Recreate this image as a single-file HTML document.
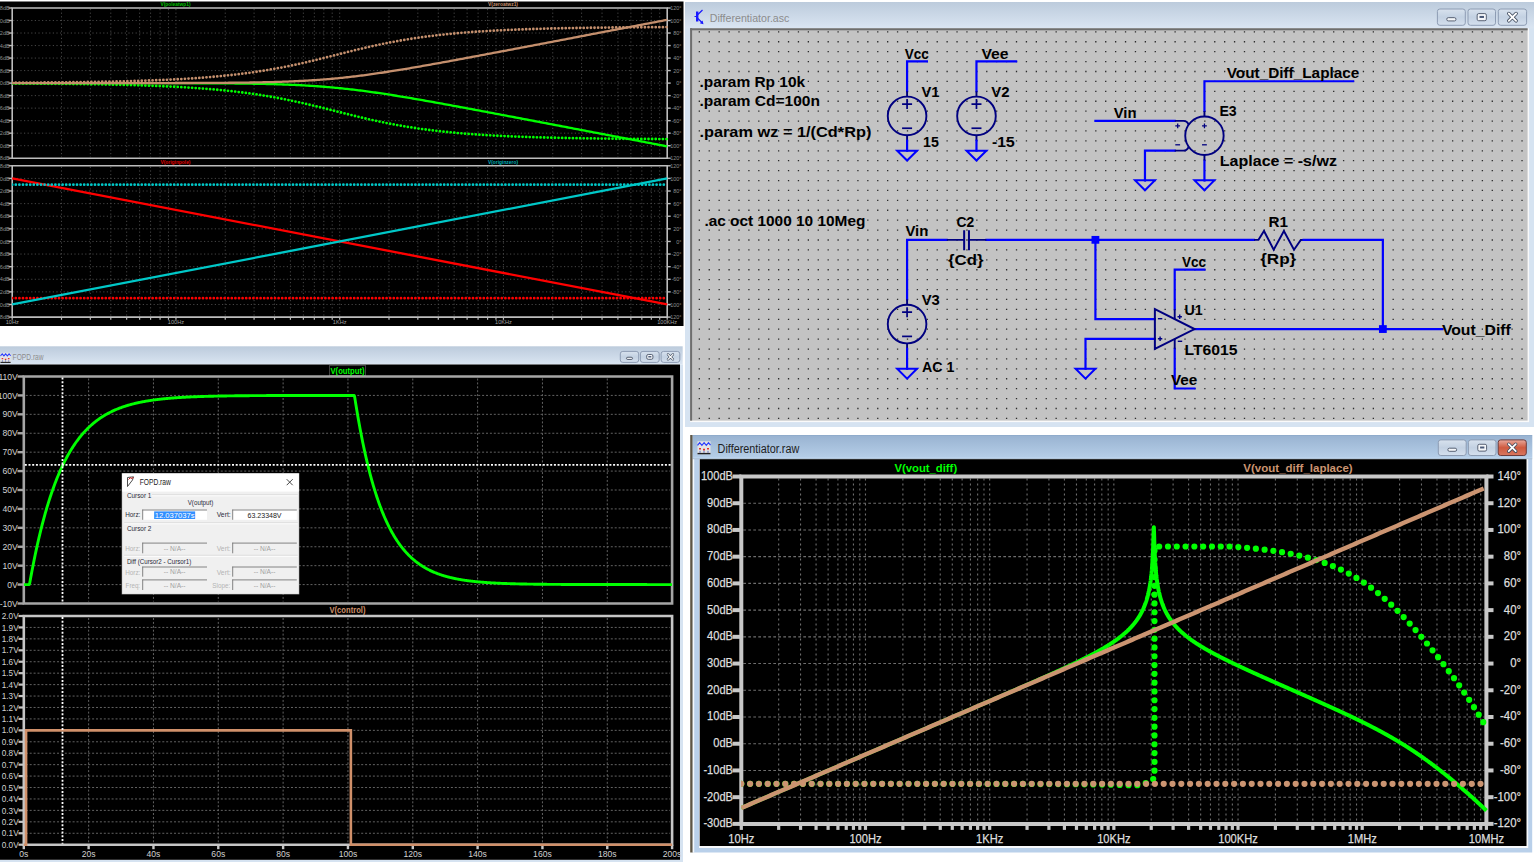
<!DOCTYPE html>
<html><head><meta charset="utf-8"><title>LTspice</title>
<style>html,body{margin:0;padding:0;background:#fff;overflow:hidden;width:1536px;height:864px}svg{display:block;font-family:"Liberation Sans",sans-serif}</style>
</head><body>
<svg width="1536" height="864" viewBox="0 0 1536 864" font-family="'Liberation Sans', sans-serif"><defs>
<linearGradient id="tb" x1="0" y1="0" x2="0" y2="1"><stop offset="0" stop-color="#bccbdc"/><stop offset="1" stop-color="#dae5f2"/></linearGradient>
<linearGradient id="tba" x1="0" y1="0" x2="0" y2="1"><stop offset="0" stop-color="#8aa7c8"/><stop offset="0.06" stop-color="#9ab4d2"/><stop offset="0.9" stop-color="#b4cde7"/><stop offset="0.94" stop-color="#bcd5ef"/><stop offset="1" stop-color="#a8b8c8"/></linearGradient>
<linearGradient id="btn" x1="0" y1="0" x2="0" y2="1"><stop offset="0" stop-color="#d8e2ee"/><stop offset="0.5" stop-color="#c3d1e2"/><stop offset="1" stop-color="#d5e0ee"/></linearGradient>
<linearGradient id="btnr" x1="0" y1="0" x2="0" y2="1"><stop offset="0" stop-color="#e9a99c"/><stop offset="0.5" stop-color="#cf5a3f"/><stop offset="1" stop-color="#d87760"/></linearGradient>
<clipPath id="cTL1"><rect x="12" y="7" width="656" height="152"/></clipPath>
<clipPath id="cTL2"><rect x="12" y="165" width="656" height="153"/></clipPath>
<clipPath id="cBR"><rect x="741" y="474" width="747" height="352"/></clipPath>
<pattern id="dots" x="698.93" y="31.69" width="9.912" height="9.912" patternUnits="userSpaceOnUse"><rect x="-0.9" y="-0.9" width="1.8" height="1.8" fill="#2b2b2b"/></pattern>
</defs>
<rect x="0" y="0" width="1536" height="864" fill="#ffffff"/>
<rect x="0" y="1.5" width="683.5" height="324.5" fill="#000000"/>
<line x1="13.2" y1="20.52" x2="666.2" y2="20.52" stroke="#4e4e4e" stroke-width="0.9" stroke-dasharray="1.2 2.4"/>
<line x1="13.2" y1="33.03" x2="666.2" y2="33.03" stroke="#4e4e4e" stroke-width="0.9" stroke-dasharray="1.2 2.4"/>
<line x1="13.2" y1="45.55" x2="666.2" y2="45.55" stroke="#4e4e4e" stroke-width="0.9" stroke-dasharray="1.2 2.4"/>
<line x1="13.2" y1="58.07" x2="666.2" y2="58.07" stroke="#4e4e4e" stroke-width="0.9" stroke-dasharray="1.2 2.4"/>
<line x1="13.2" y1="70.58" x2="666.2" y2="70.58" stroke="#4e4e4e" stroke-width="0.9" stroke-dasharray="1.2 2.4"/>
<line x1="13.2" y1="83.1" x2="666.2" y2="83.1" stroke="#4e4e4e" stroke-width="0.9" stroke-dasharray="1.2 2.4"/>
<line x1="13.2" y1="95.62" x2="666.2" y2="95.62" stroke="#4e4e4e" stroke-width="0.9" stroke-dasharray="1.2 2.4"/>
<line x1="13.2" y1="108.13" x2="666.2" y2="108.13" stroke="#4e4e4e" stroke-width="0.9" stroke-dasharray="1.2 2.4"/>
<line x1="13.2" y1="120.65" x2="666.2" y2="120.65" stroke="#4e4e4e" stroke-width="0.9" stroke-dasharray="1.2 2.4"/>
<line x1="13.2" y1="133.17" x2="666.2" y2="133.17" stroke="#4e4e4e" stroke-width="0.9" stroke-dasharray="1.2 2.4"/>
<line x1="13.2" y1="145.68" x2="666.2" y2="145.68" stroke="#4e4e4e" stroke-width="0.9" stroke-dasharray="1.2 2.4"/>
<line x1="61.49" y1="9" x2="61.49" y2="157.2" stroke="#4e4e4e" stroke-width="0.9" stroke-dasharray="1.2 2.4"/>
<line x1="90.33" y1="9" x2="90.33" y2="157.2" stroke="#4e4e4e" stroke-width="0.9" stroke-dasharray="1.2 2.4"/>
<line x1="110.79" y1="9" x2="110.79" y2="157.2" stroke="#4e4e4e" stroke-width="0.9" stroke-dasharray="1.2 2.4"/>
<line x1="126.66" y1="9" x2="126.66" y2="157.2" stroke="#4e4e4e" stroke-width="0.9" stroke-dasharray="1.2 2.4"/>
<line x1="139.62" y1="9" x2="139.62" y2="157.2" stroke="#4e4e4e" stroke-width="0.9" stroke-dasharray="1.2 2.4"/>
<line x1="150.58" y1="9" x2="150.58" y2="157.2" stroke="#4e4e4e" stroke-width="0.9" stroke-dasharray="1.2 2.4"/>
<line x1="160.08" y1="9" x2="160.08" y2="157.2" stroke="#4e4e4e" stroke-width="0.9" stroke-dasharray="1.2 2.4"/>
<line x1="168.46" y1="9" x2="168.46" y2="157.2" stroke="#4e4e4e" stroke-width="0.9" stroke-dasharray="1.2 2.4"/>
<line x1="175.95" y1="9" x2="175.95" y2="157.2" stroke="#4e4e4e" stroke-width="0.9" stroke-dasharray="1.2 2.4"/>
<line x1="225.24" y1="9" x2="225.24" y2="157.2" stroke="#4e4e4e" stroke-width="0.9" stroke-dasharray="1.2 2.4"/>
<line x1="254.08" y1="9" x2="254.08" y2="157.2" stroke="#4e4e4e" stroke-width="0.9" stroke-dasharray="1.2 2.4"/>
<line x1="274.54" y1="9" x2="274.54" y2="157.2" stroke="#4e4e4e" stroke-width="0.9" stroke-dasharray="1.2 2.4"/>
<line x1="290.41" y1="9" x2="290.41" y2="157.2" stroke="#4e4e4e" stroke-width="0.9" stroke-dasharray="1.2 2.4"/>
<line x1="303.37" y1="9" x2="303.37" y2="157.2" stroke="#4e4e4e" stroke-width="0.9" stroke-dasharray="1.2 2.4"/>
<line x1="314.33" y1="9" x2="314.33" y2="157.2" stroke="#4e4e4e" stroke-width="0.9" stroke-dasharray="1.2 2.4"/>
<line x1="323.83" y1="9" x2="323.83" y2="157.2" stroke="#4e4e4e" stroke-width="0.9" stroke-dasharray="1.2 2.4"/>
<line x1="332.21" y1="9" x2="332.21" y2="157.2" stroke="#4e4e4e" stroke-width="0.9" stroke-dasharray="1.2 2.4"/>
<line x1="339.7" y1="9" x2="339.7" y2="157.2" stroke="#4e4e4e" stroke-width="0.9" stroke-dasharray="1.2 2.4"/>
<line x1="388.99" y1="9" x2="388.99" y2="157.2" stroke="#4e4e4e" stroke-width="0.9" stroke-dasharray="1.2 2.4"/>
<line x1="417.83" y1="9" x2="417.83" y2="157.2" stroke="#4e4e4e" stroke-width="0.9" stroke-dasharray="1.2 2.4"/>
<line x1="438.29" y1="9" x2="438.29" y2="157.2" stroke="#4e4e4e" stroke-width="0.9" stroke-dasharray="1.2 2.4"/>
<line x1="454.16" y1="9" x2="454.16" y2="157.2" stroke="#4e4e4e" stroke-width="0.9" stroke-dasharray="1.2 2.4"/>
<line x1="467.12" y1="9" x2="467.12" y2="157.2" stroke="#4e4e4e" stroke-width="0.9" stroke-dasharray="1.2 2.4"/>
<line x1="478.08" y1="9" x2="478.08" y2="157.2" stroke="#4e4e4e" stroke-width="0.9" stroke-dasharray="1.2 2.4"/>
<line x1="487.58" y1="9" x2="487.58" y2="157.2" stroke="#4e4e4e" stroke-width="0.9" stroke-dasharray="1.2 2.4"/>
<line x1="495.96" y1="9" x2="495.96" y2="157.2" stroke="#4e4e4e" stroke-width="0.9" stroke-dasharray="1.2 2.4"/>
<line x1="503.45" y1="9" x2="503.45" y2="157.2" stroke="#4e4e4e" stroke-width="0.9" stroke-dasharray="1.2 2.4"/>
<line x1="552.74" y1="9" x2="552.74" y2="157.2" stroke="#4e4e4e" stroke-width="0.9" stroke-dasharray="1.2 2.4"/>
<line x1="581.58" y1="9" x2="581.58" y2="157.2" stroke="#4e4e4e" stroke-width="0.9" stroke-dasharray="1.2 2.4"/>
<line x1="602.04" y1="9" x2="602.04" y2="157.2" stroke="#4e4e4e" stroke-width="0.9" stroke-dasharray="1.2 2.4"/>
<line x1="617.91" y1="9" x2="617.91" y2="157.2" stroke="#4e4e4e" stroke-width="0.9" stroke-dasharray="1.2 2.4"/>
<line x1="630.87" y1="9" x2="630.87" y2="157.2" stroke="#4e4e4e" stroke-width="0.9" stroke-dasharray="1.2 2.4"/>
<line x1="641.83" y1="9" x2="641.83" y2="157.2" stroke="#4e4e4e" stroke-width="0.9" stroke-dasharray="1.2 2.4"/>
<line x1="651.33" y1="9" x2="651.33" y2="157.2" stroke="#4e4e4e" stroke-width="0.9" stroke-dasharray="1.2 2.4"/>
<line x1="659.71" y1="9" x2="659.71" y2="157.2" stroke="#4e4e4e" stroke-width="0.9" stroke-dasharray="1.2 2.4"/>
<path d="M12.2,8 H667.2 V158.2 H12.2 Z" fill="none" stroke="#bdbdbd" stroke-width="1.6"/>
<line x1="8.5" y1="8" x2="12.2" y2="8" stroke="#bdbdbd" stroke-width="1.4"/>
<line x1="667.2" y1="8" x2="670.7" y2="8" stroke="#bdbdbd" stroke-width="1.4"/>
<line x1="8.5" y1="20.52" x2="12.2" y2="20.52" stroke="#bdbdbd" stroke-width="1.4"/>
<line x1="667.2" y1="20.52" x2="670.7" y2="20.52" stroke="#bdbdbd" stroke-width="1.4"/>
<line x1="8.5" y1="33.03" x2="12.2" y2="33.03" stroke="#bdbdbd" stroke-width="1.4"/>
<line x1="667.2" y1="33.03" x2="670.7" y2="33.03" stroke="#bdbdbd" stroke-width="1.4"/>
<line x1="8.5" y1="45.55" x2="12.2" y2="45.55" stroke="#bdbdbd" stroke-width="1.4"/>
<line x1="667.2" y1="45.55" x2="670.7" y2="45.55" stroke="#bdbdbd" stroke-width="1.4"/>
<line x1="8.5" y1="58.07" x2="12.2" y2="58.07" stroke="#bdbdbd" stroke-width="1.4"/>
<line x1="667.2" y1="58.07" x2="670.7" y2="58.07" stroke="#bdbdbd" stroke-width="1.4"/>
<line x1="8.5" y1="70.58" x2="12.2" y2="70.58" stroke="#bdbdbd" stroke-width="1.4"/>
<line x1="667.2" y1="70.58" x2="670.7" y2="70.58" stroke="#bdbdbd" stroke-width="1.4"/>
<line x1="8.5" y1="83.1" x2="12.2" y2="83.1" stroke="#bdbdbd" stroke-width="1.4"/>
<line x1="667.2" y1="83.1" x2="670.7" y2="83.1" stroke="#bdbdbd" stroke-width="1.4"/>
<line x1="8.5" y1="95.62" x2="12.2" y2="95.62" stroke="#bdbdbd" stroke-width="1.4"/>
<line x1="667.2" y1="95.62" x2="670.7" y2="95.62" stroke="#bdbdbd" stroke-width="1.4"/>
<line x1="8.5" y1="108.13" x2="12.2" y2="108.13" stroke="#bdbdbd" stroke-width="1.4"/>
<line x1="667.2" y1="108.13" x2="670.7" y2="108.13" stroke="#bdbdbd" stroke-width="1.4"/>
<line x1="8.5" y1="120.65" x2="12.2" y2="120.65" stroke="#bdbdbd" stroke-width="1.4"/>
<line x1="667.2" y1="120.65" x2="670.7" y2="120.65" stroke="#bdbdbd" stroke-width="1.4"/>
<line x1="8.5" y1="133.17" x2="12.2" y2="133.17" stroke="#bdbdbd" stroke-width="1.4"/>
<line x1="667.2" y1="133.17" x2="670.7" y2="133.17" stroke="#bdbdbd" stroke-width="1.4"/>
<line x1="8.5" y1="145.68" x2="12.2" y2="145.68" stroke="#bdbdbd" stroke-width="1.4"/>
<line x1="667.2" y1="145.68" x2="670.7" y2="145.68" stroke="#bdbdbd" stroke-width="1.4"/>
<line x1="8.5" y1="158.2" x2="12.2" y2="158.2" stroke="#bdbdbd" stroke-width="1.4"/>
<line x1="667.2" y1="158.2" x2="670.7" y2="158.2" stroke="#bdbdbd" stroke-width="1.4"/>
<line x1="13.2" y1="178.41" x2="666.2" y2="178.41" stroke="#4e4e4e" stroke-width="0.9" stroke-dasharray="1.2 2.4"/>
<line x1="13.2" y1="191.02" x2="666.2" y2="191.02" stroke="#4e4e4e" stroke-width="0.9" stroke-dasharray="1.2 2.4"/>
<line x1="13.2" y1="203.62" x2="666.2" y2="203.62" stroke="#4e4e4e" stroke-width="0.9" stroke-dasharray="1.2 2.4"/>
<line x1="13.2" y1="216.23" x2="666.2" y2="216.23" stroke="#4e4e4e" stroke-width="0.9" stroke-dasharray="1.2 2.4"/>
<line x1="13.2" y1="228.84" x2="666.2" y2="228.84" stroke="#4e4e4e" stroke-width="0.9" stroke-dasharray="1.2 2.4"/>
<line x1="13.2" y1="241.45" x2="666.2" y2="241.45" stroke="#4e4e4e" stroke-width="0.9" stroke-dasharray="1.2 2.4"/>
<line x1="13.2" y1="254.06" x2="666.2" y2="254.06" stroke="#4e4e4e" stroke-width="0.9" stroke-dasharray="1.2 2.4"/>
<line x1="13.2" y1="266.67" x2="666.2" y2="266.67" stroke="#4e4e4e" stroke-width="0.9" stroke-dasharray="1.2 2.4"/>
<line x1="13.2" y1="279.28" x2="666.2" y2="279.28" stroke="#4e4e4e" stroke-width="0.9" stroke-dasharray="1.2 2.4"/>
<line x1="13.2" y1="291.88" x2="666.2" y2="291.88" stroke="#4e4e4e" stroke-width="0.9" stroke-dasharray="1.2 2.4"/>
<line x1="13.2" y1="304.49" x2="666.2" y2="304.49" stroke="#4e4e4e" stroke-width="0.9" stroke-dasharray="1.2 2.4"/>
<line x1="61.49" y1="166.8" x2="61.49" y2="316.1" stroke="#4e4e4e" stroke-width="0.9" stroke-dasharray="1.2 2.4"/>
<line x1="90.33" y1="166.8" x2="90.33" y2="316.1" stroke="#4e4e4e" stroke-width="0.9" stroke-dasharray="1.2 2.4"/>
<line x1="110.79" y1="166.8" x2="110.79" y2="316.1" stroke="#4e4e4e" stroke-width="0.9" stroke-dasharray="1.2 2.4"/>
<line x1="126.66" y1="166.8" x2="126.66" y2="316.1" stroke="#4e4e4e" stroke-width="0.9" stroke-dasharray="1.2 2.4"/>
<line x1="139.62" y1="166.8" x2="139.62" y2="316.1" stroke="#4e4e4e" stroke-width="0.9" stroke-dasharray="1.2 2.4"/>
<line x1="150.58" y1="166.8" x2="150.58" y2="316.1" stroke="#4e4e4e" stroke-width="0.9" stroke-dasharray="1.2 2.4"/>
<line x1="160.08" y1="166.8" x2="160.08" y2="316.1" stroke="#4e4e4e" stroke-width="0.9" stroke-dasharray="1.2 2.4"/>
<line x1="168.46" y1="166.8" x2="168.46" y2="316.1" stroke="#4e4e4e" stroke-width="0.9" stroke-dasharray="1.2 2.4"/>
<line x1="175.95" y1="166.8" x2="175.95" y2="316.1" stroke="#4e4e4e" stroke-width="0.9" stroke-dasharray="1.2 2.4"/>
<line x1="225.24" y1="166.8" x2="225.24" y2="316.1" stroke="#4e4e4e" stroke-width="0.9" stroke-dasharray="1.2 2.4"/>
<line x1="254.08" y1="166.8" x2="254.08" y2="316.1" stroke="#4e4e4e" stroke-width="0.9" stroke-dasharray="1.2 2.4"/>
<line x1="274.54" y1="166.8" x2="274.54" y2="316.1" stroke="#4e4e4e" stroke-width="0.9" stroke-dasharray="1.2 2.4"/>
<line x1="290.41" y1="166.8" x2="290.41" y2="316.1" stroke="#4e4e4e" stroke-width="0.9" stroke-dasharray="1.2 2.4"/>
<line x1="303.37" y1="166.8" x2="303.37" y2="316.1" stroke="#4e4e4e" stroke-width="0.9" stroke-dasharray="1.2 2.4"/>
<line x1="314.33" y1="166.8" x2="314.33" y2="316.1" stroke="#4e4e4e" stroke-width="0.9" stroke-dasharray="1.2 2.4"/>
<line x1="323.83" y1="166.8" x2="323.83" y2="316.1" stroke="#4e4e4e" stroke-width="0.9" stroke-dasharray="1.2 2.4"/>
<line x1="332.21" y1="166.8" x2="332.21" y2="316.1" stroke="#4e4e4e" stroke-width="0.9" stroke-dasharray="1.2 2.4"/>
<line x1="339.7" y1="166.8" x2="339.7" y2="316.1" stroke="#4e4e4e" stroke-width="0.9" stroke-dasharray="1.2 2.4"/>
<line x1="388.99" y1="166.8" x2="388.99" y2="316.1" stroke="#4e4e4e" stroke-width="0.9" stroke-dasharray="1.2 2.4"/>
<line x1="417.83" y1="166.8" x2="417.83" y2="316.1" stroke="#4e4e4e" stroke-width="0.9" stroke-dasharray="1.2 2.4"/>
<line x1="438.29" y1="166.8" x2="438.29" y2="316.1" stroke="#4e4e4e" stroke-width="0.9" stroke-dasharray="1.2 2.4"/>
<line x1="454.16" y1="166.8" x2="454.16" y2="316.1" stroke="#4e4e4e" stroke-width="0.9" stroke-dasharray="1.2 2.4"/>
<line x1="467.12" y1="166.8" x2="467.12" y2="316.1" stroke="#4e4e4e" stroke-width="0.9" stroke-dasharray="1.2 2.4"/>
<line x1="478.08" y1="166.8" x2="478.08" y2="316.1" stroke="#4e4e4e" stroke-width="0.9" stroke-dasharray="1.2 2.4"/>
<line x1="487.58" y1="166.8" x2="487.58" y2="316.1" stroke="#4e4e4e" stroke-width="0.9" stroke-dasharray="1.2 2.4"/>
<line x1="495.96" y1="166.8" x2="495.96" y2="316.1" stroke="#4e4e4e" stroke-width="0.9" stroke-dasharray="1.2 2.4"/>
<line x1="503.45" y1="166.8" x2="503.45" y2="316.1" stroke="#4e4e4e" stroke-width="0.9" stroke-dasharray="1.2 2.4"/>
<line x1="552.74" y1="166.8" x2="552.74" y2="316.1" stroke="#4e4e4e" stroke-width="0.9" stroke-dasharray="1.2 2.4"/>
<line x1="581.58" y1="166.8" x2="581.58" y2="316.1" stroke="#4e4e4e" stroke-width="0.9" stroke-dasharray="1.2 2.4"/>
<line x1="602.04" y1="166.8" x2="602.04" y2="316.1" stroke="#4e4e4e" stroke-width="0.9" stroke-dasharray="1.2 2.4"/>
<line x1="617.91" y1="166.8" x2="617.91" y2="316.1" stroke="#4e4e4e" stroke-width="0.9" stroke-dasharray="1.2 2.4"/>
<line x1="630.87" y1="166.8" x2="630.87" y2="316.1" stroke="#4e4e4e" stroke-width="0.9" stroke-dasharray="1.2 2.4"/>
<line x1="641.83" y1="166.8" x2="641.83" y2="316.1" stroke="#4e4e4e" stroke-width="0.9" stroke-dasharray="1.2 2.4"/>
<line x1="651.33" y1="166.8" x2="651.33" y2="316.1" stroke="#4e4e4e" stroke-width="0.9" stroke-dasharray="1.2 2.4"/>
<line x1="659.71" y1="166.8" x2="659.71" y2="316.1" stroke="#4e4e4e" stroke-width="0.9" stroke-dasharray="1.2 2.4"/>
<path d="M12.2,165.8 H667.2 V317.1 H12.2 Z" fill="none" stroke="#bdbdbd" stroke-width="1.6"/>
<line x1="8.5" y1="165.8" x2="12.2" y2="165.8" stroke="#bdbdbd" stroke-width="1.4"/>
<line x1="667.2" y1="165.8" x2="670.7" y2="165.8" stroke="#bdbdbd" stroke-width="1.4"/>
<line x1="8.5" y1="178.41" x2="12.2" y2="178.41" stroke="#bdbdbd" stroke-width="1.4"/>
<line x1="667.2" y1="178.41" x2="670.7" y2="178.41" stroke="#bdbdbd" stroke-width="1.4"/>
<line x1="8.5" y1="191.02" x2="12.2" y2="191.02" stroke="#bdbdbd" stroke-width="1.4"/>
<line x1="667.2" y1="191.02" x2="670.7" y2="191.02" stroke="#bdbdbd" stroke-width="1.4"/>
<line x1="8.5" y1="203.62" x2="12.2" y2="203.62" stroke="#bdbdbd" stroke-width="1.4"/>
<line x1="667.2" y1="203.62" x2="670.7" y2="203.62" stroke="#bdbdbd" stroke-width="1.4"/>
<line x1="8.5" y1="216.23" x2="12.2" y2="216.23" stroke="#bdbdbd" stroke-width="1.4"/>
<line x1="667.2" y1="216.23" x2="670.7" y2="216.23" stroke="#bdbdbd" stroke-width="1.4"/>
<line x1="8.5" y1="228.84" x2="12.2" y2="228.84" stroke="#bdbdbd" stroke-width="1.4"/>
<line x1="667.2" y1="228.84" x2="670.7" y2="228.84" stroke="#bdbdbd" stroke-width="1.4"/>
<line x1="8.5" y1="241.45" x2="12.2" y2="241.45" stroke="#bdbdbd" stroke-width="1.4"/>
<line x1="667.2" y1="241.45" x2="670.7" y2="241.45" stroke="#bdbdbd" stroke-width="1.4"/>
<line x1="8.5" y1="254.06" x2="12.2" y2="254.06" stroke="#bdbdbd" stroke-width="1.4"/>
<line x1="667.2" y1="254.06" x2="670.7" y2="254.06" stroke="#bdbdbd" stroke-width="1.4"/>
<line x1="8.5" y1="266.67" x2="12.2" y2="266.67" stroke="#bdbdbd" stroke-width="1.4"/>
<line x1="667.2" y1="266.67" x2="670.7" y2="266.67" stroke="#bdbdbd" stroke-width="1.4"/>
<line x1="8.5" y1="279.28" x2="12.2" y2="279.28" stroke="#bdbdbd" stroke-width="1.4"/>
<line x1="667.2" y1="279.28" x2="670.7" y2="279.28" stroke="#bdbdbd" stroke-width="1.4"/>
<line x1="8.5" y1="291.88" x2="12.2" y2="291.88" stroke="#bdbdbd" stroke-width="1.4"/>
<line x1="667.2" y1="291.88" x2="670.7" y2="291.88" stroke="#bdbdbd" stroke-width="1.4"/>
<line x1="8.5" y1="304.49" x2="12.2" y2="304.49" stroke="#bdbdbd" stroke-width="1.4"/>
<line x1="667.2" y1="304.49" x2="670.7" y2="304.49" stroke="#bdbdbd" stroke-width="1.4"/>
<line x1="8.5" y1="317.1" x2="12.2" y2="317.1" stroke="#bdbdbd" stroke-width="1.4"/>
<line x1="667.2" y1="317.1" x2="670.7" y2="317.1" stroke="#bdbdbd" stroke-width="1.4"/>
<line x1="12.2" y1="317.1" x2="12.2" y2="319.8" stroke="#bdbdbd" stroke-width="1.2"/>
<line x1="61.49" y1="317.1" x2="61.49" y2="319.8" stroke="#bdbdbd" stroke-width="1.2"/>
<line x1="90.33" y1="317.1" x2="90.33" y2="319.8" stroke="#bdbdbd" stroke-width="1.2"/>
<line x1="110.79" y1="317.1" x2="110.79" y2="319.8" stroke="#bdbdbd" stroke-width="1.2"/>
<line x1="126.66" y1="317.1" x2="126.66" y2="319.8" stroke="#bdbdbd" stroke-width="1.2"/>
<line x1="139.62" y1="317.1" x2="139.62" y2="319.8" stroke="#bdbdbd" stroke-width="1.2"/>
<line x1="150.58" y1="317.1" x2="150.58" y2="319.8" stroke="#bdbdbd" stroke-width="1.2"/>
<line x1="160.08" y1="317.1" x2="160.08" y2="319.8" stroke="#bdbdbd" stroke-width="1.2"/>
<line x1="168.46" y1="317.1" x2="168.46" y2="319.8" stroke="#bdbdbd" stroke-width="1.2"/>
<line x1="175.95" y1="317.1" x2="175.95" y2="319.8" stroke="#bdbdbd" stroke-width="1.2"/>
<line x1="225.24" y1="317.1" x2="225.24" y2="319.8" stroke="#bdbdbd" stroke-width="1.2"/>
<line x1="254.08" y1="317.1" x2="254.08" y2="319.8" stroke="#bdbdbd" stroke-width="1.2"/>
<line x1="274.54" y1="317.1" x2="274.54" y2="319.8" stroke="#bdbdbd" stroke-width="1.2"/>
<line x1="290.41" y1="317.1" x2="290.41" y2="319.8" stroke="#bdbdbd" stroke-width="1.2"/>
<line x1="303.37" y1="317.1" x2="303.37" y2="319.8" stroke="#bdbdbd" stroke-width="1.2"/>
<line x1="314.33" y1="317.1" x2="314.33" y2="319.8" stroke="#bdbdbd" stroke-width="1.2"/>
<line x1="323.83" y1="317.1" x2="323.83" y2="319.8" stroke="#bdbdbd" stroke-width="1.2"/>
<line x1="332.21" y1="317.1" x2="332.21" y2="319.8" stroke="#bdbdbd" stroke-width="1.2"/>
<line x1="339.7" y1="317.1" x2="339.7" y2="319.8" stroke="#bdbdbd" stroke-width="1.2"/>
<line x1="388.99" y1="317.1" x2="388.99" y2="319.8" stroke="#bdbdbd" stroke-width="1.2"/>
<line x1="417.83" y1="317.1" x2="417.83" y2="319.8" stroke="#bdbdbd" stroke-width="1.2"/>
<line x1="438.29" y1="317.1" x2="438.29" y2="319.8" stroke="#bdbdbd" stroke-width="1.2"/>
<line x1="454.16" y1="317.1" x2="454.16" y2="319.8" stroke="#bdbdbd" stroke-width="1.2"/>
<line x1="467.12" y1="317.1" x2="467.12" y2="319.8" stroke="#bdbdbd" stroke-width="1.2"/>
<line x1="478.08" y1="317.1" x2="478.08" y2="319.8" stroke="#bdbdbd" stroke-width="1.2"/>
<line x1="487.58" y1="317.1" x2="487.58" y2="319.8" stroke="#bdbdbd" stroke-width="1.2"/>
<line x1="495.96" y1="317.1" x2="495.96" y2="319.8" stroke="#bdbdbd" stroke-width="1.2"/>
<line x1="503.45" y1="317.1" x2="503.45" y2="319.8" stroke="#bdbdbd" stroke-width="1.2"/>
<line x1="552.74" y1="317.1" x2="552.74" y2="319.8" stroke="#bdbdbd" stroke-width="1.2"/>
<line x1="581.58" y1="317.1" x2="581.58" y2="319.8" stroke="#bdbdbd" stroke-width="1.2"/>
<line x1="602.04" y1="317.1" x2="602.04" y2="319.8" stroke="#bdbdbd" stroke-width="1.2"/>
<line x1="617.91" y1="317.1" x2="617.91" y2="319.8" stroke="#bdbdbd" stroke-width="1.2"/>
<line x1="630.87" y1="317.1" x2="630.87" y2="319.8" stroke="#bdbdbd" stroke-width="1.2"/>
<line x1="641.83" y1="317.1" x2="641.83" y2="319.8" stroke="#bdbdbd" stroke-width="1.2"/>
<line x1="651.33" y1="317.1" x2="651.33" y2="319.8" stroke="#bdbdbd" stroke-width="1.2"/>
<line x1="659.71" y1="317.1" x2="659.71" y2="319.8" stroke="#bdbdbd" stroke-width="1.2"/>
<line x1="667.2" y1="317.1" x2="667.2" y2="319.8" stroke="#bdbdbd" stroke-width="1.2"/>
<text x="9.8" y="10.1" font-size="5.6" fill="#8e8e8e" text-anchor="end">48dB</text>
<text x="681.5" y="10.1" font-size="5.4" fill="#8e8e8e" text-anchor="end">120°</text>
<text x="9.8" y="22.62" font-size="5.6" fill="#8e8e8e" text-anchor="end">40dB</text>
<text x="681.5" y="22.62" font-size="5.4" fill="#8e8e8e" text-anchor="end">100°</text>
<text x="9.8" y="35.13" font-size="5.6" fill="#8e8e8e" text-anchor="end">32dB</text>
<text x="681.5" y="35.13" font-size="5.4" fill="#8e8e8e" text-anchor="end">80°</text>
<text x="9.8" y="47.65" font-size="5.6" fill="#8e8e8e" text-anchor="end">24dB</text>
<text x="681.5" y="47.65" font-size="5.4" fill="#8e8e8e" text-anchor="end">60°</text>
<text x="9.8" y="60.17" font-size="5.6" fill="#8e8e8e" text-anchor="end">16dB</text>
<text x="681.5" y="60.17" font-size="5.4" fill="#8e8e8e" text-anchor="end">40°</text>
<text x="9.8" y="72.68" font-size="5.6" fill="#8e8e8e" text-anchor="end">8dB</text>
<text x="681.5" y="72.68" font-size="5.4" fill="#8e8e8e" text-anchor="end">20°</text>
<text x="9.8" y="85.2" font-size="5.6" fill="#8e8e8e" text-anchor="end">0dB</text>
<text x="681.5" y="85.2" font-size="5.4" fill="#8e8e8e" text-anchor="end">0°</text>
<text x="9.8" y="97.72" font-size="5.6" fill="#8e8e8e" text-anchor="end">-8dB</text>
<text x="681.5" y="97.72" font-size="5.4" fill="#8e8e8e" text-anchor="end">-20°</text>
<text x="9.8" y="110.23" font-size="5.6" fill="#8e8e8e" text-anchor="end">-16dB</text>
<text x="681.5" y="110.23" font-size="5.4" fill="#8e8e8e" text-anchor="end">-40°</text>
<text x="9.8" y="122.75" font-size="5.6" fill="#8e8e8e" text-anchor="end">-24dB</text>
<text x="681.5" y="122.75" font-size="5.4" fill="#8e8e8e" text-anchor="end">-60°</text>
<text x="9.8" y="135.27" font-size="5.6" fill="#8e8e8e" text-anchor="end">-32dB</text>
<text x="681.5" y="135.27" font-size="5.4" fill="#8e8e8e" text-anchor="end">-80°</text>
<text x="9.8" y="147.78" font-size="5.6" fill="#8e8e8e" text-anchor="end">-40dB</text>
<text x="681.5" y="147.78" font-size="5.4" fill="#8e8e8e" text-anchor="end">-100°</text>
<text x="9.8" y="160.3" font-size="5.6" fill="#8e8e8e" text-anchor="end">-48dB</text>
<text x="681.5" y="160.3" font-size="5.4" fill="#8e8e8e" text-anchor="end">-120°</text>
<text x="9.8" y="167.9" font-size="5.6" fill="#8e8e8e" text-anchor="end">48dB</text>
<text x="681.5" y="167.9" font-size="5.4" fill="#8e8e8e" text-anchor="end">120°</text>
<text x="9.8" y="180.51" font-size="5.6" fill="#8e8e8e" text-anchor="end">40dB</text>
<text x="681.5" y="180.51" font-size="5.4" fill="#8e8e8e" text-anchor="end">100°</text>
<text x="9.8" y="193.12" font-size="5.6" fill="#8e8e8e" text-anchor="end">32dB</text>
<text x="681.5" y="193.12" font-size="5.4" fill="#8e8e8e" text-anchor="end">80°</text>
<text x="9.8" y="205.72" font-size="5.6" fill="#8e8e8e" text-anchor="end">24dB</text>
<text x="681.5" y="205.72" font-size="5.4" fill="#8e8e8e" text-anchor="end">60°</text>
<text x="9.8" y="218.33" font-size="5.6" fill="#8e8e8e" text-anchor="end">16dB</text>
<text x="681.5" y="218.33" font-size="5.4" fill="#8e8e8e" text-anchor="end">40°</text>
<text x="9.8" y="230.94" font-size="5.6" fill="#8e8e8e" text-anchor="end">8dB</text>
<text x="681.5" y="230.94" font-size="5.4" fill="#8e8e8e" text-anchor="end">20°</text>
<text x="9.8" y="243.55" font-size="5.6" fill="#8e8e8e" text-anchor="end">0dB</text>
<text x="681.5" y="243.55" font-size="5.4" fill="#8e8e8e" text-anchor="end">0°</text>
<text x="9.8" y="256.16" font-size="5.6" fill="#8e8e8e" text-anchor="end">-8dB</text>
<text x="681.5" y="256.16" font-size="5.4" fill="#8e8e8e" text-anchor="end">-20°</text>
<text x="9.8" y="268.77" font-size="5.6" fill="#8e8e8e" text-anchor="end">-16dB</text>
<text x="681.5" y="268.77" font-size="5.4" fill="#8e8e8e" text-anchor="end">-40°</text>
<text x="9.8" y="281.38" font-size="5.6" fill="#8e8e8e" text-anchor="end">-24dB</text>
<text x="681.5" y="281.38" font-size="5.4" fill="#8e8e8e" text-anchor="end">-60°</text>
<text x="9.8" y="293.98" font-size="5.6" fill="#8e8e8e" text-anchor="end">-32dB</text>
<text x="681.5" y="293.98" font-size="5.4" fill="#8e8e8e" text-anchor="end">-80°</text>
<text x="9.8" y="306.59" font-size="5.6" fill="#8e8e8e" text-anchor="end">-40dB</text>
<text x="681.5" y="306.59" font-size="5.4" fill="#8e8e8e" text-anchor="end">-100°</text>
<text x="9.8" y="319.2" font-size="5.6" fill="#8e8e8e" text-anchor="end">-48dB</text>
<text x="681.5" y="319.2" font-size="5.4" fill="#8e8e8e" text-anchor="end">-120°</text>
<text x="12.2" y="324" font-size="5.6" fill="#a0a0a0" text-anchor="middle">10Hz</text>
<text x="175.95" y="324" font-size="5.6" fill="#a0a0a0" text-anchor="middle">100Hz</text>
<text x="339.7" y="324" font-size="5.6" fill="#a0a0a0" text-anchor="middle">1KHz</text>
<text x="503.45" y="324" font-size="5.6" fill="#a0a0a0" text-anchor="middle">10KHz</text>
<text x="667.2" y="324" font-size="5.6" fill="#a0a0a0" text-anchor="middle">100KHz</text>
<text x="175.5" y="6.2" font-size="5.8" fill="#00c000" text-anchor="middle" font-weight="bold" textLength="30" lengthAdjust="spacingAndGlyphs">V(poleatwp1)</text>
<text x="503" y="6.2" font-size="5.8" fill="#c89270" text-anchor="middle" font-weight="bold" textLength="30" lengthAdjust="spacingAndGlyphs">V(zeroatwz1)</text>
<text x="175.5" y="164.2" font-size="5.8" fill="#e00000" text-anchor="middle" font-weight="bold" textLength="30" lengthAdjust="spacingAndGlyphs">V(originpole)</text>
<text x="503" y="164.2" font-size="5.8" fill="#00b0b8" text-anchor="middle" font-weight="bold" textLength="30" lengthAdjust="spacingAndGlyphs">V(originzero)</text>
<g clip-path="url(#cTL1)">
<path d="M12.2,83.1 13.84,83.1 15.48,83.1 17.12,83.1 18.77,83.1 20.41,83.1 22.05,83.1 23.69,83.1 25.33,83.1 26.97,83.1 28.62,83.1 30.26,83.1 31.9,83.1 33.54,83.1 35.18,83.1 36.82,83.1 38.47,83.1 40.11,83.1 41.75,83.1 43.39,83.1 45.03,83.1 46.67,83.1 48.32,83.1 49.96,83.1 51.6,83.1 53.24,83.1 54.88,83.1 56.52,83.1 58.16,83.1 59.81,83.1 61.45,83.1 63.09,83.1 64.73,83.1 66.37,83.1 68.01,83.1 69.66,83.1 71.3,83.1 72.94,83.1 74.58,83.1 76.22,83.1 77.86,83.1 79.51,83.1 81.15,83.11 82.79,83.11 84.43,83.11 86.07,83.11 87.71,83.11 89.36,83.11 91,83.11 92.64,83.11 94.28,83.11 95.92,83.11 97.56,83.11 99.21,83.11 100.85,83.11 102.49,83.11 104.13,83.11 105.77,83.11 107.41,83.11 109.05,83.11 110.7,83.11 112.34,83.11 113.98,83.11 115.62,83.11 117.26,83.11 118.9,83.12 120.55,83.12 122.19,83.12 123.83,83.12 125.47,83.12 127.11,83.12 128.75,83.12 130.4,83.12 132.04,83.12 133.68,83.12 135.32,83.12 136.96,83.13 138.6,83.13 140.25,83.13 141.89,83.13 143.53,83.13 145.17,83.13 146.81,83.13 148.45,83.13 150.09,83.14 151.74,83.14 153.38,83.14 155.02,83.14 156.66,83.14 158.3,83.15 159.94,83.15 161.59,83.15 163.23,83.15 164.87,83.15 166.51,83.16 168.15,83.16 169.79,83.16 171.44,83.17 173.08,83.17 174.72,83.17 176.36,83.18 178,83.18 179.64,83.18 181.29,83.19 182.93,83.19 184.57,83.2 186.21,83.2 187.85,83.2 189.49,83.21 191.13,83.21 192.78,83.22 194.42,83.23 196.06,83.23 197.7,83.24 199.34,83.24 200.98,83.25 202.63,83.26 204.27,83.26 205.91,83.27 207.55,83.28 209.19,83.29 210.83,83.3 212.48,83.31 214.12,83.32 215.76,83.33 217.4,83.34 219.04,83.35 220.68,83.36 222.33,83.37 223.97,83.38 225.61,83.4 227.25,83.41 228.89,83.43 230.53,83.44 232.17,83.46 233.82,83.47 235.46,83.49 237.1,83.51 238.74,83.53 240.38,83.55 242.02,83.57 243.67,83.59 245.31,83.61 246.95,83.63 248.59,83.66 250.23,83.68 251.87,83.71 253.52,83.74 255.16,83.76 256.8,83.79 258.44,83.83 260.08,83.86 261.72,83.89 263.37,83.93 265.01,83.96 266.65,84 268.29,84.04 269.93,84.08 271.57,84.13 273.22,84.17 274.86,84.22 276.5,84.27 278.14,84.32 279.78,84.37 281.42,84.42 283.06,84.48 284.71,84.54 286.35,84.6 287.99,84.66 289.63,84.73 291.27,84.8 292.91,84.87 294.56,84.94 296.2,85.02 297.84,85.1 299.48,85.18 301.12,85.26 302.76,85.35 304.41,85.44 306.05,85.53 307.69,85.63 309.33,85.73 310.97,85.83 312.61,85.93 314.26,86.04 315.9,86.15 317.54,86.27 319.18,86.39 320.82,86.51 322.46,86.63 324.1,86.76 325.75,86.9 327.39,87.03 329.03,87.17 330.67,87.32 332.31,87.46 333.95,87.61 335.6,87.77 337.24,87.92 338.88,88.09 340.52,88.25 342.16,88.42 343.8,88.59 345.45,88.77 347.09,88.95 348.73,89.13 350.37,89.31 352.01,89.5 353.65,89.7 355.3,89.89 356.94,90.09 358.58,90.3 360.22,90.5 361.86,90.71 363.5,90.93 365.14,91.14 366.79,91.36 368.43,91.58 370.07,91.81 371.71,92.04 373.35,92.27 374.99,92.5 376.64,92.74 378.28,92.98 379.92,93.22 381.56,93.46 383.2,93.71 384.84,93.96 386.49,94.21 388.13,94.46 389.77,94.72 391.41,94.98 393.05,95.24 394.69,95.5 396.34,95.76 397.98,96.03 399.62,96.3 401.26,96.57 402.9,96.84 404.54,97.11 406.18,97.39 407.83,97.66 409.47,97.94 411.11,98.22 412.75,98.5 414.39,98.78 416.03,99.07 417.68,99.35 419.32,99.64 420.96,99.92 422.6,100.21 424.24,100.5 425.88,100.79 427.53,101.08 429.17,101.37 430.81,101.66 432.45,101.96 434.09,102.25 435.73,102.55 437.38,102.84 439.02,103.14 440.66,103.44 442.3,103.74 443.94,104.04 445.58,104.34 447.23,104.64 448.87,104.94 450.51,105.24 452.15,105.54 453.79,105.84 455.43,106.15 457.07,106.45 458.72,106.75 460.36,107.06 462,107.36 463.64,107.67 465.28,107.97 466.92,108.28 468.57,108.58 470.21,108.89 471.85,109.2 473.49,109.5 475.13,109.81 476.77,110.12 478.42,110.43 480.06,110.74 481.7,111.04 483.34,111.35 484.98,111.66 486.62,111.97 488.27,112.28 489.91,112.59 491.55,112.9 493.19,113.21 494.83,113.52 496.47,113.83 498.11,114.14 499.76,114.45 501.4,114.76 503.04,115.07 504.68,115.38 506.32,115.69 507.96,116.01 509.61,116.32 511.25,116.63 512.89,116.94 514.53,117.25 516.17,117.56 517.81,117.87 519.46,118.19 521.1,118.5 522.74,118.81 524.38,119.12 526.02,119.43 527.66,119.75 529.31,120.06 530.95,120.37 532.59,120.68 534.23,121 535.87,121.31 537.51,121.62 539.15,121.93 540.8,122.25 542.44,122.56 544.08,122.87 545.72,123.19 547.36,123.5 549,123.81 550.65,124.12 552.29,124.44 553.93,124.75 555.57,125.06 557.21,125.38 558.85,125.69 560.5,126 562.14,126.32 563.78,126.63 565.42,126.94 567.06,127.25 568.7,127.57 570.35,127.88 571.99,128.19 573.63,128.51 575.27,128.82 576.91,129.13 578.55,129.45 580.19,129.76 581.84,130.07 583.48,130.39 585.12,130.7 586.76,131.01 588.4,131.33 590.04,131.64 591.69,131.96 593.33,132.27 594.97,132.58 596.61,132.9 598.25,133.21 599.89,133.52 601.54,133.84 603.18,134.15 604.82,134.46 606.46,134.78 608.1,135.09 609.74,135.4 611.39,135.72 613.03,136.03 614.67,136.34 616.31,136.66 617.95,136.97 619.59,137.29 621.24,137.6 622.88,137.91 624.52,138.23 626.16,138.54 627.8,138.85 629.44,139.17 631.08,139.48 632.73,139.79 634.37,140.11 636.01,140.42 637.65,140.74 639.29,141.05 640.93,141.36 642.58,141.68 644.22,141.99 645.86,142.3 647.5,142.62 649.14,142.93 650.78,143.24 652.43,143.56 654.07,143.87 655.71,144.19 657.35,144.5 658.99,144.81 660.63,145.13 662.28,145.44 663.92,145.75 665.56,146.07 667.2,146.38" fill="none" stroke="#00ff00" stroke-width="2.3" stroke-linejoin="round"/>
<path d="M12.2,83.48 13.84,83.49 15.48,83.5 17.12,83.5 18.77,83.51 20.41,83.52 22.05,83.53 23.69,83.54 25.33,83.55 26.97,83.56 28.62,83.58 30.26,83.59 31.9,83.6 33.54,83.61 35.18,83.62 36.82,83.63 38.47,83.65 40.11,83.66 41.75,83.67 43.39,83.69 45.03,83.7 46.67,83.71 48.32,83.73 49.96,83.74 51.6,83.76 53.24,83.77 54.88,83.79 56.52,83.8 58.16,83.82 59.81,83.84 61.45,83.85 63.09,83.87 64.73,83.89 66.37,83.91 68.01,83.93 69.66,83.95 71.3,83.97 72.94,83.99 74.58,84.01 76.22,84.03 77.86,84.05 79.51,84.07 81.15,84.09 82.79,84.12 84.43,84.14 86.07,84.17 87.71,84.19 89.36,84.22 91,84.24 92.64,84.27 94.28,84.3 95.92,84.32 97.56,84.35 99.21,84.38 100.85,84.41 102.49,84.44 104.13,84.47 105.77,84.51 107.41,84.54 109.05,84.57 110.7,84.61 112.34,84.64 113.98,84.68 115.62,84.71 117.26,84.75 118.9,84.79 120.55,84.83 122.19,84.87 123.83,84.91 125.47,84.95 127.11,85 128.75,85.04 130.4,85.09 132.04,85.13 133.68,85.18 135.32,85.23 136.96,85.28 138.6,85.33 140.25,85.38 141.89,85.43 143.53,85.49 145.17,85.54 146.81,85.6 148.45,85.66 150.09,85.72 151.74,85.78 153.38,85.84 155.02,85.91 156.66,85.97 158.3,86.04 159.94,86.11 161.59,86.18 163.23,86.25 164.87,86.32 166.51,86.4 168.15,86.47 169.79,86.55 171.44,86.63 173.08,86.71 174.72,86.8 176.36,86.88 178,86.97 179.64,87.06 181.29,87.15 182.93,87.24 184.57,87.34 186.21,87.44 187.85,87.54 189.49,87.64 191.13,87.75 192.78,87.85 194.42,87.96 196.06,88.08 197.7,88.19 199.34,88.31 200.98,88.43 202.63,88.55 204.27,88.68 205.91,88.8 207.55,88.93 209.19,89.07 210.83,89.2 212.48,89.34 214.12,89.49 215.76,89.63 217.4,89.78 219.04,89.93 220.68,90.09 222.33,90.25 223.97,90.41 225.61,90.58 227.25,90.75 228.89,90.92 230.53,91.1 232.17,91.28 233.82,91.46 235.46,91.65 237.1,91.84 238.74,92.04 240.38,92.24 242.02,92.44 243.67,92.65 245.31,92.86 246.95,93.08 248.59,93.3 250.23,93.52 251.87,93.75 253.52,93.99 255.16,94.23 256.8,94.47 258.44,94.72 260.08,94.97 261.72,95.22 263.37,95.49 265.01,95.75 266.65,96.02 268.29,96.3 269.93,96.58 271.57,96.86 273.22,97.15 274.86,97.45 276.5,97.75 278.14,98.05 279.78,98.36 281.42,98.67 283.06,98.99 284.71,99.31 286.35,99.64 287.99,99.97 289.63,100.31 291.27,100.65 292.91,101 294.56,101.35 296.2,101.7 297.84,102.06 299.48,102.42 301.12,102.79 302.76,103.16 304.41,103.54 306.05,103.91 307.69,104.29 309.33,104.68 310.97,105.07 312.61,105.46 314.26,105.85 315.9,106.25 317.54,106.65 319.18,107.05 320.82,107.45 322.46,107.86 324.1,108.26 325.75,108.67 327.39,109.08 329.03,109.49 330.67,109.91 332.31,110.32 333.95,110.73 335.6,111.15 337.24,111.56 338.88,111.98 340.52,112.39 342.16,112.8 343.8,113.21 345.45,113.62 347.09,114.03 348.73,114.44 350.37,114.85 352.01,115.25 353.65,115.66 355.3,116.06 356.94,116.45 358.58,116.85 360.22,117.24 361.86,117.63 363.5,118.02 365.14,118.4 366.79,118.78 368.43,119.16 370.07,119.53 371.71,119.9 373.35,120.26 374.99,120.62 376.64,120.98 378.28,121.33 379.92,121.68 381.56,122.02 383.2,122.36 384.84,122.7 386.49,123.03 388.13,123.35 389.77,123.67 391.41,123.99 393.05,124.3 394.69,124.61 396.34,124.91 397.98,125.21 399.62,125.5 401.26,125.79 402.9,126.07 404.54,126.35 406.18,126.62 407.83,126.89 409.47,127.16 411.11,127.42 412.75,127.67 414.39,127.92 416.03,128.17 417.68,128.41 419.32,128.64 420.96,128.87 422.6,129.1 424.24,129.33 425.88,129.54 427.53,129.76 429.17,129.97 430.81,130.18 432.45,130.38 434.09,130.58 435.73,130.77 437.38,130.96 439.02,131.15 440.66,131.33 442.3,131.51 443.94,131.68 445.58,131.85 447.23,132.02 448.87,132.19 450.51,132.35 452.15,132.5 453.79,132.66 455.43,132.81 457.07,132.96 458.72,133.1 460.36,133.24 462,133.38 463.64,133.52 465.28,133.65 466.92,133.78 468.57,133.91 470.21,134.03 471.85,134.15 473.49,134.27 475.13,134.39 476.77,134.5 478.42,134.61 480.06,134.72 481.7,134.83 483.34,134.93 484.98,135.03 486.62,135.13 488.27,135.23 489.91,135.32 491.55,135.41 493.19,135.51 494.83,135.59 496.47,135.68 498.11,135.77 499.76,135.85 501.4,135.93 503.04,136.01 504.68,136.09 506.32,136.16 507.96,136.24 509.61,136.31 511.25,136.38 512.89,136.45 514.53,136.52 516.17,136.58 517.81,136.65 519.46,136.71 521.1,136.77 522.74,136.83 524.38,136.89 526.02,136.95 527.66,137.01 529.31,137.06 530.95,137.11 532.59,137.17 534.23,137.22 535.87,137.27 537.51,137.32 539.15,137.37 540.8,137.41 542.44,137.46 544.08,137.5 545.72,137.55 547.36,137.59 549,137.63 550.65,137.67 552.29,137.71 553.93,137.75 555.57,137.79 557.21,137.83 558.85,137.86 560.5,137.9 562.14,137.93 563.78,137.97 565.42,138 567.06,138.03 568.7,138.06 570.35,138.1 571.99,138.13 573.63,138.16 575.27,138.18 576.91,138.21 578.55,138.24 580.19,138.27 581.84,138.29 583.48,138.32 585.12,138.34 586.76,138.37 588.4,138.39 590.04,138.42 591.69,138.44 593.33,138.46 594.97,138.48 596.61,138.51 598.25,138.53 599.89,138.55 601.54,138.57 603.18,138.59 604.82,138.61 606.46,138.62 608.1,138.64 609.74,138.66 611.39,138.68 613.03,138.7 614.67,138.71 616.31,138.73 617.95,138.74 619.59,138.76 621.24,138.77 622.88,138.79 624.52,138.8 626.16,138.82 627.8,138.83 629.44,138.85 631.08,138.86 632.73,138.87 634.37,138.88 636.01,138.9 637.65,138.91 639.29,138.92 640.93,138.93 642.58,138.94 644.22,138.95 645.86,138.97 647.5,138.98 649.14,138.99 650.78,139 652.43,139.01 654.07,139.02 655.71,139.02 657.35,139.03 658.99,139.04 660.63,139.05 662.28,139.06 663.92,139.07 665.56,139.08 667.2,139.08" fill="none" stroke="#00ff00" stroke-width="2.8" stroke-dasharray="0 3.6" stroke-linecap="round"/>
<path d="M12.2,83.1 13.84,83.1 15.48,83.1 17.12,83.1 18.77,83.1 20.41,83.1 22.05,83.1 23.69,83.1 25.33,83.1 26.97,83.1 28.62,83.1 30.26,83.1 31.9,83.1 33.54,83.1 35.18,83.1 36.82,83.1 38.47,83.1 40.11,83.1 41.75,83.1 43.39,83.1 45.03,83.1 46.67,83.1 48.32,83.1 49.96,83.1 51.6,83.1 53.24,83.1 54.88,83.1 56.52,83.1 58.16,83.1 59.81,83.1 61.45,83.1 63.09,83.1 64.73,83.1 66.37,83.1 68.01,83.1 69.66,83.1 71.3,83.1 72.94,83.1 74.58,83.1 76.22,83.1 77.86,83.1 79.51,83.1 81.15,83.09 82.79,83.09 84.43,83.09 86.07,83.09 87.71,83.09 89.36,83.09 91,83.09 92.64,83.09 94.28,83.09 95.92,83.09 97.56,83.09 99.21,83.09 100.85,83.09 102.49,83.09 104.13,83.09 105.77,83.09 107.41,83.09 109.05,83.09 110.7,83.09 112.34,83.09 113.98,83.09 115.62,83.09 117.26,83.09 118.9,83.08 120.55,83.08 122.19,83.08 123.83,83.08 125.47,83.08 127.11,83.08 128.75,83.08 130.4,83.08 132.04,83.08 133.68,83.08 135.32,83.08 136.96,83.07 138.6,83.07 140.25,83.07 141.89,83.07 143.53,83.07 145.17,83.07 146.81,83.07 148.45,83.07 150.09,83.06 151.74,83.06 153.38,83.06 155.02,83.06 156.66,83.06 158.3,83.05 159.94,83.05 161.59,83.05 163.23,83.05 164.87,83.05 166.51,83.04 168.15,83.04 169.79,83.04 171.44,83.03 173.08,83.03 174.72,83.03 176.36,83.02 178,83.02 179.64,83.02 181.29,83.01 182.93,83.01 184.57,83 186.21,83 187.85,83 189.49,82.99 191.13,82.99 192.78,82.98 194.42,82.97 196.06,82.97 197.7,82.96 199.34,82.96 200.98,82.95 202.63,82.94 204.27,82.94 205.91,82.93 207.55,82.92 209.19,82.91 210.83,82.9 212.48,82.89 214.12,82.88 215.76,82.87 217.4,82.86 219.04,82.85 220.68,82.84 222.33,82.83 223.97,82.82 225.61,82.8 227.25,82.79 228.89,82.77 230.53,82.76 232.17,82.74 233.82,82.73 235.46,82.71 237.1,82.69 238.74,82.67 240.38,82.65 242.02,82.63 243.67,82.61 245.31,82.59 246.95,82.57 248.59,82.54 250.23,82.52 251.87,82.49 253.52,82.46 255.16,82.44 256.8,82.41 258.44,82.37 260.08,82.34 261.72,82.31 263.37,82.27 265.01,82.24 266.65,82.2 268.29,82.16 269.93,82.12 271.57,82.07 273.22,82.03 274.86,81.98 276.5,81.93 278.14,81.88 279.78,81.83 281.42,81.78 283.06,81.72 284.71,81.66 286.35,81.6 287.99,81.54 289.63,81.47 291.27,81.4 292.91,81.33 294.56,81.26 296.2,81.18 297.84,81.1 299.48,81.02 301.12,80.94 302.76,80.85 304.41,80.76 306.05,80.67 307.69,80.57 309.33,80.47 310.97,80.37 312.61,80.27 314.26,80.16 315.9,80.05 317.54,79.93 319.18,79.81 320.82,79.69 322.46,79.57 324.1,79.44 325.75,79.3 327.39,79.17 329.03,79.03 330.67,78.88 332.31,78.74 333.95,78.59 335.6,78.43 337.24,78.28 338.88,78.11 340.52,77.95 342.16,77.78 343.8,77.61 345.45,77.43 347.09,77.25 348.73,77.07 350.37,76.89 352.01,76.7 353.65,76.5 355.3,76.31 356.94,76.11 358.58,75.9 360.22,75.7 361.86,75.49 363.5,75.27 365.14,75.06 366.79,74.84 368.43,74.62 370.07,74.39 371.71,74.16 373.35,73.93 374.99,73.7 376.64,73.46 378.28,73.22 379.92,72.98 381.56,72.74 383.2,72.49 384.84,72.24 386.49,71.99 388.13,71.74 389.77,71.48 391.41,71.22 393.05,70.96 394.69,70.7 396.34,70.44 397.98,70.17 399.62,69.9 401.26,69.63 402.9,69.36 404.54,69.09 406.18,68.81 407.83,68.54 409.47,68.26 411.11,67.98 412.75,67.7 414.39,67.42 416.03,67.13 417.68,66.85 419.32,66.56 420.96,66.28 422.6,65.99 424.24,65.7 425.88,65.41 427.53,65.12 429.17,64.83 430.81,64.54 432.45,64.24 434.09,63.95 435.73,63.65 437.38,63.36 439.02,63.06 440.66,62.76 442.3,62.46 443.94,62.16 445.58,61.86 447.23,61.56 448.87,61.26 450.51,60.96 452.15,60.66 453.79,60.36 455.43,60.05 457.07,59.75 458.72,59.45 460.36,59.14 462,58.84 463.64,58.53 465.28,58.23 466.92,57.92 468.57,57.62 470.21,57.31 471.85,57 473.49,56.7 475.13,56.39 476.77,56.08 478.42,55.77 480.06,55.46 481.7,55.16 483.34,54.85 484.98,54.54 486.62,54.23 488.27,53.92 489.91,53.61 491.55,53.3 493.19,52.99 494.83,52.68 496.47,52.37 498.11,52.06 499.76,51.75 501.4,51.44 503.04,51.13 504.68,50.82 506.32,50.51 507.96,50.19 509.61,49.88 511.25,49.57 512.89,49.26 514.53,48.95 516.17,48.64 517.81,48.33 519.46,48.01 521.1,47.7 522.74,47.39 524.38,47.08 526.02,46.77 527.66,46.45 529.31,46.14 530.95,45.83 532.59,45.52 534.23,45.2 535.87,44.89 537.51,44.58 539.15,44.27 540.8,43.95 542.44,43.64 544.08,43.33 545.72,43.01 547.36,42.7 549,42.39 550.65,42.08 552.29,41.76 553.93,41.45 555.57,41.14 557.21,40.82 558.85,40.51 560.5,40.2 562.14,39.88 563.78,39.57 565.42,39.26 567.06,38.95 568.7,38.63 570.35,38.32 571.99,38.01 573.63,37.69 575.27,37.38 576.91,37.07 578.55,36.75 580.19,36.44 581.84,36.13 583.48,35.81 585.12,35.5 586.76,35.19 588.4,34.87 590.04,34.56 591.69,34.24 593.33,33.93 594.97,33.62 596.61,33.3 598.25,32.99 599.89,32.68 601.54,32.36 603.18,32.05 604.82,31.74 606.46,31.42 608.1,31.11 609.74,30.8 611.39,30.48 613.03,30.17 614.67,29.86 616.31,29.54 617.95,29.23 619.59,28.91 621.24,28.6 622.88,28.29 624.52,27.97 626.16,27.66 627.8,27.35 629.44,27.03 631.08,26.72 632.73,26.41 634.37,26.09 636.01,25.78 637.65,25.46 639.29,25.15 640.93,24.84 642.58,24.52 644.22,24.21 645.86,23.9 647.5,23.58 649.14,23.27 650.78,22.96 652.43,22.64 654.07,22.33 655.71,22.01 657.35,21.7 658.99,21.39 660.63,21.07 662.28,20.76 663.92,20.45 665.56,20.13 667.2,19.82" fill="none" stroke="#c48f6d" stroke-width="2.3" stroke-linejoin="round"/>
<path d="M12.2,82.72 13.84,82.71 15.48,82.7 17.12,82.7 18.77,82.69 20.41,82.68 22.05,82.67 23.69,82.66 25.33,82.65 26.97,82.64 28.62,82.62 30.26,82.61 31.9,82.6 33.54,82.59 35.18,82.58 36.82,82.57 38.47,82.55 40.11,82.54 41.75,82.53 43.39,82.51 45.03,82.5 46.67,82.49 48.32,82.47 49.96,82.46 51.6,82.44 53.24,82.43 54.88,82.41 56.52,82.4 58.16,82.38 59.81,82.36 61.45,82.35 63.09,82.33 64.73,82.31 66.37,82.29 68.01,82.27 69.66,82.25 71.3,82.23 72.94,82.21 74.58,82.19 76.22,82.17 77.86,82.15 79.51,82.13 81.15,82.11 82.79,82.08 84.43,82.06 86.07,82.03 87.71,82.01 89.36,81.98 91,81.96 92.64,81.93 94.28,81.9 95.92,81.88 97.56,81.85 99.21,81.82 100.85,81.79 102.49,81.76 104.13,81.73 105.77,81.69 107.41,81.66 109.05,81.63 110.7,81.59 112.34,81.56 113.98,81.52 115.62,81.49 117.26,81.45 118.9,81.41 120.55,81.37 122.19,81.33 123.83,81.29 125.47,81.25 127.11,81.2 128.75,81.16 130.4,81.11 132.04,81.07 133.68,81.02 135.32,80.97 136.96,80.92 138.6,80.87 140.25,80.82 141.89,80.77 143.53,80.71 145.17,80.66 146.81,80.6 148.45,80.54 150.09,80.48 151.74,80.42 153.38,80.36 155.02,80.29 156.66,80.23 158.3,80.16 159.94,80.09 161.59,80.02 163.23,79.95 164.87,79.88 166.51,79.8 168.15,79.73 169.79,79.65 171.44,79.57 173.08,79.49 174.72,79.4 176.36,79.32 178,79.23 179.64,79.14 181.29,79.05 182.93,78.96 184.57,78.86 186.21,78.76 187.85,78.66 189.49,78.56 191.13,78.45 192.78,78.35 194.42,78.24 196.06,78.12 197.7,78.01 199.34,77.89 200.98,77.77 202.63,77.65 204.27,77.52 205.91,77.4 207.55,77.27 209.19,77.13 210.83,77 212.48,76.86 214.12,76.71 215.76,76.57 217.4,76.42 219.04,76.27 220.68,76.11 222.33,75.95 223.97,75.79 225.61,75.62 227.25,75.45 228.89,75.28 230.53,75.1 232.17,74.92 233.82,74.74 235.46,74.55 237.1,74.36 238.74,74.16 240.38,73.96 242.02,73.76 243.67,73.55 245.31,73.34 246.95,73.12 248.59,72.9 250.23,72.68 251.87,72.45 253.52,72.21 255.16,71.97 256.8,71.73 258.44,71.48 260.08,71.23 261.72,70.98 263.37,70.71 265.01,70.45 266.65,70.18 268.29,69.9 269.93,69.62 271.57,69.34 273.22,69.05 274.86,68.75 276.5,68.45 278.14,68.15 279.78,67.84 281.42,67.53 283.06,67.21 284.71,66.89 286.35,66.56 287.99,66.23 289.63,65.89 291.27,65.55 292.91,65.2 294.56,64.85 296.2,64.5 297.84,64.14 299.48,63.78 301.12,63.41 302.76,63.04 304.41,62.66 306.05,62.29 307.69,61.91 309.33,61.52 310.97,61.13 312.61,60.74 314.26,60.35 315.9,59.95 317.54,59.55 319.18,59.15 320.82,58.75 322.46,58.34 324.1,57.94 325.75,57.53 327.39,57.12 329.03,56.71 330.67,56.29 332.31,55.88 333.95,55.47 335.6,55.05 337.24,54.64 338.88,54.22 340.52,53.81 342.16,53.4 343.8,52.99 345.45,52.58 347.09,52.17 348.73,51.76 350.37,51.35 352.01,50.95 353.65,50.54 355.3,50.14 356.94,49.75 358.58,49.35 360.22,48.96 361.86,48.57 363.5,48.18 365.14,47.8 366.79,47.42 368.43,47.04 370.07,46.67 371.71,46.3 373.35,45.94 374.99,45.58 376.64,45.22 378.28,44.87 379.92,44.52 381.56,44.18 383.2,43.84 384.84,43.5 386.49,43.17 388.13,42.85 389.77,42.53 391.41,42.21 393.05,41.9 394.69,41.59 396.34,41.29 397.98,40.99 399.62,40.7 401.26,40.41 402.9,40.13 404.54,39.85 406.18,39.58 407.83,39.31 409.47,39.04 411.11,38.78 412.75,38.53 414.39,38.28 416.03,38.03 417.68,37.79 419.32,37.56 420.96,37.33 422.6,37.1 424.24,36.87 425.88,36.66 427.53,36.44 429.17,36.23 430.81,36.02 432.45,35.82 434.09,35.62 435.73,35.43 437.38,35.24 439.02,35.05 440.66,34.87 442.3,34.69 443.94,34.52 445.58,34.35 447.23,34.18 448.87,34.01 450.51,33.85 452.15,33.7 453.79,33.54 455.43,33.39 457.07,33.24 458.72,33.1 460.36,32.96 462,32.82 463.64,32.68 465.28,32.55 466.92,32.42 468.57,32.29 470.21,32.17 471.85,32.05 473.49,31.93 475.13,31.81 476.77,31.7 478.42,31.59 480.06,31.48 481.7,31.37 483.34,31.27 484.98,31.17 486.62,31.07 488.27,30.97 489.91,30.88 491.55,30.79 493.19,30.69 494.83,30.61 496.47,30.52 498.11,30.43 499.76,30.35 501.4,30.27 503.04,30.19 504.68,30.11 506.32,30.04 507.96,29.96 509.61,29.89 511.25,29.82 512.89,29.75 514.53,29.68 516.17,29.62 517.81,29.55 519.46,29.49 521.1,29.43 522.74,29.37 524.38,29.31 526.02,29.25 527.66,29.19 529.31,29.14 530.95,29.09 532.59,29.03 534.23,28.98 535.87,28.93 537.51,28.88 539.15,28.83 540.8,28.79 542.44,28.74 544.08,28.7 545.72,28.65 547.36,28.61 549,28.57 550.65,28.53 552.29,28.49 553.93,28.45 555.57,28.41 557.21,28.37 558.85,28.34 560.5,28.3 562.14,28.27 563.78,28.23 565.42,28.2 567.06,28.17 568.7,28.14 570.35,28.1 571.99,28.07 573.63,28.04 575.27,28.02 576.91,27.99 578.55,27.96 580.19,27.93 581.84,27.91 583.48,27.88 585.12,27.86 586.76,27.83 588.4,27.81 590.04,27.78 591.69,27.76 593.33,27.74 594.97,27.72 596.61,27.69 598.25,27.67 599.89,27.65 601.54,27.63 603.18,27.61 604.82,27.59 606.46,27.58 608.1,27.56 609.74,27.54 611.39,27.52 613.03,27.5 614.67,27.49 616.31,27.47 617.95,27.46 619.59,27.44 621.24,27.43 622.88,27.41 624.52,27.4 626.16,27.38 627.8,27.37 629.44,27.35 631.08,27.34 632.73,27.33 634.37,27.32 636.01,27.3 637.65,27.29 639.29,27.28 640.93,27.27 642.58,27.26 644.22,27.25 645.86,27.23 647.5,27.22 649.14,27.21 650.78,27.2 652.43,27.19 654.07,27.18 655.71,27.18 657.35,27.17 658.99,27.16 660.63,27.15 662.28,27.14 663.92,27.13 665.56,27.12 667.2,27.12" fill="none" stroke="#c48f6d" stroke-width="2.8" stroke-dasharray="0 3.6" stroke-linecap="round"/>
</g>
<g clip-path="url(#cTL2)">
<path d="M12.2,178.41 667.2,304.49" fill="none" stroke="#ff0000" stroke-width="2.3"/>
<path d="M12.2,298.19 667.2,298.19" fill="none" stroke="#ff0000" stroke-width="2.8" stroke-dasharray="0 3.6" stroke-linecap="round"/>
<path d="M12.2,304.49 667.2,178.41" fill="none" stroke="#00c8c8" stroke-width="2.3"/>
<path d="M12.2,184.71 667.2,184.71" fill="none" stroke="#00c8c8" stroke-width="2.8" stroke-dasharray="0 3.6" stroke-linecap="round"/>
</g>
<rect x="0" y="346.3" width="682.7" height="18.2" fill="url(#tb)"/>
<rect x="680" y="364.5" width="3" height="497.5" fill="#d6e3f1"/>
<rect x="0" y="859.8" width="683" height="2.2" fill="#d6e3f1"/>
<rect x="0" y="364.5" width="680" height="495.3" fill="#000000"/>
<g transform="translate(0.5,352.8) scale(0.78)">
<rect x="0" y="0" width="13" height="13" fill="#e4e4e4"/>
<path d="M0,4 l2.2,-2.6 l2.2,2.6 l2.2,-2.6 l2.2,2.6 l2.2,-2.6 l2,2.4" fill="none" stroke="#2a3cff" stroke-width="1.3"/>
<path d="M1.5,7.5 h2 M5.5,8.3 h2 M9.5,7.5 h2" stroke="#e03030" stroke-width="1.6"/>
<path d="M2.5,9.5 v2 M6.5,9.5 v2 M10.5,9.5 v2" stroke="#5060c0" stroke-width="0.9"/>
<rect x="0" y="11.6" width="13" height="1.4" fill="#202020"/>
</g>
<text x="12.6" y="360" font-size="8.6" fill="#8d8d8d" textLength="31" lengthAdjust="spacingAndGlyphs">FOPD.raw</text>
<rect x="620.3" y="351.4" width="18.4" height="11" rx="2.5" fill="url(#btn)" stroke="#8d9cb3" stroke-width="1"/>
<rect x="626.41" y="357.24" width="6.19" height="2.2" rx="1.5" fill="#f4f6f9" stroke="#4a5466" stroke-width="0.9"/>
<rect x="640.4" y="351.4" width="18.8" height="11" rx="2.5" fill="url(#btn)" stroke="#8d9cb3" stroke-width="1"/>
<rect x="646.71" y="354.49" width="6.19" height="4.81" rx="1.5" fill="#f4f6f9" stroke="#4a5466" stroke-width="0.9"/>
<rect x="648.29" y="356.07" width="3.03" height="1.38" fill="#4a5a78"/>
<rect x="661.1" y="351.4" width="18.7" height="11" rx="2.5" fill="url(#btn)" stroke="#8d9cb3" stroke-width="1"/>
<path d="M667.98,354.42 L672.93,359.38 M667.98,359.38 L672.93,354.42" stroke="#3f4a5c" stroke-width="2.34" stroke-linecap="round"/>
<path d="M667.98,354.42 L672.93,359.38 M667.98,359.38 L672.93,354.42" stroke="#ffffff" stroke-width="1.24" stroke-linecap="round"/>
<line x1="25.8" y1="395.42" x2="670.1" y2="395.42" stroke="#626262" stroke-width="1" stroke-dasharray="2 1.9"/>
<line x1="25.8" y1="414.33" x2="670.1" y2="414.33" stroke="#626262" stroke-width="1" stroke-dasharray="2 1.9"/>
<line x1="25.8" y1="433.25" x2="670.1" y2="433.25" stroke="#626262" stroke-width="1" stroke-dasharray="2 1.9"/>
<line x1="25.8" y1="452.17" x2="670.1" y2="452.17" stroke="#626262" stroke-width="1" stroke-dasharray="2 1.9"/>
<line x1="25.8" y1="471.08" x2="670.1" y2="471.08" stroke="#626262" stroke-width="1" stroke-dasharray="2 1.9"/>
<line x1="25.8" y1="490" x2="670.1" y2="490" stroke="#626262" stroke-width="1" stroke-dasharray="2 1.9"/>
<line x1="25.8" y1="508.92" x2="670.1" y2="508.92" stroke="#626262" stroke-width="1" stroke-dasharray="2 1.9"/>
<line x1="25.8" y1="527.83" x2="670.1" y2="527.83" stroke="#626262" stroke-width="1" stroke-dasharray="2 1.9"/>
<line x1="25.8" y1="546.75" x2="670.1" y2="546.75" stroke="#626262" stroke-width="1" stroke-dasharray="2 1.9"/>
<line x1="25.8" y1="565.67" x2="670.1" y2="565.67" stroke="#626262" stroke-width="1" stroke-dasharray="2 1.9"/>
<line x1="25.8" y1="584.58" x2="670.1" y2="584.58" stroke="#626262" stroke-width="1" stroke-dasharray="2 1.9"/>
<line x1="88.63" y1="378.5" x2="88.63" y2="601.5" stroke="#626262" stroke-width="1" stroke-dasharray="2 1.9"/>
<line x1="153.46" y1="378.5" x2="153.46" y2="601.5" stroke="#626262" stroke-width="1" stroke-dasharray="2 1.9"/>
<line x1="218.29" y1="378.5" x2="218.29" y2="601.5" stroke="#626262" stroke-width="1" stroke-dasharray="2 1.9"/>
<line x1="283.12" y1="378.5" x2="283.12" y2="601.5" stroke="#626262" stroke-width="1" stroke-dasharray="2 1.9"/>
<line x1="347.95" y1="378.5" x2="347.95" y2="601.5" stroke="#626262" stroke-width="1" stroke-dasharray="2 1.9"/>
<line x1="412.78" y1="378.5" x2="412.78" y2="601.5" stroke="#626262" stroke-width="1" stroke-dasharray="2 1.9"/>
<line x1="477.61" y1="378.5" x2="477.61" y2="601.5" stroke="#626262" stroke-width="1" stroke-dasharray="2 1.9"/>
<line x1="542.44" y1="378.5" x2="542.44" y2="601.5" stroke="#626262" stroke-width="1" stroke-dasharray="2 1.9"/>
<line x1="607.27" y1="378.5" x2="607.27" y2="601.5" stroke="#626262" stroke-width="1" stroke-dasharray="2 1.9"/>
<path d="M23.8,376.5 H672.1 V603.5 H23.8 Z" fill="none" stroke="#a6a6a6" stroke-width="2.6"/>
<line x1="17.5" y1="376.5" x2="23.8" y2="376.5" stroke="#a6a6a6" stroke-width="2.4"/>
<text x="17.8" y="379.6" font-size="8.6" fill="#d2d2d2" text-anchor="end">110V</text>
<line x1="17.5" y1="395.42" x2="23.8" y2="395.42" stroke="#a6a6a6" stroke-width="2.4"/>
<text x="17.8" y="398.52" font-size="8.6" fill="#d2d2d2" text-anchor="end">100V</text>
<line x1="17.5" y1="414.33" x2="23.8" y2="414.33" stroke="#a6a6a6" stroke-width="2.4"/>
<text x="17.8" y="417.43" font-size="8.6" fill="#d2d2d2" text-anchor="end">90V</text>
<line x1="17.5" y1="433.25" x2="23.8" y2="433.25" stroke="#a6a6a6" stroke-width="2.4"/>
<text x="17.8" y="436.35" font-size="8.6" fill="#d2d2d2" text-anchor="end">80V</text>
<line x1="17.5" y1="452.17" x2="23.8" y2="452.17" stroke="#a6a6a6" stroke-width="2.4"/>
<text x="17.8" y="455.27" font-size="8.6" fill="#d2d2d2" text-anchor="end">70V</text>
<line x1="17.5" y1="471.08" x2="23.8" y2="471.08" stroke="#a6a6a6" stroke-width="2.4"/>
<text x="17.8" y="474.18" font-size="8.6" fill="#d2d2d2" text-anchor="end">60V</text>
<line x1="17.5" y1="490" x2="23.8" y2="490" stroke="#a6a6a6" stroke-width="2.4"/>
<text x="17.8" y="493.1" font-size="8.6" fill="#d2d2d2" text-anchor="end">50V</text>
<line x1="17.5" y1="508.92" x2="23.8" y2="508.92" stroke="#a6a6a6" stroke-width="2.4"/>
<text x="17.8" y="512.02" font-size="8.6" fill="#d2d2d2" text-anchor="end">40V</text>
<line x1="17.5" y1="527.83" x2="23.8" y2="527.83" stroke="#a6a6a6" stroke-width="2.4"/>
<text x="17.8" y="530.93" font-size="8.6" fill="#d2d2d2" text-anchor="end">30V</text>
<line x1="17.5" y1="546.75" x2="23.8" y2="546.75" stroke="#a6a6a6" stroke-width="2.4"/>
<text x="17.8" y="549.85" font-size="8.6" fill="#d2d2d2" text-anchor="end">20V</text>
<line x1="17.5" y1="565.67" x2="23.8" y2="565.67" stroke="#a6a6a6" stroke-width="2.4"/>
<text x="17.8" y="568.77" font-size="8.6" fill="#d2d2d2" text-anchor="end">10V</text>
<line x1="17.5" y1="584.58" x2="23.8" y2="584.58" stroke="#a6a6a6" stroke-width="2.4"/>
<text x="17.8" y="587.68" font-size="8.6" fill="#d2d2d2" text-anchor="end">0V</text>
<line x1="17.5" y1="603.5" x2="23.8" y2="603.5" stroke="#a6a6a6" stroke-width="2.4"/>
<text x="17.8" y="606.6" font-size="8.6" fill="#d2d2d2" text-anchor="end">-10V</text>
<line x1="25.8" y1="627.43" x2="670.1" y2="627.43" stroke="#626262" stroke-width="1" stroke-dasharray="2 1.9"/>
<line x1="25.8" y1="638.87" x2="670.1" y2="638.87" stroke="#626262" stroke-width="1" stroke-dasharray="2 1.9"/>
<line x1="25.8" y1="650.31" x2="670.1" y2="650.31" stroke="#626262" stroke-width="1" stroke-dasharray="2 1.9"/>
<line x1="25.8" y1="661.74" x2="670.1" y2="661.74" stroke="#626262" stroke-width="1" stroke-dasharray="2 1.9"/>
<line x1="25.8" y1="673.17" x2="670.1" y2="673.17" stroke="#626262" stroke-width="1" stroke-dasharray="2 1.9"/>
<line x1="25.8" y1="684.61" x2="670.1" y2="684.61" stroke="#626262" stroke-width="1" stroke-dasharray="2 1.9"/>
<line x1="25.8" y1="696.05" x2="670.1" y2="696.05" stroke="#626262" stroke-width="1" stroke-dasharray="2 1.9"/>
<line x1="25.8" y1="707.48" x2="670.1" y2="707.48" stroke="#626262" stroke-width="1" stroke-dasharray="2 1.9"/>
<line x1="25.8" y1="718.91" x2="670.1" y2="718.91" stroke="#626262" stroke-width="1" stroke-dasharray="2 1.9"/>
<line x1="25.8" y1="730.35" x2="670.1" y2="730.35" stroke="#626262" stroke-width="1" stroke-dasharray="2 1.9"/>
<line x1="25.8" y1="741.79" x2="670.1" y2="741.79" stroke="#626262" stroke-width="1" stroke-dasharray="2 1.9"/>
<line x1="25.8" y1="753.22" x2="670.1" y2="753.22" stroke="#626262" stroke-width="1" stroke-dasharray="2 1.9"/>
<line x1="25.8" y1="764.65" x2="670.1" y2="764.65" stroke="#626262" stroke-width="1" stroke-dasharray="2 1.9"/>
<line x1="25.8" y1="776.09" x2="670.1" y2="776.09" stroke="#626262" stroke-width="1" stroke-dasharray="2 1.9"/>
<line x1="25.8" y1="787.53" x2="670.1" y2="787.53" stroke="#626262" stroke-width="1" stroke-dasharray="2 1.9"/>
<line x1="25.8" y1="798.96" x2="670.1" y2="798.96" stroke="#626262" stroke-width="1" stroke-dasharray="2 1.9"/>
<line x1="25.8" y1="810.39" x2="670.1" y2="810.39" stroke="#626262" stroke-width="1" stroke-dasharray="2 1.9"/>
<line x1="25.8" y1="821.83" x2="670.1" y2="821.83" stroke="#626262" stroke-width="1" stroke-dasharray="2 1.9"/>
<line x1="25.8" y1="833.27" x2="670.1" y2="833.27" stroke="#626262" stroke-width="1" stroke-dasharray="2 1.9"/>
<line x1="88.63" y1="618" x2="88.63" y2="842.7" stroke="#626262" stroke-width="1" stroke-dasharray="2 1.9"/>
<line x1="153.46" y1="618" x2="153.46" y2="842.7" stroke="#626262" stroke-width="1" stroke-dasharray="2 1.9"/>
<line x1="218.29" y1="618" x2="218.29" y2="842.7" stroke="#626262" stroke-width="1" stroke-dasharray="2 1.9"/>
<line x1="283.12" y1="618" x2="283.12" y2="842.7" stroke="#626262" stroke-width="1" stroke-dasharray="2 1.9"/>
<line x1="347.95" y1="618" x2="347.95" y2="842.7" stroke="#626262" stroke-width="1" stroke-dasharray="2 1.9"/>
<line x1="412.78" y1="618" x2="412.78" y2="842.7" stroke="#626262" stroke-width="1" stroke-dasharray="2 1.9"/>
<line x1="477.61" y1="618" x2="477.61" y2="842.7" stroke="#626262" stroke-width="1" stroke-dasharray="2 1.9"/>
<line x1="542.44" y1="618" x2="542.44" y2="842.7" stroke="#626262" stroke-width="1" stroke-dasharray="2 1.9"/>
<line x1="607.27" y1="618" x2="607.27" y2="842.7" stroke="#626262" stroke-width="1" stroke-dasharray="2 1.9"/>
<path d="M23.8,616 H672.1 V844.7 H23.8 Z" fill="none" stroke="#c6c6c6" stroke-width="2.6"/>
<line x1="18.5" y1="616" x2="23.8" y2="616" stroke="#c6c6c6" stroke-width="2.2"/>
<text x="18.6" y="619.1" font-size="8.2" fill="#d2d2d2" text-anchor="end">2.0V</text>
<line x1="18.5" y1="627.43" x2="23.8" y2="627.43" stroke="#c6c6c6" stroke-width="2.2"/>
<text x="18.6" y="630.53" font-size="8.2" fill="#d2d2d2" text-anchor="end">1.9V</text>
<line x1="18.5" y1="638.87" x2="23.8" y2="638.87" stroke="#c6c6c6" stroke-width="2.2"/>
<text x="18.6" y="641.97" font-size="8.2" fill="#d2d2d2" text-anchor="end">1.8V</text>
<line x1="18.5" y1="650.31" x2="23.8" y2="650.31" stroke="#c6c6c6" stroke-width="2.2"/>
<text x="18.6" y="653.41" font-size="8.2" fill="#d2d2d2" text-anchor="end">1.7V</text>
<line x1="18.5" y1="661.74" x2="23.8" y2="661.74" stroke="#c6c6c6" stroke-width="2.2"/>
<text x="18.6" y="664.84" font-size="8.2" fill="#d2d2d2" text-anchor="end">1.6V</text>
<line x1="18.5" y1="673.17" x2="23.8" y2="673.17" stroke="#c6c6c6" stroke-width="2.2"/>
<text x="18.6" y="676.27" font-size="8.2" fill="#d2d2d2" text-anchor="end">1.5V</text>
<line x1="18.5" y1="684.61" x2="23.8" y2="684.61" stroke="#c6c6c6" stroke-width="2.2"/>
<text x="18.6" y="687.71" font-size="8.2" fill="#d2d2d2" text-anchor="end">1.4V</text>
<line x1="18.5" y1="696.05" x2="23.8" y2="696.05" stroke="#c6c6c6" stroke-width="2.2"/>
<text x="18.6" y="699.15" font-size="8.2" fill="#d2d2d2" text-anchor="end">1.3V</text>
<line x1="18.5" y1="707.48" x2="23.8" y2="707.48" stroke="#c6c6c6" stroke-width="2.2"/>
<text x="18.6" y="710.58" font-size="8.2" fill="#d2d2d2" text-anchor="end">1.2V</text>
<line x1="18.5" y1="718.91" x2="23.8" y2="718.91" stroke="#c6c6c6" stroke-width="2.2"/>
<text x="18.6" y="722.01" font-size="8.2" fill="#d2d2d2" text-anchor="end">1.1V</text>
<line x1="18.5" y1="730.35" x2="23.8" y2="730.35" stroke="#c6c6c6" stroke-width="2.2"/>
<text x="18.6" y="733.45" font-size="8.2" fill="#d2d2d2" text-anchor="end">1.0V</text>
<line x1="18.5" y1="741.79" x2="23.8" y2="741.79" stroke="#c6c6c6" stroke-width="2.2"/>
<text x="18.6" y="744.89" font-size="8.2" fill="#d2d2d2" text-anchor="end">0.9V</text>
<line x1="18.5" y1="753.22" x2="23.8" y2="753.22" stroke="#c6c6c6" stroke-width="2.2"/>
<text x="18.6" y="756.32" font-size="8.2" fill="#d2d2d2" text-anchor="end">0.8V</text>
<line x1="18.5" y1="764.65" x2="23.8" y2="764.65" stroke="#c6c6c6" stroke-width="2.2"/>
<text x="18.6" y="767.75" font-size="8.2" fill="#d2d2d2" text-anchor="end">0.7V</text>
<line x1="18.5" y1="776.09" x2="23.8" y2="776.09" stroke="#c6c6c6" stroke-width="2.2"/>
<text x="18.6" y="779.19" font-size="8.2" fill="#d2d2d2" text-anchor="end">0.6V</text>
<line x1="18.5" y1="787.53" x2="23.8" y2="787.53" stroke="#c6c6c6" stroke-width="2.2"/>
<text x="18.6" y="790.63" font-size="8.2" fill="#d2d2d2" text-anchor="end">0.5V</text>
<line x1="18.5" y1="798.96" x2="23.8" y2="798.96" stroke="#c6c6c6" stroke-width="2.2"/>
<text x="18.6" y="802.06" font-size="8.2" fill="#d2d2d2" text-anchor="end">0.4V</text>
<line x1="18.5" y1="810.39" x2="23.8" y2="810.39" stroke="#c6c6c6" stroke-width="2.2"/>
<text x="18.6" y="813.5" font-size="8.2" fill="#d2d2d2" text-anchor="end">0.3V</text>
<line x1="18.5" y1="821.83" x2="23.8" y2="821.83" stroke="#c6c6c6" stroke-width="2.2"/>
<text x="18.6" y="824.93" font-size="8.2" fill="#d2d2d2" text-anchor="end">0.2V</text>
<line x1="18.5" y1="833.27" x2="23.8" y2="833.27" stroke="#c6c6c6" stroke-width="2.2"/>
<text x="18.6" y="836.37" font-size="8.2" fill="#d2d2d2" text-anchor="end">0.1V</text>
<line x1="18.5" y1="844.7" x2="23.8" y2="844.7" stroke="#c6c6c6" stroke-width="2.2"/>
<text x="18.6" y="847.8" font-size="8.2" fill="#d2d2d2" text-anchor="end">0.0V</text>
<line x1="23.8" y1="844.7" x2="23.8" y2="849.2" stroke="#c6c6c6" stroke-width="2.4"/>
<text x="23.8" y="856.8" font-size="8.6" fill="#d2d2d2" text-anchor="middle">0s</text>
<line x1="88.63" y1="844.7" x2="88.63" y2="849.2" stroke="#c6c6c6" stroke-width="2.4"/>
<text x="88.63" y="856.8" font-size="8.6" fill="#d2d2d2" text-anchor="middle">20s</text>
<line x1="153.46" y1="844.7" x2="153.46" y2="849.2" stroke="#c6c6c6" stroke-width="2.4"/>
<text x="153.46" y="856.8" font-size="8.6" fill="#d2d2d2" text-anchor="middle">40s</text>
<line x1="218.29" y1="844.7" x2="218.29" y2="849.2" stroke="#c6c6c6" stroke-width="2.4"/>
<text x="218.29" y="856.8" font-size="8.6" fill="#d2d2d2" text-anchor="middle">60s</text>
<line x1="283.12" y1="844.7" x2="283.12" y2="849.2" stroke="#c6c6c6" stroke-width="2.4"/>
<text x="283.12" y="856.8" font-size="8.6" fill="#d2d2d2" text-anchor="middle">80s</text>
<line x1="347.95" y1="844.7" x2="347.95" y2="849.2" stroke="#c6c6c6" stroke-width="2.4"/>
<text x="347.95" y="856.8" font-size="8.6" fill="#d2d2d2" text-anchor="middle">100s</text>
<line x1="412.78" y1="844.7" x2="412.78" y2="849.2" stroke="#c6c6c6" stroke-width="2.4"/>
<text x="412.78" y="856.8" font-size="8.6" fill="#d2d2d2" text-anchor="middle">120s</text>
<line x1="477.61" y1="844.7" x2="477.61" y2="849.2" stroke="#c6c6c6" stroke-width="2.4"/>
<text x="477.61" y="856.8" font-size="8.6" fill="#d2d2d2" text-anchor="middle">140s</text>
<line x1="542.44" y1="844.7" x2="542.44" y2="849.2" stroke="#c6c6c6" stroke-width="2.4"/>
<text x="542.44" y="856.8" font-size="8.6" fill="#d2d2d2" text-anchor="middle">160s</text>
<line x1="607.27" y1="844.7" x2="607.27" y2="849.2" stroke="#c6c6c6" stroke-width="2.4"/>
<text x="607.27" y="856.8" font-size="8.6" fill="#d2d2d2" text-anchor="middle">180s</text>
<line x1="672.1" y1="844.7" x2="672.1" y2="849.2" stroke="#c6c6c6" stroke-width="2.4"/>
<text x="672.1" y="856.8" font-size="8.6" fill="#d2d2d2" text-anchor="middle">200s</text>
<text x="347.5" y="373.6" font-size="9" fill="#00ff00" text-anchor="middle" font-weight="bold" textLength="34" lengthAdjust="spacingAndGlyphs">V(output)</text>
<rect x="329.5" y="365.5" width="36" height="10" fill="none" stroke="#bbbbbb" stroke-width="0.7" stroke-dasharray="1 1"/>
<text x="347.5" y="612.6" font-size="9" fill="#d0906a" text-anchor="middle" font-weight="bold" textLength="36" lengthAdjust="spacingAndGlyphs">V(control)</text>
<clipPath id="cF1"><rect x="23.8" y="376.5" width="648.3" height="227"/></clipPath>
<path d="M23.8,584.58 24.34,584.58 24.88,584.58 25.42,584.58 25.96,584.58 26.5,584.58 27.04,584.58 27.58,584.58 28.13,584.58 28.67,584.58 29.21,584.58 29.75,583.03 30.29,580.02 30.83,577.05 31.37,574.13 31.91,571.26 32.45,568.44 32.99,565.66 33.53,562.92 34.07,560.23 34.61,557.59 35.15,554.98 35.7,552.42 36.24,549.89 36.78,547.41 37.32,544.97 37.86,542.57 38.4,540.21 38.94,537.88 39.48,535.59 40.02,533.34 40.56,531.12 41.1,528.94 41.64,526.8 42.18,524.69 42.72,522.61 43.27,520.57 43.81,518.56 44.35,516.58 44.89,514.63 45.43,512.72 45.97,510.83 46.51,508.98 47.05,507.15 47.59,505.36 48.13,503.59 48.67,501.86 49.21,500.15 49.75,498.46 50.29,496.81 50.84,495.18 51.38,493.58 51.92,492 52.46,490.45 53,488.92 53.54,487.42 54.08,485.94 54.62,484.49 55.16,483.06 55.7,481.65 56.24,480.26 56.78,478.9 57.32,477.56 57.86,476.24 58.4,474.94 58.95,473.66 59.49,472.41 60.03,471.17 60.57,469.95 61.11,468.76 61.65,467.58 62.19,466.42 62.73,465.28 63.27,464.16 63.81,463.05 64.35,461.96 64.89,460.9 65.43,459.84 65.97,458.81 66.52,457.79 67.06,456.79 67.6,455.8 68.14,454.83 68.68,453.88 69.22,452.94 69.76,452.02 70.3,451.11 70.84,450.21 71.38,449.33 71.92,448.46 72.46,447.61 73,446.77 73.54,445.95 74.09,445.14 74.63,444.34 75.17,443.55 75.71,442.78 76.25,442.02 76.79,441.27 77.33,440.53 77.87,439.81 78.41,439.1 78.95,438.39 79.49,437.7 80.03,437.02 80.57,436.36 81.11,435.7 81.65,435.05 82.2,434.41 82.74,433.79 83.28,433.17 83.82,432.56 84.36,431.97 84.9,431.38 85.44,430.8 85.98,430.23 86.52,429.68 87.06,429.13 87.6,428.58 88.14,428.05 88.68,427.53 89.22,427.01 89.77,426.5 90.31,426 90.85,425.51 91.39,425.03 91.93,424.55 92.47,424.09 93.01,423.62 93.55,423.17 94.09,422.73 94.63,422.29 95.17,421.86 95.71,421.43 96.25,421.01 96.79,420.6 97.34,420.2 97.88,419.8 98.42,419.41 98.96,419.02 99.5,418.64 100.04,418.27 100.58,417.9 101.12,417.54 101.66,417.19 102.2,416.84 102.74,416.49 103.28,416.15 103.82,415.82 104.36,415.49 104.91,415.17 105.45,414.85 105.99,414.54 106.53,414.23 107.07,413.93 107.61,413.63 108.15,413.34 108.69,413.05 109.23,412.77 109.77,412.49 110.31,412.22 110.85,411.95 111.39,411.68 111.93,411.42 112.47,411.16 113.02,410.91 113.56,410.66 114.1,410.42 114.64,410.18 115.18,409.94 115.72,409.7 116.26,409.48 116.8,409.25 117.34,409.03 117.88,408.81 118.42,408.59 118.96,408.38 119.5,408.17 120.04,407.97 120.59,407.77 121.13,407.57 121.67,407.37 122.21,407.18 122.75,406.99 123.29,406.81 123.83,406.62 124.37,406.44 124.91,406.27 125.45,406.09 125.99,405.92 126.53,405.75 127.07,405.59 127.61,405.42 128.16,405.26 128.7,405.1 129.24,404.95 129.78,404.79 130.32,404.64 130.86,404.5 131.4,404.35 131.94,404.21 132.48,404.07 133.02,403.93 133.56,403.79 134.1,403.66 134.64,403.52 135.18,403.39 135.73,403.26 136.27,403.14 136.81,403.01 137.35,402.89 137.89,402.77 138.43,402.65 138.97,402.54 139.51,402.42 140.05,402.31 140.59,402.2 141.13,402.09 141.67,401.98 142.21,401.88 142.75,401.77 143.29,401.67 143.84,401.57 144.38,401.47 144.92,401.38 145.46,401.28 146,401.19 146.54,401.09 147.08,401 147.62,400.91 148.16,400.82 148.7,400.74 149.24,400.65 149.78,400.57 150.32,400.48 150.86,400.4 151.41,400.32 151.95,400.24 152.49,400.17 153.03,400.09 153.57,400.02 154.11,399.94 154.65,399.87 155.19,399.8 155.73,399.73 156.27,399.66 156.81,399.59 157.35,399.52 157.89,399.46 158.43,399.39 158.98,399.33 159.52,399.27 160.06,399.2 160.6,399.14 161.14,399.08 161.68,399.02 162.22,398.97 162.76,398.91 163.3,398.85 163.84,398.8 164.38,398.74 164.92,398.69 165.46,398.64 166,398.59 166.54,398.53 167.09,398.48 167.63,398.44 168.17,398.39 168.71,398.34 169.25,398.29 169.79,398.25 170.33,398.2 170.87,398.16 171.41,398.11 171.95,398.07 172.49,398.03 173.03,397.98 173.57,397.94 174.11,397.9 174.66,397.86 175.2,397.82 175.74,397.78 176.28,397.75 176.82,397.71 177.36,397.67 177.9,397.64 178.44,397.6 178.98,397.56 179.52,397.53 180.06,397.5 180.6,397.46 181.14,397.43 181.68,397.4 182.23,397.37 182.77,397.33 183.31,397.3 183.85,397.27 184.39,397.24 184.93,397.21 185.47,397.19 186.01,397.16 186.55,397.13 187.09,397.1 187.63,397.07 188.17,397.05 188.71,397.02 189.25,397 189.8,396.97 190.34,396.95 190.88,396.92 191.42,396.9 191.96,396.87 192.5,396.85 193.04,396.83 193.58,396.8 194.12,396.78 194.66,396.76 195.2,396.74 195.74,396.72 196.28,396.7 196.82,396.68 197.36,396.66 197.91,396.64 198.45,396.62 198.99,396.6 199.53,396.58 200.07,396.56 200.61,396.54 201.15,396.52 201.69,396.5 202.23,396.49 202.77,396.47 203.31,396.45 203.85,396.44 204.39,396.42 204.93,396.4 205.48,396.39 206.02,396.37 206.56,396.36 207.1,396.34 207.64,396.33 208.18,396.31 208.72,396.3 209.26,396.28 209.8,396.27 210.34,396.26 210.88,396.24 211.42,396.23 211.96,396.22 212.5,396.2 213.05,396.19 213.59,396.18 214.13,396.17 214.67,396.15 215.21,396.14 215.75,396.13 216.29,396.12 216.83,396.11 217.37,396.1 217.91,396.09 218.45,396.08 218.99,396.06 219.53,396.05 220.07,396.04 220.62,396.03 221.16,396.02 221.7,396.01 222.24,396 222.78,396 223.32,395.99 223.86,395.98 224.4,395.97 224.94,395.96 225.48,395.95 226.02,395.94 226.56,395.93 227.1,395.92 227.64,395.92 228.18,395.91 228.73,395.9 229.27,395.89 229.81,395.89 230.35,395.88 230.89,395.87 231.43,395.86 231.97,395.86 232.51,395.85 233.05,395.84 233.59,395.84 234.13,395.83 234.67,395.82 235.21,395.82 235.75,395.81 236.3,395.8 236.84,395.8 237.38,395.79 237.92,395.78 238.46,395.78 239,395.77 239.54,395.77 240.08,395.76 240.62,395.76 241.16,395.75 241.7,395.74 242.24,395.74 242.78,395.73 243.32,395.73 243.87,395.72 244.41,395.72 244.95,395.71 245.49,395.71 246.03,395.71 246.57,395.7 247.11,395.7 247.65,395.69 248.19,395.69 248.73,395.68 249.27,395.68 249.81,395.67 250.35,395.67 250.89,395.67 251.43,395.66 251.98,395.66 252.52,395.65 253.06,395.65 253.6,395.65 254.14,395.64 254.68,395.64 255.22,395.64 255.76,395.63 256.3,395.63 256.84,395.63 257.38,395.62 257.92,395.62 258.46,395.62 259,395.61 259.55,395.61 260.09,395.61 260.63,395.6 261.17,395.6 261.71,395.6 262.25,395.59 262.79,395.59 263.33,395.59 263.87,395.59 264.41,395.58 264.95,395.58 265.49,395.58 266.03,395.58 266.57,395.57 267.12,395.57 267.66,395.57 268.2,395.57 268.74,395.56 269.28,395.56 269.82,395.56 270.36,395.56 270.9,395.55 271.44,395.55 271.98,395.55 272.52,395.55 273.06,395.54 273.6,395.54 274.14,395.54 274.69,395.54 275.23,395.54 275.77,395.54 276.31,395.53 276.85,395.53 277.39,395.53 277.93,395.53 278.47,395.53 279.01,395.52 279.55,395.52 280.09,395.52 280.63,395.52 281.17,395.52 281.71,395.52 282.25,395.51 282.8,395.51 283.34,395.51 283.88,395.51 284.42,395.51 284.96,395.51 285.5,395.51 286.04,395.5 286.58,395.5 287.12,395.5 287.66,395.5 288.2,395.5 288.74,395.5 289.28,395.5 289.82,395.49 290.37,395.49 290.91,395.49 291.45,395.49 291.99,395.49 292.53,395.49 293.07,395.49 293.61,395.49 294.15,395.48 294.69,395.48 295.23,395.48 295.77,395.48 296.31,395.48 296.85,395.48 297.39,395.48 297.94,395.48 298.48,395.48 299.02,395.48 299.56,395.47 300.1,395.47 300.64,395.47 301.18,395.47 301.72,395.47 302.26,395.47 302.8,395.47 303.34,395.47 303.88,395.47 304.42,395.47 304.96,395.47 305.51,395.47 306.05,395.46 306.59,395.46 307.13,395.46 307.67,395.46 308.21,395.46 308.75,395.46 309.29,395.46 309.83,395.46 310.37,395.46 310.91,395.46 311.45,395.46 311.99,395.46 312.53,395.46 313.07,395.46 313.62,395.45 314.16,395.45 314.7,395.45 315.24,395.45 315.78,395.45 316.32,395.45 316.86,395.45 317.4,395.45 317.94,395.45 318.48,395.45 319.02,395.45 319.56,395.45 320.1,395.45 320.64,395.45 321.19,395.45 321.73,395.45 322.27,395.45 322.81,395.45 323.35,395.45 323.89,395.44 324.43,395.44 324.97,395.44 325.51,395.44 326.05,395.44 326.59,395.44 327.13,395.44 327.67,395.44 328.21,395.44 328.76,395.44 329.3,395.44 329.84,395.44 330.38,395.44 330.92,395.44 331.46,395.44 332,395.44 332.54,395.44 333.08,395.44 333.62,395.44 334.16,395.44 334.7,395.44 335.24,395.44 335.78,395.44 336.32,395.44 336.87,395.44 337.41,395.44 337.95,395.44 338.49,395.43 339.03,395.43 339.57,395.43 340.11,395.43 340.65,395.43 341.19,395.43 341.73,395.43 342.27,395.43 342.81,395.43 343.35,395.43 343.89,395.43 344.44,395.43 344.98,395.43 345.52,395.43 346.06,395.43 346.6,395.43 347.14,395.43 347.68,395.43 348.22,395.43 348.76,395.43 349.3,395.43 349.84,395.43 350.38,395.43 350.92,395.43 351.46,395.43 352.01,395.43 352.55,395.43 353.09,395.43 353.63,395.43 354.17,395.43 354.71,397.21 355.25,400.65 355.79,404.03 356.33,407.34 356.87,410.6 357.41,413.79 357.95,416.93 358.49,420.01 359.03,423.03 359.58,426 360.12,428.91 360.66,431.77 361.2,434.57 361.74,437.33 362.28,440.03 362.82,442.69 363.36,445.29 363.9,447.85 364.44,450.36 364.98,452.82 365.52,455.24 366.06,457.62 366.6,459.95 367.14,462.24 367.69,464.49 368.23,466.69 368.77,468.86 369.31,470.98 369.85,473.07 370.39,475.12 370.93,477.13 371.47,479.1 372.01,481.04 372.55,482.94 373.09,484.8 373.63,486.64 374.17,488.43 374.71,490.2 375.26,491.93 375.8,493.63 376.34,495.31 376.88,496.94 377.42,498.55 377.96,500.13 378.5,501.68 379.04,503.21 379.58,504.7 380.12,506.17 380.66,507.61 381.2,509.02 381.74,510.41 382.28,511.77 382.83,513.11 383.37,514.42 383.91,515.71 384.45,516.97 384.99,518.22 385.53,519.43 386.07,520.63 386.61,521.8 387.15,522.96 387.69,524.09 388.23,525.2 388.77,526.29 389.31,527.36 389.85,528.41 390.39,529.44 390.94,530.46 391.48,531.45 392.02,532.43 392.56,533.38 393.1,534.32 393.64,535.25 394.18,536.15 394.72,537.04 395.26,537.91 395.8,538.77 396.34,539.61 396.88,540.44 397.42,541.25 397.96,542.05 398.51,542.83 399.05,543.59 399.59,544.35 400.13,545.08 400.67,545.81 401.21,546.52 401.75,547.22 402.29,547.91 402.83,548.58 403.37,549.24 403.91,549.89 404.45,550.53 404.99,551.15 405.53,551.77 406.08,552.37 406.62,552.96 407.16,553.54 407.7,554.11 408.24,554.67 408.78,555.22 409.32,555.76 409.86,556.29 410.4,556.81 410.94,557.32 411.48,557.82 412.02,558.31 412.56,558.79 413.1,559.27 413.65,559.73 414.19,560.19 414.73,560.64 415.27,561.08 415.81,561.51 416.35,561.93 416.89,562.35 417.43,562.76 417.97,563.16 418.51,563.55 419.05,563.94 419.59,564.32 420.13,564.69 420.67,565.05 421.21,565.41 421.76,565.76 422.3,566.11 422.84,566.45 423.38,566.78 423.92,567.11 424.46,567.43 425,567.74 425.54,568.05 426.08,568.36 426.62,568.65 427.16,568.95 427.7,569.23 428.24,569.52 428.78,569.79 429.33,570.06 429.87,570.33 430.41,570.59 430.95,570.85 431.49,571.1 432.03,571.35 432.57,571.59 433.11,571.83 433.65,572.07 434.19,572.3 434.73,572.52 435.27,572.74 435.81,572.96 436.35,573.17 436.9,573.38 437.44,573.59 437.98,573.79 438.52,573.99 439.06,574.18 439.6,574.37 440.14,574.56 440.68,574.75 441.22,574.93 441.76,575.1 442.3,575.28 442.84,575.45 443.38,575.62 443.92,575.78 444.47,575.94 445.01,576.1 445.55,576.26 446.09,576.41 446.63,576.56 447.17,576.71 447.71,576.85 448.25,576.99 448.79,577.13 449.33,577.27 449.87,577.4 450.41,577.54 450.95,577.67 451.49,577.79 452.03,577.92 452.58,578.04 453.12,578.16 453.66,578.28 454.2,578.39 454.74,578.51 455.28,578.62 455.82,578.73 456.36,578.84 456.9,578.94 457.44,579.05 457.98,579.15 458.52,579.25 459.06,579.34 459.6,579.44 460.15,579.54 460.69,579.63 461.23,579.72 461.77,579.81 462.31,579.9 462.85,579.98 463.39,580.07 463.93,580.15 464.47,580.23 465.01,580.31 465.55,580.39 466.09,580.47 466.63,580.54 467.17,580.62 467.72,580.69 468.26,580.76 468.8,580.83 469.34,580.9 469.88,580.97 470.42,581.03 470.96,581.1 471.5,581.16 472.04,581.23 472.58,581.29 473.12,581.35 473.66,581.41 474.2,581.47 474.74,581.52 475.28,581.58 475.83,581.63 476.37,581.69 476.91,581.74 477.45,581.79 477.99,581.84 478.53,581.9 479.07,581.94 479.61,581.99 480.15,582.04 480.69,582.09 481.23,582.13 481.77,582.18 482.31,582.22 482.85,582.27 483.4,582.31 483.94,582.35 484.48,582.39 485.02,582.43 485.56,582.47 486.1,582.51 486.64,582.55 487.18,582.59 487.72,582.62 488.26,582.66 488.8,582.69 489.34,582.73 489.88,582.76 490.42,582.8 490.97,582.83 491.51,582.86 492.05,582.89 492.59,582.92 493.13,582.95 493.67,582.98 494.21,583.01 494.75,583.04 495.29,583.07 495.83,583.1 496.37,583.13 496.91,583.15 497.45,583.18 497.99,583.2 498.54,583.23 499.08,583.25 499.62,583.28 500.16,583.3 500.7,583.33 501.24,583.35 501.78,583.37 502.32,583.39 502.86,583.42 503.4,583.44 503.94,583.46 504.48,583.48 505.02,583.5 505.56,583.52 506.1,583.54 506.65,583.56 507.19,583.58 507.73,583.6 508.27,583.61 508.81,583.63 509.35,583.65 509.89,583.67 510.43,583.68 510.97,583.7 511.51,583.72 512.05,583.73 512.59,583.75 513.13,583.76 513.67,583.78 514.22,583.79 514.76,583.81 515.3,583.82 515.84,583.84 516.38,583.85 516.92,583.86 517.46,583.88 518,583.89 518.54,583.9 519.08,583.91 519.62,583.93 520.16,583.94 520.7,583.95 521.24,583.96 521.79,583.97 522.33,583.98 522.87,584 523.41,584.01 523.95,584.02 524.49,584.03 525.03,584.04 525.57,584.05 526.11,584.06 526.65,584.07 527.19,584.08 527.73,584.09 528.27,584.09 528.81,584.1 529.36,584.11 529.9,584.12 530.44,584.13 530.98,584.14 531.52,584.15 532.06,584.15 532.6,584.16 533.14,584.17 533.68,584.18 534.22,584.18 534.76,584.19 535.3,584.2 535.84,584.21 536.38,584.21 536.92,584.22 537.47,584.23 538.01,584.23 538.55,584.24 539.09,584.25 539.63,584.25 540.17,584.26 540.71,584.26 541.25,584.27 541.79,584.28 542.33,584.28 542.87,584.29 543.41,584.29 543.95,584.3 544.49,584.3 545.04,584.31 545.58,584.31 546.12,584.32 546.66,584.32 547.2,584.33 547.74,584.33 548.28,584.34 548.82,584.34 549.36,584.35 549.9,584.35 550.44,584.35 550.98,584.36 551.52,584.36 552.06,584.37 552.61,584.37 553.15,584.38 553.69,584.38 554.23,584.38 554.77,584.39 555.31,584.39 555.85,584.39 556.39,584.4 556.93,584.4 557.47,584.4 558.01,584.41 558.55,584.41 559.09,584.41 559.63,584.42 560.17,584.42 560.72,584.42 561.26,584.43 561.8,584.43 562.34,584.43 562.88,584.43 563.42,584.44 563.96,584.44 564.5,584.44 565.04,584.44 565.58,584.45 566.12,584.45 566.66,584.45 567.2,584.45 567.74,584.46 568.29,584.46 568.83,584.46 569.37,584.46 569.91,584.47 570.45,584.47 570.99,584.47 571.53,584.47 572.07,584.47 572.61,584.48 573.15,584.48 573.69,584.48 574.23,584.48 574.77,584.48 575.31,584.49 575.86,584.49 576.4,584.49 576.94,584.49 577.48,584.49 578.02,584.49 578.56,584.5 579.1,584.5 579.64,584.5 580.18,584.5 580.72,584.5 581.26,584.5 581.8,584.51 582.34,584.51 582.88,584.51 583.43,584.51 583.97,584.51 584.51,584.51 585.05,584.51 585.59,584.51 586.13,584.52 586.67,584.52 587.21,584.52 587.75,584.52 588.29,584.52 588.83,584.52 589.37,584.52 589.91,584.52 590.45,584.53 590.99,584.53 591.54,584.53 592.08,584.53 592.62,584.53 593.16,584.53 593.7,584.53 594.24,584.53 594.78,584.53 595.32,584.53 595.86,584.54 596.4,584.54 596.94,584.54 597.48,584.54 598.02,584.54 598.56,584.54 599.11,584.54 599.65,584.54 600.19,584.54 600.73,584.54 601.27,584.54 601.81,584.54 602.35,584.54 602.89,584.55 603.43,584.55 603.97,584.55 604.51,584.55 605.05,584.55 605.59,584.55 606.13,584.55 606.68,584.55 607.22,584.55 607.76,584.55 608.3,584.55 608.84,584.55 609.38,584.55 609.92,584.55 610.46,584.55 611,584.55 611.54,584.56 612.08,584.56 612.62,584.56 613.16,584.56 613.7,584.56 614.25,584.56 614.79,584.56 615.33,584.56 615.87,584.56 616.41,584.56 616.95,584.56 617.49,584.56 618.03,584.56 618.57,584.56 619.11,584.56 619.65,584.56 620.19,584.56 620.73,584.56 621.27,584.56 621.81,584.56 622.36,584.56 622.9,584.56 623.44,584.56 623.98,584.56 624.52,584.57 625.06,584.57 625.6,584.57 626.14,584.57 626.68,584.57 627.22,584.57 627.76,584.57 628.3,584.57 628.84,584.57 629.38,584.57 629.93,584.57 630.47,584.57 631.01,584.57 631.55,584.57 632.09,584.57 632.63,584.57 633.17,584.57 633.71,584.57 634.25,584.57 634.79,584.57 635.33,584.57 635.87,584.57 636.41,584.57 636.95,584.57 637.5,584.57 638.04,584.57 638.58,584.57 639.12,584.57 639.66,584.57 640.2,584.57 640.74,584.57 641.28,584.57 641.82,584.57 642.36,584.57 642.9,584.57 643.44,584.57 643.98,584.57 644.52,584.57 645.06,584.57 645.61,584.57 646.15,584.57 646.69,584.57 647.23,584.58 647.77,584.58 648.31,584.58 648.85,584.58 649.39,584.58 649.93,584.58 650.47,584.58 651.01,584.58 651.55,584.58 652.09,584.58 652.63,584.58 653.18,584.58 653.72,584.58 654.26,584.58 654.8,584.58 655.34,584.58 655.88,584.58 656.42,584.58 656.96,584.58 657.5,584.58 658.04,584.58 658.58,584.58 659.12,584.58 659.66,584.58 660.2,584.58 660.75,584.58 661.29,584.58 661.83,584.58 662.37,584.58 662.91,584.58 663.45,584.58 663.99,584.58 664.53,584.58 665.07,584.58 665.61,584.58 666.15,584.58 666.69,584.58 667.23,584.58 667.77,584.58 668.32,584.58 668.86,584.58 669.4,584.58 669.94,584.58 670.48,584.58 671.02,584.58 671.56,584.58 672.1,584.58" fill="none" stroke="#00ff00" stroke-width="2.9" stroke-linejoin="round" clip-path="url(#cF1)"/>
<path d="M23.8,844.7 26.07,844.7 26.07,730.35 350.87,730.35 350.87,844.7 672.1,844.7" fill="none" stroke="#d0906a" stroke-width="2.6"/>
<line x1="62.5" y1="377.5" x2="62.5" y2="603.5" stroke="#ffffff" stroke-width="1.8" stroke-dasharray="2 1.7"/>
<line x1="62.5" y1="617" x2="62.5" y2="843.7" stroke="#ffffff" stroke-width="1.8" stroke-dasharray="2 1.7"/>
<line x1="24.8" y1="464.9" x2="672.1" y2="464.9" stroke="#ffffff" stroke-width="1.8" stroke-dasharray="2 1.7"/>
<rect x="121.7" y="473.1" width="177.6" height="121.3" fill="#9a9a9a"/>
<rect x="122.2" y="473.6" width="176.6" height="120.3" fill="#f0f0f0"/>
<rect x="122.2" y="473.6" width="176.6" height="18" fill="#ffffff"/>
<path d="M127.5,486.5 L127.5,477.5 L133.5,476.8 L132.5,480 Z" fill="#ffffff" stroke="#222" stroke-width="0.8"/>
<path d="M128.5,479.5 l2,-2 l1,1.5 l2,-2" fill="none" stroke="#cc2020" stroke-width="1"/>
<text x="139.7" y="485.2" font-size="8.6" fill="#1a1a1a" textLength="31.2" lengthAdjust="spacingAndGlyphs">FOPD.raw</text>
<path d="M286.7,479.2 L292.7,485.2 M292.7,479.2 L286.7,485.2" stroke="#333" stroke-width="0.9"/>
<line x1="152" y1="494.8" x2="297.8" y2="494.8" stroke="#d8d8d8" stroke-width="0.9"/>
<line x1="152" y1="495.8" x2="297.8" y2="495.8" stroke="#ffffff" stroke-width="0.9"/>
<text x="126.9" y="498.2" font-size="6.3" fill="#2a2a3a" textLength="24.5" lengthAdjust="spacingAndGlyphs">Cursor 1</text>
<text x="187.7" y="504.9" font-size="6.3" fill="#2a2a3a" textLength="25.7" lengthAdjust="spacingAndGlyphs">V(output)</text>
<text x="125.2" y="517.4" font-size="6.3" fill="#2a2a3a" textLength="15.2" lengthAdjust="spacingAndGlyphs">Horz:</text>
<rect x="142.3" y="509.6" width="64.7" height="10.2" fill="#ffffff"/>
<line x1="142.3" y1="510" x2="207" y2="510" stroke="#767676" stroke-width="0.9"/>
<line x1="142.7" y1="509.6" x2="142.7" y2="519.8" stroke="#767676" stroke-width="0.9"/>
<rect x="154.15" y="511.4" width="41" height="7.6" fill="#3390ff"/>
<text x="174.65" y="517.5" font-size="6.6" fill="#ffffff" text-anchor="middle" textLength="40" lengthAdjust="spacingAndGlyphs">12.037037s</text>
<text x="216.7" y="517.4" font-size="6.3" fill="#2a2a3a" textLength="14" lengthAdjust="spacingAndGlyphs">Vert:</text>
<rect x="232.3" y="509.6" width="64.5" height="10.2" fill="#ffffff"/>
<line x1="232.3" y1="510" x2="296.8" y2="510" stroke="#767676" stroke-width="0.9"/>
<line x1="232.7" y1="509.6" x2="232.7" y2="519.8" stroke="#767676" stroke-width="0.9"/>
<text x="264.55" y="517.5" font-size="7" fill="#1a1a1a" text-anchor="middle" textLength="34" lengthAdjust="spacingAndGlyphs">63.23348V</text>
<line x1="124.2" y1="522.8" x2="297.8" y2="522.8" stroke="#d8d8d8" stroke-width="0.9"/>
<line x1="124.2" y1="523.8" x2="297.8" y2="523.8" stroke="#ffffff" stroke-width="0.9"/>
<text x="126.9" y="530.7" font-size="6.3" fill="#2a2a3a" textLength="24.5" lengthAdjust="spacingAndGlyphs">Cursor 2</text>
<text x="125.2" y="551" font-size="6.3" fill="#b4b4b4" textLength="15.2" lengthAdjust="spacingAndGlyphs">Horz:</text>
<rect x="142.3" y="542.7" width="64.7" height="10.6" fill="#f0f0f0"/>
<line x1="142.3" y1="543.1" x2="207" y2="543.1" stroke="#767676" stroke-width="0.9"/>
<line x1="142.7" y1="542.7" x2="142.7" y2="553.3" stroke="#767676" stroke-width="0.9"/>
<text x="174.65" y="551" font-size="6.6" fill="#a0a0a0" text-anchor="middle">-- N/A--</text>
<text x="216.7" y="551" font-size="6.3" fill="#b4b4b4" textLength="14" lengthAdjust="spacingAndGlyphs">Vert:</text>
<rect x="232.3" y="542.7" width="64.5" height="10.6" fill="#f0f0f0"/>
<line x1="232.3" y1="543.1" x2="296.8" y2="543.1" stroke="#767676" stroke-width="0.9"/>
<line x1="232.7" y1="542.7" x2="232.7" y2="553.3" stroke="#767676" stroke-width="0.9"/>
<text x="264.55" y="551" font-size="6.6" fill="#a0a0a0" text-anchor="middle">-- N/A--</text>
<line x1="124.2" y1="555.3" x2="297.8" y2="555.3" stroke="#d8d8d8" stroke-width="0.9"/>
<line x1="124.2" y1="556.3" x2="297.8" y2="556.3" stroke="#ffffff" stroke-width="0.9"/>
<text x="126.9" y="563.5" font-size="6.3" fill="#2a2a3a" textLength="64.4" lengthAdjust="spacingAndGlyphs">Diff (Cursor2 - Cursor1)</text>
<text x="125.2" y="574.5" font-size="6.3" fill="#b4b4b4" textLength="15.2" lengthAdjust="spacingAndGlyphs">Horz:</text>
<rect x="142.3" y="566.6" width="64.7" height="10.1" fill="#f0f0f0"/>
<line x1="142.3" y1="567" x2="207" y2="567" stroke="#767676" stroke-width="0.9"/>
<line x1="142.7" y1="566.6" x2="142.7" y2="576.7" stroke="#767676" stroke-width="0.9"/>
<text x="174.65" y="574.4" font-size="6.6" fill="#a0a0a0" text-anchor="middle">-- N/A--</text>
<text x="216.7" y="574.5" font-size="6.3" fill="#b4b4b4" textLength="14" lengthAdjust="spacingAndGlyphs">Vert:</text>
<rect x="232.3" y="566.6" width="64.5" height="10.1" fill="#f0f0f0"/>
<line x1="232.3" y1="567" x2="296.8" y2="567" stroke="#767676" stroke-width="0.9"/>
<line x1="232.7" y1="566.6" x2="232.7" y2="576.7" stroke="#767676" stroke-width="0.9"/>
<text x="264.55" y="574.4" font-size="6.6" fill="#a0a0a0" text-anchor="middle">-- N/A--</text>
<text x="125.6" y="587.8" font-size="6.3" fill="#b4b4b4" textLength="14.5" lengthAdjust="spacingAndGlyphs">Freq:</text>
<rect x="142.3" y="579.5" width="64.7" height="10.5" fill="#f0f0f0"/>
<line x1="142.3" y1="579.9" x2="207" y2="579.9" stroke="#767676" stroke-width="0.9"/>
<line x1="142.7" y1="579.5" x2="142.7" y2="590" stroke="#767676" stroke-width="0.9"/>
<text x="174.65" y="587.7" font-size="6.6" fill="#a0a0a0" text-anchor="middle">-- N/A--</text>
<text x="212.3" y="587.8" font-size="6.3" fill="#b4b4b4" textLength="18" lengthAdjust="spacingAndGlyphs">Slope:</text>
<rect x="232.3" y="579.5" width="64.5" height="10.5" fill="#f0f0f0"/>
<line x1="232.3" y1="579.9" x2="296.8" y2="579.9" stroke="#767676" stroke-width="0.9"/>
<line x1="232.7" y1="579.5" x2="232.7" y2="590" stroke="#767676" stroke-width="0.9"/>
<text x="264.55" y="587.7" font-size="6.6" fill="#a0a0a0" text-anchor="middle">-- N/A--</text>
<rect x="685" y="2" width="849" height="425" fill="#d6e3f1"/>
<rect x="685" y="2" width="849" height="26.3" fill="url(#tb)"/>
<path d="M697.2,11.5 V21.5" stroke="#1a1aff" stroke-width="2.4"/>
<path d="M694.5,16.5 H697.2 M697.6,14.8 L702.5,10 M697.6,18.2 L702.5,23" stroke="#1a1aff" stroke-width="1.2"/>
<path d="M703.5,24.2 L699.8,23.2 L702.6,20.5 Z" fill="#1a1aff"/>
<text x="709.8" y="22.2" font-size="11.2" fill="#8c8c8c" textLength="79.6" lengthAdjust="spacingAndGlyphs">Differentiator.asc</text>
<rect x="1437.4" y="9" width="27.9" height="16.3" rx="2.5" fill="url(#btn)" stroke="#8d9cb3" stroke-width="1"/>
<rect x="1446.77" y="17.66" width="9.17" height="3.26" rx="1.5" fill="#f4f6f9" stroke="#4a5466" stroke-width="0.9"/>
<rect x="1468" y="9" width="27.5" height="16.3" rx="2.5" fill="url(#btn)" stroke="#8d9cb3" stroke-width="1"/>
<rect x="1477.17" y="13.58" width="9.17" height="7.13" rx="1.5" fill="#f4f6f9" stroke="#4a5466" stroke-width="0.9"/>
<rect x="1479.51" y="15.93" width="4.48" height="2.04" fill="#4a5a78"/>
<rect x="1498.3" y="9" width="28.3" height="16.3" rx="2.5" fill="url(#btn)" stroke="#8d9cb3" stroke-width="1"/>
<path d="M1508.78,13.48 L1516.12,20.82 M1508.78,20.82 L1516.12,13.48" stroke="#3f4a5c" stroke-width="3.46" stroke-linecap="round"/>
<path d="M1508.78,13.48 L1516.12,20.82 M1508.78,20.82 L1516.12,13.48" stroke="#ffffff" stroke-width="1.83" stroke-linecap="round"/>
<rect x="690.1" y="28.3" width="839" height="393.8" fill="#fafafa"/>
<rect x="690.1" y="28.3" width="837.5" height="392.3" fill="#c3c3c3"/>
<rect x="690.1" y="28.3" width="837.5" height="2" fill="#6e6e6e"/>
<rect x="690.1" y="28.3" width="2" height="392.3" fill="#6e6e6e"/>
<path d="M698.68 31.2h1.3v1.3h-1.3zM698.68 41.11h1.3v1.3h-1.3zM698.68 51.02h1.3v1.3h-1.3zM698.68 60.94h1.3v1.3h-1.3zM698.68 70.85h1.3v1.3h-1.3zM698.68 80.76h1.3v1.3h-1.3zM698.68 90.67h1.3v1.3h-1.3zM698.68 100.58h1.3v1.3h-1.3zM698.68 110.5h1.3v1.3h-1.3zM698.68 120.41h1.3v1.3h-1.3zM698.68 130.32h1.3v1.3h-1.3zM698.68 140.23h1.3v1.3h-1.3zM698.68 150.14h1.3v1.3h-1.3zM698.68 160.06h1.3v1.3h-1.3zM698.68 169.97h1.3v1.3h-1.3zM698.68 179.88h1.3v1.3h-1.3zM698.68 189.79h1.3v1.3h-1.3zM698.68 199.7h1.3v1.3h-1.3zM698.68 209.62h1.3v1.3h-1.3zM698.68 219.53h1.3v1.3h-1.3zM698.68 229.44h1.3v1.3h-1.3zM698.68 239.35h1.3v1.3h-1.3zM698.68 249.26h1.3v1.3h-1.3zM698.68 259.18h1.3v1.3h-1.3zM698.68 269.09h1.3v1.3h-1.3zM698.68 279h1.3v1.3h-1.3zM698.68 288.91h1.3v1.3h-1.3zM698.68 298.82h1.3v1.3h-1.3zM698.68 308.74h1.3v1.3h-1.3zM698.68 318.65h1.3v1.3h-1.3zM698.68 328.56h1.3v1.3h-1.3zM698.68 338.47h1.3v1.3h-1.3zM698.68 348.38h1.3v1.3h-1.3zM698.68 358.3h1.3v1.3h-1.3zM698.68 368.21h1.3v1.3h-1.3zM698.68 378.12h1.3v1.3h-1.3zM698.68 388.03h1.3v1.3h-1.3zM698.68 397.94h1.3v1.3h-1.3zM698.68 407.86h1.3v1.3h-1.3zM698.68 417.77h1.3v1.3h-1.3zM708.59 31.2h1.3v1.3h-1.3zM708.59 41.11h1.3v1.3h-1.3zM708.59 51.02h1.3v1.3h-1.3zM708.59 60.94h1.3v1.3h-1.3zM708.59 70.85h1.3v1.3h-1.3zM708.59 80.76h1.3v1.3h-1.3zM708.59 90.67h1.3v1.3h-1.3zM708.59 100.58h1.3v1.3h-1.3zM708.59 110.5h1.3v1.3h-1.3zM708.59 120.41h1.3v1.3h-1.3zM708.59 130.32h1.3v1.3h-1.3zM708.59 140.23h1.3v1.3h-1.3zM708.59 150.14h1.3v1.3h-1.3zM708.59 160.06h1.3v1.3h-1.3zM708.59 169.97h1.3v1.3h-1.3zM708.59 179.88h1.3v1.3h-1.3zM708.59 189.79h1.3v1.3h-1.3zM708.59 199.7h1.3v1.3h-1.3zM708.59 209.62h1.3v1.3h-1.3zM708.59 219.53h1.3v1.3h-1.3zM708.59 229.44h1.3v1.3h-1.3zM708.59 239.35h1.3v1.3h-1.3zM708.59 249.26h1.3v1.3h-1.3zM708.59 259.18h1.3v1.3h-1.3zM708.59 269.09h1.3v1.3h-1.3zM708.59 279h1.3v1.3h-1.3zM708.59 288.91h1.3v1.3h-1.3zM708.59 298.82h1.3v1.3h-1.3zM708.59 308.74h1.3v1.3h-1.3zM708.59 318.65h1.3v1.3h-1.3zM708.59 328.56h1.3v1.3h-1.3zM708.59 338.47h1.3v1.3h-1.3zM708.59 348.38h1.3v1.3h-1.3zM708.59 358.3h1.3v1.3h-1.3zM708.59 368.21h1.3v1.3h-1.3zM708.59 378.12h1.3v1.3h-1.3zM708.59 388.03h1.3v1.3h-1.3zM708.59 397.94h1.3v1.3h-1.3zM708.59 407.86h1.3v1.3h-1.3zM708.59 417.77h1.3v1.3h-1.3zM718.5 31.2h1.3v1.3h-1.3zM718.5 41.11h1.3v1.3h-1.3zM718.5 51.02h1.3v1.3h-1.3zM718.5 60.94h1.3v1.3h-1.3zM718.5 70.85h1.3v1.3h-1.3zM718.5 80.76h1.3v1.3h-1.3zM718.5 90.67h1.3v1.3h-1.3zM718.5 100.58h1.3v1.3h-1.3zM718.5 110.5h1.3v1.3h-1.3zM718.5 120.41h1.3v1.3h-1.3zM718.5 130.32h1.3v1.3h-1.3zM718.5 140.23h1.3v1.3h-1.3zM718.5 150.14h1.3v1.3h-1.3zM718.5 160.06h1.3v1.3h-1.3zM718.5 169.97h1.3v1.3h-1.3zM718.5 179.88h1.3v1.3h-1.3zM718.5 189.79h1.3v1.3h-1.3zM718.5 199.7h1.3v1.3h-1.3zM718.5 209.62h1.3v1.3h-1.3zM718.5 219.53h1.3v1.3h-1.3zM718.5 229.44h1.3v1.3h-1.3zM718.5 239.35h1.3v1.3h-1.3zM718.5 249.26h1.3v1.3h-1.3zM718.5 259.18h1.3v1.3h-1.3zM718.5 269.09h1.3v1.3h-1.3zM718.5 279h1.3v1.3h-1.3zM718.5 288.91h1.3v1.3h-1.3zM718.5 298.82h1.3v1.3h-1.3zM718.5 308.74h1.3v1.3h-1.3zM718.5 318.65h1.3v1.3h-1.3zM718.5 328.56h1.3v1.3h-1.3zM718.5 338.47h1.3v1.3h-1.3zM718.5 348.38h1.3v1.3h-1.3zM718.5 358.3h1.3v1.3h-1.3zM718.5 368.21h1.3v1.3h-1.3zM718.5 378.12h1.3v1.3h-1.3zM718.5 388.03h1.3v1.3h-1.3zM718.5 397.94h1.3v1.3h-1.3zM718.5 407.86h1.3v1.3h-1.3zM718.5 417.77h1.3v1.3h-1.3zM728.42 31.2h1.3v1.3h-1.3zM728.42 41.11h1.3v1.3h-1.3zM728.42 51.02h1.3v1.3h-1.3zM728.42 60.94h1.3v1.3h-1.3zM728.42 70.85h1.3v1.3h-1.3zM728.42 80.76h1.3v1.3h-1.3zM728.42 90.67h1.3v1.3h-1.3zM728.42 100.58h1.3v1.3h-1.3zM728.42 110.5h1.3v1.3h-1.3zM728.42 120.41h1.3v1.3h-1.3zM728.42 130.32h1.3v1.3h-1.3zM728.42 140.23h1.3v1.3h-1.3zM728.42 150.14h1.3v1.3h-1.3zM728.42 160.06h1.3v1.3h-1.3zM728.42 169.97h1.3v1.3h-1.3zM728.42 179.88h1.3v1.3h-1.3zM728.42 189.79h1.3v1.3h-1.3zM728.42 199.7h1.3v1.3h-1.3zM728.42 209.62h1.3v1.3h-1.3zM728.42 219.53h1.3v1.3h-1.3zM728.42 229.44h1.3v1.3h-1.3zM728.42 239.35h1.3v1.3h-1.3zM728.42 249.26h1.3v1.3h-1.3zM728.42 259.18h1.3v1.3h-1.3zM728.42 269.09h1.3v1.3h-1.3zM728.42 279h1.3v1.3h-1.3zM728.42 288.91h1.3v1.3h-1.3zM728.42 298.82h1.3v1.3h-1.3zM728.42 308.74h1.3v1.3h-1.3zM728.42 318.65h1.3v1.3h-1.3zM728.42 328.56h1.3v1.3h-1.3zM728.42 338.47h1.3v1.3h-1.3zM728.42 348.38h1.3v1.3h-1.3zM728.42 358.3h1.3v1.3h-1.3zM728.42 368.21h1.3v1.3h-1.3zM728.42 378.12h1.3v1.3h-1.3zM728.42 388.03h1.3v1.3h-1.3zM728.42 397.94h1.3v1.3h-1.3zM728.42 407.86h1.3v1.3h-1.3zM728.42 417.77h1.3v1.3h-1.3zM738.33 31.2h1.3v1.3h-1.3zM738.33 41.11h1.3v1.3h-1.3zM738.33 51.02h1.3v1.3h-1.3zM738.33 60.94h1.3v1.3h-1.3zM738.33 70.85h1.3v1.3h-1.3zM738.33 80.76h1.3v1.3h-1.3zM738.33 90.67h1.3v1.3h-1.3zM738.33 100.58h1.3v1.3h-1.3zM738.33 110.5h1.3v1.3h-1.3zM738.33 120.41h1.3v1.3h-1.3zM738.33 130.32h1.3v1.3h-1.3zM738.33 140.23h1.3v1.3h-1.3zM738.33 150.14h1.3v1.3h-1.3zM738.33 160.06h1.3v1.3h-1.3zM738.33 169.97h1.3v1.3h-1.3zM738.33 179.88h1.3v1.3h-1.3zM738.33 189.79h1.3v1.3h-1.3zM738.33 199.7h1.3v1.3h-1.3zM738.33 209.62h1.3v1.3h-1.3zM738.33 219.53h1.3v1.3h-1.3zM738.33 229.44h1.3v1.3h-1.3zM738.33 239.35h1.3v1.3h-1.3zM738.33 249.26h1.3v1.3h-1.3zM738.33 259.18h1.3v1.3h-1.3zM738.33 269.09h1.3v1.3h-1.3zM738.33 279h1.3v1.3h-1.3zM738.33 288.91h1.3v1.3h-1.3zM738.33 298.82h1.3v1.3h-1.3zM738.33 308.74h1.3v1.3h-1.3zM738.33 318.65h1.3v1.3h-1.3zM738.33 328.56h1.3v1.3h-1.3zM738.33 338.47h1.3v1.3h-1.3zM738.33 348.38h1.3v1.3h-1.3zM738.33 358.3h1.3v1.3h-1.3zM738.33 368.21h1.3v1.3h-1.3zM738.33 378.12h1.3v1.3h-1.3zM738.33 388.03h1.3v1.3h-1.3zM738.33 397.94h1.3v1.3h-1.3zM738.33 407.86h1.3v1.3h-1.3zM738.33 417.77h1.3v1.3h-1.3zM748.24 31.2h1.3v1.3h-1.3zM748.24 41.11h1.3v1.3h-1.3zM748.24 51.02h1.3v1.3h-1.3zM748.24 60.94h1.3v1.3h-1.3zM748.24 70.85h1.3v1.3h-1.3zM748.24 80.76h1.3v1.3h-1.3zM748.24 90.67h1.3v1.3h-1.3zM748.24 100.58h1.3v1.3h-1.3zM748.24 110.5h1.3v1.3h-1.3zM748.24 120.41h1.3v1.3h-1.3zM748.24 130.32h1.3v1.3h-1.3zM748.24 140.23h1.3v1.3h-1.3zM748.24 150.14h1.3v1.3h-1.3zM748.24 160.06h1.3v1.3h-1.3zM748.24 169.97h1.3v1.3h-1.3zM748.24 179.88h1.3v1.3h-1.3zM748.24 189.79h1.3v1.3h-1.3zM748.24 199.7h1.3v1.3h-1.3zM748.24 209.62h1.3v1.3h-1.3zM748.24 219.53h1.3v1.3h-1.3zM748.24 229.44h1.3v1.3h-1.3zM748.24 239.35h1.3v1.3h-1.3zM748.24 249.26h1.3v1.3h-1.3zM748.24 259.18h1.3v1.3h-1.3zM748.24 269.09h1.3v1.3h-1.3zM748.24 279h1.3v1.3h-1.3zM748.24 288.91h1.3v1.3h-1.3zM748.24 298.82h1.3v1.3h-1.3zM748.24 308.74h1.3v1.3h-1.3zM748.24 318.65h1.3v1.3h-1.3zM748.24 328.56h1.3v1.3h-1.3zM748.24 338.47h1.3v1.3h-1.3zM748.24 348.38h1.3v1.3h-1.3zM748.24 358.3h1.3v1.3h-1.3zM748.24 368.21h1.3v1.3h-1.3zM748.24 378.12h1.3v1.3h-1.3zM748.24 388.03h1.3v1.3h-1.3zM748.24 397.94h1.3v1.3h-1.3zM748.24 407.86h1.3v1.3h-1.3zM748.24 417.77h1.3v1.3h-1.3zM758.15 31.2h1.3v1.3h-1.3zM758.15 41.11h1.3v1.3h-1.3zM758.15 51.02h1.3v1.3h-1.3zM758.15 60.94h1.3v1.3h-1.3zM758.15 70.85h1.3v1.3h-1.3zM758.15 80.76h1.3v1.3h-1.3zM758.15 90.67h1.3v1.3h-1.3zM758.15 100.58h1.3v1.3h-1.3zM758.15 110.5h1.3v1.3h-1.3zM758.15 120.41h1.3v1.3h-1.3zM758.15 130.32h1.3v1.3h-1.3zM758.15 140.23h1.3v1.3h-1.3zM758.15 150.14h1.3v1.3h-1.3zM758.15 160.06h1.3v1.3h-1.3zM758.15 169.97h1.3v1.3h-1.3zM758.15 179.88h1.3v1.3h-1.3zM758.15 189.79h1.3v1.3h-1.3zM758.15 199.7h1.3v1.3h-1.3zM758.15 209.62h1.3v1.3h-1.3zM758.15 219.53h1.3v1.3h-1.3zM758.15 229.44h1.3v1.3h-1.3zM758.15 239.35h1.3v1.3h-1.3zM758.15 249.26h1.3v1.3h-1.3zM758.15 259.18h1.3v1.3h-1.3zM758.15 269.09h1.3v1.3h-1.3zM758.15 279h1.3v1.3h-1.3zM758.15 288.91h1.3v1.3h-1.3zM758.15 298.82h1.3v1.3h-1.3zM758.15 308.74h1.3v1.3h-1.3zM758.15 318.65h1.3v1.3h-1.3zM758.15 328.56h1.3v1.3h-1.3zM758.15 338.47h1.3v1.3h-1.3zM758.15 348.38h1.3v1.3h-1.3zM758.15 358.3h1.3v1.3h-1.3zM758.15 368.21h1.3v1.3h-1.3zM758.15 378.12h1.3v1.3h-1.3zM758.15 388.03h1.3v1.3h-1.3zM758.15 397.94h1.3v1.3h-1.3zM758.15 407.86h1.3v1.3h-1.3zM758.15 417.77h1.3v1.3h-1.3zM768.06 31.2h1.3v1.3h-1.3zM768.06 41.11h1.3v1.3h-1.3zM768.06 51.02h1.3v1.3h-1.3zM768.06 60.94h1.3v1.3h-1.3zM768.06 70.85h1.3v1.3h-1.3zM768.06 80.76h1.3v1.3h-1.3zM768.06 90.67h1.3v1.3h-1.3zM768.06 100.58h1.3v1.3h-1.3zM768.06 110.5h1.3v1.3h-1.3zM768.06 120.41h1.3v1.3h-1.3zM768.06 130.32h1.3v1.3h-1.3zM768.06 140.23h1.3v1.3h-1.3zM768.06 150.14h1.3v1.3h-1.3zM768.06 160.06h1.3v1.3h-1.3zM768.06 169.97h1.3v1.3h-1.3zM768.06 179.88h1.3v1.3h-1.3zM768.06 189.79h1.3v1.3h-1.3zM768.06 199.7h1.3v1.3h-1.3zM768.06 209.62h1.3v1.3h-1.3zM768.06 219.53h1.3v1.3h-1.3zM768.06 229.44h1.3v1.3h-1.3zM768.06 239.35h1.3v1.3h-1.3zM768.06 249.26h1.3v1.3h-1.3zM768.06 259.18h1.3v1.3h-1.3zM768.06 269.09h1.3v1.3h-1.3zM768.06 279h1.3v1.3h-1.3zM768.06 288.91h1.3v1.3h-1.3zM768.06 298.82h1.3v1.3h-1.3zM768.06 308.74h1.3v1.3h-1.3zM768.06 318.65h1.3v1.3h-1.3zM768.06 328.56h1.3v1.3h-1.3zM768.06 338.47h1.3v1.3h-1.3zM768.06 348.38h1.3v1.3h-1.3zM768.06 358.3h1.3v1.3h-1.3zM768.06 368.21h1.3v1.3h-1.3zM768.06 378.12h1.3v1.3h-1.3zM768.06 388.03h1.3v1.3h-1.3zM768.06 397.94h1.3v1.3h-1.3zM768.06 407.86h1.3v1.3h-1.3zM768.06 417.77h1.3v1.3h-1.3zM777.98 31.2h1.3v1.3h-1.3zM777.98 41.11h1.3v1.3h-1.3zM777.98 51.02h1.3v1.3h-1.3zM777.98 60.94h1.3v1.3h-1.3zM777.98 70.85h1.3v1.3h-1.3zM777.98 80.76h1.3v1.3h-1.3zM777.98 90.67h1.3v1.3h-1.3zM777.98 100.58h1.3v1.3h-1.3zM777.98 110.5h1.3v1.3h-1.3zM777.98 120.41h1.3v1.3h-1.3zM777.98 130.32h1.3v1.3h-1.3zM777.98 140.23h1.3v1.3h-1.3zM777.98 150.14h1.3v1.3h-1.3zM777.98 160.06h1.3v1.3h-1.3zM777.98 169.97h1.3v1.3h-1.3zM777.98 179.88h1.3v1.3h-1.3zM777.98 189.79h1.3v1.3h-1.3zM777.98 199.7h1.3v1.3h-1.3zM777.98 209.62h1.3v1.3h-1.3zM777.98 219.53h1.3v1.3h-1.3zM777.98 229.44h1.3v1.3h-1.3zM777.98 239.35h1.3v1.3h-1.3zM777.98 249.26h1.3v1.3h-1.3zM777.98 259.18h1.3v1.3h-1.3zM777.98 269.09h1.3v1.3h-1.3zM777.98 279h1.3v1.3h-1.3zM777.98 288.91h1.3v1.3h-1.3zM777.98 298.82h1.3v1.3h-1.3zM777.98 308.74h1.3v1.3h-1.3zM777.98 318.65h1.3v1.3h-1.3zM777.98 328.56h1.3v1.3h-1.3zM777.98 338.47h1.3v1.3h-1.3zM777.98 348.38h1.3v1.3h-1.3zM777.98 358.3h1.3v1.3h-1.3zM777.98 368.21h1.3v1.3h-1.3zM777.98 378.12h1.3v1.3h-1.3zM777.98 388.03h1.3v1.3h-1.3zM777.98 397.94h1.3v1.3h-1.3zM777.98 407.86h1.3v1.3h-1.3zM777.98 417.77h1.3v1.3h-1.3zM787.89 31.2h1.3v1.3h-1.3zM787.89 41.11h1.3v1.3h-1.3zM787.89 51.02h1.3v1.3h-1.3zM787.89 60.94h1.3v1.3h-1.3zM787.89 70.85h1.3v1.3h-1.3zM787.89 80.76h1.3v1.3h-1.3zM787.89 90.67h1.3v1.3h-1.3zM787.89 100.58h1.3v1.3h-1.3zM787.89 110.5h1.3v1.3h-1.3zM787.89 120.41h1.3v1.3h-1.3zM787.89 130.32h1.3v1.3h-1.3zM787.89 140.23h1.3v1.3h-1.3zM787.89 150.14h1.3v1.3h-1.3zM787.89 160.06h1.3v1.3h-1.3zM787.89 169.97h1.3v1.3h-1.3zM787.89 179.88h1.3v1.3h-1.3zM787.89 189.79h1.3v1.3h-1.3zM787.89 199.7h1.3v1.3h-1.3zM787.89 209.62h1.3v1.3h-1.3zM787.89 219.53h1.3v1.3h-1.3zM787.89 229.44h1.3v1.3h-1.3zM787.89 239.35h1.3v1.3h-1.3zM787.89 249.26h1.3v1.3h-1.3zM787.89 259.18h1.3v1.3h-1.3zM787.89 269.09h1.3v1.3h-1.3zM787.89 279h1.3v1.3h-1.3zM787.89 288.91h1.3v1.3h-1.3zM787.89 298.82h1.3v1.3h-1.3zM787.89 308.74h1.3v1.3h-1.3zM787.89 318.65h1.3v1.3h-1.3zM787.89 328.56h1.3v1.3h-1.3zM787.89 338.47h1.3v1.3h-1.3zM787.89 348.38h1.3v1.3h-1.3zM787.89 358.3h1.3v1.3h-1.3zM787.89 368.21h1.3v1.3h-1.3zM787.89 378.12h1.3v1.3h-1.3zM787.89 388.03h1.3v1.3h-1.3zM787.89 397.94h1.3v1.3h-1.3zM787.89 407.86h1.3v1.3h-1.3zM787.89 417.77h1.3v1.3h-1.3zM797.8 31.2h1.3v1.3h-1.3zM797.8 41.11h1.3v1.3h-1.3zM797.8 51.02h1.3v1.3h-1.3zM797.8 60.94h1.3v1.3h-1.3zM797.8 70.85h1.3v1.3h-1.3zM797.8 80.76h1.3v1.3h-1.3zM797.8 90.67h1.3v1.3h-1.3zM797.8 100.58h1.3v1.3h-1.3zM797.8 110.5h1.3v1.3h-1.3zM797.8 120.41h1.3v1.3h-1.3zM797.8 130.32h1.3v1.3h-1.3zM797.8 140.23h1.3v1.3h-1.3zM797.8 150.14h1.3v1.3h-1.3zM797.8 160.06h1.3v1.3h-1.3zM797.8 169.97h1.3v1.3h-1.3zM797.8 179.88h1.3v1.3h-1.3zM797.8 189.79h1.3v1.3h-1.3zM797.8 199.7h1.3v1.3h-1.3zM797.8 209.62h1.3v1.3h-1.3zM797.8 219.53h1.3v1.3h-1.3zM797.8 229.44h1.3v1.3h-1.3zM797.8 239.35h1.3v1.3h-1.3zM797.8 249.26h1.3v1.3h-1.3zM797.8 259.18h1.3v1.3h-1.3zM797.8 269.09h1.3v1.3h-1.3zM797.8 279h1.3v1.3h-1.3zM797.8 288.91h1.3v1.3h-1.3zM797.8 298.82h1.3v1.3h-1.3zM797.8 308.74h1.3v1.3h-1.3zM797.8 318.65h1.3v1.3h-1.3zM797.8 328.56h1.3v1.3h-1.3zM797.8 338.47h1.3v1.3h-1.3zM797.8 348.38h1.3v1.3h-1.3zM797.8 358.3h1.3v1.3h-1.3zM797.8 368.21h1.3v1.3h-1.3zM797.8 378.12h1.3v1.3h-1.3zM797.8 388.03h1.3v1.3h-1.3zM797.8 397.94h1.3v1.3h-1.3zM797.8 407.86h1.3v1.3h-1.3zM797.8 417.77h1.3v1.3h-1.3zM807.71 31.2h1.3v1.3h-1.3zM807.71 41.11h1.3v1.3h-1.3zM807.71 51.02h1.3v1.3h-1.3zM807.71 60.94h1.3v1.3h-1.3zM807.71 70.85h1.3v1.3h-1.3zM807.71 80.76h1.3v1.3h-1.3zM807.71 90.67h1.3v1.3h-1.3zM807.71 100.58h1.3v1.3h-1.3zM807.71 110.5h1.3v1.3h-1.3zM807.71 120.41h1.3v1.3h-1.3zM807.71 130.32h1.3v1.3h-1.3zM807.71 140.23h1.3v1.3h-1.3zM807.71 150.14h1.3v1.3h-1.3zM807.71 160.06h1.3v1.3h-1.3zM807.71 169.97h1.3v1.3h-1.3zM807.71 179.88h1.3v1.3h-1.3zM807.71 189.79h1.3v1.3h-1.3zM807.71 199.7h1.3v1.3h-1.3zM807.71 209.62h1.3v1.3h-1.3zM807.71 219.53h1.3v1.3h-1.3zM807.71 229.44h1.3v1.3h-1.3zM807.71 239.35h1.3v1.3h-1.3zM807.71 249.26h1.3v1.3h-1.3zM807.71 259.18h1.3v1.3h-1.3zM807.71 269.09h1.3v1.3h-1.3zM807.71 279h1.3v1.3h-1.3zM807.71 288.91h1.3v1.3h-1.3zM807.71 298.82h1.3v1.3h-1.3zM807.71 308.74h1.3v1.3h-1.3zM807.71 318.65h1.3v1.3h-1.3zM807.71 328.56h1.3v1.3h-1.3zM807.71 338.47h1.3v1.3h-1.3zM807.71 348.38h1.3v1.3h-1.3zM807.71 358.3h1.3v1.3h-1.3zM807.71 368.21h1.3v1.3h-1.3zM807.71 378.12h1.3v1.3h-1.3zM807.71 388.03h1.3v1.3h-1.3zM807.71 397.94h1.3v1.3h-1.3zM807.71 407.86h1.3v1.3h-1.3zM807.71 417.77h1.3v1.3h-1.3zM817.62 31.2h1.3v1.3h-1.3zM817.62 41.11h1.3v1.3h-1.3zM817.62 51.02h1.3v1.3h-1.3zM817.62 60.94h1.3v1.3h-1.3zM817.62 70.85h1.3v1.3h-1.3zM817.62 80.76h1.3v1.3h-1.3zM817.62 90.67h1.3v1.3h-1.3zM817.62 100.58h1.3v1.3h-1.3zM817.62 110.5h1.3v1.3h-1.3zM817.62 120.41h1.3v1.3h-1.3zM817.62 130.32h1.3v1.3h-1.3zM817.62 140.23h1.3v1.3h-1.3zM817.62 150.14h1.3v1.3h-1.3zM817.62 160.06h1.3v1.3h-1.3zM817.62 169.97h1.3v1.3h-1.3zM817.62 179.88h1.3v1.3h-1.3zM817.62 189.79h1.3v1.3h-1.3zM817.62 199.7h1.3v1.3h-1.3zM817.62 209.62h1.3v1.3h-1.3zM817.62 219.53h1.3v1.3h-1.3zM817.62 229.44h1.3v1.3h-1.3zM817.62 239.35h1.3v1.3h-1.3zM817.62 249.26h1.3v1.3h-1.3zM817.62 259.18h1.3v1.3h-1.3zM817.62 269.09h1.3v1.3h-1.3zM817.62 279h1.3v1.3h-1.3zM817.62 288.91h1.3v1.3h-1.3zM817.62 298.82h1.3v1.3h-1.3zM817.62 308.74h1.3v1.3h-1.3zM817.62 318.65h1.3v1.3h-1.3zM817.62 328.56h1.3v1.3h-1.3zM817.62 338.47h1.3v1.3h-1.3zM817.62 348.38h1.3v1.3h-1.3zM817.62 358.3h1.3v1.3h-1.3zM817.62 368.21h1.3v1.3h-1.3zM817.62 378.12h1.3v1.3h-1.3zM817.62 388.03h1.3v1.3h-1.3zM817.62 397.94h1.3v1.3h-1.3zM817.62 407.86h1.3v1.3h-1.3zM817.62 417.77h1.3v1.3h-1.3zM827.54 31.2h1.3v1.3h-1.3zM827.54 41.11h1.3v1.3h-1.3zM827.54 51.02h1.3v1.3h-1.3zM827.54 60.94h1.3v1.3h-1.3zM827.54 70.85h1.3v1.3h-1.3zM827.54 80.76h1.3v1.3h-1.3zM827.54 90.67h1.3v1.3h-1.3zM827.54 100.58h1.3v1.3h-1.3zM827.54 110.5h1.3v1.3h-1.3zM827.54 120.41h1.3v1.3h-1.3zM827.54 130.32h1.3v1.3h-1.3zM827.54 140.23h1.3v1.3h-1.3zM827.54 150.14h1.3v1.3h-1.3zM827.54 160.06h1.3v1.3h-1.3zM827.54 169.97h1.3v1.3h-1.3zM827.54 179.88h1.3v1.3h-1.3zM827.54 189.79h1.3v1.3h-1.3zM827.54 199.7h1.3v1.3h-1.3zM827.54 209.62h1.3v1.3h-1.3zM827.54 219.53h1.3v1.3h-1.3zM827.54 229.44h1.3v1.3h-1.3zM827.54 239.35h1.3v1.3h-1.3zM827.54 249.26h1.3v1.3h-1.3zM827.54 259.18h1.3v1.3h-1.3zM827.54 269.09h1.3v1.3h-1.3zM827.54 279h1.3v1.3h-1.3zM827.54 288.91h1.3v1.3h-1.3zM827.54 298.82h1.3v1.3h-1.3zM827.54 308.74h1.3v1.3h-1.3zM827.54 318.65h1.3v1.3h-1.3zM827.54 328.56h1.3v1.3h-1.3zM827.54 338.47h1.3v1.3h-1.3zM827.54 348.38h1.3v1.3h-1.3zM827.54 358.3h1.3v1.3h-1.3zM827.54 368.21h1.3v1.3h-1.3zM827.54 378.12h1.3v1.3h-1.3zM827.54 388.03h1.3v1.3h-1.3zM827.54 397.94h1.3v1.3h-1.3zM827.54 407.86h1.3v1.3h-1.3zM827.54 417.77h1.3v1.3h-1.3zM837.45 31.2h1.3v1.3h-1.3zM837.45 41.11h1.3v1.3h-1.3zM837.45 51.02h1.3v1.3h-1.3zM837.45 60.94h1.3v1.3h-1.3zM837.45 70.85h1.3v1.3h-1.3zM837.45 80.76h1.3v1.3h-1.3zM837.45 90.67h1.3v1.3h-1.3zM837.45 100.58h1.3v1.3h-1.3zM837.45 110.5h1.3v1.3h-1.3zM837.45 120.41h1.3v1.3h-1.3zM837.45 130.32h1.3v1.3h-1.3zM837.45 140.23h1.3v1.3h-1.3zM837.45 150.14h1.3v1.3h-1.3zM837.45 160.06h1.3v1.3h-1.3zM837.45 169.97h1.3v1.3h-1.3zM837.45 179.88h1.3v1.3h-1.3zM837.45 189.79h1.3v1.3h-1.3zM837.45 199.7h1.3v1.3h-1.3zM837.45 209.62h1.3v1.3h-1.3zM837.45 219.53h1.3v1.3h-1.3zM837.45 229.44h1.3v1.3h-1.3zM837.45 239.35h1.3v1.3h-1.3zM837.45 249.26h1.3v1.3h-1.3zM837.45 259.18h1.3v1.3h-1.3zM837.45 269.09h1.3v1.3h-1.3zM837.45 279h1.3v1.3h-1.3zM837.45 288.91h1.3v1.3h-1.3zM837.45 298.82h1.3v1.3h-1.3zM837.45 308.74h1.3v1.3h-1.3zM837.45 318.65h1.3v1.3h-1.3zM837.45 328.56h1.3v1.3h-1.3zM837.45 338.47h1.3v1.3h-1.3zM837.45 348.38h1.3v1.3h-1.3zM837.45 358.3h1.3v1.3h-1.3zM837.45 368.21h1.3v1.3h-1.3zM837.45 378.12h1.3v1.3h-1.3zM837.45 388.03h1.3v1.3h-1.3zM837.45 397.94h1.3v1.3h-1.3zM837.45 407.86h1.3v1.3h-1.3zM837.45 417.77h1.3v1.3h-1.3zM847.36 31.2h1.3v1.3h-1.3zM847.36 41.11h1.3v1.3h-1.3zM847.36 51.02h1.3v1.3h-1.3zM847.36 60.94h1.3v1.3h-1.3zM847.36 70.85h1.3v1.3h-1.3zM847.36 80.76h1.3v1.3h-1.3zM847.36 90.67h1.3v1.3h-1.3zM847.36 100.58h1.3v1.3h-1.3zM847.36 110.5h1.3v1.3h-1.3zM847.36 120.41h1.3v1.3h-1.3zM847.36 130.32h1.3v1.3h-1.3zM847.36 140.23h1.3v1.3h-1.3zM847.36 150.14h1.3v1.3h-1.3zM847.36 160.06h1.3v1.3h-1.3zM847.36 169.97h1.3v1.3h-1.3zM847.36 179.88h1.3v1.3h-1.3zM847.36 189.79h1.3v1.3h-1.3zM847.36 199.7h1.3v1.3h-1.3zM847.36 209.62h1.3v1.3h-1.3zM847.36 219.53h1.3v1.3h-1.3zM847.36 229.44h1.3v1.3h-1.3zM847.36 239.35h1.3v1.3h-1.3zM847.36 249.26h1.3v1.3h-1.3zM847.36 259.18h1.3v1.3h-1.3zM847.36 269.09h1.3v1.3h-1.3zM847.36 279h1.3v1.3h-1.3zM847.36 288.91h1.3v1.3h-1.3zM847.36 298.82h1.3v1.3h-1.3zM847.36 308.74h1.3v1.3h-1.3zM847.36 318.65h1.3v1.3h-1.3zM847.36 328.56h1.3v1.3h-1.3zM847.36 338.47h1.3v1.3h-1.3zM847.36 348.38h1.3v1.3h-1.3zM847.36 358.3h1.3v1.3h-1.3zM847.36 368.21h1.3v1.3h-1.3zM847.36 378.12h1.3v1.3h-1.3zM847.36 388.03h1.3v1.3h-1.3zM847.36 397.94h1.3v1.3h-1.3zM847.36 407.86h1.3v1.3h-1.3zM847.36 417.77h1.3v1.3h-1.3zM857.27 31.2h1.3v1.3h-1.3zM857.27 41.11h1.3v1.3h-1.3zM857.27 51.02h1.3v1.3h-1.3zM857.27 60.94h1.3v1.3h-1.3zM857.27 70.85h1.3v1.3h-1.3zM857.27 80.76h1.3v1.3h-1.3zM857.27 90.67h1.3v1.3h-1.3zM857.27 100.58h1.3v1.3h-1.3zM857.27 110.5h1.3v1.3h-1.3zM857.27 120.41h1.3v1.3h-1.3zM857.27 130.32h1.3v1.3h-1.3zM857.27 140.23h1.3v1.3h-1.3zM857.27 150.14h1.3v1.3h-1.3zM857.27 160.06h1.3v1.3h-1.3zM857.27 169.97h1.3v1.3h-1.3zM857.27 179.88h1.3v1.3h-1.3zM857.27 189.79h1.3v1.3h-1.3zM857.27 199.7h1.3v1.3h-1.3zM857.27 209.62h1.3v1.3h-1.3zM857.27 219.53h1.3v1.3h-1.3zM857.27 229.44h1.3v1.3h-1.3zM857.27 239.35h1.3v1.3h-1.3zM857.27 249.26h1.3v1.3h-1.3zM857.27 259.18h1.3v1.3h-1.3zM857.27 269.09h1.3v1.3h-1.3zM857.27 279h1.3v1.3h-1.3zM857.27 288.91h1.3v1.3h-1.3zM857.27 298.82h1.3v1.3h-1.3zM857.27 308.74h1.3v1.3h-1.3zM857.27 318.65h1.3v1.3h-1.3zM857.27 328.56h1.3v1.3h-1.3zM857.27 338.47h1.3v1.3h-1.3zM857.27 348.38h1.3v1.3h-1.3zM857.27 358.3h1.3v1.3h-1.3zM857.27 368.21h1.3v1.3h-1.3zM857.27 378.12h1.3v1.3h-1.3zM857.27 388.03h1.3v1.3h-1.3zM857.27 397.94h1.3v1.3h-1.3zM857.27 407.86h1.3v1.3h-1.3zM857.27 417.77h1.3v1.3h-1.3zM867.18 31.2h1.3v1.3h-1.3zM867.18 41.11h1.3v1.3h-1.3zM867.18 51.02h1.3v1.3h-1.3zM867.18 60.94h1.3v1.3h-1.3zM867.18 70.85h1.3v1.3h-1.3zM867.18 80.76h1.3v1.3h-1.3zM867.18 90.67h1.3v1.3h-1.3zM867.18 100.58h1.3v1.3h-1.3zM867.18 110.5h1.3v1.3h-1.3zM867.18 120.41h1.3v1.3h-1.3zM867.18 130.32h1.3v1.3h-1.3zM867.18 140.23h1.3v1.3h-1.3zM867.18 150.14h1.3v1.3h-1.3zM867.18 160.06h1.3v1.3h-1.3zM867.18 169.97h1.3v1.3h-1.3zM867.18 179.88h1.3v1.3h-1.3zM867.18 189.79h1.3v1.3h-1.3zM867.18 199.7h1.3v1.3h-1.3zM867.18 209.62h1.3v1.3h-1.3zM867.18 219.53h1.3v1.3h-1.3zM867.18 229.44h1.3v1.3h-1.3zM867.18 239.35h1.3v1.3h-1.3zM867.18 249.26h1.3v1.3h-1.3zM867.18 259.18h1.3v1.3h-1.3zM867.18 269.09h1.3v1.3h-1.3zM867.18 279h1.3v1.3h-1.3zM867.18 288.91h1.3v1.3h-1.3zM867.18 298.82h1.3v1.3h-1.3zM867.18 308.74h1.3v1.3h-1.3zM867.18 318.65h1.3v1.3h-1.3zM867.18 328.56h1.3v1.3h-1.3zM867.18 338.47h1.3v1.3h-1.3zM867.18 348.38h1.3v1.3h-1.3zM867.18 358.3h1.3v1.3h-1.3zM867.18 368.21h1.3v1.3h-1.3zM867.18 378.12h1.3v1.3h-1.3zM867.18 388.03h1.3v1.3h-1.3zM867.18 397.94h1.3v1.3h-1.3zM867.18 407.86h1.3v1.3h-1.3zM867.18 417.77h1.3v1.3h-1.3zM877.1 31.2h1.3v1.3h-1.3zM877.1 41.11h1.3v1.3h-1.3zM877.1 51.02h1.3v1.3h-1.3zM877.1 60.94h1.3v1.3h-1.3zM877.1 70.85h1.3v1.3h-1.3zM877.1 80.76h1.3v1.3h-1.3zM877.1 90.67h1.3v1.3h-1.3zM877.1 100.58h1.3v1.3h-1.3zM877.1 110.5h1.3v1.3h-1.3zM877.1 120.41h1.3v1.3h-1.3zM877.1 130.32h1.3v1.3h-1.3zM877.1 140.23h1.3v1.3h-1.3zM877.1 150.14h1.3v1.3h-1.3zM877.1 160.06h1.3v1.3h-1.3zM877.1 169.97h1.3v1.3h-1.3zM877.1 179.88h1.3v1.3h-1.3zM877.1 189.79h1.3v1.3h-1.3zM877.1 199.7h1.3v1.3h-1.3zM877.1 209.62h1.3v1.3h-1.3zM877.1 219.53h1.3v1.3h-1.3zM877.1 229.44h1.3v1.3h-1.3zM877.1 239.35h1.3v1.3h-1.3zM877.1 249.26h1.3v1.3h-1.3zM877.1 259.18h1.3v1.3h-1.3zM877.1 269.09h1.3v1.3h-1.3zM877.1 279h1.3v1.3h-1.3zM877.1 288.91h1.3v1.3h-1.3zM877.1 298.82h1.3v1.3h-1.3zM877.1 308.74h1.3v1.3h-1.3zM877.1 318.65h1.3v1.3h-1.3zM877.1 328.56h1.3v1.3h-1.3zM877.1 338.47h1.3v1.3h-1.3zM877.1 348.38h1.3v1.3h-1.3zM877.1 358.3h1.3v1.3h-1.3zM877.1 368.21h1.3v1.3h-1.3zM877.1 378.12h1.3v1.3h-1.3zM877.1 388.03h1.3v1.3h-1.3zM877.1 397.94h1.3v1.3h-1.3zM877.1 407.86h1.3v1.3h-1.3zM877.1 417.77h1.3v1.3h-1.3zM887.01 31.2h1.3v1.3h-1.3zM887.01 41.11h1.3v1.3h-1.3zM887.01 51.02h1.3v1.3h-1.3zM887.01 60.94h1.3v1.3h-1.3zM887.01 70.85h1.3v1.3h-1.3zM887.01 80.76h1.3v1.3h-1.3zM887.01 90.67h1.3v1.3h-1.3zM887.01 100.58h1.3v1.3h-1.3zM887.01 110.5h1.3v1.3h-1.3zM887.01 120.41h1.3v1.3h-1.3zM887.01 130.32h1.3v1.3h-1.3zM887.01 140.23h1.3v1.3h-1.3zM887.01 150.14h1.3v1.3h-1.3zM887.01 160.06h1.3v1.3h-1.3zM887.01 169.97h1.3v1.3h-1.3zM887.01 179.88h1.3v1.3h-1.3zM887.01 189.79h1.3v1.3h-1.3zM887.01 199.7h1.3v1.3h-1.3zM887.01 209.62h1.3v1.3h-1.3zM887.01 219.53h1.3v1.3h-1.3zM887.01 229.44h1.3v1.3h-1.3zM887.01 239.35h1.3v1.3h-1.3zM887.01 249.26h1.3v1.3h-1.3zM887.01 259.18h1.3v1.3h-1.3zM887.01 269.09h1.3v1.3h-1.3zM887.01 279h1.3v1.3h-1.3zM887.01 288.91h1.3v1.3h-1.3zM887.01 298.82h1.3v1.3h-1.3zM887.01 308.74h1.3v1.3h-1.3zM887.01 318.65h1.3v1.3h-1.3zM887.01 328.56h1.3v1.3h-1.3zM887.01 338.47h1.3v1.3h-1.3zM887.01 348.38h1.3v1.3h-1.3zM887.01 358.3h1.3v1.3h-1.3zM887.01 368.21h1.3v1.3h-1.3zM887.01 378.12h1.3v1.3h-1.3zM887.01 388.03h1.3v1.3h-1.3zM887.01 397.94h1.3v1.3h-1.3zM887.01 407.86h1.3v1.3h-1.3zM887.01 417.77h1.3v1.3h-1.3zM896.92 31.2h1.3v1.3h-1.3zM896.92 41.11h1.3v1.3h-1.3zM896.92 51.02h1.3v1.3h-1.3zM896.92 60.94h1.3v1.3h-1.3zM896.92 70.85h1.3v1.3h-1.3zM896.92 80.76h1.3v1.3h-1.3zM896.92 90.67h1.3v1.3h-1.3zM896.92 100.58h1.3v1.3h-1.3zM896.92 110.5h1.3v1.3h-1.3zM896.92 120.41h1.3v1.3h-1.3zM896.92 130.32h1.3v1.3h-1.3zM896.92 140.23h1.3v1.3h-1.3zM896.92 150.14h1.3v1.3h-1.3zM896.92 160.06h1.3v1.3h-1.3zM896.92 169.97h1.3v1.3h-1.3zM896.92 179.88h1.3v1.3h-1.3zM896.92 189.79h1.3v1.3h-1.3zM896.92 199.7h1.3v1.3h-1.3zM896.92 209.62h1.3v1.3h-1.3zM896.92 219.53h1.3v1.3h-1.3zM896.92 229.44h1.3v1.3h-1.3zM896.92 239.35h1.3v1.3h-1.3zM896.92 249.26h1.3v1.3h-1.3zM896.92 259.18h1.3v1.3h-1.3zM896.92 269.09h1.3v1.3h-1.3zM896.92 279h1.3v1.3h-1.3zM896.92 288.91h1.3v1.3h-1.3zM896.92 298.82h1.3v1.3h-1.3zM896.92 308.74h1.3v1.3h-1.3zM896.92 318.65h1.3v1.3h-1.3zM896.92 328.56h1.3v1.3h-1.3zM896.92 338.47h1.3v1.3h-1.3zM896.92 348.38h1.3v1.3h-1.3zM896.92 358.3h1.3v1.3h-1.3zM896.92 368.21h1.3v1.3h-1.3zM896.92 378.12h1.3v1.3h-1.3zM896.92 388.03h1.3v1.3h-1.3zM896.92 397.94h1.3v1.3h-1.3zM896.92 407.86h1.3v1.3h-1.3zM896.92 417.77h1.3v1.3h-1.3zM906.83 31.2h1.3v1.3h-1.3zM906.83 41.11h1.3v1.3h-1.3zM906.83 51.02h1.3v1.3h-1.3zM906.83 60.94h1.3v1.3h-1.3zM906.83 70.85h1.3v1.3h-1.3zM906.83 80.76h1.3v1.3h-1.3zM906.83 90.67h1.3v1.3h-1.3zM906.83 100.58h1.3v1.3h-1.3zM906.83 110.5h1.3v1.3h-1.3zM906.83 120.41h1.3v1.3h-1.3zM906.83 130.32h1.3v1.3h-1.3zM906.83 140.23h1.3v1.3h-1.3zM906.83 150.14h1.3v1.3h-1.3zM906.83 160.06h1.3v1.3h-1.3zM906.83 169.97h1.3v1.3h-1.3zM906.83 179.88h1.3v1.3h-1.3zM906.83 189.79h1.3v1.3h-1.3zM906.83 199.7h1.3v1.3h-1.3zM906.83 209.62h1.3v1.3h-1.3zM906.83 219.53h1.3v1.3h-1.3zM906.83 229.44h1.3v1.3h-1.3zM906.83 239.35h1.3v1.3h-1.3zM906.83 249.26h1.3v1.3h-1.3zM906.83 259.18h1.3v1.3h-1.3zM906.83 269.09h1.3v1.3h-1.3zM906.83 279h1.3v1.3h-1.3zM906.83 288.91h1.3v1.3h-1.3zM906.83 298.82h1.3v1.3h-1.3zM906.83 308.74h1.3v1.3h-1.3zM906.83 318.65h1.3v1.3h-1.3zM906.83 328.56h1.3v1.3h-1.3zM906.83 338.47h1.3v1.3h-1.3zM906.83 348.38h1.3v1.3h-1.3zM906.83 358.3h1.3v1.3h-1.3zM906.83 368.21h1.3v1.3h-1.3zM906.83 378.12h1.3v1.3h-1.3zM906.83 388.03h1.3v1.3h-1.3zM906.83 397.94h1.3v1.3h-1.3zM906.83 407.86h1.3v1.3h-1.3zM906.83 417.77h1.3v1.3h-1.3zM916.74 31.2h1.3v1.3h-1.3zM916.74 41.11h1.3v1.3h-1.3zM916.74 51.02h1.3v1.3h-1.3zM916.74 60.94h1.3v1.3h-1.3zM916.74 70.85h1.3v1.3h-1.3zM916.74 80.76h1.3v1.3h-1.3zM916.74 90.67h1.3v1.3h-1.3zM916.74 100.58h1.3v1.3h-1.3zM916.74 110.5h1.3v1.3h-1.3zM916.74 120.41h1.3v1.3h-1.3zM916.74 130.32h1.3v1.3h-1.3zM916.74 140.23h1.3v1.3h-1.3zM916.74 150.14h1.3v1.3h-1.3zM916.74 160.06h1.3v1.3h-1.3zM916.74 169.97h1.3v1.3h-1.3zM916.74 179.88h1.3v1.3h-1.3zM916.74 189.79h1.3v1.3h-1.3zM916.74 199.7h1.3v1.3h-1.3zM916.74 209.62h1.3v1.3h-1.3zM916.74 219.53h1.3v1.3h-1.3zM916.74 229.44h1.3v1.3h-1.3zM916.74 239.35h1.3v1.3h-1.3zM916.74 249.26h1.3v1.3h-1.3zM916.74 259.18h1.3v1.3h-1.3zM916.74 269.09h1.3v1.3h-1.3zM916.74 279h1.3v1.3h-1.3zM916.74 288.91h1.3v1.3h-1.3zM916.74 298.82h1.3v1.3h-1.3zM916.74 308.74h1.3v1.3h-1.3zM916.74 318.65h1.3v1.3h-1.3zM916.74 328.56h1.3v1.3h-1.3zM916.74 338.47h1.3v1.3h-1.3zM916.74 348.38h1.3v1.3h-1.3zM916.74 358.3h1.3v1.3h-1.3zM916.74 368.21h1.3v1.3h-1.3zM916.74 378.12h1.3v1.3h-1.3zM916.74 388.03h1.3v1.3h-1.3zM916.74 397.94h1.3v1.3h-1.3zM916.74 407.86h1.3v1.3h-1.3zM916.74 417.77h1.3v1.3h-1.3zM926.66 31.2h1.3v1.3h-1.3zM926.66 41.11h1.3v1.3h-1.3zM926.66 51.02h1.3v1.3h-1.3zM926.66 60.94h1.3v1.3h-1.3zM926.66 70.85h1.3v1.3h-1.3zM926.66 80.76h1.3v1.3h-1.3zM926.66 90.67h1.3v1.3h-1.3zM926.66 100.58h1.3v1.3h-1.3zM926.66 110.5h1.3v1.3h-1.3zM926.66 120.41h1.3v1.3h-1.3zM926.66 130.32h1.3v1.3h-1.3zM926.66 140.23h1.3v1.3h-1.3zM926.66 150.14h1.3v1.3h-1.3zM926.66 160.06h1.3v1.3h-1.3zM926.66 169.97h1.3v1.3h-1.3zM926.66 179.88h1.3v1.3h-1.3zM926.66 189.79h1.3v1.3h-1.3zM926.66 199.7h1.3v1.3h-1.3zM926.66 209.62h1.3v1.3h-1.3zM926.66 219.53h1.3v1.3h-1.3zM926.66 229.44h1.3v1.3h-1.3zM926.66 239.35h1.3v1.3h-1.3zM926.66 249.26h1.3v1.3h-1.3zM926.66 259.18h1.3v1.3h-1.3zM926.66 269.09h1.3v1.3h-1.3zM926.66 279h1.3v1.3h-1.3zM926.66 288.91h1.3v1.3h-1.3zM926.66 298.82h1.3v1.3h-1.3zM926.66 308.74h1.3v1.3h-1.3zM926.66 318.65h1.3v1.3h-1.3zM926.66 328.56h1.3v1.3h-1.3zM926.66 338.47h1.3v1.3h-1.3zM926.66 348.38h1.3v1.3h-1.3zM926.66 358.3h1.3v1.3h-1.3zM926.66 368.21h1.3v1.3h-1.3zM926.66 378.12h1.3v1.3h-1.3zM926.66 388.03h1.3v1.3h-1.3zM926.66 397.94h1.3v1.3h-1.3zM926.66 407.86h1.3v1.3h-1.3zM926.66 417.77h1.3v1.3h-1.3zM936.57 31.2h1.3v1.3h-1.3zM936.57 41.11h1.3v1.3h-1.3zM936.57 51.02h1.3v1.3h-1.3zM936.57 60.94h1.3v1.3h-1.3zM936.57 70.85h1.3v1.3h-1.3zM936.57 80.76h1.3v1.3h-1.3zM936.57 90.67h1.3v1.3h-1.3zM936.57 100.58h1.3v1.3h-1.3zM936.57 110.5h1.3v1.3h-1.3zM936.57 120.41h1.3v1.3h-1.3zM936.57 130.32h1.3v1.3h-1.3zM936.57 140.23h1.3v1.3h-1.3zM936.57 150.14h1.3v1.3h-1.3zM936.57 160.06h1.3v1.3h-1.3zM936.57 169.97h1.3v1.3h-1.3zM936.57 179.88h1.3v1.3h-1.3zM936.57 189.79h1.3v1.3h-1.3zM936.57 199.7h1.3v1.3h-1.3zM936.57 209.62h1.3v1.3h-1.3zM936.57 219.53h1.3v1.3h-1.3zM936.57 229.44h1.3v1.3h-1.3zM936.57 239.35h1.3v1.3h-1.3zM936.57 249.26h1.3v1.3h-1.3zM936.57 259.18h1.3v1.3h-1.3zM936.57 269.09h1.3v1.3h-1.3zM936.57 279h1.3v1.3h-1.3zM936.57 288.91h1.3v1.3h-1.3zM936.57 298.82h1.3v1.3h-1.3zM936.57 308.74h1.3v1.3h-1.3zM936.57 318.65h1.3v1.3h-1.3zM936.57 328.56h1.3v1.3h-1.3zM936.57 338.47h1.3v1.3h-1.3zM936.57 348.38h1.3v1.3h-1.3zM936.57 358.3h1.3v1.3h-1.3zM936.57 368.21h1.3v1.3h-1.3zM936.57 378.12h1.3v1.3h-1.3zM936.57 388.03h1.3v1.3h-1.3zM936.57 397.94h1.3v1.3h-1.3zM936.57 407.86h1.3v1.3h-1.3zM936.57 417.77h1.3v1.3h-1.3zM946.48 31.2h1.3v1.3h-1.3zM946.48 41.11h1.3v1.3h-1.3zM946.48 51.02h1.3v1.3h-1.3zM946.48 60.94h1.3v1.3h-1.3zM946.48 70.85h1.3v1.3h-1.3zM946.48 80.76h1.3v1.3h-1.3zM946.48 90.67h1.3v1.3h-1.3zM946.48 100.58h1.3v1.3h-1.3zM946.48 110.5h1.3v1.3h-1.3zM946.48 120.41h1.3v1.3h-1.3zM946.48 130.32h1.3v1.3h-1.3zM946.48 140.23h1.3v1.3h-1.3zM946.48 150.14h1.3v1.3h-1.3zM946.48 160.06h1.3v1.3h-1.3zM946.48 169.97h1.3v1.3h-1.3zM946.48 179.88h1.3v1.3h-1.3zM946.48 189.79h1.3v1.3h-1.3zM946.48 199.7h1.3v1.3h-1.3zM946.48 209.62h1.3v1.3h-1.3zM946.48 219.53h1.3v1.3h-1.3zM946.48 229.44h1.3v1.3h-1.3zM946.48 239.35h1.3v1.3h-1.3zM946.48 249.26h1.3v1.3h-1.3zM946.48 259.18h1.3v1.3h-1.3zM946.48 269.09h1.3v1.3h-1.3zM946.48 279h1.3v1.3h-1.3zM946.48 288.91h1.3v1.3h-1.3zM946.48 298.82h1.3v1.3h-1.3zM946.48 308.74h1.3v1.3h-1.3zM946.48 318.65h1.3v1.3h-1.3zM946.48 328.56h1.3v1.3h-1.3zM946.48 338.47h1.3v1.3h-1.3zM946.48 348.38h1.3v1.3h-1.3zM946.48 358.3h1.3v1.3h-1.3zM946.48 368.21h1.3v1.3h-1.3zM946.48 378.12h1.3v1.3h-1.3zM946.48 388.03h1.3v1.3h-1.3zM946.48 397.94h1.3v1.3h-1.3zM946.48 407.86h1.3v1.3h-1.3zM946.48 417.77h1.3v1.3h-1.3zM956.39 31.2h1.3v1.3h-1.3zM956.39 41.11h1.3v1.3h-1.3zM956.39 51.02h1.3v1.3h-1.3zM956.39 60.94h1.3v1.3h-1.3zM956.39 70.85h1.3v1.3h-1.3zM956.39 80.76h1.3v1.3h-1.3zM956.39 90.67h1.3v1.3h-1.3zM956.39 100.58h1.3v1.3h-1.3zM956.39 110.5h1.3v1.3h-1.3zM956.39 120.41h1.3v1.3h-1.3zM956.39 130.32h1.3v1.3h-1.3zM956.39 140.23h1.3v1.3h-1.3zM956.39 150.14h1.3v1.3h-1.3zM956.39 160.06h1.3v1.3h-1.3zM956.39 169.97h1.3v1.3h-1.3zM956.39 179.88h1.3v1.3h-1.3zM956.39 189.79h1.3v1.3h-1.3zM956.39 199.7h1.3v1.3h-1.3zM956.39 209.62h1.3v1.3h-1.3zM956.39 219.53h1.3v1.3h-1.3zM956.39 229.44h1.3v1.3h-1.3zM956.39 239.35h1.3v1.3h-1.3zM956.39 249.26h1.3v1.3h-1.3zM956.39 259.18h1.3v1.3h-1.3zM956.39 269.09h1.3v1.3h-1.3zM956.39 279h1.3v1.3h-1.3zM956.39 288.91h1.3v1.3h-1.3zM956.39 298.82h1.3v1.3h-1.3zM956.39 308.74h1.3v1.3h-1.3zM956.39 318.65h1.3v1.3h-1.3zM956.39 328.56h1.3v1.3h-1.3zM956.39 338.47h1.3v1.3h-1.3zM956.39 348.38h1.3v1.3h-1.3zM956.39 358.3h1.3v1.3h-1.3zM956.39 368.21h1.3v1.3h-1.3zM956.39 378.12h1.3v1.3h-1.3zM956.39 388.03h1.3v1.3h-1.3zM956.39 397.94h1.3v1.3h-1.3zM956.39 407.86h1.3v1.3h-1.3zM956.39 417.77h1.3v1.3h-1.3zM966.3 31.2h1.3v1.3h-1.3zM966.3 41.11h1.3v1.3h-1.3zM966.3 51.02h1.3v1.3h-1.3zM966.3 60.94h1.3v1.3h-1.3zM966.3 70.85h1.3v1.3h-1.3zM966.3 80.76h1.3v1.3h-1.3zM966.3 90.67h1.3v1.3h-1.3zM966.3 100.58h1.3v1.3h-1.3zM966.3 110.5h1.3v1.3h-1.3zM966.3 120.41h1.3v1.3h-1.3zM966.3 130.32h1.3v1.3h-1.3zM966.3 140.23h1.3v1.3h-1.3zM966.3 150.14h1.3v1.3h-1.3zM966.3 160.06h1.3v1.3h-1.3zM966.3 169.97h1.3v1.3h-1.3zM966.3 179.88h1.3v1.3h-1.3zM966.3 189.79h1.3v1.3h-1.3zM966.3 199.7h1.3v1.3h-1.3zM966.3 209.62h1.3v1.3h-1.3zM966.3 219.53h1.3v1.3h-1.3zM966.3 229.44h1.3v1.3h-1.3zM966.3 239.35h1.3v1.3h-1.3zM966.3 249.26h1.3v1.3h-1.3zM966.3 259.18h1.3v1.3h-1.3zM966.3 269.09h1.3v1.3h-1.3zM966.3 279h1.3v1.3h-1.3zM966.3 288.91h1.3v1.3h-1.3zM966.3 298.82h1.3v1.3h-1.3zM966.3 308.74h1.3v1.3h-1.3zM966.3 318.65h1.3v1.3h-1.3zM966.3 328.56h1.3v1.3h-1.3zM966.3 338.47h1.3v1.3h-1.3zM966.3 348.38h1.3v1.3h-1.3zM966.3 358.3h1.3v1.3h-1.3zM966.3 368.21h1.3v1.3h-1.3zM966.3 378.12h1.3v1.3h-1.3zM966.3 388.03h1.3v1.3h-1.3zM966.3 397.94h1.3v1.3h-1.3zM966.3 407.86h1.3v1.3h-1.3zM966.3 417.77h1.3v1.3h-1.3zM976.22 31.2h1.3v1.3h-1.3zM976.22 41.11h1.3v1.3h-1.3zM976.22 51.02h1.3v1.3h-1.3zM976.22 60.94h1.3v1.3h-1.3zM976.22 70.85h1.3v1.3h-1.3zM976.22 80.76h1.3v1.3h-1.3zM976.22 90.67h1.3v1.3h-1.3zM976.22 100.58h1.3v1.3h-1.3zM976.22 110.5h1.3v1.3h-1.3zM976.22 120.41h1.3v1.3h-1.3zM976.22 130.32h1.3v1.3h-1.3zM976.22 140.23h1.3v1.3h-1.3zM976.22 150.14h1.3v1.3h-1.3zM976.22 160.06h1.3v1.3h-1.3zM976.22 169.97h1.3v1.3h-1.3zM976.22 179.88h1.3v1.3h-1.3zM976.22 189.79h1.3v1.3h-1.3zM976.22 199.7h1.3v1.3h-1.3zM976.22 209.62h1.3v1.3h-1.3zM976.22 219.53h1.3v1.3h-1.3zM976.22 229.44h1.3v1.3h-1.3zM976.22 239.35h1.3v1.3h-1.3zM976.22 249.26h1.3v1.3h-1.3zM976.22 259.18h1.3v1.3h-1.3zM976.22 269.09h1.3v1.3h-1.3zM976.22 279h1.3v1.3h-1.3zM976.22 288.91h1.3v1.3h-1.3zM976.22 298.82h1.3v1.3h-1.3zM976.22 308.74h1.3v1.3h-1.3zM976.22 318.65h1.3v1.3h-1.3zM976.22 328.56h1.3v1.3h-1.3zM976.22 338.47h1.3v1.3h-1.3zM976.22 348.38h1.3v1.3h-1.3zM976.22 358.3h1.3v1.3h-1.3zM976.22 368.21h1.3v1.3h-1.3zM976.22 378.12h1.3v1.3h-1.3zM976.22 388.03h1.3v1.3h-1.3zM976.22 397.94h1.3v1.3h-1.3zM976.22 407.86h1.3v1.3h-1.3zM976.22 417.77h1.3v1.3h-1.3zM986.13 31.2h1.3v1.3h-1.3zM986.13 41.11h1.3v1.3h-1.3zM986.13 51.02h1.3v1.3h-1.3zM986.13 60.94h1.3v1.3h-1.3zM986.13 70.85h1.3v1.3h-1.3zM986.13 80.76h1.3v1.3h-1.3zM986.13 90.67h1.3v1.3h-1.3zM986.13 100.58h1.3v1.3h-1.3zM986.13 110.5h1.3v1.3h-1.3zM986.13 120.41h1.3v1.3h-1.3zM986.13 130.32h1.3v1.3h-1.3zM986.13 140.23h1.3v1.3h-1.3zM986.13 150.14h1.3v1.3h-1.3zM986.13 160.06h1.3v1.3h-1.3zM986.13 169.97h1.3v1.3h-1.3zM986.13 179.88h1.3v1.3h-1.3zM986.13 189.79h1.3v1.3h-1.3zM986.13 199.7h1.3v1.3h-1.3zM986.13 209.62h1.3v1.3h-1.3zM986.13 219.53h1.3v1.3h-1.3zM986.13 229.44h1.3v1.3h-1.3zM986.13 239.35h1.3v1.3h-1.3zM986.13 249.26h1.3v1.3h-1.3zM986.13 259.18h1.3v1.3h-1.3zM986.13 269.09h1.3v1.3h-1.3zM986.13 279h1.3v1.3h-1.3zM986.13 288.91h1.3v1.3h-1.3zM986.13 298.82h1.3v1.3h-1.3zM986.13 308.74h1.3v1.3h-1.3zM986.13 318.65h1.3v1.3h-1.3zM986.13 328.56h1.3v1.3h-1.3zM986.13 338.47h1.3v1.3h-1.3zM986.13 348.38h1.3v1.3h-1.3zM986.13 358.3h1.3v1.3h-1.3zM986.13 368.21h1.3v1.3h-1.3zM986.13 378.12h1.3v1.3h-1.3zM986.13 388.03h1.3v1.3h-1.3zM986.13 397.94h1.3v1.3h-1.3zM986.13 407.86h1.3v1.3h-1.3zM986.13 417.77h1.3v1.3h-1.3zM996.04 31.2h1.3v1.3h-1.3zM996.04 41.11h1.3v1.3h-1.3zM996.04 51.02h1.3v1.3h-1.3zM996.04 60.94h1.3v1.3h-1.3zM996.04 70.85h1.3v1.3h-1.3zM996.04 80.76h1.3v1.3h-1.3zM996.04 90.67h1.3v1.3h-1.3zM996.04 100.58h1.3v1.3h-1.3zM996.04 110.5h1.3v1.3h-1.3zM996.04 120.41h1.3v1.3h-1.3zM996.04 130.32h1.3v1.3h-1.3zM996.04 140.23h1.3v1.3h-1.3zM996.04 150.14h1.3v1.3h-1.3zM996.04 160.06h1.3v1.3h-1.3zM996.04 169.97h1.3v1.3h-1.3zM996.04 179.88h1.3v1.3h-1.3zM996.04 189.79h1.3v1.3h-1.3zM996.04 199.7h1.3v1.3h-1.3zM996.04 209.62h1.3v1.3h-1.3zM996.04 219.53h1.3v1.3h-1.3zM996.04 229.44h1.3v1.3h-1.3zM996.04 239.35h1.3v1.3h-1.3zM996.04 249.26h1.3v1.3h-1.3zM996.04 259.18h1.3v1.3h-1.3zM996.04 269.09h1.3v1.3h-1.3zM996.04 279h1.3v1.3h-1.3zM996.04 288.91h1.3v1.3h-1.3zM996.04 298.82h1.3v1.3h-1.3zM996.04 308.74h1.3v1.3h-1.3zM996.04 318.65h1.3v1.3h-1.3zM996.04 328.56h1.3v1.3h-1.3zM996.04 338.47h1.3v1.3h-1.3zM996.04 348.38h1.3v1.3h-1.3zM996.04 358.3h1.3v1.3h-1.3zM996.04 368.21h1.3v1.3h-1.3zM996.04 378.12h1.3v1.3h-1.3zM996.04 388.03h1.3v1.3h-1.3zM996.04 397.94h1.3v1.3h-1.3zM996.04 407.86h1.3v1.3h-1.3zM996.04 417.77h1.3v1.3h-1.3zM1005.95 31.2h1.3v1.3h-1.3zM1005.95 41.11h1.3v1.3h-1.3zM1005.95 51.02h1.3v1.3h-1.3zM1005.95 60.94h1.3v1.3h-1.3zM1005.95 70.85h1.3v1.3h-1.3zM1005.95 80.76h1.3v1.3h-1.3zM1005.95 90.67h1.3v1.3h-1.3zM1005.95 100.58h1.3v1.3h-1.3zM1005.95 110.5h1.3v1.3h-1.3zM1005.95 120.41h1.3v1.3h-1.3zM1005.95 130.32h1.3v1.3h-1.3zM1005.95 140.23h1.3v1.3h-1.3zM1005.95 150.14h1.3v1.3h-1.3zM1005.95 160.06h1.3v1.3h-1.3zM1005.95 169.97h1.3v1.3h-1.3zM1005.95 179.88h1.3v1.3h-1.3zM1005.95 189.79h1.3v1.3h-1.3zM1005.95 199.7h1.3v1.3h-1.3zM1005.95 209.62h1.3v1.3h-1.3zM1005.95 219.53h1.3v1.3h-1.3zM1005.95 229.44h1.3v1.3h-1.3zM1005.95 239.35h1.3v1.3h-1.3zM1005.95 249.26h1.3v1.3h-1.3zM1005.95 259.18h1.3v1.3h-1.3zM1005.95 269.09h1.3v1.3h-1.3zM1005.95 279h1.3v1.3h-1.3zM1005.95 288.91h1.3v1.3h-1.3zM1005.95 298.82h1.3v1.3h-1.3zM1005.95 308.74h1.3v1.3h-1.3zM1005.95 318.65h1.3v1.3h-1.3zM1005.95 328.56h1.3v1.3h-1.3zM1005.95 338.47h1.3v1.3h-1.3zM1005.95 348.38h1.3v1.3h-1.3zM1005.95 358.3h1.3v1.3h-1.3zM1005.95 368.21h1.3v1.3h-1.3zM1005.95 378.12h1.3v1.3h-1.3zM1005.95 388.03h1.3v1.3h-1.3zM1005.95 397.94h1.3v1.3h-1.3zM1005.95 407.86h1.3v1.3h-1.3zM1005.95 417.77h1.3v1.3h-1.3zM1015.86 31.2h1.3v1.3h-1.3zM1015.86 41.11h1.3v1.3h-1.3zM1015.86 51.02h1.3v1.3h-1.3zM1015.86 60.94h1.3v1.3h-1.3zM1015.86 70.85h1.3v1.3h-1.3zM1015.86 80.76h1.3v1.3h-1.3zM1015.86 90.67h1.3v1.3h-1.3zM1015.86 100.58h1.3v1.3h-1.3zM1015.86 110.5h1.3v1.3h-1.3zM1015.86 120.41h1.3v1.3h-1.3zM1015.86 130.32h1.3v1.3h-1.3zM1015.86 140.23h1.3v1.3h-1.3zM1015.86 150.14h1.3v1.3h-1.3zM1015.86 160.06h1.3v1.3h-1.3zM1015.86 169.97h1.3v1.3h-1.3zM1015.86 179.88h1.3v1.3h-1.3zM1015.86 189.79h1.3v1.3h-1.3zM1015.86 199.7h1.3v1.3h-1.3zM1015.86 209.62h1.3v1.3h-1.3zM1015.86 219.53h1.3v1.3h-1.3zM1015.86 229.44h1.3v1.3h-1.3zM1015.86 239.35h1.3v1.3h-1.3zM1015.86 249.26h1.3v1.3h-1.3zM1015.86 259.18h1.3v1.3h-1.3zM1015.86 269.09h1.3v1.3h-1.3zM1015.86 279h1.3v1.3h-1.3zM1015.86 288.91h1.3v1.3h-1.3zM1015.86 298.82h1.3v1.3h-1.3zM1015.86 308.74h1.3v1.3h-1.3zM1015.86 318.65h1.3v1.3h-1.3zM1015.86 328.56h1.3v1.3h-1.3zM1015.86 338.47h1.3v1.3h-1.3zM1015.86 348.38h1.3v1.3h-1.3zM1015.86 358.3h1.3v1.3h-1.3zM1015.86 368.21h1.3v1.3h-1.3zM1015.86 378.12h1.3v1.3h-1.3zM1015.86 388.03h1.3v1.3h-1.3zM1015.86 397.94h1.3v1.3h-1.3zM1015.86 407.86h1.3v1.3h-1.3zM1015.86 417.77h1.3v1.3h-1.3zM1025.78 31.2h1.3v1.3h-1.3zM1025.78 41.11h1.3v1.3h-1.3zM1025.78 51.02h1.3v1.3h-1.3zM1025.78 60.94h1.3v1.3h-1.3zM1025.78 70.85h1.3v1.3h-1.3zM1025.78 80.76h1.3v1.3h-1.3zM1025.78 90.67h1.3v1.3h-1.3zM1025.78 100.58h1.3v1.3h-1.3zM1025.78 110.5h1.3v1.3h-1.3zM1025.78 120.41h1.3v1.3h-1.3zM1025.78 130.32h1.3v1.3h-1.3zM1025.78 140.23h1.3v1.3h-1.3zM1025.78 150.14h1.3v1.3h-1.3zM1025.78 160.06h1.3v1.3h-1.3zM1025.78 169.97h1.3v1.3h-1.3zM1025.78 179.88h1.3v1.3h-1.3zM1025.78 189.79h1.3v1.3h-1.3zM1025.78 199.7h1.3v1.3h-1.3zM1025.78 209.62h1.3v1.3h-1.3zM1025.78 219.53h1.3v1.3h-1.3zM1025.78 229.44h1.3v1.3h-1.3zM1025.78 239.35h1.3v1.3h-1.3zM1025.78 249.26h1.3v1.3h-1.3zM1025.78 259.18h1.3v1.3h-1.3zM1025.78 269.09h1.3v1.3h-1.3zM1025.78 279h1.3v1.3h-1.3zM1025.78 288.91h1.3v1.3h-1.3zM1025.78 298.82h1.3v1.3h-1.3zM1025.78 308.74h1.3v1.3h-1.3zM1025.78 318.65h1.3v1.3h-1.3zM1025.78 328.56h1.3v1.3h-1.3zM1025.78 338.47h1.3v1.3h-1.3zM1025.78 348.38h1.3v1.3h-1.3zM1025.78 358.3h1.3v1.3h-1.3zM1025.78 368.21h1.3v1.3h-1.3zM1025.78 378.12h1.3v1.3h-1.3zM1025.78 388.03h1.3v1.3h-1.3zM1025.78 397.94h1.3v1.3h-1.3zM1025.78 407.86h1.3v1.3h-1.3zM1025.78 417.77h1.3v1.3h-1.3zM1035.69 31.2h1.3v1.3h-1.3zM1035.69 41.11h1.3v1.3h-1.3zM1035.69 51.02h1.3v1.3h-1.3zM1035.69 60.94h1.3v1.3h-1.3zM1035.69 70.85h1.3v1.3h-1.3zM1035.69 80.76h1.3v1.3h-1.3zM1035.69 90.67h1.3v1.3h-1.3zM1035.69 100.58h1.3v1.3h-1.3zM1035.69 110.5h1.3v1.3h-1.3zM1035.69 120.41h1.3v1.3h-1.3zM1035.69 130.32h1.3v1.3h-1.3zM1035.69 140.23h1.3v1.3h-1.3zM1035.69 150.14h1.3v1.3h-1.3zM1035.69 160.06h1.3v1.3h-1.3zM1035.69 169.97h1.3v1.3h-1.3zM1035.69 179.88h1.3v1.3h-1.3zM1035.69 189.79h1.3v1.3h-1.3zM1035.69 199.7h1.3v1.3h-1.3zM1035.69 209.62h1.3v1.3h-1.3zM1035.69 219.53h1.3v1.3h-1.3zM1035.69 229.44h1.3v1.3h-1.3zM1035.69 239.35h1.3v1.3h-1.3zM1035.69 249.26h1.3v1.3h-1.3zM1035.69 259.18h1.3v1.3h-1.3zM1035.69 269.09h1.3v1.3h-1.3zM1035.69 279h1.3v1.3h-1.3zM1035.69 288.91h1.3v1.3h-1.3zM1035.69 298.82h1.3v1.3h-1.3zM1035.69 308.74h1.3v1.3h-1.3zM1035.69 318.65h1.3v1.3h-1.3zM1035.69 328.56h1.3v1.3h-1.3zM1035.69 338.47h1.3v1.3h-1.3zM1035.69 348.38h1.3v1.3h-1.3zM1035.69 358.3h1.3v1.3h-1.3zM1035.69 368.21h1.3v1.3h-1.3zM1035.69 378.12h1.3v1.3h-1.3zM1035.69 388.03h1.3v1.3h-1.3zM1035.69 397.94h1.3v1.3h-1.3zM1035.69 407.86h1.3v1.3h-1.3zM1035.69 417.77h1.3v1.3h-1.3zM1045.6 31.2h1.3v1.3h-1.3zM1045.6 41.11h1.3v1.3h-1.3zM1045.6 51.02h1.3v1.3h-1.3zM1045.6 60.94h1.3v1.3h-1.3zM1045.6 70.85h1.3v1.3h-1.3zM1045.6 80.76h1.3v1.3h-1.3zM1045.6 90.67h1.3v1.3h-1.3zM1045.6 100.58h1.3v1.3h-1.3zM1045.6 110.5h1.3v1.3h-1.3zM1045.6 120.41h1.3v1.3h-1.3zM1045.6 130.32h1.3v1.3h-1.3zM1045.6 140.23h1.3v1.3h-1.3zM1045.6 150.14h1.3v1.3h-1.3zM1045.6 160.06h1.3v1.3h-1.3zM1045.6 169.97h1.3v1.3h-1.3zM1045.6 179.88h1.3v1.3h-1.3zM1045.6 189.79h1.3v1.3h-1.3zM1045.6 199.7h1.3v1.3h-1.3zM1045.6 209.62h1.3v1.3h-1.3zM1045.6 219.53h1.3v1.3h-1.3zM1045.6 229.44h1.3v1.3h-1.3zM1045.6 239.35h1.3v1.3h-1.3zM1045.6 249.26h1.3v1.3h-1.3zM1045.6 259.18h1.3v1.3h-1.3zM1045.6 269.09h1.3v1.3h-1.3zM1045.6 279h1.3v1.3h-1.3zM1045.6 288.91h1.3v1.3h-1.3zM1045.6 298.82h1.3v1.3h-1.3zM1045.6 308.74h1.3v1.3h-1.3zM1045.6 318.65h1.3v1.3h-1.3zM1045.6 328.56h1.3v1.3h-1.3zM1045.6 338.47h1.3v1.3h-1.3zM1045.6 348.38h1.3v1.3h-1.3zM1045.6 358.3h1.3v1.3h-1.3zM1045.6 368.21h1.3v1.3h-1.3zM1045.6 378.12h1.3v1.3h-1.3zM1045.6 388.03h1.3v1.3h-1.3zM1045.6 397.94h1.3v1.3h-1.3zM1045.6 407.86h1.3v1.3h-1.3zM1045.6 417.77h1.3v1.3h-1.3zM1055.51 31.2h1.3v1.3h-1.3zM1055.51 41.11h1.3v1.3h-1.3zM1055.51 51.02h1.3v1.3h-1.3zM1055.51 60.94h1.3v1.3h-1.3zM1055.51 70.85h1.3v1.3h-1.3zM1055.51 80.76h1.3v1.3h-1.3zM1055.51 90.67h1.3v1.3h-1.3zM1055.51 100.58h1.3v1.3h-1.3zM1055.51 110.5h1.3v1.3h-1.3zM1055.51 120.41h1.3v1.3h-1.3zM1055.51 130.32h1.3v1.3h-1.3zM1055.51 140.23h1.3v1.3h-1.3zM1055.51 150.14h1.3v1.3h-1.3zM1055.51 160.06h1.3v1.3h-1.3zM1055.51 169.97h1.3v1.3h-1.3zM1055.51 179.88h1.3v1.3h-1.3zM1055.51 189.79h1.3v1.3h-1.3zM1055.51 199.7h1.3v1.3h-1.3zM1055.51 209.62h1.3v1.3h-1.3zM1055.51 219.53h1.3v1.3h-1.3zM1055.51 229.44h1.3v1.3h-1.3zM1055.51 239.35h1.3v1.3h-1.3zM1055.51 249.26h1.3v1.3h-1.3zM1055.51 259.18h1.3v1.3h-1.3zM1055.51 269.09h1.3v1.3h-1.3zM1055.51 279h1.3v1.3h-1.3zM1055.51 288.91h1.3v1.3h-1.3zM1055.51 298.82h1.3v1.3h-1.3zM1055.51 308.74h1.3v1.3h-1.3zM1055.51 318.65h1.3v1.3h-1.3zM1055.51 328.56h1.3v1.3h-1.3zM1055.51 338.47h1.3v1.3h-1.3zM1055.51 348.38h1.3v1.3h-1.3zM1055.51 358.3h1.3v1.3h-1.3zM1055.51 368.21h1.3v1.3h-1.3zM1055.51 378.12h1.3v1.3h-1.3zM1055.51 388.03h1.3v1.3h-1.3zM1055.51 397.94h1.3v1.3h-1.3zM1055.51 407.86h1.3v1.3h-1.3zM1055.51 417.77h1.3v1.3h-1.3zM1065.42 31.2h1.3v1.3h-1.3zM1065.42 41.11h1.3v1.3h-1.3zM1065.42 51.02h1.3v1.3h-1.3zM1065.42 60.94h1.3v1.3h-1.3zM1065.42 70.85h1.3v1.3h-1.3zM1065.42 80.76h1.3v1.3h-1.3zM1065.42 90.67h1.3v1.3h-1.3zM1065.42 100.58h1.3v1.3h-1.3zM1065.42 110.5h1.3v1.3h-1.3zM1065.42 120.41h1.3v1.3h-1.3zM1065.42 130.32h1.3v1.3h-1.3zM1065.42 140.23h1.3v1.3h-1.3zM1065.42 150.14h1.3v1.3h-1.3zM1065.42 160.06h1.3v1.3h-1.3zM1065.42 169.97h1.3v1.3h-1.3zM1065.42 179.88h1.3v1.3h-1.3zM1065.42 189.79h1.3v1.3h-1.3zM1065.42 199.7h1.3v1.3h-1.3zM1065.42 209.62h1.3v1.3h-1.3zM1065.42 219.53h1.3v1.3h-1.3zM1065.42 229.44h1.3v1.3h-1.3zM1065.42 239.35h1.3v1.3h-1.3zM1065.42 249.26h1.3v1.3h-1.3zM1065.42 259.18h1.3v1.3h-1.3zM1065.42 269.09h1.3v1.3h-1.3zM1065.42 279h1.3v1.3h-1.3zM1065.42 288.91h1.3v1.3h-1.3zM1065.42 298.82h1.3v1.3h-1.3zM1065.42 308.74h1.3v1.3h-1.3zM1065.42 318.65h1.3v1.3h-1.3zM1065.42 328.56h1.3v1.3h-1.3zM1065.42 338.47h1.3v1.3h-1.3zM1065.42 348.38h1.3v1.3h-1.3zM1065.42 358.3h1.3v1.3h-1.3zM1065.42 368.21h1.3v1.3h-1.3zM1065.42 378.12h1.3v1.3h-1.3zM1065.42 388.03h1.3v1.3h-1.3zM1065.42 397.94h1.3v1.3h-1.3zM1065.42 407.86h1.3v1.3h-1.3zM1065.42 417.77h1.3v1.3h-1.3zM1075.34 31.2h1.3v1.3h-1.3zM1075.34 41.11h1.3v1.3h-1.3zM1075.34 51.02h1.3v1.3h-1.3zM1075.34 60.94h1.3v1.3h-1.3zM1075.34 70.85h1.3v1.3h-1.3zM1075.34 80.76h1.3v1.3h-1.3zM1075.34 90.67h1.3v1.3h-1.3zM1075.34 100.58h1.3v1.3h-1.3zM1075.34 110.5h1.3v1.3h-1.3zM1075.34 120.41h1.3v1.3h-1.3zM1075.34 130.32h1.3v1.3h-1.3zM1075.34 140.23h1.3v1.3h-1.3zM1075.34 150.14h1.3v1.3h-1.3zM1075.34 160.06h1.3v1.3h-1.3zM1075.34 169.97h1.3v1.3h-1.3zM1075.34 179.88h1.3v1.3h-1.3zM1075.34 189.79h1.3v1.3h-1.3zM1075.34 199.7h1.3v1.3h-1.3zM1075.34 209.62h1.3v1.3h-1.3zM1075.34 219.53h1.3v1.3h-1.3zM1075.34 229.44h1.3v1.3h-1.3zM1075.34 239.35h1.3v1.3h-1.3zM1075.34 249.26h1.3v1.3h-1.3zM1075.34 259.18h1.3v1.3h-1.3zM1075.34 269.09h1.3v1.3h-1.3zM1075.34 279h1.3v1.3h-1.3zM1075.34 288.91h1.3v1.3h-1.3zM1075.34 298.82h1.3v1.3h-1.3zM1075.34 308.74h1.3v1.3h-1.3zM1075.34 318.65h1.3v1.3h-1.3zM1075.34 328.56h1.3v1.3h-1.3zM1075.34 338.47h1.3v1.3h-1.3zM1075.34 348.38h1.3v1.3h-1.3zM1075.34 358.3h1.3v1.3h-1.3zM1075.34 368.21h1.3v1.3h-1.3zM1075.34 378.12h1.3v1.3h-1.3zM1075.34 388.03h1.3v1.3h-1.3zM1075.34 397.94h1.3v1.3h-1.3zM1075.34 407.86h1.3v1.3h-1.3zM1075.34 417.77h1.3v1.3h-1.3zM1085.25 31.2h1.3v1.3h-1.3zM1085.25 41.11h1.3v1.3h-1.3zM1085.25 51.02h1.3v1.3h-1.3zM1085.25 60.94h1.3v1.3h-1.3zM1085.25 70.85h1.3v1.3h-1.3zM1085.25 80.76h1.3v1.3h-1.3zM1085.25 90.67h1.3v1.3h-1.3zM1085.25 100.58h1.3v1.3h-1.3zM1085.25 110.5h1.3v1.3h-1.3zM1085.25 120.41h1.3v1.3h-1.3zM1085.25 130.32h1.3v1.3h-1.3zM1085.25 140.23h1.3v1.3h-1.3zM1085.25 150.14h1.3v1.3h-1.3zM1085.25 160.06h1.3v1.3h-1.3zM1085.25 169.97h1.3v1.3h-1.3zM1085.25 179.88h1.3v1.3h-1.3zM1085.25 189.79h1.3v1.3h-1.3zM1085.25 199.7h1.3v1.3h-1.3zM1085.25 209.62h1.3v1.3h-1.3zM1085.25 219.53h1.3v1.3h-1.3zM1085.25 229.44h1.3v1.3h-1.3zM1085.25 239.35h1.3v1.3h-1.3zM1085.25 249.26h1.3v1.3h-1.3zM1085.25 259.18h1.3v1.3h-1.3zM1085.25 269.09h1.3v1.3h-1.3zM1085.25 279h1.3v1.3h-1.3zM1085.25 288.91h1.3v1.3h-1.3zM1085.25 298.82h1.3v1.3h-1.3zM1085.25 308.74h1.3v1.3h-1.3zM1085.25 318.65h1.3v1.3h-1.3zM1085.25 328.56h1.3v1.3h-1.3zM1085.25 338.47h1.3v1.3h-1.3zM1085.25 348.38h1.3v1.3h-1.3zM1085.25 358.3h1.3v1.3h-1.3zM1085.25 368.21h1.3v1.3h-1.3zM1085.25 378.12h1.3v1.3h-1.3zM1085.25 388.03h1.3v1.3h-1.3zM1085.25 397.94h1.3v1.3h-1.3zM1085.25 407.86h1.3v1.3h-1.3zM1085.25 417.77h1.3v1.3h-1.3zM1095.16 31.2h1.3v1.3h-1.3zM1095.16 41.11h1.3v1.3h-1.3zM1095.16 51.02h1.3v1.3h-1.3zM1095.16 60.94h1.3v1.3h-1.3zM1095.16 70.85h1.3v1.3h-1.3zM1095.16 80.76h1.3v1.3h-1.3zM1095.16 90.67h1.3v1.3h-1.3zM1095.16 100.58h1.3v1.3h-1.3zM1095.16 110.5h1.3v1.3h-1.3zM1095.16 120.41h1.3v1.3h-1.3zM1095.16 130.32h1.3v1.3h-1.3zM1095.16 140.23h1.3v1.3h-1.3zM1095.16 150.14h1.3v1.3h-1.3zM1095.16 160.06h1.3v1.3h-1.3zM1095.16 169.97h1.3v1.3h-1.3zM1095.16 179.88h1.3v1.3h-1.3zM1095.16 189.79h1.3v1.3h-1.3zM1095.16 199.7h1.3v1.3h-1.3zM1095.16 209.62h1.3v1.3h-1.3zM1095.16 219.53h1.3v1.3h-1.3zM1095.16 229.44h1.3v1.3h-1.3zM1095.16 239.35h1.3v1.3h-1.3zM1095.16 249.26h1.3v1.3h-1.3zM1095.16 259.18h1.3v1.3h-1.3zM1095.16 269.09h1.3v1.3h-1.3zM1095.16 279h1.3v1.3h-1.3zM1095.16 288.91h1.3v1.3h-1.3zM1095.16 298.82h1.3v1.3h-1.3zM1095.16 308.74h1.3v1.3h-1.3zM1095.16 318.65h1.3v1.3h-1.3zM1095.16 328.56h1.3v1.3h-1.3zM1095.16 338.47h1.3v1.3h-1.3zM1095.16 348.38h1.3v1.3h-1.3zM1095.16 358.3h1.3v1.3h-1.3zM1095.16 368.21h1.3v1.3h-1.3zM1095.16 378.12h1.3v1.3h-1.3zM1095.16 388.03h1.3v1.3h-1.3zM1095.16 397.94h1.3v1.3h-1.3zM1095.16 407.86h1.3v1.3h-1.3zM1095.16 417.77h1.3v1.3h-1.3zM1105.07 31.2h1.3v1.3h-1.3zM1105.07 41.11h1.3v1.3h-1.3zM1105.07 51.02h1.3v1.3h-1.3zM1105.07 60.94h1.3v1.3h-1.3zM1105.07 70.85h1.3v1.3h-1.3zM1105.07 80.76h1.3v1.3h-1.3zM1105.07 90.67h1.3v1.3h-1.3zM1105.07 100.58h1.3v1.3h-1.3zM1105.07 110.5h1.3v1.3h-1.3zM1105.07 120.41h1.3v1.3h-1.3zM1105.07 130.32h1.3v1.3h-1.3zM1105.07 140.23h1.3v1.3h-1.3zM1105.07 150.14h1.3v1.3h-1.3zM1105.07 160.06h1.3v1.3h-1.3zM1105.07 169.97h1.3v1.3h-1.3zM1105.07 179.88h1.3v1.3h-1.3zM1105.07 189.79h1.3v1.3h-1.3zM1105.07 199.7h1.3v1.3h-1.3zM1105.07 209.62h1.3v1.3h-1.3zM1105.07 219.53h1.3v1.3h-1.3zM1105.07 229.44h1.3v1.3h-1.3zM1105.07 239.35h1.3v1.3h-1.3zM1105.07 249.26h1.3v1.3h-1.3zM1105.07 259.18h1.3v1.3h-1.3zM1105.07 269.09h1.3v1.3h-1.3zM1105.07 279h1.3v1.3h-1.3zM1105.07 288.91h1.3v1.3h-1.3zM1105.07 298.82h1.3v1.3h-1.3zM1105.07 308.74h1.3v1.3h-1.3zM1105.07 318.65h1.3v1.3h-1.3zM1105.07 328.56h1.3v1.3h-1.3zM1105.07 338.47h1.3v1.3h-1.3zM1105.07 348.38h1.3v1.3h-1.3zM1105.07 358.3h1.3v1.3h-1.3zM1105.07 368.21h1.3v1.3h-1.3zM1105.07 378.12h1.3v1.3h-1.3zM1105.07 388.03h1.3v1.3h-1.3zM1105.07 397.94h1.3v1.3h-1.3zM1105.07 407.86h1.3v1.3h-1.3zM1105.07 417.77h1.3v1.3h-1.3zM1114.98 31.2h1.3v1.3h-1.3zM1114.98 41.11h1.3v1.3h-1.3zM1114.98 51.02h1.3v1.3h-1.3zM1114.98 60.94h1.3v1.3h-1.3zM1114.98 70.85h1.3v1.3h-1.3zM1114.98 80.76h1.3v1.3h-1.3zM1114.98 90.67h1.3v1.3h-1.3zM1114.98 100.58h1.3v1.3h-1.3zM1114.98 110.5h1.3v1.3h-1.3zM1114.98 120.41h1.3v1.3h-1.3zM1114.98 130.32h1.3v1.3h-1.3zM1114.98 140.23h1.3v1.3h-1.3zM1114.98 150.14h1.3v1.3h-1.3zM1114.98 160.06h1.3v1.3h-1.3zM1114.98 169.97h1.3v1.3h-1.3zM1114.98 179.88h1.3v1.3h-1.3zM1114.98 189.79h1.3v1.3h-1.3zM1114.98 199.7h1.3v1.3h-1.3zM1114.98 209.62h1.3v1.3h-1.3zM1114.98 219.53h1.3v1.3h-1.3zM1114.98 229.44h1.3v1.3h-1.3zM1114.98 239.35h1.3v1.3h-1.3zM1114.98 249.26h1.3v1.3h-1.3zM1114.98 259.18h1.3v1.3h-1.3zM1114.98 269.09h1.3v1.3h-1.3zM1114.98 279h1.3v1.3h-1.3zM1114.98 288.91h1.3v1.3h-1.3zM1114.98 298.82h1.3v1.3h-1.3zM1114.98 308.74h1.3v1.3h-1.3zM1114.98 318.65h1.3v1.3h-1.3zM1114.98 328.56h1.3v1.3h-1.3zM1114.98 338.47h1.3v1.3h-1.3zM1114.98 348.38h1.3v1.3h-1.3zM1114.98 358.3h1.3v1.3h-1.3zM1114.98 368.21h1.3v1.3h-1.3zM1114.98 378.12h1.3v1.3h-1.3zM1114.98 388.03h1.3v1.3h-1.3zM1114.98 397.94h1.3v1.3h-1.3zM1114.98 407.86h1.3v1.3h-1.3zM1114.98 417.77h1.3v1.3h-1.3zM1124.9 31.2h1.3v1.3h-1.3zM1124.9 41.11h1.3v1.3h-1.3zM1124.9 51.02h1.3v1.3h-1.3zM1124.9 60.94h1.3v1.3h-1.3zM1124.9 70.85h1.3v1.3h-1.3zM1124.9 80.76h1.3v1.3h-1.3zM1124.9 90.67h1.3v1.3h-1.3zM1124.9 100.58h1.3v1.3h-1.3zM1124.9 110.5h1.3v1.3h-1.3zM1124.9 120.41h1.3v1.3h-1.3zM1124.9 130.32h1.3v1.3h-1.3zM1124.9 140.23h1.3v1.3h-1.3zM1124.9 150.14h1.3v1.3h-1.3zM1124.9 160.06h1.3v1.3h-1.3zM1124.9 169.97h1.3v1.3h-1.3zM1124.9 179.88h1.3v1.3h-1.3zM1124.9 189.79h1.3v1.3h-1.3zM1124.9 199.7h1.3v1.3h-1.3zM1124.9 209.62h1.3v1.3h-1.3zM1124.9 219.53h1.3v1.3h-1.3zM1124.9 229.44h1.3v1.3h-1.3zM1124.9 239.35h1.3v1.3h-1.3zM1124.9 249.26h1.3v1.3h-1.3zM1124.9 259.18h1.3v1.3h-1.3zM1124.9 269.09h1.3v1.3h-1.3zM1124.9 279h1.3v1.3h-1.3zM1124.9 288.91h1.3v1.3h-1.3zM1124.9 298.82h1.3v1.3h-1.3zM1124.9 308.74h1.3v1.3h-1.3zM1124.9 318.65h1.3v1.3h-1.3zM1124.9 328.56h1.3v1.3h-1.3zM1124.9 338.47h1.3v1.3h-1.3zM1124.9 348.38h1.3v1.3h-1.3zM1124.9 358.3h1.3v1.3h-1.3zM1124.9 368.21h1.3v1.3h-1.3zM1124.9 378.12h1.3v1.3h-1.3zM1124.9 388.03h1.3v1.3h-1.3zM1124.9 397.94h1.3v1.3h-1.3zM1124.9 407.86h1.3v1.3h-1.3zM1124.9 417.77h1.3v1.3h-1.3zM1134.81 31.2h1.3v1.3h-1.3zM1134.81 41.11h1.3v1.3h-1.3zM1134.81 51.02h1.3v1.3h-1.3zM1134.81 60.94h1.3v1.3h-1.3zM1134.81 70.85h1.3v1.3h-1.3zM1134.81 80.76h1.3v1.3h-1.3zM1134.81 90.67h1.3v1.3h-1.3zM1134.81 100.58h1.3v1.3h-1.3zM1134.81 110.5h1.3v1.3h-1.3zM1134.81 120.41h1.3v1.3h-1.3zM1134.81 130.32h1.3v1.3h-1.3zM1134.81 140.23h1.3v1.3h-1.3zM1134.81 150.14h1.3v1.3h-1.3zM1134.81 160.06h1.3v1.3h-1.3zM1134.81 169.97h1.3v1.3h-1.3zM1134.81 179.88h1.3v1.3h-1.3zM1134.81 189.79h1.3v1.3h-1.3zM1134.81 199.7h1.3v1.3h-1.3zM1134.81 209.62h1.3v1.3h-1.3zM1134.81 219.53h1.3v1.3h-1.3zM1134.81 229.44h1.3v1.3h-1.3zM1134.81 239.35h1.3v1.3h-1.3zM1134.81 249.26h1.3v1.3h-1.3zM1134.81 259.18h1.3v1.3h-1.3zM1134.81 269.09h1.3v1.3h-1.3zM1134.81 279h1.3v1.3h-1.3zM1134.81 288.91h1.3v1.3h-1.3zM1134.81 298.82h1.3v1.3h-1.3zM1134.81 308.74h1.3v1.3h-1.3zM1134.81 318.65h1.3v1.3h-1.3zM1134.81 328.56h1.3v1.3h-1.3zM1134.81 338.47h1.3v1.3h-1.3zM1134.81 348.38h1.3v1.3h-1.3zM1134.81 358.3h1.3v1.3h-1.3zM1134.81 368.21h1.3v1.3h-1.3zM1134.81 378.12h1.3v1.3h-1.3zM1134.81 388.03h1.3v1.3h-1.3zM1134.81 397.94h1.3v1.3h-1.3zM1134.81 407.86h1.3v1.3h-1.3zM1134.81 417.77h1.3v1.3h-1.3zM1144.72 31.2h1.3v1.3h-1.3zM1144.72 41.11h1.3v1.3h-1.3zM1144.72 51.02h1.3v1.3h-1.3zM1144.72 60.94h1.3v1.3h-1.3zM1144.72 70.85h1.3v1.3h-1.3zM1144.72 80.76h1.3v1.3h-1.3zM1144.72 90.67h1.3v1.3h-1.3zM1144.72 100.58h1.3v1.3h-1.3zM1144.72 110.5h1.3v1.3h-1.3zM1144.72 120.41h1.3v1.3h-1.3zM1144.72 130.32h1.3v1.3h-1.3zM1144.72 140.23h1.3v1.3h-1.3zM1144.72 150.14h1.3v1.3h-1.3zM1144.72 160.06h1.3v1.3h-1.3zM1144.72 169.97h1.3v1.3h-1.3zM1144.72 179.88h1.3v1.3h-1.3zM1144.72 189.79h1.3v1.3h-1.3zM1144.72 199.7h1.3v1.3h-1.3zM1144.72 209.62h1.3v1.3h-1.3zM1144.72 219.53h1.3v1.3h-1.3zM1144.72 229.44h1.3v1.3h-1.3zM1144.72 239.35h1.3v1.3h-1.3zM1144.72 249.26h1.3v1.3h-1.3zM1144.72 259.18h1.3v1.3h-1.3zM1144.72 269.09h1.3v1.3h-1.3zM1144.72 279h1.3v1.3h-1.3zM1144.72 288.91h1.3v1.3h-1.3zM1144.72 298.82h1.3v1.3h-1.3zM1144.72 308.74h1.3v1.3h-1.3zM1144.72 318.65h1.3v1.3h-1.3zM1144.72 328.56h1.3v1.3h-1.3zM1144.72 338.47h1.3v1.3h-1.3zM1144.72 348.38h1.3v1.3h-1.3zM1144.72 358.3h1.3v1.3h-1.3zM1144.72 368.21h1.3v1.3h-1.3zM1144.72 378.12h1.3v1.3h-1.3zM1144.72 388.03h1.3v1.3h-1.3zM1144.72 397.94h1.3v1.3h-1.3zM1144.72 407.86h1.3v1.3h-1.3zM1144.72 417.77h1.3v1.3h-1.3zM1154.63 31.2h1.3v1.3h-1.3zM1154.63 41.11h1.3v1.3h-1.3zM1154.63 51.02h1.3v1.3h-1.3zM1154.63 60.94h1.3v1.3h-1.3zM1154.63 70.85h1.3v1.3h-1.3zM1154.63 80.76h1.3v1.3h-1.3zM1154.63 90.67h1.3v1.3h-1.3zM1154.63 100.58h1.3v1.3h-1.3zM1154.63 110.5h1.3v1.3h-1.3zM1154.63 120.41h1.3v1.3h-1.3zM1154.63 130.32h1.3v1.3h-1.3zM1154.63 140.23h1.3v1.3h-1.3zM1154.63 150.14h1.3v1.3h-1.3zM1154.63 160.06h1.3v1.3h-1.3zM1154.63 169.97h1.3v1.3h-1.3zM1154.63 179.88h1.3v1.3h-1.3zM1154.63 189.79h1.3v1.3h-1.3zM1154.63 199.7h1.3v1.3h-1.3zM1154.63 209.62h1.3v1.3h-1.3zM1154.63 219.53h1.3v1.3h-1.3zM1154.63 229.44h1.3v1.3h-1.3zM1154.63 239.35h1.3v1.3h-1.3zM1154.63 249.26h1.3v1.3h-1.3zM1154.63 259.18h1.3v1.3h-1.3zM1154.63 269.09h1.3v1.3h-1.3zM1154.63 279h1.3v1.3h-1.3zM1154.63 288.91h1.3v1.3h-1.3zM1154.63 298.82h1.3v1.3h-1.3zM1154.63 308.74h1.3v1.3h-1.3zM1154.63 318.65h1.3v1.3h-1.3zM1154.63 328.56h1.3v1.3h-1.3zM1154.63 338.47h1.3v1.3h-1.3zM1154.63 348.38h1.3v1.3h-1.3zM1154.63 358.3h1.3v1.3h-1.3zM1154.63 368.21h1.3v1.3h-1.3zM1154.63 378.12h1.3v1.3h-1.3zM1154.63 388.03h1.3v1.3h-1.3zM1154.63 397.94h1.3v1.3h-1.3zM1154.63 407.86h1.3v1.3h-1.3zM1154.63 417.77h1.3v1.3h-1.3zM1164.54 31.2h1.3v1.3h-1.3zM1164.54 41.11h1.3v1.3h-1.3zM1164.54 51.02h1.3v1.3h-1.3zM1164.54 60.94h1.3v1.3h-1.3zM1164.54 70.85h1.3v1.3h-1.3zM1164.54 80.76h1.3v1.3h-1.3zM1164.54 90.67h1.3v1.3h-1.3zM1164.54 100.58h1.3v1.3h-1.3zM1164.54 110.5h1.3v1.3h-1.3zM1164.54 120.41h1.3v1.3h-1.3zM1164.54 130.32h1.3v1.3h-1.3zM1164.54 140.23h1.3v1.3h-1.3zM1164.54 150.14h1.3v1.3h-1.3zM1164.54 160.06h1.3v1.3h-1.3zM1164.54 169.97h1.3v1.3h-1.3zM1164.54 179.88h1.3v1.3h-1.3zM1164.54 189.79h1.3v1.3h-1.3zM1164.54 199.7h1.3v1.3h-1.3zM1164.54 209.62h1.3v1.3h-1.3zM1164.54 219.53h1.3v1.3h-1.3zM1164.54 229.44h1.3v1.3h-1.3zM1164.54 239.35h1.3v1.3h-1.3zM1164.54 249.26h1.3v1.3h-1.3zM1164.54 259.18h1.3v1.3h-1.3zM1164.54 269.09h1.3v1.3h-1.3zM1164.54 279h1.3v1.3h-1.3zM1164.54 288.91h1.3v1.3h-1.3zM1164.54 298.82h1.3v1.3h-1.3zM1164.54 308.74h1.3v1.3h-1.3zM1164.54 318.65h1.3v1.3h-1.3zM1164.54 328.56h1.3v1.3h-1.3zM1164.54 338.47h1.3v1.3h-1.3zM1164.54 348.38h1.3v1.3h-1.3zM1164.54 358.3h1.3v1.3h-1.3zM1164.54 368.21h1.3v1.3h-1.3zM1164.54 378.12h1.3v1.3h-1.3zM1164.54 388.03h1.3v1.3h-1.3zM1164.54 397.94h1.3v1.3h-1.3zM1164.54 407.86h1.3v1.3h-1.3zM1164.54 417.77h1.3v1.3h-1.3zM1174.46 31.2h1.3v1.3h-1.3zM1174.46 41.11h1.3v1.3h-1.3zM1174.46 51.02h1.3v1.3h-1.3zM1174.46 60.94h1.3v1.3h-1.3zM1174.46 70.85h1.3v1.3h-1.3zM1174.46 80.76h1.3v1.3h-1.3zM1174.46 90.67h1.3v1.3h-1.3zM1174.46 100.58h1.3v1.3h-1.3zM1174.46 110.5h1.3v1.3h-1.3zM1174.46 120.41h1.3v1.3h-1.3zM1174.46 130.32h1.3v1.3h-1.3zM1174.46 140.23h1.3v1.3h-1.3zM1174.46 150.14h1.3v1.3h-1.3zM1174.46 160.06h1.3v1.3h-1.3zM1174.46 169.97h1.3v1.3h-1.3zM1174.46 179.88h1.3v1.3h-1.3zM1174.46 189.79h1.3v1.3h-1.3zM1174.46 199.7h1.3v1.3h-1.3zM1174.46 209.62h1.3v1.3h-1.3zM1174.46 219.53h1.3v1.3h-1.3zM1174.46 229.44h1.3v1.3h-1.3zM1174.46 239.35h1.3v1.3h-1.3zM1174.46 249.26h1.3v1.3h-1.3zM1174.46 259.18h1.3v1.3h-1.3zM1174.46 269.09h1.3v1.3h-1.3zM1174.46 279h1.3v1.3h-1.3zM1174.46 288.91h1.3v1.3h-1.3zM1174.46 298.82h1.3v1.3h-1.3zM1174.46 308.74h1.3v1.3h-1.3zM1174.46 318.65h1.3v1.3h-1.3zM1174.46 328.56h1.3v1.3h-1.3zM1174.46 338.47h1.3v1.3h-1.3zM1174.46 348.38h1.3v1.3h-1.3zM1174.46 358.3h1.3v1.3h-1.3zM1174.46 368.21h1.3v1.3h-1.3zM1174.46 378.12h1.3v1.3h-1.3zM1174.46 388.03h1.3v1.3h-1.3zM1174.46 397.94h1.3v1.3h-1.3zM1174.46 407.86h1.3v1.3h-1.3zM1174.46 417.77h1.3v1.3h-1.3zM1184.37 31.2h1.3v1.3h-1.3zM1184.37 41.11h1.3v1.3h-1.3zM1184.37 51.02h1.3v1.3h-1.3zM1184.37 60.94h1.3v1.3h-1.3zM1184.37 70.85h1.3v1.3h-1.3zM1184.37 80.76h1.3v1.3h-1.3zM1184.37 90.67h1.3v1.3h-1.3zM1184.37 100.58h1.3v1.3h-1.3zM1184.37 110.5h1.3v1.3h-1.3zM1184.37 120.41h1.3v1.3h-1.3zM1184.37 130.32h1.3v1.3h-1.3zM1184.37 140.23h1.3v1.3h-1.3zM1184.37 150.14h1.3v1.3h-1.3zM1184.37 160.06h1.3v1.3h-1.3zM1184.37 169.97h1.3v1.3h-1.3zM1184.37 179.88h1.3v1.3h-1.3zM1184.37 189.79h1.3v1.3h-1.3zM1184.37 199.7h1.3v1.3h-1.3zM1184.37 209.62h1.3v1.3h-1.3zM1184.37 219.53h1.3v1.3h-1.3zM1184.37 229.44h1.3v1.3h-1.3zM1184.37 239.35h1.3v1.3h-1.3zM1184.37 249.26h1.3v1.3h-1.3zM1184.37 259.18h1.3v1.3h-1.3zM1184.37 269.09h1.3v1.3h-1.3zM1184.37 279h1.3v1.3h-1.3zM1184.37 288.91h1.3v1.3h-1.3zM1184.37 298.82h1.3v1.3h-1.3zM1184.37 308.74h1.3v1.3h-1.3zM1184.37 318.65h1.3v1.3h-1.3zM1184.37 328.56h1.3v1.3h-1.3zM1184.37 338.47h1.3v1.3h-1.3zM1184.37 348.38h1.3v1.3h-1.3zM1184.37 358.3h1.3v1.3h-1.3zM1184.37 368.21h1.3v1.3h-1.3zM1184.37 378.12h1.3v1.3h-1.3zM1184.37 388.03h1.3v1.3h-1.3zM1184.37 397.94h1.3v1.3h-1.3zM1184.37 407.86h1.3v1.3h-1.3zM1184.37 417.77h1.3v1.3h-1.3zM1194.28 31.2h1.3v1.3h-1.3zM1194.28 41.11h1.3v1.3h-1.3zM1194.28 51.02h1.3v1.3h-1.3zM1194.28 60.94h1.3v1.3h-1.3zM1194.28 70.85h1.3v1.3h-1.3zM1194.28 80.76h1.3v1.3h-1.3zM1194.28 90.67h1.3v1.3h-1.3zM1194.28 100.58h1.3v1.3h-1.3zM1194.28 110.5h1.3v1.3h-1.3zM1194.28 120.41h1.3v1.3h-1.3zM1194.28 130.32h1.3v1.3h-1.3zM1194.28 140.23h1.3v1.3h-1.3zM1194.28 150.14h1.3v1.3h-1.3zM1194.28 160.06h1.3v1.3h-1.3zM1194.28 169.97h1.3v1.3h-1.3zM1194.28 179.88h1.3v1.3h-1.3zM1194.28 189.79h1.3v1.3h-1.3zM1194.28 199.7h1.3v1.3h-1.3zM1194.28 209.62h1.3v1.3h-1.3zM1194.28 219.53h1.3v1.3h-1.3zM1194.28 229.44h1.3v1.3h-1.3zM1194.28 239.35h1.3v1.3h-1.3zM1194.28 249.26h1.3v1.3h-1.3zM1194.28 259.18h1.3v1.3h-1.3zM1194.28 269.09h1.3v1.3h-1.3zM1194.28 279h1.3v1.3h-1.3zM1194.28 288.91h1.3v1.3h-1.3zM1194.28 298.82h1.3v1.3h-1.3zM1194.28 308.74h1.3v1.3h-1.3zM1194.28 318.65h1.3v1.3h-1.3zM1194.28 328.56h1.3v1.3h-1.3zM1194.28 338.47h1.3v1.3h-1.3zM1194.28 348.38h1.3v1.3h-1.3zM1194.28 358.3h1.3v1.3h-1.3zM1194.28 368.21h1.3v1.3h-1.3zM1194.28 378.12h1.3v1.3h-1.3zM1194.28 388.03h1.3v1.3h-1.3zM1194.28 397.94h1.3v1.3h-1.3zM1194.28 407.86h1.3v1.3h-1.3zM1194.28 417.77h1.3v1.3h-1.3zM1204.19 31.2h1.3v1.3h-1.3zM1204.19 41.11h1.3v1.3h-1.3zM1204.19 51.02h1.3v1.3h-1.3zM1204.19 60.94h1.3v1.3h-1.3zM1204.19 70.85h1.3v1.3h-1.3zM1204.19 80.76h1.3v1.3h-1.3zM1204.19 90.67h1.3v1.3h-1.3zM1204.19 100.58h1.3v1.3h-1.3zM1204.19 110.5h1.3v1.3h-1.3zM1204.19 120.41h1.3v1.3h-1.3zM1204.19 130.32h1.3v1.3h-1.3zM1204.19 140.23h1.3v1.3h-1.3zM1204.19 150.14h1.3v1.3h-1.3zM1204.19 160.06h1.3v1.3h-1.3zM1204.19 169.97h1.3v1.3h-1.3zM1204.19 179.88h1.3v1.3h-1.3zM1204.19 189.79h1.3v1.3h-1.3zM1204.19 199.7h1.3v1.3h-1.3zM1204.19 209.62h1.3v1.3h-1.3zM1204.19 219.53h1.3v1.3h-1.3zM1204.19 229.44h1.3v1.3h-1.3zM1204.19 239.35h1.3v1.3h-1.3zM1204.19 249.26h1.3v1.3h-1.3zM1204.19 259.18h1.3v1.3h-1.3zM1204.19 269.09h1.3v1.3h-1.3zM1204.19 279h1.3v1.3h-1.3zM1204.19 288.91h1.3v1.3h-1.3zM1204.19 298.82h1.3v1.3h-1.3zM1204.19 308.74h1.3v1.3h-1.3zM1204.19 318.65h1.3v1.3h-1.3zM1204.19 328.56h1.3v1.3h-1.3zM1204.19 338.47h1.3v1.3h-1.3zM1204.19 348.38h1.3v1.3h-1.3zM1204.19 358.3h1.3v1.3h-1.3zM1204.19 368.21h1.3v1.3h-1.3zM1204.19 378.12h1.3v1.3h-1.3zM1204.19 388.03h1.3v1.3h-1.3zM1204.19 397.94h1.3v1.3h-1.3zM1204.19 407.86h1.3v1.3h-1.3zM1204.19 417.77h1.3v1.3h-1.3zM1214.1 31.2h1.3v1.3h-1.3zM1214.1 41.11h1.3v1.3h-1.3zM1214.1 51.02h1.3v1.3h-1.3zM1214.1 60.94h1.3v1.3h-1.3zM1214.1 70.85h1.3v1.3h-1.3zM1214.1 80.76h1.3v1.3h-1.3zM1214.1 90.67h1.3v1.3h-1.3zM1214.1 100.58h1.3v1.3h-1.3zM1214.1 110.5h1.3v1.3h-1.3zM1214.1 120.41h1.3v1.3h-1.3zM1214.1 130.32h1.3v1.3h-1.3zM1214.1 140.23h1.3v1.3h-1.3zM1214.1 150.14h1.3v1.3h-1.3zM1214.1 160.06h1.3v1.3h-1.3zM1214.1 169.97h1.3v1.3h-1.3zM1214.1 179.88h1.3v1.3h-1.3zM1214.1 189.79h1.3v1.3h-1.3zM1214.1 199.7h1.3v1.3h-1.3zM1214.1 209.62h1.3v1.3h-1.3zM1214.1 219.53h1.3v1.3h-1.3zM1214.1 229.44h1.3v1.3h-1.3zM1214.1 239.35h1.3v1.3h-1.3zM1214.1 249.26h1.3v1.3h-1.3zM1214.1 259.18h1.3v1.3h-1.3zM1214.1 269.09h1.3v1.3h-1.3zM1214.1 279h1.3v1.3h-1.3zM1214.1 288.91h1.3v1.3h-1.3zM1214.1 298.82h1.3v1.3h-1.3zM1214.1 308.74h1.3v1.3h-1.3zM1214.1 318.65h1.3v1.3h-1.3zM1214.1 328.56h1.3v1.3h-1.3zM1214.1 338.47h1.3v1.3h-1.3zM1214.1 348.38h1.3v1.3h-1.3zM1214.1 358.3h1.3v1.3h-1.3zM1214.1 368.21h1.3v1.3h-1.3zM1214.1 378.12h1.3v1.3h-1.3zM1214.1 388.03h1.3v1.3h-1.3zM1214.1 397.94h1.3v1.3h-1.3zM1214.1 407.86h1.3v1.3h-1.3zM1214.1 417.77h1.3v1.3h-1.3zM1224.02 31.2h1.3v1.3h-1.3zM1224.02 41.11h1.3v1.3h-1.3zM1224.02 51.02h1.3v1.3h-1.3zM1224.02 60.94h1.3v1.3h-1.3zM1224.02 70.85h1.3v1.3h-1.3zM1224.02 80.76h1.3v1.3h-1.3zM1224.02 90.67h1.3v1.3h-1.3zM1224.02 100.58h1.3v1.3h-1.3zM1224.02 110.5h1.3v1.3h-1.3zM1224.02 120.41h1.3v1.3h-1.3zM1224.02 130.32h1.3v1.3h-1.3zM1224.02 140.23h1.3v1.3h-1.3zM1224.02 150.14h1.3v1.3h-1.3zM1224.02 160.06h1.3v1.3h-1.3zM1224.02 169.97h1.3v1.3h-1.3zM1224.02 179.88h1.3v1.3h-1.3zM1224.02 189.79h1.3v1.3h-1.3zM1224.02 199.7h1.3v1.3h-1.3zM1224.02 209.62h1.3v1.3h-1.3zM1224.02 219.53h1.3v1.3h-1.3zM1224.02 229.44h1.3v1.3h-1.3zM1224.02 239.35h1.3v1.3h-1.3zM1224.02 249.26h1.3v1.3h-1.3zM1224.02 259.18h1.3v1.3h-1.3zM1224.02 269.09h1.3v1.3h-1.3zM1224.02 279h1.3v1.3h-1.3zM1224.02 288.91h1.3v1.3h-1.3zM1224.02 298.82h1.3v1.3h-1.3zM1224.02 308.74h1.3v1.3h-1.3zM1224.02 318.65h1.3v1.3h-1.3zM1224.02 328.56h1.3v1.3h-1.3zM1224.02 338.47h1.3v1.3h-1.3zM1224.02 348.38h1.3v1.3h-1.3zM1224.02 358.3h1.3v1.3h-1.3zM1224.02 368.21h1.3v1.3h-1.3zM1224.02 378.12h1.3v1.3h-1.3zM1224.02 388.03h1.3v1.3h-1.3zM1224.02 397.94h1.3v1.3h-1.3zM1224.02 407.86h1.3v1.3h-1.3zM1224.02 417.77h1.3v1.3h-1.3zM1233.93 31.2h1.3v1.3h-1.3zM1233.93 41.11h1.3v1.3h-1.3zM1233.93 51.02h1.3v1.3h-1.3zM1233.93 60.94h1.3v1.3h-1.3zM1233.93 70.85h1.3v1.3h-1.3zM1233.93 80.76h1.3v1.3h-1.3zM1233.93 90.67h1.3v1.3h-1.3zM1233.93 100.58h1.3v1.3h-1.3zM1233.93 110.5h1.3v1.3h-1.3zM1233.93 120.41h1.3v1.3h-1.3zM1233.93 130.32h1.3v1.3h-1.3zM1233.93 140.23h1.3v1.3h-1.3zM1233.93 150.14h1.3v1.3h-1.3zM1233.93 160.06h1.3v1.3h-1.3zM1233.93 169.97h1.3v1.3h-1.3zM1233.93 179.88h1.3v1.3h-1.3zM1233.93 189.79h1.3v1.3h-1.3zM1233.93 199.7h1.3v1.3h-1.3zM1233.93 209.62h1.3v1.3h-1.3zM1233.93 219.53h1.3v1.3h-1.3zM1233.93 229.44h1.3v1.3h-1.3zM1233.93 239.35h1.3v1.3h-1.3zM1233.93 249.26h1.3v1.3h-1.3zM1233.93 259.18h1.3v1.3h-1.3zM1233.93 269.09h1.3v1.3h-1.3zM1233.93 279h1.3v1.3h-1.3zM1233.93 288.91h1.3v1.3h-1.3zM1233.93 298.82h1.3v1.3h-1.3zM1233.93 308.74h1.3v1.3h-1.3zM1233.93 318.65h1.3v1.3h-1.3zM1233.93 328.56h1.3v1.3h-1.3zM1233.93 338.47h1.3v1.3h-1.3zM1233.93 348.38h1.3v1.3h-1.3zM1233.93 358.3h1.3v1.3h-1.3zM1233.93 368.21h1.3v1.3h-1.3zM1233.93 378.12h1.3v1.3h-1.3zM1233.93 388.03h1.3v1.3h-1.3zM1233.93 397.94h1.3v1.3h-1.3zM1233.93 407.86h1.3v1.3h-1.3zM1233.93 417.77h1.3v1.3h-1.3zM1243.84 31.2h1.3v1.3h-1.3zM1243.84 41.11h1.3v1.3h-1.3zM1243.84 51.02h1.3v1.3h-1.3zM1243.84 60.94h1.3v1.3h-1.3zM1243.84 70.85h1.3v1.3h-1.3zM1243.84 80.76h1.3v1.3h-1.3zM1243.84 90.67h1.3v1.3h-1.3zM1243.84 100.58h1.3v1.3h-1.3zM1243.84 110.5h1.3v1.3h-1.3zM1243.84 120.41h1.3v1.3h-1.3zM1243.84 130.32h1.3v1.3h-1.3zM1243.84 140.23h1.3v1.3h-1.3zM1243.84 150.14h1.3v1.3h-1.3zM1243.84 160.06h1.3v1.3h-1.3zM1243.84 169.97h1.3v1.3h-1.3zM1243.84 179.88h1.3v1.3h-1.3zM1243.84 189.79h1.3v1.3h-1.3zM1243.84 199.7h1.3v1.3h-1.3zM1243.84 209.62h1.3v1.3h-1.3zM1243.84 219.53h1.3v1.3h-1.3zM1243.84 229.44h1.3v1.3h-1.3zM1243.84 239.35h1.3v1.3h-1.3zM1243.84 249.26h1.3v1.3h-1.3zM1243.84 259.18h1.3v1.3h-1.3zM1243.84 269.09h1.3v1.3h-1.3zM1243.84 279h1.3v1.3h-1.3zM1243.84 288.91h1.3v1.3h-1.3zM1243.84 298.82h1.3v1.3h-1.3zM1243.84 308.74h1.3v1.3h-1.3zM1243.84 318.65h1.3v1.3h-1.3zM1243.84 328.56h1.3v1.3h-1.3zM1243.84 338.47h1.3v1.3h-1.3zM1243.84 348.38h1.3v1.3h-1.3zM1243.84 358.3h1.3v1.3h-1.3zM1243.84 368.21h1.3v1.3h-1.3zM1243.84 378.12h1.3v1.3h-1.3zM1243.84 388.03h1.3v1.3h-1.3zM1243.84 397.94h1.3v1.3h-1.3zM1243.84 407.86h1.3v1.3h-1.3zM1243.84 417.77h1.3v1.3h-1.3zM1253.75 31.2h1.3v1.3h-1.3zM1253.75 41.11h1.3v1.3h-1.3zM1253.75 51.02h1.3v1.3h-1.3zM1253.75 60.94h1.3v1.3h-1.3zM1253.75 70.85h1.3v1.3h-1.3zM1253.75 80.76h1.3v1.3h-1.3zM1253.75 90.67h1.3v1.3h-1.3zM1253.75 100.58h1.3v1.3h-1.3zM1253.75 110.5h1.3v1.3h-1.3zM1253.75 120.41h1.3v1.3h-1.3zM1253.75 130.32h1.3v1.3h-1.3zM1253.75 140.23h1.3v1.3h-1.3zM1253.75 150.14h1.3v1.3h-1.3zM1253.75 160.06h1.3v1.3h-1.3zM1253.75 169.97h1.3v1.3h-1.3zM1253.75 179.88h1.3v1.3h-1.3zM1253.75 189.79h1.3v1.3h-1.3zM1253.75 199.7h1.3v1.3h-1.3zM1253.75 209.62h1.3v1.3h-1.3zM1253.75 219.53h1.3v1.3h-1.3zM1253.75 229.44h1.3v1.3h-1.3zM1253.75 239.35h1.3v1.3h-1.3zM1253.75 249.26h1.3v1.3h-1.3zM1253.75 259.18h1.3v1.3h-1.3zM1253.75 269.09h1.3v1.3h-1.3zM1253.75 279h1.3v1.3h-1.3zM1253.75 288.91h1.3v1.3h-1.3zM1253.75 298.82h1.3v1.3h-1.3zM1253.75 308.74h1.3v1.3h-1.3zM1253.75 318.65h1.3v1.3h-1.3zM1253.75 328.56h1.3v1.3h-1.3zM1253.75 338.47h1.3v1.3h-1.3zM1253.75 348.38h1.3v1.3h-1.3zM1253.75 358.3h1.3v1.3h-1.3zM1253.75 368.21h1.3v1.3h-1.3zM1253.75 378.12h1.3v1.3h-1.3zM1253.75 388.03h1.3v1.3h-1.3zM1253.75 397.94h1.3v1.3h-1.3zM1253.75 407.86h1.3v1.3h-1.3zM1253.75 417.77h1.3v1.3h-1.3zM1263.66 31.2h1.3v1.3h-1.3zM1263.66 41.11h1.3v1.3h-1.3zM1263.66 51.02h1.3v1.3h-1.3zM1263.66 60.94h1.3v1.3h-1.3zM1263.66 70.85h1.3v1.3h-1.3zM1263.66 80.76h1.3v1.3h-1.3zM1263.66 90.67h1.3v1.3h-1.3zM1263.66 100.58h1.3v1.3h-1.3zM1263.66 110.5h1.3v1.3h-1.3zM1263.66 120.41h1.3v1.3h-1.3zM1263.66 130.32h1.3v1.3h-1.3zM1263.66 140.23h1.3v1.3h-1.3zM1263.66 150.14h1.3v1.3h-1.3zM1263.66 160.06h1.3v1.3h-1.3zM1263.66 169.97h1.3v1.3h-1.3zM1263.66 179.88h1.3v1.3h-1.3zM1263.66 189.79h1.3v1.3h-1.3zM1263.66 199.7h1.3v1.3h-1.3zM1263.66 209.62h1.3v1.3h-1.3zM1263.66 219.53h1.3v1.3h-1.3zM1263.66 229.44h1.3v1.3h-1.3zM1263.66 239.35h1.3v1.3h-1.3zM1263.66 249.26h1.3v1.3h-1.3zM1263.66 259.18h1.3v1.3h-1.3zM1263.66 269.09h1.3v1.3h-1.3zM1263.66 279h1.3v1.3h-1.3zM1263.66 288.91h1.3v1.3h-1.3zM1263.66 298.82h1.3v1.3h-1.3zM1263.66 308.74h1.3v1.3h-1.3zM1263.66 318.65h1.3v1.3h-1.3zM1263.66 328.56h1.3v1.3h-1.3zM1263.66 338.47h1.3v1.3h-1.3zM1263.66 348.38h1.3v1.3h-1.3zM1263.66 358.3h1.3v1.3h-1.3zM1263.66 368.21h1.3v1.3h-1.3zM1263.66 378.12h1.3v1.3h-1.3zM1263.66 388.03h1.3v1.3h-1.3zM1263.66 397.94h1.3v1.3h-1.3zM1263.66 407.86h1.3v1.3h-1.3zM1263.66 417.77h1.3v1.3h-1.3zM1273.58 31.2h1.3v1.3h-1.3zM1273.58 41.11h1.3v1.3h-1.3zM1273.58 51.02h1.3v1.3h-1.3zM1273.58 60.94h1.3v1.3h-1.3zM1273.58 70.85h1.3v1.3h-1.3zM1273.58 80.76h1.3v1.3h-1.3zM1273.58 90.67h1.3v1.3h-1.3zM1273.58 100.58h1.3v1.3h-1.3zM1273.58 110.5h1.3v1.3h-1.3zM1273.58 120.41h1.3v1.3h-1.3zM1273.58 130.32h1.3v1.3h-1.3zM1273.58 140.23h1.3v1.3h-1.3zM1273.58 150.14h1.3v1.3h-1.3zM1273.58 160.06h1.3v1.3h-1.3zM1273.58 169.97h1.3v1.3h-1.3zM1273.58 179.88h1.3v1.3h-1.3zM1273.58 189.79h1.3v1.3h-1.3zM1273.58 199.7h1.3v1.3h-1.3zM1273.58 209.62h1.3v1.3h-1.3zM1273.58 219.53h1.3v1.3h-1.3zM1273.58 229.44h1.3v1.3h-1.3zM1273.58 239.35h1.3v1.3h-1.3zM1273.58 249.26h1.3v1.3h-1.3zM1273.58 259.18h1.3v1.3h-1.3zM1273.58 269.09h1.3v1.3h-1.3zM1273.58 279h1.3v1.3h-1.3zM1273.58 288.91h1.3v1.3h-1.3zM1273.58 298.82h1.3v1.3h-1.3zM1273.58 308.74h1.3v1.3h-1.3zM1273.58 318.65h1.3v1.3h-1.3zM1273.58 328.56h1.3v1.3h-1.3zM1273.58 338.47h1.3v1.3h-1.3zM1273.58 348.38h1.3v1.3h-1.3zM1273.58 358.3h1.3v1.3h-1.3zM1273.58 368.21h1.3v1.3h-1.3zM1273.58 378.12h1.3v1.3h-1.3zM1273.58 388.03h1.3v1.3h-1.3zM1273.58 397.94h1.3v1.3h-1.3zM1273.58 407.86h1.3v1.3h-1.3zM1273.58 417.77h1.3v1.3h-1.3zM1283.49 31.2h1.3v1.3h-1.3zM1283.49 41.11h1.3v1.3h-1.3zM1283.49 51.02h1.3v1.3h-1.3zM1283.49 60.94h1.3v1.3h-1.3zM1283.49 70.85h1.3v1.3h-1.3zM1283.49 80.76h1.3v1.3h-1.3zM1283.49 90.67h1.3v1.3h-1.3zM1283.49 100.58h1.3v1.3h-1.3zM1283.49 110.5h1.3v1.3h-1.3zM1283.49 120.41h1.3v1.3h-1.3zM1283.49 130.32h1.3v1.3h-1.3zM1283.49 140.23h1.3v1.3h-1.3zM1283.49 150.14h1.3v1.3h-1.3zM1283.49 160.06h1.3v1.3h-1.3zM1283.49 169.97h1.3v1.3h-1.3zM1283.49 179.88h1.3v1.3h-1.3zM1283.49 189.79h1.3v1.3h-1.3zM1283.49 199.7h1.3v1.3h-1.3zM1283.49 209.62h1.3v1.3h-1.3zM1283.49 219.53h1.3v1.3h-1.3zM1283.49 229.44h1.3v1.3h-1.3zM1283.49 239.35h1.3v1.3h-1.3zM1283.49 249.26h1.3v1.3h-1.3zM1283.49 259.18h1.3v1.3h-1.3zM1283.49 269.09h1.3v1.3h-1.3zM1283.49 279h1.3v1.3h-1.3zM1283.49 288.91h1.3v1.3h-1.3zM1283.49 298.82h1.3v1.3h-1.3zM1283.49 308.74h1.3v1.3h-1.3zM1283.49 318.65h1.3v1.3h-1.3zM1283.49 328.56h1.3v1.3h-1.3zM1283.49 338.47h1.3v1.3h-1.3zM1283.49 348.38h1.3v1.3h-1.3zM1283.49 358.3h1.3v1.3h-1.3zM1283.49 368.21h1.3v1.3h-1.3zM1283.49 378.12h1.3v1.3h-1.3zM1283.49 388.03h1.3v1.3h-1.3zM1283.49 397.94h1.3v1.3h-1.3zM1283.49 407.86h1.3v1.3h-1.3zM1283.49 417.77h1.3v1.3h-1.3zM1293.4 31.2h1.3v1.3h-1.3zM1293.4 41.11h1.3v1.3h-1.3zM1293.4 51.02h1.3v1.3h-1.3zM1293.4 60.94h1.3v1.3h-1.3zM1293.4 70.85h1.3v1.3h-1.3zM1293.4 80.76h1.3v1.3h-1.3zM1293.4 90.67h1.3v1.3h-1.3zM1293.4 100.58h1.3v1.3h-1.3zM1293.4 110.5h1.3v1.3h-1.3zM1293.4 120.41h1.3v1.3h-1.3zM1293.4 130.32h1.3v1.3h-1.3zM1293.4 140.23h1.3v1.3h-1.3zM1293.4 150.14h1.3v1.3h-1.3zM1293.4 160.06h1.3v1.3h-1.3zM1293.4 169.97h1.3v1.3h-1.3zM1293.4 179.88h1.3v1.3h-1.3zM1293.4 189.79h1.3v1.3h-1.3zM1293.4 199.7h1.3v1.3h-1.3zM1293.4 209.62h1.3v1.3h-1.3zM1293.4 219.53h1.3v1.3h-1.3zM1293.4 229.44h1.3v1.3h-1.3zM1293.4 239.35h1.3v1.3h-1.3zM1293.4 249.26h1.3v1.3h-1.3zM1293.4 259.18h1.3v1.3h-1.3zM1293.4 269.09h1.3v1.3h-1.3zM1293.4 279h1.3v1.3h-1.3zM1293.4 288.91h1.3v1.3h-1.3zM1293.4 298.82h1.3v1.3h-1.3zM1293.4 308.74h1.3v1.3h-1.3zM1293.4 318.65h1.3v1.3h-1.3zM1293.4 328.56h1.3v1.3h-1.3zM1293.4 338.47h1.3v1.3h-1.3zM1293.4 348.38h1.3v1.3h-1.3zM1293.4 358.3h1.3v1.3h-1.3zM1293.4 368.21h1.3v1.3h-1.3zM1293.4 378.12h1.3v1.3h-1.3zM1293.4 388.03h1.3v1.3h-1.3zM1293.4 397.94h1.3v1.3h-1.3zM1293.4 407.86h1.3v1.3h-1.3zM1293.4 417.77h1.3v1.3h-1.3zM1303.31 31.2h1.3v1.3h-1.3zM1303.31 41.11h1.3v1.3h-1.3zM1303.31 51.02h1.3v1.3h-1.3zM1303.31 60.94h1.3v1.3h-1.3zM1303.31 70.85h1.3v1.3h-1.3zM1303.31 80.76h1.3v1.3h-1.3zM1303.31 90.67h1.3v1.3h-1.3zM1303.31 100.58h1.3v1.3h-1.3zM1303.31 110.5h1.3v1.3h-1.3zM1303.31 120.41h1.3v1.3h-1.3zM1303.31 130.32h1.3v1.3h-1.3zM1303.31 140.23h1.3v1.3h-1.3zM1303.31 150.14h1.3v1.3h-1.3zM1303.31 160.06h1.3v1.3h-1.3zM1303.31 169.97h1.3v1.3h-1.3zM1303.31 179.88h1.3v1.3h-1.3zM1303.31 189.79h1.3v1.3h-1.3zM1303.31 199.7h1.3v1.3h-1.3zM1303.31 209.62h1.3v1.3h-1.3zM1303.31 219.53h1.3v1.3h-1.3zM1303.31 229.44h1.3v1.3h-1.3zM1303.31 239.35h1.3v1.3h-1.3zM1303.31 249.26h1.3v1.3h-1.3zM1303.31 259.18h1.3v1.3h-1.3zM1303.31 269.09h1.3v1.3h-1.3zM1303.31 279h1.3v1.3h-1.3zM1303.31 288.91h1.3v1.3h-1.3zM1303.31 298.82h1.3v1.3h-1.3zM1303.31 308.74h1.3v1.3h-1.3zM1303.31 318.65h1.3v1.3h-1.3zM1303.31 328.56h1.3v1.3h-1.3zM1303.31 338.47h1.3v1.3h-1.3zM1303.31 348.38h1.3v1.3h-1.3zM1303.31 358.3h1.3v1.3h-1.3zM1303.31 368.21h1.3v1.3h-1.3zM1303.31 378.12h1.3v1.3h-1.3zM1303.31 388.03h1.3v1.3h-1.3zM1303.31 397.94h1.3v1.3h-1.3zM1303.31 407.86h1.3v1.3h-1.3zM1303.31 417.77h1.3v1.3h-1.3zM1313.22 31.2h1.3v1.3h-1.3zM1313.22 41.11h1.3v1.3h-1.3zM1313.22 51.02h1.3v1.3h-1.3zM1313.22 60.94h1.3v1.3h-1.3zM1313.22 70.85h1.3v1.3h-1.3zM1313.22 80.76h1.3v1.3h-1.3zM1313.22 90.67h1.3v1.3h-1.3zM1313.22 100.58h1.3v1.3h-1.3zM1313.22 110.5h1.3v1.3h-1.3zM1313.22 120.41h1.3v1.3h-1.3zM1313.22 130.32h1.3v1.3h-1.3zM1313.22 140.23h1.3v1.3h-1.3zM1313.22 150.14h1.3v1.3h-1.3zM1313.22 160.06h1.3v1.3h-1.3zM1313.22 169.97h1.3v1.3h-1.3zM1313.22 179.88h1.3v1.3h-1.3zM1313.22 189.79h1.3v1.3h-1.3zM1313.22 199.7h1.3v1.3h-1.3zM1313.22 209.62h1.3v1.3h-1.3zM1313.22 219.53h1.3v1.3h-1.3zM1313.22 229.44h1.3v1.3h-1.3zM1313.22 239.35h1.3v1.3h-1.3zM1313.22 249.26h1.3v1.3h-1.3zM1313.22 259.18h1.3v1.3h-1.3zM1313.22 269.09h1.3v1.3h-1.3zM1313.22 279h1.3v1.3h-1.3zM1313.22 288.91h1.3v1.3h-1.3zM1313.22 298.82h1.3v1.3h-1.3zM1313.22 308.74h1.3v1.3h-1.3zM1313.22 318.65h1.3v1.3h-1.3zM1313.22 328.56h1.3v1.3h-1.3zM1313.22 338.47h1.3v1.3h-1.3zM1313.22 348.38h1.3v1.3h-1.3zM1313.22 358.3h1.3v1.3h-1.3zM1313.22 368.21h1.3v1.3h-1.3zM1313.22 378.12h1.3v1.3h-1.3zM1313.22 388.03h1.3v1.3h-1.3zM1313.22 397.94h1.3v1.3h-1.3zM1313.22 407.86h1.3v1.3h-1.3zM1313.22 417.77h1.3v1.3h-1.3zM1323.14 31.2h1.3v1.3h-1.3zM1323.14 41.11h1.3v1.3h-1.3zM1323.14 51.02h1.3v1.3h-1.3zM1323.14 60.94h1.3v1.3h-1.3zM1323.14 70.85h1.3v1.3h-1.3zM1323.14 80.76h1.3v1.3h-1.3zM1323.14 90.67h1.3v1.3h-1.3zM1323.14 100.58h1.3v1.3h-1.3zM1323.14 110.5h1.3v1.3h-1.3zM1323.14 120.41h1.3v1.3h-1.3zM1323.14 130.32h1.3v1.3h-1.3zM1323.14 140.23h1.3v1.3h-1.3zM1323.14 150.14h1.3v1.3h-1.3zM1323.14 160.06h1.3v1.3h-1.3zM1323.14 169.97h1.3v1.3h-1.3zM1323.14 179.88h1.3v1.3h-1.3zM1323.14 189.79h1.3v1.3h-1.3zM1323.14 199.7h1.3v1.3h-1.3zM1323.14 209.62h1.3v1.3h-1.3zM1323.14 219.53h1.3v1.3h-1.3zM1323.14 229.44h1.3v1.3h-1.3zM1323.14 239.35h1.3v1.3h-1.3zM1323.14 249.26h1.3v1.3h-1.3zM1323.14 259.18h1.3v1.3h-1.3zM1323.14 269.09h1.3v1.3h-1.3zM1323.14 279h1.3v1.3h-1.3zM1323.14 288.91h1.3v1.3h-1.3zM1323.14 298.82h1.3v1.3h-1.3zM1323.14 308.74h1.3v1.3h-1.3zM1323.14 318.65h1.3v1.3h-1.3zM1323.14 328.56h1.3v1.3h-1.3zM1323.14 338.47h1.3v1.3h-1.3zM1323.14 348.38h1.3v1.3h-1.3zM1323.14 358.3h1.3v1.3h-1.3zM1323.14 368.21h1.3v1.3h-1.3zM1323.14 378.12h1.3v1.3h-1.3zM1323.14 388.03h1.3v1.3h-1.3zM1323.14 397.94h1.3v1.3h-1.3zM1323.14 407.86h1.3v1.3h-1.3zM1323.14 417.77h1.3v1.3h-1.3zM1333.05 31.2h1.3v1.3h-1.3zM1333.05 41.11h1.3v1.3h-1.3zM1333.05 51.02h1.3v1.3h-1.3zM1333.05 60.94h1.3v1.3h-1.3zM1333.05 70.85h1.3v1.3h-1.3zM1333.05 80.76h1.3v1.3h-1.3zM1333.05 90.67h1.3v1.3h-1.3zM1333.05 100.58h1.3v1.3h-1.3zM1333.05 110.5h1.3v1.3h-1.3zM1333.05 120.41h1.3v1.3h-1.3zM1333.05 130.32h1.3v1.3h-1.3zM1333.05 140.23h1.3v1.3h-1.3zM1333.05 150.14h1.3v1.3h-1.3zM1333.05 160.06h1.3v1.3h-1.3zM1333.05 169.97h1.3v1.3h-1.3zM1333.05 179.88h1.3v1.3h-1.3zM1333.05 189.79h1.3v1.3h-1.3zM1333.05 199.7h1.3v1.3h-1.3zM1333.05 209.62h1.3v1.3h-1.3zM1333.05 219.53h1.3v1.3h-1.3zM1333.05 229.44h1.3v1.3h-1.3zM1333.05 239.35h1.3v1.3h-1.3zM1333.05 249.26h1.3v1.3h-1.3zM1333.05 259.18h1.3v1.3h-1.3zM1333.05 269.09h1.3v1.3h-1.3zM1333.05 279h1.3v1.3h-1.3zM1333.05 288.91h1.3v1.3h-1.3zM1333.05 298.82h1.3v1.3h-1.3zM1333.05 308.74h1.3v1.3h-1.3zM1333.05 318.65h1.3v1.3h-1.3zM1333.05 328.56h1.3v1.3h-1.3zM1333.05 338.47h1.3v1.3h-1.3zM1333.05 348.38h1.3v1.3h-1.3zM1333.05 358.3h1.3v1.3h-1.3zM1333.05 368.21h1.3v1.3h-1.3zM1333.05 378.12h1.3v1.3h-1.3zM1333.05 388.03h1.3v1.3h-1.3zM1333.05 397.94h1.3v1.3h-1.3zM1333.05 407.86h1.3v1.3h-1.3zM1333.05 417.77h1.3v1.3h-1.3zM1342.96 31.2h1.3v1.3h-1.3zM1342.96 41.11h1.3v1.3h-1.3zM1342.96 51.02h1.3v1.3h-1.3zM1342.96 60.94h1.3v1.3h-1.3zM1342.96 70.85h1.3v1.3h-1.3zM1342.96 80.76h1.3v1.3h-1.3zM1342.96 90.67h1.3v1.3h-1.3zM1342.96 100.58h1.3v1.3h-1.3zM1342.96 110.5h1.3v1.3h-1.3zM1342.96 120.41h1.3v1.3h-1.3zM1342.96 130.32h1.3v1.3h-1.3zM1342.96 140.23h1.3v1.3h-1.3zM1342.96 150.14h1.3v1.3h-1.3zM1342.96 160.06h1.3v1.3h-1.3zM1342.96 169.97h1.3v1.3h-1.3zM1342.96 179.88h1.3v1.3h-1.3zM1342.96 189.79h1.3v1.3h-1.3zM1342.96 199.7h1.3v1.3h-1.3zM1342.96 209.62h1.3v1.3h-1.3zM1342.96 219.53h1.3v1.3h-1.3zM1342.96 229.44h1.3v1.3h-1.3zM1342.96 239.35h1.3v1.3h-1.3zM1342.96 249.26h1.3v1.3h-1.3zM1342.96 259.18h1.3v1.3h-1.3zM1342.96 269.09h1.3v1.3h-1.3zM1342.96 279h1.3v1.3h-1.3zM1342.96 288.91h1.3v1.3h-1.3zM1342.96 298.82h1.3v1.3h-1.3zM1342.96 308.74h1.3v1.3h-1.3zM1342.96 318.65h1.3v1.3h-1.3zM1342.96 328.56h1.3v1.3h-1.3zM1342.96 338.47h1.3v1.3h-1.3zM1342.96 348.38h1.3v1.3h-1.3zM1342.96 358.3h1.3v1.3h-1.3zM1342.96 368.21h1.3v1.3h-1.3zM1342.96 378.12h1.3v1.3h-1.3zM1342.96 388.03h1.3v1.3h-1.3zM1342.96 397.94h1.3v1.3h-1.3zM1342.96 407.86h1.3v1.3h-1.3zM1342.96 417.77h1.3v1.3h-1.3zM1352.87 31.2h1.3v1.3h-1.3zM1352.87 41.11h1.3v1.3h-1.3zM1352.87 51.02h1.3v1.3h-1.3zM1352.87 60.94h1.3v1.3h-1.3zM1352.87 70.85h1.3v1.3h-1.3zM1352.87 80.76h1.3v1.3h-1.3zM1352.87 90.67h1.3v1.3h-1.3zM1352.87 100.58h1.3v1.3h-1.3zM1352.87 110.5h1.3v1.3h-1.3zM1352.87 120.41h1.3v1.3h-1.3zM1352.87 130.32h1.3v1.3h-1.3zM1352.87 140.23h1.3v1.3h-1.3zM1352.87 150.14h1.3v1.3h-1.3zM1352.87 160.06h1.3v1.3h-1.3zM1352.87 169.97h1.3v1.3h-1.3zM1352.87 179.88h1.3v1.3h-1.3zM1352.87 189.79h1.3v1.3h-1.3zM1352.87 199.7h1.3v1.3h-1.3zM1352.87 209.62h1.3v1.3h-1.3zM1352.87 219.53h1.3v1.3h-1.3zM1352.87 229.44h1.3v1.3h-1.3zM1352.87 239.35h1.3v1.3h-1.3zM1352.87 249.26h1.3v1.3h-1.3zM1352.87 259.18h1.3v1.3h-1.3zM1352.87 269.09h1.3v1.3h-1.3zM1352.87 279h1.3v1.3h-1.3zM1352.87 288.91h1.3v1.3h-1.3zM1352.87 298.82h1.3v1.3h-1.3zM1352.87 308.74h1.3v1.3h-1.3zM1352.87 318.65h1.3v1.3h-1.3zM1352.87 328.56h1.3v1.3h-1.3zM1352.87 338.47h1.3v1.3h-1.3zM1352.87 348.38h1.3v1.3h-1.3zM1352.87 358.3h1.3v1.3h-1.3zM1352.87 368.21h1.3v1.3h-1.3zM1352.87 378.12h1.3v1.3h-1.3zM1352.87 388.03h1.3v1.3h-1.3zM1352.87 397.94h1.3v1.3h-1.3zM1352.87 407.86h1.3v1.3h-1.3zM1352.87 417.77h1.3v1.3h-1.3zM1362.78 31.2h1.3v1.3h-1.3zM1362.78 41.11h1.3v1.3h-1.3zM1362.78 51.02h1.3v1.3h-1.3zM1362.78 60.94h1.3v1.3h-1.3zM1362.78 70.85h1.3v1.3h-1.3zM1362.78 80.76h1.3v1.3h-1.3zM1362.78 90.67h1.3v1.3h-1.3zM1362.78 100.58h1.3v1.3h-1.3zM1362.78 110.5h1.3v1.3h-1.3zM1362.78 120.41h1.3v1.3h-1.3zM1362.78 130.32h1.3v1.3h-1.3zM1362.78 140.23h1.3v1.3h-1.3zM1362.78 150.14h1.3v1.3h-1.3zM1362.78 160.06h1.3v1.3h-1.3zM1362.78 169.97h1.3v1.3h-1.3zM1362.78 179.88h1.3v1.3h-1.3zM1362.78 189.79h1.3v1.3h-1.3zM1362.78 199.7h1.3v1.3h-1.3zM1362.78 209.62h1.3v1.3h-1.3zM1362.78 219.53h1.3v1.3h-1.3zM1362.78 229.44h1.3v1.3h-1.3zM1362.78 239.35h1.3v1.3h-1.3zM1362.78 249.26h1.3v1.3h-1.3zM1362.78 259.18h1.3v1.3h-1.3zM1362.78 269.09h1.3v1.3h-1.3zM1362.78 279h1.3v1.3h-1.3zM1362.78 288.91h1.3v1.3h-1.3zM1362.78 298.82h1.3v1.3h-1.3zM1362.78 308.74h1.3v1.3h-1.3zM1362.78 318.65h1.3v1.3h-1.3zM1362.78 328.56h1.3v1.3h-1.3zM1362.78 338.47h1.3v1.3h-1.3zM1362.78 348.38h1.3v1.3h-1.3zM1362.78 358.3h1.3v1.3h-1.3zM1362.78 368.21h1.3v1.3h-1.3zM1362.78 378.12h1.3v1.3h-1.3zM1362.78 388.03h1.3v1.3h-1.3zM1362.78 397.94h1.3v1.3h-1.3zM1362.78 407.86h1.3v1.3h-1.3zM1362.78 417.77h1.3v1.3h-1.3zM1372.7 31.2h1.3v1.3h-1.3zM1372.7 41.11h1.3v1.3h-1.3zM1372.7 51.02h1.3v1.3h-1.3zM1372.7 60.94h1.3v1.3h-1.3zM1372.7 70.85h1.3v1.3h-1.3zM1372.7 80.76h1.3v1.3h-1.3zM1372.7 90.67h1.3v1.3h-1.3zM1372.7 100.58h1.3v1.3h-1.3zM1372.7 110.5h1.3v1.3h-1.3zM1372.7 120.41h1.3v1.3h-1.3zM1372.7 130.32h1.3v1.3h-1.3zM1372.7 140.23h1.3v1.3h-1.3zM1372.7 150.14h1.3v1.3h-1.3zM1372.7 160.06h1.3v1.3h-1.3zM1372.7 169.97h1.3v1.3h-1.3zM1372.7 179.88h1.3v1.3h-1.3zM1372.7 189.79h1.3v1.3h-1.3zM1372.7 199.7h1.3v1.3h-1.3zM1372.7 209.62h1.3v1.3h-1.3zM1372.7 219.53h1.3v1.3h-1.3zM1372.7 229.44h1.3v1.3h-1.3zM1372.7 239.35h1.3v1.3h-1.3zM1372.7 249.26h1.3v1.3h-1.3zM1372.7 259.18h1.3v1.3h-1.3zM1372.7 269.09h1.3v1.3h-1.3zM1372.7 279h1.3v1.3h-1.3zM1372.7 288.91h1.3v1.3h-1.3zM1372.7 298.82h1.3v1.3h-1.3zM1372.7 308.74h1.3v1.3h-1.3zM1372.7 318.65h1.3v1.3h-1.3zM1372.7 328.56h1.3v1.3h-1.3zM1372.7 338.47h1.3v1.3h-1.3zM1372.7 348.38h1.3v1.3h-1.3zM1372.7 358.3h1.3v1.3h-1.3zM1372.7 368.21h1.3v1.3h-1.3zM1372.7 378.12h1.3v1.3h-1.3zM1372.7 388.03h1.3v1.3h-1.3zM1372.7 397.94h1.3v1.3h-1.3zM1372.7 407.86h1.3v1.3h-1.3zM1372.7 417.77h1.3v1.3h-1.3zM1382.61 31.2h1.3v1.3h-1.3zM1382.61 41.11h1.3v1.3h-1.3zM1382.61 51.02h1.3v1.3h-1.3zM1382.61 60.94h1.3v1.3h-1.3zM1382.61 70.85h1.3v1.3h-1.3zM1382.61 80.76h1.3v1.3h-1.3zM1382.61 90.67h1.3v1.3h-1.3zM1382.61 100.58h1.3v1.3h-1.3zM1382.61 110.5h1.3v1.3h-1.3zM1382.61 120.41h1.3v1.3h-1.3zM1382.61 130.32h1.3v1.3h-1.3zM1382.61 140.23h1.3v1.3h-1.3zM1382.61 150.14h1.3v1.3h-1.3zM1382.61 160.06h1.3v1.3h-1.3zM1382.61 169.97h1.3v1.3h-1.3zM1382.61 179.88h1.3v1.3h-1.3zM1382.61 189.79h1.3v1.3h-1.3zM1382.61 199.7h1.3v1.3h-1.3zM1382.61 209.62h1.3v1.3h-1.3zM1382.61 219.53h1.3v1.3h-1.3zM1382.61 229.44h1.3v1.3h-1.3zM1382.61 239.35h1.3v1.3h-1.3zM1382.61 249.26h1.3v1.3h-1.3zM1382.61 259.18h1.3v1.3h-1.3zM1382.61 269.09h1.3v1.3h-1.3zM1382.61 279h1.3v1.3h-1.3zM1382.61 288.91h1.3v1.3h-1.3zM1382.61 298.82h1.3v1.3h-1.3zM1382.61 308.74h1.3v1.3h-1.3zM1382.61 318.65h1.3v1.3h-1.3zM1382.61 328.56h1.3v1.3h-1.3zM1382.61 338.47h1.3v1.3h-1.3zM1382.61 348.38h1.3v1.3h-1.3zM1382.61 358.3h1.3v1.3h-1.3zM1382.61 368.21h1.3v1.3h-1.3zM1382.61 378.12h1.3v1.3h-1.3zM1382.61 388.03h1.3v1.3h-1.3zM1382.61 397.94h1.3v1.3h-1.3zM1382.61 407.86h1.3v1.3h-1.3zM1382.61 417.77h1.3v1.3h-1.3zM1392.52 31.2h1.3v1.3h-1.3zM1392.52 41.11h1.3v1.3h-1.3zM1392.52 51.02h1.3v1.3h-1.3zM1392.52 60.94h1.3v1.3h-1.3zM1392.52 70.85h1.3v1.3h-1.3zM1392.52 80.76h1.3v1.3h-1.3zM1392.52 90.67h1.3v1.3h-1.3zM1392.52 100.58h1.3v1.3h-1.3zM1392.52 110.5h1.3v1.3h-1.3zM1392.52 120.41h1.3v1.3h-1.3zM1392.52 130.32h1.3v1.3h-1.3zM1392.52 140.23h1.3v1.3h-1.3zM1392.52 150.14h1.3v1.3h-1.3zM1392.52 160.06h1.3v1.3h-1.3zM1392.52 169.97h1.3v1.3h-1.3zM1392.52 179.88h1.3v1.3h-1.3zM1392.52 189.79h1.3v1.3h-1.3zM1392.52 199.7h1.3v1.3h-1.3zM1392.52 209.62h1.3v1.3h-1.3zM1392.52 219.53h1.3v1.3h-1.3zM1392.52 229.44h1.3v1.3h-1.3zM1392.52 239.35h1.3v1.3h-1.3zM1392.52 249.26h1.3v1.3h-1.3zM1392.52 259.18h1.3v1.3h-1.3zM1392.52 269.09h1.3v1.3h-1.3zM1392.52 279h1.3v1.3h-1.3zM1392.52 288.91h1.3v1.3h-1.3zM1392.52 298.82h1.3v1.3h-1.3zM1392.52 308.74h1.3v1.3h-1.3zM1392.52 318.65h1.3v1.3h-1.3zM1392.52 328.56h1.3v1.3h-1.3zM1392.52 338.47h1.3v1.3h-1.3zM1392.52 348.38h1.3v1.3h-1.3zM1392.52 358.3h1.3v1.3h-1.3zM1392.52 368.21h1.3v1.3h-1.3zM1392.52 378.12h1.3v1.3h-1.3zM1392.52 388.03h1.3v1.3h-1.3zM1392.52 397.94h1.3v1.3h-1.3zM1392.52 407.86h1.3v1.3h-1.3zM1392.52 417.77h1.3v1.3h-1.3zM1402.43 31.2h1.3v1.3h-1.3zM1402.43 41.11h1.3v1.3h-1.3zM1402.43 51.02h1.3v1.3h-1.3zM1402.43 60.94h1.3v1.3h-1.3zM1402.43 70.85h1.3v1.3h-1.3zM1402.43 80.76h1.3v1.3h-1.3zM1402.43 90.67h1.3v1.3h-1.3zM1402.43 100.58h1.3v1.3h-1.3zM1402.43 110.5h1.3v1.3h-1.3zM1402.43 120.41h1.3v1.3h-1.3zM1402.43 130.32h1.3v1.3h-1.3zM1402.43 140.23h1.3v1.3h-1.3zM1402.43 150.14h1.3v1.3h-1.3zM1402.43 160.06h1.3v1.3h-1.3zM1402.43 169.97h1.3v1.3h-1.3zM1402.43 179.88h1.3v1.3h-1.3zM1402.43 189.79h1.3v1.3h-1.3zM1402.43 199.7h1.3v1.3h-1.3zM1402.43 209.62h1.3v1.3h-1.3zM1402.43 219.53h1.3v1.3h-1.3zM1402.43 229.44h1.3v1.3h-1.3zM1402.43 239.35h1.3v1.3h-1.3zM1402.43 249.26h1.3v1.3h-1.3zM1402.43 259.18h1.3v1.3h-1.3zM1402.43 269.09h1.3v1.3h-1.3zM1402.43 279h1.3v1.3h-1.3zM1402.43 288.91h1.3v1.3h-1.3zM1402.43 298.82h1.3v1.3h-1.3zM1402.43 308.74h1.3v1.3h-1.3zM1402.43 318.65h1.3v1.3h-1.3zM1402.43 328.56h1.3v1.3h-1.3zM1402.43 338.47h1.3v1.3h-1.3zM1402.43 348.38h1.3v1.3h-1.3zM1402.43 358.3h1.3v1.3h-1.3zM1402.43 368.21h1.3v1.3h-1.3zM1402.43 378.12h1.3v1.3h-1.3zM1402.43 388.03h1.3v1.3h-1.3zM1402.43 397.94h1.3v1.3h-1.3zM1402.43 407.86h1.3v1.3h-1.3zM1402.43 417.77h1.3v1.3h-1.3zM1412.34 31.2h1.3v1.3h-1.3zM1412.34 41.11h1.3v1.3h-1.3zM1412.34 51.02h1.3v1.3h-1.3zM1412.34 60.94h1.3v1.3h-1.3zM1412.34 70.85h1.3v1.3h-1.3zM1412.34 80.76h1.3v1.3h-1.3zM1412.34 90.67h1.3v1.3h-1.3zM1412.34 100.58h1.3v1.3h-1.3zM1412.34 110.5h1.3v1.3h-1.3zM1412.34 120.41h1.3v1.3h-1.3zM1412.34 130.32h1.3v1.3h-1.3zM1412.34 140.23h1.3v1.3h-1.3zM1412.34 150.14h1.3v1.3h-1.3zM1412.34 160.06h1.3v1.3h-1.3zM1412.34 169.97h1.3v1.3h-1.3zM1412.34 179.88h1.3v1.3h-1.3zM1412.34 189.79h1.3v1.3h-1.3zM1412.34 199.7h1.3v1.3h-1.3zM1412.34 209.62h1.3v1.3h-1.3zM1412.34 219.53h1.3v1.3h-1.3zM1412.34 229.44h1.3v1.3h-1.3zM1412.34 239.35h1.3v1.3h-1.3zM1412.34 249.26h1.3v1.3h-1.3zM1412.34 259.18h1.3v1.3h-1.3zM1412.34 269.09h1.3v1.3h-1.3zM1412.34 279h1.3v1.3h-1.3zM1412.34 288.91h1.3v1.3h-1.3zM1412.34 298.82h1.3v1.3h-1.3zM1412.34 308.74h1.3v1.3h-1.3zM1412.34 318.65h1.3v1.3h-1.3zM1412.34 328.56h1.3v1.3h-1.3zM1412.34 338.47h1.3v1.3h-1.3zM1412.34 348.38h1.3v1.3h-1.3zM1412.34 358.3h1.3v1.3h-1.3zM1412.34 368.21h1.3v1.3h-1.3zM1412.34 378.12h1.3v1.3h-1.3zM1412.34 388.03h1.3v1.3h-1.3zM1412.34 397.94h1.3v1.3h-1.3zM1412.34 407.86h1.3v1.3h-1.3zM1412.34 417.77h1.3v1.3h-1.3zM1422.26 31.2h1.3v1.3h-1.3zM1422.26 41.11h1.3v1.3h-1.3zM1422.26 51.02h1.3v1.3h-1.3zM1422.26 60.94h1.3v1.3h-1.3zM1422.26 70.85h1.3v1.3h-1.3zM1422.26 80.76h1.3v1.3h-1.3zM1422.26 90.67h1.3v1.3h-1.3zM1422.26 100.58h1.3v1.3h-1.3zM1422.26 110.5h1.3v1.3h-1.3zM1422.26 120.41h1.3v1.3h-1.3zM1422.26 130.32h1.3v1.3h-1.3zM1422.26 140.23h1.3v1.3h-1.3zM1422.26 150.14h1.3v1.3h-1.3zM1422.26 160.06h1.3v1.3h-1.3zM1422.26 169.97h1.3v1.3h-1.3zM1422.26 179.88h1.3v1.3h-1.3zM1422.26 189.79h1.3v1.3h-1.3zM1422.26 199.7h1.3v1.3h-1.3zM1422.26 209.62h1.3v1.3h-1.3zM1422.26 219.53h1.3v1.3h-1.3zM1422.26 229.44h1.3v1.3h-1.3zM1422.26 239.35h1.3v1.3h-1.3zM1422.26 249.26h1.3v1.3h-1.3zM1422.26 259.18h1.3v1.3h-1.3zM1422.26 269.09h1.3v1.3h-1.3zM1422.26 279h1.3v1.3h-1.3zM1422.26 288.91h1.3v1.3h-1.3zM1422.26 298.82h1.3v1.3h-1.3zM1422.26 308.74h1.3v1.3h-1.3zM1422.26 318.65h1.3v1.3h-1.3zM1422.26 328.56h1.3v1.3h-1.3zM1422.26 338.47h1.3v1.3h-1.3zM1422.26 348.38h1.3v1.3h-1.3zM1422.26 358.3h1.3v1.3h-1.3zM1422.26 368.21h1.3v1.3h-1.3zM1422.26 378.12h1.3v1.3h-1.3zM1422.26 388.03h1.3v1.3h-1.3zM1422.26 397.94h1.3v1.3h-1.3zM1422.26 407.86h1.3v1.3h-1.3zM1422.26 417.77h1.3v1.3h-1.3zM1432.17 31.2h1.3v1.3h-1.3zM1432.17 41.11h1.3v1.3h-1.3zM1432.17 51.02h1.3v1.3h-1.3zM1432.17 60.94h1.3v1.3h-1.3zM1432.17 70.85h1.3v1.3h-1.3zM1432.17 80.76h1.3v1.3h-1.3zM1432.17 90.67h1.3v1.3h-1.3zM1432.17 100.58h1.3v1.3h-1.3zM1432.17 110.5h1.3v1.3h-1.3zM1432.17 120.41h1.3v1.3h-1.3zM1432.17 130.32h1.3v1.3h-1.3zM1432.17 140.23h1.3v1.3h-1.3zM1432.17 150.14h1.3v1.3h-1.3zM1432.17 160.06h1.3v1.3h-1.3zM1432.17 169.97h1.3v1.3h-1.3zM1432.17 179.88h1.3v1.3h-1.3zM1432.17 189.79h1.3v1.3h-1.3zM1432.17 199.7h1.3v1.3h-1.3zM1432.17 209.62h1.3v1.3h-1.3zM1432.17 219.53h1.3v1.3h-1.3zM1432.17 229.44h1.3v1.3h-1.3zM1432.17 239.35h1.3v1.3h-1.3zM1432.17 249.26h1.3v1.3h-1.3zM1432.17 259.18h1.3v1.3h-1.3zM1432.17 269.09h1.3v1.3h-1.3zM1432.17 279h1.3v1.3h-1.3zM1432.17 288.91h1.3v1.3h-1.3zM1432.17 298.82h1.3v1.3h-1.3zM1432.17 308.74h1.3v1.3h-1.3zM1432.17 318.65h1.3v1.3h-1.3zM1432.17 328.56h1.3v1.3h-1.3zM1432.17 338.47h1.3v1.3h-1.3zM1432.17 348.38h1.3v1.3h-1.3zM1432.17 358.3h1.3v1.3h-1.3zM1432.17 368.21h1.3v1.3h-1.3zM1432.17 378.12h1.3v1.3h-1.3zM1432.17 388.03h1.3v1.3h-1.3zM1432.17 397.94h1.3v1.3h-1.3zM1432.17 407.86h1.3v1.3h-1.3zM1432.17 417.77h1.3v1.3h-1.3zM1442.08 31.2h1.3v1.3h-1.3zM1442.08 41.11h1.3v1.3h-1.3zM1442.08 51.02h1.3v1.3h-1.3zM1442.08 60.94h1.3v1.3h-1.3zM1442.08 70.85h1.3v1.3h-1.3zM1442.08 80.76h1.3v1.3h-1.3zM1442.08 90.67h1.3v1.3h-1.3zM1442.08 100.58h1.3v1.3h-1.3zM1442.08 110.5h1.3v1.3h-1.3zM1442.08 120.41h1.3v1.3h-1.3zM1442.08 130.32h1.3v1.3h-1.3zM1442.08 140.23h1.3v1.3h-1.3zM1442.08 150.14h1.3v1.3h-1.3zM1442.08 160.06h1.3v1.3h-1.3zM1442.08 169.97h1.3v1.3h-1.3zM1442.08 179.88h1.3v1.3h-1.3zM1442.08 189.79h1.3v1.3h-1.3zM1442.08 199.7h1.3v1.3h-1.3zM1442.08 209.62h1.3v1.3h-1.3zM1442.08 219.53h1.3v1.3h-1.3zM1442.08 229.44h1.3v1.3h-1.3zM1442.08 239.35h1.3v1.3h-1.3zM1442.08 249.26h1.3v1.3h-1.3zM1442.08 259.18h1.3v1.3h-1.3zM1442.08 269.09h1.3v1.3h-1.3zM1442.08 279h1.3v1.3h-1.3zM1442.08 288.91h1.3v1.3h-1.3zM1442.08 298.82h1.3v1.3h-1.3zM1442.08 308.74h1.3v1.3h-1.3zM1442.08 318.65h1.3v1.3h-1.3zM1442.08 328.56h1.3v1.3h-1.3zM1442.08 338.47h1.3v1.3h-1.3zM1442.08 348.38h1.3v1.3h-1.3zM1442.08 358.3h1.3v1.3h-1.3zM1442.08 368.21h1.3v1.3h-1.3zM1442.08 378.12h1.3v1.3h-1.3zM1442.08 388.03h1.3v1.3h-1.3zM1442.08 397.94h1.3v1.3h-1.3zM1442.08 407.86h1.3v1.3h-1.3zM1442.08 417.77h1.3v1.3h-1.3zM1451.99 31.2h1.3v1.3h-1.3zM1451.99 41.11h1.3v1.3h-1.3zM1451.99 51.02h1.3v1.3h-1.3zM1451.99 60.94h1.3v1.3h-1.3zM1451.99 70.85h1.3v1.3h-1.3zM1451.99 80.76h1.3v1.3h-1.3zM1451.99 90.67h1.3v1.3h-1.3zM1451.99 100.58h1.3v1.3h-1.3zM1451.99 110.5h1.3v1.3h-1.3zM1451.99 120.41h1.3v1.3h-1.3zM1451.99 130.32h1.3v1.3h-1.3zM1451.99 140.23h1.3v1.3h-1.3zM1451.99 150.14h1.3v1.3h-1.3zM1451.99 160.06h1.3v1.3h-1.3zM1451.99 169.97h1.3v1.3h-1.3zM1451.99 179.88h1.3v1.3h-1.3zM1451.99 189.79h1.3v1.3h-1.3zM1451.99 199.7h1.3v1.3h-1.3zM1451.99 209.62h1.3v1.3h-1.3zM1451.99 219.53h1.3v1.3h-1.3zM1451.99 229.44h1.3v1.3h-1.3zM1451.99 239.35h1.3v1.3h-1.3zM1451.99 249.26h1.3v1.3h-1.3zM1451.99 259.18h1.3v1.3h-1.3zM1451.99 269.09h1.3v1.3h-1.3zM1451.99 279h1.3v1.3h-1.3zM1451.99 288.91h1.3v1.3h-1.3zM1451.99 298.82h1.3v1.3h-1.3zM1451.99 308.74h1.3v1.3h-1.3zM1451.99 318.65h1.3v1.3h-1.3zM1451.99 328.56h1.3v1.3h-1.3zM1451.99 338.47h1.3v1.3h-1.3zM1451.99 348.38h1.3v1.3h-1.3zM1451.99 358.3h1.3v1.3h-1.3zM1451.99 368.21h1.3v1.3h-1.3zM1451.99 378.12h1.3v1.3h-1.3zM1451.99 388.03h1.3v1.3h-1.3zM1451.99 397.94h1.3v1.3h-1.3zM1451.99 407.86h1.3v1.3h-1.3zM1451.99 417.77h1.3v1.3h-1.3zM1461.9 31.2h1.3v1.3h-1.3zM1461.9 41.11h1.3v1.3h-1.3zM1461.9 51.02h1.3v1.3h-1.3zM1461.9 60.94h1.3v1.3h-1.3zM1461.9 70.85h1.3v1.3h-1.3zM1461.9 80.76h1.3v1.3h-1.3zM1461.9 90.67h1.3v1.3h-1.3zM1461.9 100.58h1.3v1.3h-1.3zM1461.9 110.5h1.3v1.3h-1.3zM1461.9 120.41h1.3v1.3h-1.3zM1461.9 130.32h1.3v1.3h-1.3zM1461.9 140.23h1.3v1.3h-1.3zM1461.9 150.14h1.3v1.3h-1.3zM1461.9 160.06h1.3v1.3h-1.3zM1461.9 169.97h1.3v1.3h-1.3zM1461.9 179.88h1.3v1.3h-1.3zM1461.9 189.79h1.3v1.3h-1.3zM1461.9 199.7h1.3v1.3h-1.3zM1461.9 209.62h1.3v1.3h-1.3zM1461.9 219.53h1.3v1.3h-1.3zM1461.9 229.44h1.3v1.3h-1.3zM1461.9 239.35h1.3v1.3h-1.3zM1461.9 249.26h1.3v1.3h-1.3zM1461.9 259.18h1.3v1.3h-1.3zM1461.9 269.09h1.3v1.3h-1.3zM1461.9 279h1.3v1.3h-1.3zM1461.9 288.91h1.3v1.3h-1.3zM1461.9 298.82h1.3v1.3h-1.3zM1461.9 308.74h1.3v1.3h-1.3zM1461.9 318.65h1.3v1.3h-1.3zM1461.9 328.56h1.3v1.3h-1.3zM1461.9 338.47h1.3v1.3h-1.3zM1461.9 348.38h1.3v1.3h-1.3zM1461.9 358.3h1.3v1.3h-1.3zM1461.9 368.21h1.3v1.3h-1.3zM1461.9 378.12h1.3v1.3h-1.3zM1461.9 388.03h1.3v1.3h-1.3zM1461.9 397.94h1.3v1.3h-1.3zM1461.9 407.86h1.3v1.3h-1.3zM1461.9 417.77h1.3v1.3h-1.3zM1471.82 31.2h1.3v1.3h-1.3zM1471.82 41.11h1.3v1.3h-1.3zM1471.82 51.02h1.3v1.3h-1.3zM1471.82 60.94h1.3v1.3h-1.3zM1471.82 70.85h1.3v1.3h-1.3zM1471.82 80.76h1.3v1.3h-1.3zM1471.82 90.67h1.3v1.3h-1.3zM1471.82 100.58h1.3v1.3h-1.3zM1471.82 110.5h1.3v1.3h-1.3zM1471.82 120.41h1.3v1.3h-1.3zM1471.82 130.32h1.3v1.3h-1.3zM1471.82 140.23h1.3v1.3h-1.3zM1471.82 150.14h1.3v1.3h-1.3zM1471.82 160.06h1.3v1.3h-1.3zM1471.82 169.97h1.3v1.3h-1.3zM1471.82 179.88h1.3v1.3h-1.3zM1471.82 189.79h1.3v1.3h-1.3zM1471.82 199.7h1.3v1.3h-1.3zM1471.82 209.62h1.3v1.3h-1.3zM1471.82 219.53h1.3v1.3h-1.3zM1471.82 229.44h1.3v1.3h-1.3zM1471.82 239.35h1.3v1.3h-1.3zM1471.82 249.26h1.3v1.3h-1.3zM1471.82 259.18h1.3v1.3h-1.3zM1471.82 269.09h1.3v1.3h-1.3zM1471.82 279h1.3v1.3h-1.3zM1471.82 288.91h1.3v1.3h-1.3zM1471.82 298.82h1.3v1.3h-1.3zM1471.82 308.74h1.3v1.3h-1.3zM1471.82 318.65h1.3v1.3h-1.3zM1471.82 328.56h1.3v1.3h-1.3zM1471.82 338.47h1.3v1.3h-1.3zM1471.82 348.38h1.3v1.3h-1.3zM1471.82 358.3h1.3v1.3h-1.3zM1471.82 368.21h1.3v1.3h-1.3zM1471.82 378.12h1.3v1.3h-1.3zM1471.82 388.03h1.3v1.3h-1.3zM1471.82 397.94h1.3v1.3h-1.3zM1471.82 407.86h1.3v1.3h-1.3zM1471.82 417.77h1.3v1.3h-1.3zM1481.73 31.2h1.3v1.3h-1.3zM1481.73 41.11h1.3v1.3h-1.3zM1481.73 51.02h1.3v1.3h-1.3zM1481.73 60.94h1.3v1.3h-1.3zM1481.73 70.85h1.3v1.3h-1.3zM1481.73 80.76h1.3v1.3h-1.3zM1481.73 90.67h1.3v1.3h-1.3zM1481.73 100.58h1.3v1.3h-1.3zM1481.73 110.5h1.3v1.3h-1.3zM1481.73 120.41h1.3v1.3h-1.3zM1481.73 130.32h1.3v1.3h-1.3zM1481.73 140.23h1.3v1.3h-1.3zM1481.73 150.14h1.3v1.3h-1.3zM1481.73 160.06h1.3v1.3h-1.3zM1481.73 169.97h1.3v1.3h-1.3zM1481.73 179.88h1.3v1.3h-1.3zM1481.73 189.79h1.3v1.3h-1.3zM1481.73 199.7h1.3v1.3h-1.3zM1481.73 209.62h1.3v1.3h-1.3zM1481.73 219.53h1.3v1.3h-1.3zM1481.73 229.44h1.3v1.3h-1.3zM1481.73 239.35h1.3v1.3h-1.3zM1481.73 249.26h1.3v1.3h-1.3zM1481.73 259.18h1.3v1.3h-1.3zM1481.73 269.09h1.3v1.3h-1.3zM1481.73 279h1.3v1.3h-1.3zM1481.73 288.91h1.3v1.3h-1.3zM1481.73 298.82h1.3v1.3h-1.3zM1481.73 308.74h1.3v1.3h-1.3zM1481.73 318.65h1.3v1.3h-1.3zM1481.73 328.56h1.3v1.3h-1.3zM1481.73 338.47h1.3v1.3h-1.3zM1481.73 348.38h1.3v1.3h-1.3zM1481.73 358.3h1.3v1.3h-1.3zM1481.73 368.21h1.3v1.3h-1.3zM1481.73 378.12h1.3v1.3h-1.3zM1481.73 388.03h1.3v1.3h-1.3zM1481.73 397.94h1.3v1.3h-1.3zM1481.73 407.86h1.3v1.3h-1.3zM1481.73 417.77h1.3v1.3h-1.3zM1491.64 31.2h1.3v1.3h-1.3zM1491.64 41.11h1.3v1.3h-1.3zM1491.64 51.02h1.3v1.3h-1.3zM1491.64 60.94h1.3v1.3h-1.3zM1491.64 70.85h1.3v1.3h-1.3zM1491.64 80.76h1.3v1.3h-1.3zM1491.64 90.67h1.3v1.3h-1.3zM1491.64 100.58h1.3v1.3h-1.3zM1491.64 110.5h1.3v1.3h-1.3zM1491.64 120.41h1.3v1.3h-1.3zM1491.64 130.32h1.3v1.3h-1.3zM1491.64 140.23h1.3v1.3h-1.3zM1491.64 150.14h1.3v1.3h-1.3zM1491.64 160.06h1.3v1.3h-1.3zM1491.64 169.97h1.3v1.3h-1.3zM1491.64 179.88h1.3v1.3h-1.3zM1491.64 189.79h1.3v1.3h-1.3zM1491.64 199.7h1.3v1.3h-1.3zM1491.64 209.62h1.3v1.3h-1.3zM1491.64 219.53h1.3v1.3h-1.3zM1491.64 229.44h1.3v1.3h-1.3zM1491.64 239.35h1.3v1.3h-1.3zM1491.64 249.26h1.3v1.3h-1.3zM1491.64 259.18h1.3v1.3h-1.3zM1491.64 269.09h1.3v1.3h-1.3zM1491.64 279h1.3v1.3h-1.3zM1491.64 288.91h1.3v1.3h-1.3zM1491.64 298.82h1.3v1.3h-1.3zM1491.64 308.74h1.3v1.3h-1.3zM1491.64 318.65h1.3v1.3h-1.3zM1491.64 328.56h1.3v1.3h-1.3zM1491.64 338.47h1.3v1.3h-1.3zM1491.64 348.38h1.3v1.3h-1.3zM1491.64 358.3h1.3v1.3h-1.3zM1491.64 368.21h1.3v1.3h-1.3zM1491.64 378.12h1.3v1.3h-1.3zM1491.64 388.03h1.3v1.3h-1.3zM1491.64 397.94h1.3v1.3h-1.3zM1491.64 407.86h1.3v1.3h-1.3zM1491.64 417.77h1.3v1.3h-1.3zM1501.55 31.2h1.3v1.3h-1.3zM1501.55 41.11h1.3v1.3h-1.3zM1501.55 51.02h1.3v1.3h-1.3zM1501.55 60.94h1.3v1.3h-1.3zM1501.55 70.85h1.3v1.3h-1.3zM1501.55 80.76h1.3v1.3h-1.3zM1501.55 90.67h1.3v1.3h-1.3zM1501.55 100.58h1.3v1.3h-1.3zM1501.55 110.5h1.3v1.3h-1.3zM1501.55 120.41h1.3v1.3h-1.3zM1501.55 130.32h1.3v1.3h-1.3zM1501.55 140.23h1.3v1.3h-1.3zM1501.55 150.14h1.3v1.3h-1.3zM1501.55 160.06h1.3v1.3h-1.3zM1501.55 169.97h1.3v1.3h-1.3zM1501.55 179.88h1.3v1.3h-1.3zM1501.55 189.79h1.3v1.3h-1.3zM1501.55 199.7h1.3v1.3h-1.3zM1501.55 209.62h1.3v1.3h-1.3zM1501.55 219.53h1.3v1.3h-1.3zM1501.55 229.44h1.3v1.3h-1.3zM1501.55 239.35h1.3v1.3h-1.3zM1501.55 249.26h1.3v1.3h-1.3zM1501.55 259.18h1.3v1.3h-1.3zM1501.55 269.09h1.3v1.3h-1.3zM1501.55 279h1.3v1.3h-1.3zM1501.55 288.91h1.3v1.3h-1.3zM1501.55 298.82h1.3v1.3h-1.3zM1501.55 308.74h1.3v1.3h-1.3zM1501.55 318.65h1.3v1.3h-1.3zM1501.55 328.56h1.3v1.3h-1.3zM1501.55 338.47h1.3v1.3h-1.3zM1501.55 348.38h1.3v1.3h-1.3zM1501.55 358.3h1.3v1.3h-1.3zM1501.55 368.21h1.3v1.3h-1.3zM1501.55 378.12h1.3v1.3h-1.3zM1501.55 388.03h1.3v1.3h-1.3zM1501.55 397.94h1.3v1.3h-1.3zM1501.55 407.86h1.3v1.3h-1.3zM1501.55 417.77h1.3v1.3h-1.3zM1511.46 31.2h1.3v1.3h-1.3zM1511.46 41.11h1.3v1.3h-1.3zM1511.46 51.02h1.3v1.3h-1.3zM1511.46 60.94h1.3v1.3h-1.3zM1511.46 70.85h1.3v1.3h-1.3zM1511.46 80.76h1.3v1.3h-1.3zM1511.46 90.67h1.3v1.3h-1.3zM1511.46 100.58h1.3v1.3h-1.3zM1511.46 110.5h1.3v1.3h-1.3zM1511.46 120.41h1.3v1.3h-1.3zM1511.46 130.32h1.3v1.3h-1.3zM1511.46 140.23h1.3v1.3h-1.3zM1511.46 150.14h1.3v1.3h-1.3zM1511.46 160.06h1.3v1.3h-1.3zM1511.46 169.97h1.3v1.3h-1.3zM1511.46 179.88h1.3v1.3h-1.3zM1511.46 189.79h1.3v1.3h-1.3zM1511.46 199.7h1.3v1.3h-1.3zM1511.46 209.62h1.3v1.3h-1.3zM1511.46 219.53h1.3v1.3h-1.3zM1511.46 229.44h1.3v1.3h-1.3zM1511.46 239.35h1.3v1.3h-1.3zM1511.46 249.26h1.3v1.3h-1.3zM1511.46 259.18h1.3v1.3h-1.3zM1511.46 269.09h1.3v1.3h-1.3zM1511.46 279h1.3v1.3h-1.3zM1511.46 288.91h1.3v1.3h-1.3zM1511.46 298.82h1.3v1.3h-1.3zM1511.46 308.74h1.3v1.3h-1.3zM1511.46 318.65h1.3v1.3h-1.3zM1511.46 328.56h1.3v1.3h-1.3zM1511.46 338.47h1.3v1.3h-1.3zM1511.46 348.38h1.3v1.3h-1.3zM1511.46 358.3h1.3v1.3h-1.3zM1511.46 368.21h1.3v1.3h-1.3zM1511.46 378.12h1.3v1.3h-1.3zM1511.46 388.03h1.3v1.3h-1.3zM1511.46 397.94h1.3v1.3h-1.3zM1511.46 407.86h1.3v1.3h-1.3zM1511.46 417.77h1.3v1.3h-1.3zM1521.38 31.2h1.3v1.3h-1.3zM1521.38 41.11h1.3v1.3h-1.3zM1521.38 51.02h1.3v1.3h-1.3zM1521.38 60.94h1.3v1.3h-1.3zM1521.38 70.85h1.3v1.3h-1.3zM1521.38 80.76h1.3v1.3h-1.3zM1521.38 90.67h1.3v1.3h-1.3zM1521.38 100.58h1.3v1.3h-1.3zM1521.38 110.5h1.3v1.3h-1.3zM1521.38 120.41h1.3v1.3h-1.3zM1521.38 130.32h1.3v1.3h-1.3zM1521.38 140.23h1.3v1.3h-1.3zM1521.38 150.14h1.3v1.3h-1.3zM1521.38 160.06h1.3v1.3h-1.3zM1521.38 169.97h1.3v1.3h-1.3zM1521.38 179.88h1.3v1.3h-1.3zM1521.38 189.79h1.3v1.3h-1.3zM1521.38 199.7h1.3v1.3h-1.3zM1521.38 209.62h1.3v1.3h-1.3zM1521.38 219.53h1.3v1.3h-1.3zM1521.38 229.44h1.3v1.3h-1.3zM1521.38 239.35h1.3v1.3h-1.3zM1521.38 249.26h1.3v1.3h-1.3zM1521.38 259.18h1.3v1.3h-1.3zM1521.38 269.09h1.3v1.3h-1.3zM1521.38 279h1.3v1.3h-1.3zM1521.38 288.91h1.3v1.3h-1.3zM1521.38 298.82h1.3v1.3h-1.3zM1521.38 308.74h1.3v1.3h-1.3zM1521.38 318.65h1.3v1.3h-1.3zM1521.38 328.56h1.3v1.3h-1.3zM1521.38 338.47h1.3v1.3h-1.3zM1521.38 348.38h1.3v1.3h-1.3zM1521.38 358.3h1.3v1.3h-1.3zM1521.38 368.21h1.3v1.3h-1.3zM1521.38 378.12h1.3v1.3h-1.3zM1521.38 388.03h1.3v1.3h-1.3zM1521.38 397.94h1.3v1.3h-1.3zM1521.38 407.86h1.3v1.3h-1.3zM1521.38 417.77h1.3v1.3h-1.3z" fill="#2a2a2a"/>
<path d="M926.91,61.43 907.08,61.43 907.08,91.16" fill="none" stroke="#0000ff" stroke-width="2.2" stroke-linejoin="miter" stroke-linecap="square"/>
<path d="M907.08,91.16 V96.12 M907.08,135.77 V140.72" fill="none" stroke="#000080" stroke-width="1.9"/>
<circle cx="907.08" cy="115.94" r="19.3" fill="none" stroke="#000080" stroke-width="1.9"/>
<path d="M902.08,104.04 H912.08 M907.08,99.04 V109.04" fill="none" stroke="#000080" stroke-width="1.7"/>
<path d="M902.08,128.24 H912.08" fill="none" stroke="#000080" stroke-width="1.7"/>
<path d="M907.08,140.72 907.08,150.63" fill="none" stroke="#0000ff" stroke-width="2.2" stroke-linejoin="miter" stroke-linecap="square"/>
<path d="M897.17,150.63 H916.99 L907.08,160.55 Z" fill="none" stroke="#0000ff" stroke-width="2" stroke-linejoin="miter"/>
<path d="M1016.11,61.43 976.47,61.43 976.47,91.16" fill="none" stroke="#0000ff" stroke-width="2.2" stroke-linejoin="miter" stroke-linecap="square"/>
<path d="M976.47,91.16 V96.12 M976.47,135.77 V140.72" fill="none" stroke="#000080" stroke-width="1.9"/>
<circle cx="976.47" cy="115.94" r="19.3" fill="none" stroke="#000080" stroke-width="1.9"/>
<path d="M971.47,104.04 H981.47 M976.47,99.04 V109.04" fill="none" stroke="#000080" stroke-width="1.7"/>
<path d="M971.47,128.24 H981.47" fill="none" stroke="#000080" stroke-width="1.7"/>
<path d="M976.47,140.72 976.47,150.63" fill="none" stroke="#0000ff" stroke-width="2.2" stroke-linejoin="miter" stroke-linecap="square"/>
<path d="M966.55,150.63 H986.38 L976.47,160.55 Z" fill="none" stroke="#0000ff" stroke-width="2" stroke-linejoin="miter"/>
<text x="904.8" y="58.6" font-size="14.2" fill="#000000" font-weight="bold" textLength="24.1" lengthAdjust="spacingAndGlyphs">Vcc</text>
<text x="981.5" y="58.6" font-size="14.2" fill="#000000" font-weight="bold" textLength="27.1" lengthAdjust="spacingAndGlyphs">Vee</text>
<text x="921.4" y="96.6" font-size="14.2" fill="#000000" font-weight="bold" textLength="18" lengthAdjust="spacingAndGlyphs">V1</text>
<text x="923" y="146.8" font-size="14.2" fill="#000000" font-weight="bold" textLength="15.8" lengthAdjust="spacingAndGlyphs">15</text>
<text x="991.3" y="96.6" font-size="14.2" fill="#000000" font-weight="bold" textLength="18.3" lengthAdjust="spacingAndGlyphs">V2</text>
<text x="992" y="146.8" font-size="14.2" fill="#000000" font-weight="bold" textLength="22.6" lengthAdjust="spacingAndGlyphs">-15</text>
<text x="699.4" y="86.6" font-size="14.2" fill="#000000" font-weight="bold" textLength="105.8" lengthAdjust="spacingAndGlyphs">.param Rp 10k</text>
<text x="699.4" y="106.4" font-size="14.2" fill="#000000" font-weight="bold" textLength="120.6" lengthAdjust="spacingAndGlyphs">.param Cd=100n</text>
<text x="699.4" y="136.6" font-size="14.2" fill="#000000" font-weight="bold" textLength="172" lengthAdjust="spacingAndGlyphs">.param wz = 1/(Cd*Rp)</text>
<text x="704.4" y="226" font-size="14.2" fill="#000000" font-weight="bold" textLength="161" lengthAdjust="spacingAndGlyphs">.ac oct 1000 10 10Meg</text>
<path d="M1095.41,120.9 1174.71,120.9" fill="none" stroke="#0000ff" stroke-width="2.2" stroke-linejoin="miter" stroke-linecap="square"/>
<path d="M1144.97,180.37 1144.97,150.63 1174.71,150.63" fill="none" stroke="#0000ff" stroke-width="2.2" stroke-linejoin="miter" stroke-linecap="square"/>
<path d="M1135.06,180.37 H1154.88 L1144.97,190.28 Z" fill="none" stroke="#0000ff" stroke-width="2" stroke-linejoin="miter"/>
<path d="M1353.12,81.25 1204.44,81.25 1204.44,110.99" fill="none" stroke="#0000ff" stroke-width="2.2" stroke-linejoin="miter" stroke-linecap="square"/>
<path d="M1204.44,160.55 1204.44,180.37" fill="none" stroke="#0000ff" stroke-width="2.2" stroke-linejoin="miter" stroke-linecap="square"/>
<path d="M1194.53,180.37 H1214.35 L1204.44,190.28 Z" fill="none" stroke="#0000ff" stroke-width="2" stroke-linejoin="miter"/>
<circle cx="1204.44" cy="135.77" r="19.2" fill="none" stroke="#000080" stroke-width="1.9"/>
<path d="M1204.44,110.99 V115.94 M1204.44,155.59 V160.55" fill="none" stroke="#000080" stroke-width="1.9"/>
<path d="M1174.71,120.9 H1183.5 Q1187,120.9 1188.6,124.5" fill="none" stroke="#000080" stroke-width="1.9"/>
<path d="M1174.71,150.63 H1183.5 Q1187,150.63 1188.6,147.03" fill="none" stroke="#000080" stroke-width="1.9"/>
<path d="M1175.3,125.8 H1180.1 M1177.7,123.4 V128.2" fill="none" stroke="#000080" stroke-width="1.3"/>
<path d="M1175.3,144.8 H1180.1" fill="none" stroke="#000080" stroke-width="1.3"/>
<path d="M1202.04,125.8 H1206.84 M1204.44,123.4 V128.2" fill="none" stroke="#000080" stroke-width="1.3"/>
<path d="M1202.04,144.8 H1206.84" fill="none" stroke="#000080" stroke-width="1.3"/>
<text x="1113.7" y="118" font-size="14.2" fill="#000000" font-weight="bold" textLength="22.8" lengthAdjust="spacingAndGlyphs">Vin</text>
<text x="1219.4" y="116.2" font-size="14.2" fill="#000000" font-weight="bold" textLength="17.3" lengthAdjust="spacingAndGlyphs">E3</text>
<text x="1226.7" y="77.9" font-size="14.2" fill="#000000" font-weight="bold" textLength="132.7" lengthAdjust="spacingAndGlyphs">Vout_Diff_Laplace</text>
<text x="1219.8" y="166.3" font-size="14.2" fill="#000000" font-weight="bold" textLength="117.2" lengthAdjust="spacingAndGlyphs">Laplace = -s/wz</text>
<path d="M946.73,239.84 907.08,239.84 907.08,299.31" fill="none" stroke="#0000ff" stroke-width="2.2" stroke-linejoin="miter" stroke-linecap="square"/>
<path d="M907.08,299.31 V304.27 M907.08,343.92 V348.87" fill="none" stroke="#000080" stroke-width="1.9"/>
<circle cx="907.08" cy="324.09" r="19.3" fill="none" stroke="#000080" stroke-width="1.9"/>
<path d="M902.08,312.19 H912.08 M907.08,307.19 V317.19" fill="none" stroke="#000080" stroke-width="1.7"/>
<path d="M902.08,336.39 H912.08" fill="none" stroke="#000080" stroke-width="1.7"/>
<path d="M907.08,348.87 907.08,368.7" fill="none" stroke="#0000ff" stroke-width="2.2" stroke-linejoin="miter" stroke-linecap="square"/>
<path d="M897.17,368.7 H916.99 L907.08,378.61 Z" fill="none" stroke="#0000ff" stroke-width="2" stroke-linejoin="miter"/>
<text x="905.4" y="236.4" font-size="14.2" fill="#000000" font-weight="bold" textLength="22.9" lengthAdjust="spacingAndGlyphs">Vin</text>
<text x="921.7" y="304.7" font-size="14.2" fill="#000000" font-weight="bold" textLength="18.1" lengthAdjust="spacingAndGlyphs">V3</text>
<text x="922" y="371.8" font-size="14.2" fill="#000000" font-weight="bold" textLength="32.4" lengthAdjust="spacingAndGlyphs">AC 1</text>
<path d="M986.38,239.84 1254,239.84" fill="none" stroke="#0000ff" stroke-width="2.2" stroke-linejoin="miter" stroke-linecap="square"/>
<path d="M946.73,239.84 H964.15 M968.95,239.84 H986.38" fill="none" stroke="#000080" stroke-width="1.9"/>
<path d="M964.15,230.2 V250.2 M968.95,230.2 V250.2" fill="none" stroke="#000080" stroke-width="2"/>
<text x="956.5" y="227" font-size="14.2" fill="#000000" font-weight="bold" textLength="17.7" lengthAdjust="spacingAndGlyphs">C2</text>
<text x="948" y="264.5" font-size="14.2" fill="#000000" font-weight="bold" textLength="35.5" lengthAdjust="spacingAndGlyphs">{Cd}</text>
<rect x="1091.51" y="235.94" width="7.8" height="7.8" fill="#0000ff"/>
<path d="M1254,239.84 1258.5,239.84 1264,231 1273.7,249.7 1283.9,231 1294,249.7 1300.8,240 1303.56,239.84" fill="none" stroke="#000080" stroke-width="1.9" stroke-linejoin="miter"/>
<path d="M1303.56,239.84 1382.86,239.84 1382.86,329.05" fill="none" stroke="#0000ff" stroke-width="2.2" stroke-linejoin="miter" stroke-linecap="square"/>
<text x="1268.5" y="227.2" font-size="14.2" fill="#000000" font-weight="bold" textLength="19.5" lengthAdjust="spacingAndGlyphs">R1</text>
<text x="1260.2" y="264.3" font-size="14.2" fill="#000000" font-weight="bold" textLength="36.1" lengthAdjust="spacingAndGlyphs">{Rp}</text>
<path d="M1095.41,239.84 1095.41,319.14 1154.88,319.14" fill="none" stroke="#0000ff" stroke-width="2.2" stroke-linejoin="miter" stroke-linecap="square"/>
<path d="M1154.88,338.96 1085.5,338.96 1085.5,368.7" fill="none" stroke="#0000ff" stroke-width="2.2" stroke-linejoin="miter" stroke-linecap="square"/>
<path d="M1075.59,368.7 H1095.41 L1085.5,378.61 Z" fill="none" stroke="#0000ff" stroke-width="2" stroke-linejoin="miter"/>
<path d="M1194.53,329.05 1442.33,329.05" fill="none" stroke="#0000ff" stroke-width="2.2" stroke-linejoin="miter" stroke-linecap="square"/>
<rect x="1378.96" y="325.15" width="7.8" height="7.8" fill="#0000ff"/>
<path d="M1204.44,269.58 1174.71,269.58 1174.71,309.23" fill="none" stroke="#0000ff" stroke-width="2.2" stroke-linejoin="miter" stroke-linecap="square"/>
<path d="M1194.53,388.52 1174.71,388.52 1174.71,348.87" fill="none" stroke="#0000ff" stroke-width="2.2" stroke-linejoin="miter" stroke-linecap="square"/>
<path d="M1154.88,309.23 1194.53,329.05 1154.88,348.87 Z" fill="none" stroke="#000080" stroke-width="2" stroke-linejoin="miter"/>
<path d="M1174.71,309.23 V319.14 M1174.71,338.96 V348.87" fill="none" stroke="#000080" stroke-width="1.9"/>
<path d="M1157.9,318.7 H1162.3" fill="none" stroke="#000080" stroke-width="1.4"/>
<path d="M1157.9,338.7 H1162.3 M1160.1,336.5 V340.9" fill="none" stroke="#000080" stroke-width="1.4"/>
<path d="M1177.5,316.7 H1181.9 M1179.7,314.5 V318.9" fill="none" stroke="#000080" stroke-width="1.4"/>
<path d="M1177.8,341.3 H1182.2" fill="none" stroke="#000080" stroke-width="1.4"/>
<text x="1181.9" y="266.7" font-size="14.2" fill="#000000" font-weight="bold" textLength="24.1" lengthAdjust="spacingAndGlyphs">Vcc</text>
<text x="1170.9" y="385.4" font-size="14.2" fill="#000000" font-weight="bold" textLength="26.4" lengthAdjust="spacingAndGlyphs">Vee</text>
<text x="1184.5" y="315.2" font-size="14.2" fill="#000000" font-weight="bold" textLength="18.2" lengthAdjust="spacingAndGlyphs">U1</text>
<text x="1184.5" y="355.2" font-size="14.2" fill="#000000" font-weight="bold" textLength="53.1" lengthAdjust="spacingAndGlyphs">LT6015</text>
<text x="1441.9" y="334.9" font-size="14.2" fill="#000000" font-weight="bold" textLength="68.9" lengthAdjust="spacingAndGlyphs">Vout_Diff</text>
<rect x="690.2" y="435" width="2.6" height="417.5" fill="#5e5646"/>
<rect x="692.8" y="435" width="839.4" height="417.5" fill="#b9d0ea"/>
<rect x="692.8" y="435" width="839.4" height="24.2" fill="url(#tba)"/>
<g transform="translate(697.5,441.3) scale(1)">
<rect x="0" y="0" width="13" height="13" fill="#e4e4e4"/>
<path d="M0,4 l2.2,-2.6 l2.2,2.6 l2.2,-2.6 l2.2,2.6 l2.2,-2.6 l2,2.4" fill="none" stroke="#2a3cff" stroke-width="1.3"/>
<path d="M1.5,7.5 h2 M5.5,8.3 h2 M9.5,7.5 h2" stroke="#e03030" stroke-width="1.6"/>
<path d="M2.5,9.5 v2 M6.5,9.5 v2 M10.5,9.5 v2" stroke="#5060c0" stroke-width="0.9"/>
<rect x="0" y="11.6" width="13" height="1.4" fill="#202020"/>
</g>
<text x="717.6" y="452.9" font-size="12" fill="#1e1e1e" textLength="81.7" lengthAdjust="spacingAndGlyphs">Differentiator.raw</text>
<rect x="1438.3" y="439.9" width="27.9" height="15.6" rx="2.5" fill="url(#btn)" stroke="#8d9cb3" stroke-width="1"/>
<rect x="1447.86" y="448.19" width="8.78" height="3.12" rx="1.5" fill="#f4f6f9" stroke="#4a5466" stroke-width="0.9"/>
<rect x="1468.4" y="439.9" width="27.6" height="15.6" rx="2.5" fill="url(#btn)" stroke="#8d9cb3" stroke-width="1"/>
<rect x="1477.81" y="444.29" width="8.78" height="6.83" rx="1.5" fill="#f4f6f9" stroke="#4a5466" stroke-width="0.9"/>
<rect x="1480.06" y="446.53" width="4.29" height="1.95" fill="#4a5a78"/>
<rect x="1498.2" y="439.9" width="28.1" height="15.6" rx="2.5" fill="url(#btnr)" stroke="#6d3b3b" stroke-width="1"/>
<path d="M1508.74,444.19 L1515.76,451.21 M1508.74,451.21 L1515.76,444.19" stroke="#3f4a5c" stroke-width="3.32" stroke-linecap="round"/>
<path d="M1508.74,444.19 L1515.76,451.21 M1508.74,451.21 L1515.76,444.19" stroke="#ffffff" stroke-width="1.76" stroke-linecap="round"/>
<rect x="692.8" y="459.2" width="1.4" height="393.3" fill="#f4f8fc"/>
<rect x="699" y="459.2" width="829.2" height="388.8" fill="#f8fafc"/>
<rect x="699.7" y="459.2" width="826.8" height="386.8" fill="#000000"/>
<line x1="743.3" y1="503.22" x2="1484.4" y2="503.22" stroke="#6e6e6e" stroke-width="1.1" stroke-dasharray="2.7 2.3"/>
<line x1="743.3" y1="529.95" x2="1484.4" y2="529.95" stroke="#6e6e6e" stroke-width="1.1" stroke-dasharray="2.7 2.3"/>
<line x1="743.3" y1="556.67" x2="1484.4" y2="556.67" stroke="#6e6e6e" stroke-width="1.1" stroke-dasharray="2.7 2.3"/>
<line x1="743.3" y1="583.39" x2="1484.4" y2="583.39" stroke="#6e6e6e" stroke-width="1.1" stroke-dasharray="2.7 2.3"/>
<line x1="743.3" y1="610.12" x2="1484.4" y2="610.12" stroke="#6e6e6e" stroke-width="1.1" stroke-dasharray="2.7 2.3"/>
<line x1="743.3" y1="636.84" x2="1484.4" y2="636.84" stroke="#6e6e6e" stroke-width="1.1" stroke-dasharray="2.7 2.3"/>
<line x1="743.3" y1="663.56" x2="1484.4" y2="663.56" stroke="#6e6e6e" stroke-width="1.1" stroke-dasharray="2.7 2.3"/>
<line x1="743.3" y1="690.28" x2="1484.4" y2="690.28" stroke="#6e6e6e" stroke-width="1.1" stroke-dasharray="2.7 2.3"/>
<line x1="743.3" y1="717.01" x2="1484.4" y2="717.01" stroke="#6e6e6e" stroke-width="1.1" stroke-dasharray="2.7 2.3"/>
<line x1="743.3" y1="743.73" x2="1484.4" y2="743.73" stroke="#6e6e6e" stroke-width="1.1" stroke-dasharray="2.7 2.3"/>
<line x1="743.3" y1="770.45" x2="1484.4" y2="770.45" stroke="#6e6e6e" stroke-width="1.1" stroke-dasharray="2.7 2.3"/>
<line x1="743.3" y1="797.18" x2="1484.4" y2="797.18" stroke="#6e6e6e" stroke-width="1.1" stroke-dasharray="2.7 2.3"/>
<line x1="778.68" y1="478.5" x2="778.68" y2="821.9" stroke="#6e6e6e" stroke-width="1.1" stroke-dasharray="2 3"/>
<line x1="800.55" y1="478.5" x2="800.55" y2="821.9" stroke="#6e6e6e" stroke-width="1.1" stroke-dasharray="2 3"/>
<line x1="816.07" y1="478.5" x2="816.07" y2="821.9" stroke="#6e6e6e" stroke-width="1.1" stroke-dasharray="2 3"/>
<line x1="828.1" y1="478.5" x2="828.1" y2="821.9" stroke="#6e6e6e" stroke-width="1.1" stroke-dasharray="2 3"/>
<line x1="837.93" y1="478.5" x2="837.93" y2="821.9" stroke="#6e6e6e" stroke-width="1.1" stroke-dasharray="2 3"/>
<line x1="846.25" y1="478.5" x2="846.25" y2="821.9" stroke="#6e6e6e" stroke-width="1.1" stroke-dasharray="2 3"/>
<line x1="853.45" y1="478.5" x2="853.45" y2="821.9" stroke="#6e6e6e" stroke-width="1.1" stroke-dasharray="2 3"/>
<line x1="859.8" y1="478.5" x2="859.8" y2="821.9" stroke="#6e6e6e" stroke-width="1.1" stroke-dasharray="2 3"/>
<line x1="865.48" y1="478.5" x2="865.48" y2="821.9" stroke="#6e6e6e" stroke-width="1.1" stroke-dasharray="2 3"/>
<line x1="902.87" y1="478.5" x2="902.87" y2="821.9" stroke="#6e6e6e" stroke-width="1.1" stroke-dasharray="2 3"/>
<line x1="924.73" y1="478.5" x2="924.73" y2="821.9" stroke="#6e6e6e" stroke-width="1.1" stroke-dasharray="2 3"/>
<line x1="940.25" y1="478.5" x2="940.25" y2="821.9" stroke="#6e6e6e" stroke-width="1.1" stroke-dasharray="2 3"/>
<line x1="952.28" y1="478.5" x2="952.28" y2="821.9" stroke="#6e6e6e" stroke-width="1.1" stroke-dasharray="2 3"/>
<line x1="962.12" y1="478.5" x2="962.12" y2="821.9" stroke="#6e6e6e" stroke-width="1.1" stroke-dasharray="2 3"/>
<line x1="970.43" y1="478.5" x2="970.43" y2="821.9" stroke="#6e6e6e" stroke-width="1.1" stroke-dasharray="2 3"/>
<line x1="977.63" y1="478.5" x2="977.63" y2="821.9" stroke="#6e6e6e" stroke-width="1.1" stroke-dasharray="2 3"/>
<line x1="983.98" y1="478.5" x2="983.98" y2="821.9" stroke="#6e6e6e" stroke-width="1.1" stroke-dasharray="2 3"/>
<line x1="989.67" y1="478.5" x2="989.67" y2="821.9" stroke="#6e6e6e" stroke-width="1.1" stroke-dasharray="2 3"/>
<line x1="1027.05" y1="478.5" x2="1027.05" y2="821.9" stroke="#6e6e6e" stroke-width="1.1" stroke-dasharray="2 3"/>
<line x1="1048.92" y1="478.5" x2="1048.92" y2="821.9" stroke="#6e6e6e" stroke-width="1.1" stroke-dasharray="2 3"/>
<line x1="1064.43" y1="478.5" x2="1064.43" y2="821.9" stroke="#6e6e6e" stroke-width="1.1" stroke-dasharray="2 3"/>
<line x1="1076.47" y1="478.5" x2="1076.47" y2="821.9" stroke="#6e6e6e" stroke-width="1.1" stroke-dasharray="2 3"/>
<line x1="1086.3" y1="478.5" x2="1086.3" y2="821.9" stroke="#6e6e6e" stroke-width="1.1" stroke-dasharray="2 3"/>
<line x1="1094.61" y1="478.5" x2="1094.61" y2="821.9" stroke="#6e6e6e" stroke-width="1.1" stroke-dasharray="2 3"/>
<line x1="1101.82" y1="478.5" x2="1101.82" y2="821.9" stroke="#6e6e6e" stroke-width="1.1" stroke-dasharray="2 3"/>
<line x1="1108.17" y1="478.5" x2="1108.17" y2="821.9" stroke="#6e6e6e" stroke-width="1.1" stroke-dasharray="2 3"/>
<line x1="1113.85" y1="478.5" x2="1113.85" y2="821.9" stroke="#6e6e6e" stroke-width="1.1" stroke-dasharray="2 3"/>
<line x1="1151.23" y1="478.5" x2="1151.23" y2="821.9" stroke="#6e6e6e" stroke-width="1.1" stroke-dasharray="2 3"/>
<line x1="1173.1" y1="478.5" x2="1173.1" y2="821.9" stroke="#6e6e6e" stroke-width="1.1" stroke-dasharray="2 3"/>
<line x1="1188.62" y1="478.5" x2="1188.62" y2="821.9" stroke="#6e6e6e" stroke-width="1.1" stroke-dasharray="2 3"/>
<line x1="1200.65" y1="478.5" x2="1200.65" y2="821.9" stroke="#6e6e6e" stroke-width="1.1" stroke-dasharray="2 3"/>
<line x1="1210.48" y1="478.5" x2="1210.48" y2="821.9" stroke="#6e6e6e" stroke-width="1.1" stroke-dasharray="2 3"/>
<line x1="1218.8" y1="478.5" x2="1218.8" y2="821.9" stroke="#6e6e6e" stroke-width="1.1" stroke-dasharray="2 3"/>
<line x1="1226" y1="478.5" x2="1226" y2="821.9" stroke="#6e6e6e" stroke-width="1.1" stroke-dasharray="2 3"/>
<line x1="1232.35" y1="478.5" x2="1232.35" y2="821.9" stroke="#6e6e6e" stroke-width="1.1" stroke-dasharray="2 3"/>
<line x1="1238.03" y1="478.5" x2="1238.03" y2="821.9" stroke="#6e6e6e" stroke-width="1.1" stroke-dasharray="2 3"/>
<line x1="1275.42" y1="478.5" x2="1275.42" y2="821.9" stroke="#6e6e6e" stroke-width="1.1" stroke-dasharray="2 3"/>
<line x1="1297.28" y1="478.5" x2="1297.28" y2="821.9" stroke="#6e6e6e" stroke-width="1.1" stroke-dasharray="2 3"/>
<line x1="1312.8" y1="478.5" x2="1312.8" y2="821.9" stroke="#6e6e6e" stroke-width="1.1" stroke-dasharray="2 3"/>
<line x1="1324.83" y1="478.5" x2="1324.83" y2="821.9" stroke="#6e6e6e" stroke-width="1.1" stroke-dasharray="2 3"/>
<line x1="1334.67" y1="478.5" x2="1334.67" y2="821.9" stroke="#6e6e6e" stroke-width="1.1" stroke-dasharray="2 3"/>
<line x1="1342.98" y1="478.5" x2="1342.98" y2="821.9" stroke="#6e6e6e" stroke-width="1.1" stroke-dasharray="2 3"/>
<line x1="1350.18" y1="478.5" x2="1350.18" y2="821.9" stroke="#6e6e6e" stroke-width="1.1" stroke-dasharray="2 3"/>
<line x1="1356.53" y1="478.5" x2="1356.53" y2="821.9" stroke="#6e6e6e" stroke-width="1.1" stroke-dasharray="2 3"/>
<line x1="1362.22" y1="478.5" x2="1362.22" y2="821.9" stroke="#6e6e6e" stroke-width="1.1" stroke-dasharray="2 3"/>
<line x1="1399.6" y1="478.5" x2="1399.6" y2="821.9" stroke="#6e6e6e" stroke-width="1.1" stroke-dasharray="2 3"/>
<line x1="1421.47" y1="478.5" x2="1421.47" y2="821.9" stroke="#6e6e6e" stroke-width="1.1" stroke-dasharray="2 3"/>
<line x1="1436.98" y1="478.5" x2="1436.98" y2="821.9" stroke="#6e6e6e" stroke-width="1.1" stroke-dasharray="2 3"/>
<line x1="1449.02" y1="478.5" x2="1449.02" y2="821.9" stroke="#6e6e6e" stroke-width="1.1" stroke-dasharray="2 3"/>
<line x1="1458.85" y1="478.5" x2="1458.85" y2="821.9" stroke="#6e6e6e" stroke-width="1.1" stroke-dasharray="2 3"/>
<line x1="1467.16" y1="478.5" x2="1467.16" y2="821.9" stroke="#6e6e6e" stroke-width="1.1" stroke-dasharray="2 3"/>
<line x1="1474.37" y1="478.5" x2="1474.37" y2="821.9" stroke="#6e6e6e" stroke-width="1.1" stroke-dasharray="2 3"/>
<line x1="1480.72" y1="478.5" x2="1480.72" y2="821.9" stroke="#6e6e6e" stroke-width="1.1" stroke-dasharray="2 3"/>
<path d="M741.3,476.5 H1486.4 V823.9 H741.3 Z" fill="none" stroke="#c8c8c8" stroke-width="4"/>
<line x1="732.5" y1="476.5" x2="741.3" y2="476.5" stroke="#c8c8c8" stroke-width="4"/>
<line x1="1486.4" y1="476.5" x2="1493.5" y2="476.5" stroke="#c8c8c8" stroke-width="4"/>
<line x1="732.5" y1="503.22" x2="741.3" y2="503.22" stroke="#c8c8c8" stroke-width="4"/>
<line x1="1486.4" y1="503.22" x2="1493.5" y2="503.22" stroke="#c8c8c8" stroke-width="4"/>
<line x1="732.5" y1="529.95" x2="741.3" y2="529.95" stroke="#c8c8c8" stroke-width="4"/>
<line x1="1486.4" y1="529.95" x2="1493.5" y2="529.95" stroke="#c8c8c8" stroke-width="4"/>
<line x1="732.5" y1="556.67" x2="741.3" y2="556.67" stroke="#c8c8c8" stroke-width="4"/>
<line x1="1486.4" y1="556.67" x2="1493.5" y2="556.67" stroke="#c8c8c8" stroke-width="4"/>
<line x1="732.5" y1="583.39" x2="741.3" y2="583.39" stroke="#c8c8c8" stroke-width="4"/>
<line x1="1486.4" y1="583.39" x2="1493.5" y2="583.39" stroke="#c8c8c8" stroke-width="4"/>
<line x1="732.5" y1="610.12" x2="741.3" y2="610.12" stroke="#c8c8c8" stroke-width="4"/>
<line x1="1486.4" y1="610.12" x2="1493.5" y2="610.12" stroke="#c8c8c8" stroke-width="4"/>
<line x1="732.5" y1="636.84" x2="741.3" y2="636.84" stroke="#c8c8c8" stroke-width="4"/>
<line x1="1486.4" y1="636.84" x2="1493.5" y2="636.84" stroke="#c8c8c8" stroke-width="4"/>
<line x1="732.5" y1="663.56" x2="741.3" y2="663.56" stroke="#c8c8c8" stroke-width="4"/>
<line x1="1486.4" y1="663.56" x2="1493.5" y2="663.56" stroke="#c8c8c8" stroke-width="4"/>
<line x1="732.5" y1="690.28" x2="741.3" y2="690.28" stroke="#c8c8c8" stroke-width="4"/>
<line x1="1486.4" y1="690.28" x2="1493.5" y2="690.28" stroke="#c8c8c8" stroke-width="4"/>
<line x1="732.5" y1="717.01" x2="741.3" y2="717.01" stroke="#c8c8c8" stroke-width="4"/>
<line x1="1486.4" y1="717.01" x2="1493.5" y2="717.01" stroke="#c8c8c8" stroke-width="4"/>
<line x1="732.5" y1="743.73" x2="741.3" y2="743.73" stroke="#c8c8c8" stroke-width="4"/>
<line x1="1486.4" y1="743.73" x2="1493.5" y2="743.73" stroke="#c8c8c8" stroke-width="4"/>
<line x1="732.5" y1="770.45" x2="741.3" y2="770.45" stroke="#c8c8c8" stroke-width="4"/>
<line x1="1486.4" y1="770.45" x2="1493.5" y2="770.45" stroke="#c8c8c8" stroke-width="4"/>
<line x1="732.5" y1="797.18" x2="741.3" y2="797.18" stroke="#c8c8c8" stroke-width="4"/>
<line x1="1486.4" y1="797.18" x2="1493.5" y2="797.18" stroke="#c8c8c8" stroke-width="4"/>
<line x1="732.5" y1="823.9" x2="741.3" y2="823.9" stroke="#c8c8c8" stroke-width="4"/>
<line x1="1486.4" y1="823.9" x2="1493.5" y2="823.9" stroke="#c8c8c8" stroke-width="4"/>
<line x1="741.3" y1="823.9" x2="741.3" y2="829.9" stroke="#c8c8c8" stroke-width="3.2"/>
<line x1="778.68" y1="823.9" x2="778.68" y2="829.9" stroke="#c8c8c8" stroke-width="3.2"/>
<line x1="800.55" y1="823.9" x2="800.55" y2="829.9" stroke="#c8c8c8" stroke-width="3.2"/>
<line x1="816.07" y1="823.9" x2="816.07" y2="829.9" stroke="#c8c8c8" stroke-width="3.2"/>
<line x1="828.1" y1="823.9" x2="828.1" y2="829.9" stroke="#c8c8c8" stroke-width="3.2"/>
<line x1="837.93" y1="823.9" x2="837.93" y2="829.9" stroke="#c8c8c8" stroke-width="3.2"/>
<line x1="846.25" y1="823.9" x2="846.25" y2="829.9" stroke="#c8c8c8" stroke-width="3.2"/>
<line x1="853.45" y1="823.9" x2="853.45" y2="829.9" stroke="#c8c8c8" stroke-width="3.2"/>
<line x1="859.8" y1="823.9" x2="859.8" y2="829.9" stroke="#c8c8c8" stroke-width="3.2"/>
<line x1="865.48" y1="823.9" x2="865.48" y2="829.9" stroke="#c8c8c8" stroke-width="3.2"/>
<line x1="902.87" y1="823.9" x2="902.87" y2="829.9" stroke="#c8c8c8" stroke-width="3.2"/>
<line x1="924.73" y1="823.9" x2="924.73" y2="829.9" stroke="#c8c8c8" stroke-width="3.2"/>
<line x1="940.25" y1="823.9" x2="940.25" y2="829.9" stroke="#c8c8c8" stroke-width="3.2"/>
<line x1="952.28" y1="823.9" x2="952.28" y2="829.9" stroke="#c8c8c8" stroke-width="3.2"/>
<line x1="962.12" y1="823.9" x2="962.12" y2="829.9" stroke="#c8c8c8" stroke-width="3.2"/>
<line x1="970.43" y1="823.9" x2="970.43" y2="829.9" stroke="#c8c8c8" stroke-width="3.2"/>
<line x1="977.63" y1="823.9" x2="977.63" y2="829.9" stroke="#c8c8c8" stroke-width="3.2"/>
<line x1="983.98" y1="823.9" x2="983.98" y2="829.9" stroke="#c8c8c8" stroke-width="3.2"/>
<line x1="989.67" y1="823.9" x2="989.67" y2="829.9" stroke="#c8c8c8" stroke-width="3.2"/>
<line x1="1027.05" y1="823.9" x2="1027.05" y2="829.9" stroke="#c8c8c8" stroke-width="3.2"/>
<line x1="1048.92" y1="823.9" x2="1048.92" y2="829.9" stroke="#c8c8c8" stroke-width="3.2"/>
<line x1="1064.43" y1="823.9" x2="1064.43" y2="829.9" stroke="#c8c8c8" stroke-width="3.2"/>
<line x1="1076.47" y1="823.9" x2="1076.47" y2="829.9" stroke="#c8c8c8" stroke-width="3.2"/>
<line x1="1086.3" y1="823.9" x2="1086.3" y2="829.9" stroke="#c8c8c8" stroke-width="3.2"/>
<line x1="1094.61" y1="823.9" x2="1094.61" y2="829.9" stroke="#c8c8c8" stroke-width="3.2"/>
<line x1="1101.82" y1="823.9" x2="1101.82" y2="829.9" stroke="#c8c8c8" stroke-width="3.2"/>
<line x1="1108.17" y1="823.9" x2="1108.17" y2="829.9" stroke="#c8c8c8" stroke-width="3.2"/>
<line x1="1113.85" y1="823.9" x2="1113.85" y2="829.9" stroke="#c8c8c8" stroke-width="3.2"/>
<line x1="1151.23" y1="823.9" x2="1151.23" y2="829.9" stroke="#c8c8c8" stroke-width="3.2"/>
<line x1="1173.1" y1="823.9" x2="1173.1" y2="829.9" stroke="#c8c8c8" stroke-width="3.2"/>
<line x1="1188.62" y1="823.9" x2="1188.62" y2="829.9" stroke="#c8c8c8" stroke-width="3.2"/>
<line x1="1200.65" y1="823.9" x2="1200.65" y2="829.9" stroke="#c8c8c8" stroke-width="3.2"/>
<line x1="1210.48" y1="823.9" x2="1210.48" y2="829.9" stroke="#c8c8c8" stroke-width="3.2"/>
<line x1="1218.8" y1="823.9" x2="1218.8" y2="829.9" stroke="#c8c8c8" stroke-width="3.2"/>
<line x1="1226" y1="823.9" x2="1226" y2="829.9" stroke="#c8c8c8" stroke-width="3.2"/>
<line x1="1232.35" y1="823.9" x2="1232.35" y2="829.9" stroke="#c8c8c8" stroke-width="3.2"/>
<line x1="1238.03" y1="823.9" x2="1238.03" y2="829.9" stroke="#c8c8c8" stroke-width="3.2"/>
<line x1="1275.42" y1="823.9" x2="1275.42" y2="829.9" stroke="#c8c8c8" stroke-width="3.2"/>
<line x1="1297.28" y1="823.9" x2="1297.28" y2="829.9" stroke="#c8c8c8" stroke-width="3.2"/>
<line x1="1312.8" y1="823.9" x2="1312.8" y2="829.9" stroke="#c8c8c8" stroke-width="3.2"/>
<line x1="1324.83" y1="823.9" x2="1324.83" y2="829.9" stroke="#c8c8c8" stroke-width="3.2"/>
<line x1="1334.67" y1="823.9" x2="1334.67" y2="829.9" stroke="#c8c8c8" stroke-width="3.2"/>
<line x1="1342.98" y1="823.9" x2="1342.98" y2="829.9" stroke="#c8c8c8" stroke-width="3.2"/>
<line x1="1350.18" y1="823.9" x2="1350.18" y2="829.9" stroke="#c8c8c8" stroke-width="3.2"/>
<line x1="1356.53" y1="823.9" x2="1356.53" y2="829.9" stroke="#c8c8c8" stroke-width="3.2"/>
<line x1="1362.22" y1="823.9" x2="1362.22" y2="829.9" stroke="#c8c8c8" stroke-width="3.2"/>
<line x1="1399.6" y1="823.9" x2="1399.6" y2="829.9" stroke="#c8c8c8" stroke-width="3.2"/>
<line x1="1421.47" y1="823.9" x2="1421.47" y2="829.9" stroke="#c8c8c8" stroke-width="3.2"/>
<line x1="1436.98" y1="823.9" x2="1436.98" y2="829.9" stroke="#c8c8c8" stroke-width="3.2"/>
<line x1="1449.02" y1="823.9" x2="1449.02" y2="829.9" stroke="#c8c8c8" stroke-width="3.2"/>
<line x1="1458.85" y1="823.9" x2="1458.85" y2="829.9" stroke="#c8c8c8" stroke-width="3.2"/>
<line x1="1467.16" y1="823.9" x2="1467.16" y2="829.9" stroke="#c8c8c8" stroke-width="3.2"/>
<line x1="1474.37" y1="823.9" x2="1474.37" y2="829.9" stroke="#c8c8c8" stroke-width="3.2"/>
<line x1="1480.72" y1="823.9" x2="1480.72" y2="829.9" stroke="#c8c8c8" stroke-width="3.2"/>
<line x1="1486.4" y1="823.9" x2="1486.4" y2="829.9" stroke="#c8c8c8" stroke-width="3.2"/>
<text x="733" y="479.9" font-size="12.2" fill="#dedede" text-anchor="end" textLength="32.1" lengthAdjust="spacingAndGlyphs" stroke="#dedede" stroke-width="0.25">100dB</text>
<text x="1521" y="479.9" font-size="12.2" fill="#dedede" text-anchor="end" textLength="23.46" lengthAdjust="spacingAndGlyphs" stroke="#dedede" stroke-width="0.25">140°</text>
<text x="733" y="506.62" font-size="12.2" fill="#dedede" text-anchor="end" textLength="25.93" lengthAdjust="spacingAndGlyphs" stroke="#dedede" stroke-width="0.25">90dB</text>
<text x="1521" y="506.62" font-size="12.2" fill="#dedede" text-anchor="end" textLength="23.46" lengthAdjust="spacingAndGlyphs" stroke="#dedede" stroke-width="0.25">120°</text>
<text x="733" y="533.35" font-size="12.2" fill="#dedede" text-anchor="end" textLength="25.93" lengthAdjust="spacingAndGlyphs" stroke="#dedede" stroke-width="0.25">80dB</text>
<text x="1521" y="533.35" font-size="12.2" fill="#dedede" text-anchor="end" textLength="23.46" lengthAdjust="spacingAndGlyphs" stroke="#dedede" stroke-width="0.25">100°</text>
<text x="733" y="560.07" font-size="12.2" fill="#dedede" text-anchor="end" textLength="25.93" lengthAdjust="spacingAndGlyphs" stroke="#dedede" stroke-width="0.25">70dB</text>
<text x="1521" y="560.07" font-size="12.2" fill="#dedede" text-anchor="end" textLength="17.16" lengthAdjust="spacingAndGlyphs" stroke="#dedede" stroke-width="0.25">80°</text>
<text x="733" y="586.79" font-size="12.2" fill="#dedede" text-anchor="end" textLength="25.93" lengthAdjust="spacingAndGlyphs" stroke="#dedede" stroke-width="0.25">60dB</text>
<text x="1521" y="586.79" font-size="12.2" fill="#dedede" text-anchor="end" textLength="17.16" lengthAdjust="spacingAndGlyphs" stroke="#dedede" stroke-width="0.25">60°</text>
<text x="733" y="613.52" font-size="12.2" fill="#dedede" text-anchor="end" textLength="25.93" lengthAdjust="spacingAndGlyphs" stroke="#dedede" stroke-width="0.25">50dB</text>
<text x="1521" y="613.52" font-size="12.2" fill="#dedede" text-anchor="end" textLength="17.16" lengthAdjust="spacingAndGlyphs" stroke="#dedede" stroke-width="0.25">40°</text>
<text x="733" y="640.24" font-size="12.2" fill="#dedede" text-anchor="end" textLength="25.93" lengthAdjust="spacingAndGlyphs" stroke="#dedede" stroke-width="0.25">40dB</text>
<text x="1521" y="640.24" font-size="12.2" fill="#dedede" text-anchor="end" textLength="17.16" lengthAdjust="spacingAndGlyphs" stroke="#dedede" stroke-width="0.25">20°</text>
<text x="733" y="666.96" font-size="12.2" fill="#dedede" text-anchor="end" textLength="25.93" lengthAdjust="spacingAndGlyphs" stroke="#dedede" stroke-width="0.25">30dB</text>
<text x="1521" y="666.96" font-size="12.2" fill="#dedede" text-anchor="end" textLength="10.85" lengthAdjust="spacingAndGlyphs" stroke="#dedede" stroke-width="0.25">0°</text>
<text x="733" y="693.68" font-size="12.2" fill="#dedede" text-anchor="end" textLength="25.93" lengthAdjust="spacingAndGlyphs" stroke="#dedede" stroke-width="0.25">20dB</text>
<text x="1521" y="693.68" font-size="12.2" fill="#dedede" text-anchor="end" textLength="20.93" lengthAdjust="spacingAndGlyphs" stroke="#dedede" stroke-width="0.25">-20°</text>
<text x="733" y="720.41" font-size="12.2" fill="#dedede" text-anchor="end" textLength="25.93" lengthAdjust="spacingAndGlyphs" stroke="#dedede" stroke-width="0.25">10dB</text>
<text x="1521" y="720.41" font-size="12.2" fill="#dedede" text-anchor="end" textLength="20.93" lengthAdjust="spacingAndGlyphs" stroke="#dedede" stroke-width="0.25">-40°</text>
<text x="733" y="747.13" font-size="12.2" fill="#dedede" text-anchor="end" textLength="19.75" lengthAdjust="spacingAndGlyphs" stroke="#dedede" stroke-width="0.25">0dB</text>
<text x="1521" y="747.13" font-size="12.2" fill="#dedede" text-anchor="end" textLength="20.93" lengthAdjust="spacingAndGlyphs" stroke="#dedede" stroke-width="0.25">-60°</text>
<text x="733" y="773.85" font-size="12.2" fill="#dedede" text-anchor="end" textLength="29.62" lengthAdjust="spacingAndGlyphs" stroke="#dedede" stroke-width="0.25">-10dB</text>
<text x="1521" y="773.85" font-size="12.2" fill="#dedede" text-anchor="end" textLength="20.93" lengthAdjust="spacingAndGlyphs" stroke="#dedede" stroke-width="0.25">-80°</text>
<text x="733" y="800.58" font-size="12.2" fill="#dedede" text-anchor="end" textLength="29.62" lengthAdjust="spacingAndGlyphs" stroke="#dedede" stroke-width="0.25">-20dB</text>
<text x="1521" y="800.58" font-size="12.2" fill="#dedede" text-anchor="end" textLength="27.24" lengthAdjust="spacingAndGlyphs" stroke="#dedede" stroke-width="0.25">-100°</text>
<text x="733" y="827.3" font-size="12.2" fill="#dedede" text-anchor="end" textLength="29.62" lengthAdjust="spacingAndGlyphs" stroke="#dedede" stroke-width="0.25">-30dB</text>
<text x="1521" y="827.3" font-size="12.2" fill="#dedede" text-anchor="end" textLength="27.24" lengthAdjust="spacingAndGlyphs" stroke="#dedede" stroke-width="0.25">-120°</text>
<text x="741.3" y="842.8" font-size="12.2" fill="#dedede" text-anchor="middle" textLength="25.92" lengthAdjust="spacingAndGlyphs" stroke="#dedede" stroke-width="0.25">10Hz</text>
<text x="865.48" y="842.8" font-size="12.2" fill="#dedede" text-anchor="middle" textLength="32.09" lengthAdjust="spacingAndGlyphs" stroke="#dedede" stroke-width="0.25">100Hz</text>
<text x="989.67" y="842.8" font-size="12.2" fill="#dedede" text-anchor="middle" textLength="27.15" lengthAdjust="spacingAndGlyphs" stroke="#dedede" stroke-width="0.25">1KHz</text>
<text x="1113.85" y="842.8" font-size="12.2" fill="#dedede" text-anchor="middle" textLength="33.32" lengthAdjust="spacingAndGlyphs" stroke="#dedede" stroke-width="0.25">10KHz</text>
<text x="1238.03" y="842.8" font-size="12.2" fill="#dedede" text-anchor="middle" textLength="39.5" lengthAdjust="spacingAndGlyphs" stroke="#dedede" stroke-width="0.25">100KHz</text>
<text x="1362.22" y="842.8" font-size="12.2" fill="#dedede" text-anchor="middle" textLength="28.99" lengthAdjust="spacingAndGlyphs" stroke="#dedede" stroke-width="0.25">1MHz</text>
<text x="1486.4" y="842.8" font-size="12.2" fill="#dedede" text-anchor="middle" textLength="35.16" lengthAdjust="spacingAndGlyphs" stroke="#dedede" stroke-width="0.25">10MHz</text>
<text x="925.8" y="472.2" font-size="11.8" fill="#00ff00" text-anchor="middle" font-weight="bold" textLength="62.7" lengthAdjust="spacingAndGlyphs">V(vout_diff)</text>
<text x="1298" y="472.2" font-size="11.8" fill="#cb9471" text-anchor="middle" font-weight="bold" textLength="109.3" lengthAdjust="spacingAndGlyphs">V(vout_diff_laplace)</text>
<g clip-path="url(#cBR)">
<path d="M741.3,807.97 741.6,807.84 741.9,807.71 742.19,807.58 742.49,807.45 742.79,807.32 743.09,807.2 743.39,807.07 743.69,806.94 743.98,806.81 744.28,806.68 744.58,806.55 744.88,806.43 745.18,806.3 745.47,806.17 745.77,806.04 746.07,805.91 746.37,805.78 746.67,805.66 746.97,805.53 747.26,805.4 747.56,805.27 747.86,805.14 748.16,805.01 748.46,804.89 748.75,804.76 749.05,804.63 749.35,804.5 749.65,804.37 749.95,804.24 750.24,804.12 750.54,803.99 750.84,803.86 751.14,803.73 751.44,803.6 751.74,803.47 752.03,803.35 752.33,803.22 752.63,803.09 752.93,802.96 753.23,802.83 753.52,802.7 753.82,802.58 754.12,802.45 754.42,802.32 754.72,802.19 755.02,802.06 755.31,801.93 755.61,801.81 755.91,801.68 756.21,801.55 756.51,801.42 756.8,801.29 757.1,801.16 757.4,801.04 757.7,800.91 758,800.78 758.3,800.65 758.59,800.52 758.89,800.4 759.19,800.27 759.49,800.14 759.79,800.01 760.08,799.88 760.38,799.75 760.68,799.63 760.98,799.5 761.28,799.37 761.57,799.24 761.87,799.11 762.17,798.98 762.47,798.86 762.77,798.73 763.07,798.6 763.36,798.47 763.66,798.34 763.96,798.21 764.26,798.09 764.56,797.96 764.85,797.83 765.15,797.7 765.45,797.57 765.75,797.44 766.05,797.32 766.35,797.19 766.64,797.06 766.94,796.93 767.24,796.8 767.54,796.67 767.84,796.55 768.13,796.42 768.43,796.29 768.73,796.16 769.03,796.03 769.33,795.9 769.63,795.78 769.92,795.65 770.22,795.52 770.52,795.39 770.82,795.26 771.12,795.13 771.41,795.01 771.71,794.88 772.01,794.75 772.31,794.62 772.61,794.49 772.9,794.36 773.2,794.24 773.5,794.11 773.8,793.98 774.1,793.85 774.4,793.72 774.69,793.59 774.99,793.47 775.29,793.34 775.59,793.21 775.89,793.08 776.18,792.95 776.48,792.82 776.78,792.7 777.08,792.57 777.38,792.44 777.68,792.31 777.97,792.18 778.27,792.05 778.57,791.93 778.87,791.8 779.17,791.67 779.46,791.54 779.76,791.41 780.06,791.28 780.36,791.16 780.66,791.03 780.96,790.9 781.25,790.77 781.55,790.64 781.85,790.51 782.15,790.39 782.45,790.26 782.74,790.13 783.04,790 783.34,789.87 783.64,789.74 783.94,789.62 784.23,789.49 784.53,789.36 784.83,789.23 785.13,789.1 785.43,788.97 785.73,788.85 786.02,788.72 786.32,788.59 786.62,788.46 786.92,788.33 787.22,788.2 787.51,788.08 787.81,787.95 788.11,787.82 788.41,787.69 788.71,787.56 789.01,787.43 789.3,787.31 789.6,787.18 789.9,787.05 790.2,786.92 790.5,786.79 790.79,786.66 791.09,786.54 791.39,786.41 791.69,786.28 791.99,786.15 792.29,786.02 792.58,785.89 792.88,785.77 793.18,785.64 793.48,785.51 793.78,785.38 794.07,785.25 794.37,785.12 794.67,785 794.97,784.87 795.27,784.74 795.56,784.61 795.86,784.48 796.16,784.35 796.46,784.23 796.76,784.1 797.06,783.97 797.35,783.84 797.65,783.71 797.95,783.58 798.25,783.46 798.55,783.33 798.84,783.2 799.14,783.07 799.44,782.94 799.74,782.81 800.04,782.69 800.34,782.56 800.63,782.43 800.93,782.3 801.23,782.17 801.53,782.04 801.83,781.92 802.12,781.79 802.42,781.66 802.72,781.53 803.02,781.4 803.32,781.28 803.62,781.15 803.91,781.02 804.21,780.89 804.51,780.76 804.81,780.63 805.11,780.51 805.4,780.38 805.7,780.25 806,780.12 806.3,779.99 806.6,779.86 806.9,779.74 807.19,779.61 807.49,779.48 807.79,779.35 808.09,779.22 808.39,779.09 808.68,778.97 808.98,778.84 809.28,778.71 809.58,778.58 809.88,778.45 810.17,778.32 810.47,778.2 810.77,778.07 811.07,777.94 811.37,777.81 811.67,777.68 811.96,777.55 812.26,777.43 812.56,777.3 812.86,777.17 813.16,777.04 813.45,776.91 813.75,776.78 814.05,776.66 814.35,776.53 814.65,776.4 814.95,776.27 815.24,776.14 815.54,776.01 815.84,775.89 816.14,775.76 816.44,775.63 816.73,775.5 817.03,775.37 817.33,775.24 817.63,775.12 817.93,774.99 818.23,774.86 818.52,774.73 818.82,774.6 819.12,774.47 819.42,774.35 819.72,774.22 820.01,774.09 820.31,773.96 820.61,773.83 820.91,773.7 821.21,773.58 821.5,773.45 821.8,773.32 822.1,773.19 822.4,773.06 822.7,772.93 823,772.81 823.29,772.68 823.59,772.55 823.89,772.42 824.19,772.29 824.49,772.16 824.78,772.04 825.08,771.91 825.38,771.78 825.68,771.65 825.98,771.52 826.28,771.39 826.57,771.27 826.87,771.14 827.17,771.01 827.47,770.88 827.77,770.75 828.06,770.62 828.36,770.5 828.66,770.37 828.96,770.24 829.26,770.11 829.56,769.98 829.85,769.85 830.15,769.73 830.45,769.6 830.75,769.47 831.05,769.34 831.34,769.21 831.64,769.08 831.94,768.96 832.24,768.83 832.54,768.7 832.83,768.57 833.13,768.44 833.43,768.31 833.73,768.19 834.03,768.06 834.33,767.93 834.62,767.8 834.92,767.67 835.22,767.54 835.52,767.42 835.82,767.29 836.11,767.16 836.41,767.03 836.71,766.9 837.01,766.77 837.31,766.65 837.61,766.52 837.9,766.39 838.2,766.26 838.5,766.13 838.8,766 839.1,765.88 839.39,765.75 839.69,765.62 839.99,765.49 840.29,765.36 840.59,765.23 840.89,765.11 841.18,764.98 841.48,764.85 841.78,764.72 842.08,764.59 842.38,764.46 842.67,764.34 842.97,764.21 843.27,764.08 843.57,763.95 843.87,763.82 844.16,763.69 844.46,763.57 844.76,763.44 845.06,763.31 845.36,763.18 845.66,763.05 845.95,762.92 846.25,762.8 846.55,762.67 846.85,762.54 847.15,762.41 847.44,762.28 847.74,762.15 848.04,762.03 848.34,761.9 848.64,761.77 848.94,761.64 849.23,761.51 849.53,761.38 849.83,761.26 850.13,761.13 850.43,761 850.72,760.87 851.02,760.74 851.32,760.61 851.62,760.49 851.92,760.36 852.22,760.23 852.51,760.1 852.81,759.97 853.11,759.84 853.41,759.72 853.71,759.59 854,759.46 854.3,759.33 854.6,759.2 854.9,759.08 855.2,758.95 855.49,758.82 855.79,758.69 856.09,758.56 856.39,758.43 856.69,758.31 856.99,758.18 857.28,758.05 857.58,757.92 857.88,757.79 858.18,757.66 858.48,757.54 858.77,757.41 859.07,757.28 859.37,757.15 859.67,757.02 859.97,756.89 860.27,756.77 860.56,756.64 860.86,756.51 861.16,756.38 861.46,756.25 861.76,756.12 862.05,756 862.35,755.87 862.65,755.74 862.95,755.61 863.25,755.48 863.55,755.35 863.84,755.23 864.14,755.1 864.44,754.97 864.74,754.84 865.04,754.71 865.33,754.58 865.63,754.46 865.93,754.33 866.23,754.2 866.53,754.07 866.83,753.94 867.12,753.81 867.42,753.69 867.72,753.56 868.02,753.43 868.32,753.3 868.61,753.17 868.91,753.04 869.21,752.92 869.51,752.79 869.81,752.66 870.1,752.53 870.4,752.4 870.7,752.27 871,752.15 871.3,752.02 871.6,751.89 871.89,751.76 872.19,751.63 872.49,751.5 872.79,751.38 873.09,751.25 873.38,751.12 873.68,750.99 873.98,750.86 874.28,750.73 874.58,750.61 874.88,750.48 875.17,750.35 875.47,750.22 875.77,750.09 876.07,749.96 876.37,749.84 876.66,749.71 876.96,749.58 877.26,749.45 877.56,749.32 877.86,749.19 878.16,749.07 878.45,748.94 878.75,748.81 879.05,748.68 879.35,748.55 879.65,748.42 879.94,748.3 880.24,748.17 880.54,748.04 880.84,747.91 881.14,747.78 881.43,747.65 881.73,747.53 882.03,747.4 882.33,747.27 882.63,747.14 882.93,747.01 883.22,746.88 883.52,746.76 883.82,746.63 884.12,746.5 884.42,746.37 884.71,746.24 885.01,746.11 885.31,745.99 885.61,745.86 885.91,745.73 886.21,745.6 886.5,745.47 886.8,745.34 887.1,745.22 887.4,745.09 887.7,744.96 887.99,744.83 888.29,744.7 888.59,744.57 888.89,744.45 889.19,744.32 889.49,744.19 889.78,744.06 890.08,743.93 890.38,743.8 890.68,743.68 890.98,743.55 891.27,743.42 891.57,743.29 891.87,743.16 892.17,743.03 892.47,742.91 892.76,742.78 893.06,742.65 893.36,742.52 893.66,742.39 893.96,742.26 894.26,742.14 894.55,742.01 894.85,741.88 895.15,741.75 895.45,741.62 895.75,741.49 896.04,741.37 896.34,741.24 896.64,741.11 896.94,740.98 897.24,740.85 897.54,740.72 897.83,740.6 898.13,740.47 898.43,740.34 898.73,740.21 899.03,740.08 899.32,739.95 899.62,739.83 899.92,739.7 900.22,739.57 900.52,739.44 900.82,739.31 901.11,739.18 901.41,739.06 901.71,738.93 902.01,738.8 902.31,738.67 902.6,738.54 902.9,738.41 903.2,738.29 903.5,738.16 903.8,738.03 904.09,737.9 904.39,737.77 904.69,737.64 904.99,737.51 905.29,737.39 905.59,737.26 905.88,737.13 906.18,737 906.48,736.87 906.78,736.74 907.08,736.62 907.37,736.49 907.67,736.36 907.97,736.23 908.27,736.1 908.57,735.97 908.87,735.85 909.16,735.72 909.46,735.59 909.76,735.46 910.06,735.33 910.36,735.2 910.65,735.08 910.95,734.95 911.25,734.82 911.55,734.69 911.85,734.56 912.15,734.43 912.44,734.31 912.74,734.18 913.04,734.05 913.34,733.92 913.64,733.79 913.93,733.66 914.23,733.54 914.53,733.41 914.83,733.28 915.13,733.15 915.43,733.02 915.72,732.89 916.02,732.77 916.32,732.64 916.62,732.51 916.92,732.38 917.21,732.25 917.51,732.12 917.81,732 918.11,731.87 918.41,731.74 918.7,731.61 919,731.48 919.3,731.35 919.6,731.23 919.9,731.1 920.2,730.97 920.49,730.84 920.79,730.71 921.09,730.58 921.39,730.46 921.69,730.33 921.98,730.2 922.28,730.07 922.58,729.94 922.88,729.81 923.18,729.69 923.48,729.56 923.77,729.43 924.07,729.3 924.37,729.17 924.67,729.04 924.97,728.91 925.26,728.79 925.56,728.66 925.86,728.53 926.16,728.4 926.46,728.27 926.76,728.14 927.05,728.02 927.35,727.89 927.65,727.76 927.95,727.63 928.25,727.5 928.54,727.37 928.84,727.25 929.14,727.12 929.44,726.99 929.74,726.86 930.03,726.73 930.33,726.6 930.63,726.48 930.93,726.35 931.23,726.22 931.53,726.09 931.82,725.96 932.12,725.83 932.42,725.71 932.72,725.58 933.02,725.45 933.31,725.32 933.61,725.19 933.91,725.06 934.21,724.93 934.51,724.81 934.81,724.68 935.1,724.55 935.4,724.42 935.7,724.29 936,724.16 936.3,724.04 936.59,723.91 936.89,723.78 937.19,723.65 937.49,723.52 937.79,723.39 938.09,723.27 938.38,723.14 938.68,723.01 938.98,722.88 939.28,722.75 939.58,722.62 939.87,722.5 940.17,722.37 940.47,722.24 940.77,722.11 941.07,721.98 941.36,721.85 941.66,721.72 941.96,721.6 942.26,721.47 942.56,721.34 942.86,721.21 943.15,721.08 943.45,720.95 943.75,720.83 944.05,720.7 944.35,720.57 944.64,720.44 944.94,720.31 945.24,720.18 945.54,720.06 945.84,719.93 946.14,719.8 946.43,719.67 946.73,719.54 947.03,719.41 947.33,719.28 947.63,719.16 947.92,719.03 948.22,718.9 948.52,718.77 948.82,718.64 949.12,718.51 949.42,718.39 949.71,718.26 950.01,718.13 950.31,718 950.61,717.87 950.91,717.74 951.2,717.61 951.5,717.49 951.8,717.36 952.1,717.23 952.4,717.1 952.69,716.97 952.99,716.84 953.29,716.72 953.59,716.59 953.89,716.46 954.19,716.33 954.48,716.2 954.78,716.07 955.08,715.94 955.38,715.82 955.68,715.69 955.97,715.56 956.27,715.43 956.57,715.3 956.87,715.17 957.17,715.05 957.47,714.92 957.76,714.79 958.06,714.66 958.36,714.53 958.66,714.4 958.96,714.27 959.25,714.15 959.55,714.02 959.85,713.89 960.15,713.76 960.45,713.63 960.75,713.5 961.04,713.37 961.34,713.25 961.64,713.12 961.94,712.99 962.24,712.86 962.53,712.73 962.83,712.6 963.13,712.47 963.43,712.35 963.73,712.22 964.02,712.09 964.32,711.96 964.62,711.83 964.92,711.7 965.22,711.57 965.52,711.45 965.81,711.32 966.11,711.19 966.41,711.06 966.71,710.93 967.01,710.8 967.3,710.67 967.6,710.55 967.9,710.42 968.2,710.29 968.5,710.16 968.8,710.03 969.09,709.9 969.39,709.77 969.69,709.65 969.99,709.52 970.29,709.39 970.58,709.26 970.88,709.13 971.18,709 971.48,708.87 971.78,708.75 972.08,708.62 972.37,708.49 972.67,708.36 972.97,708.23 973.27,708.1 973.57,707.97 973.86,707.85 974.16,707.72 974.46,707.59 974.76,707.46 975.06,707.33 975.36,707.2 975.65,707.07 975.95,706.94 976.25,706.82 976.55,706.69 976.85,706.56 977.14,706.43 977.44,706.3 977.74,706.17 978.04,706.04 978.34,705.92 978.63,705.79 978.93,705.66 979.23,705.53 979.53,705.4 979.83,705.27 980.13,705.14 980.42,705.01 980.72,704.89 981.02,704.76 981.32,704.63 981.62,704.5 981.91,704.37 982.21,704.24 982.51,704.11 982.81,703.98 983.11,703.86 983.41,703.73 983.7,703.6 984,703.47 984.3,703.34 984.6,703.21 984.9,703.08 985.19,702.95 985.49,702.83 985.79,702.7 986.09,702.57 986.39,702.44 986.69,702.31 986.98,702.18 987.28,702.05 987.58,701.92 987.88,701.79 988.18,701.67 988.47,701.54 988.77,701.41 989.07,701.28 989.37,701.15 989.67,701.02 989.96,700.89 990.26,700.76 990.56,700.63 990.86,700.51 991.16,700.38 991.46,700.25 991.75,700.12 992.05,699.99 992.35,699.86 992.65,699.73 992.95,699.6 993.24,699.47 993.54,699.34 993.84,699.22 994.14,699.09 994.44,698.96 994.74,698.83 995.03,698.7 995.33,698.57 995.63,698.44 995.93,698.31 996.23,698.18 996.52,698.05 996.82,697.93 997.12,697.8 997.42,697.67 997.72,697.54 998.02,697.41 998.31,697.28 998.61,697.15 998.91,697.02 999.21,696.89 999.51,696.76 999.8,696.63 1000.1,696.5 1000.4,696.38 1000.7,696.25 1001,696.12 1001.29,695.99 1001.59,695.86 1001.89,695.73 1002.19,695.6 1002.49,695.47 1002.79,695.34 1003.08,695.21 1003.38,695.08 1003.68,694.95 1003.98,694.82 1004.28,694.7 1004.57,694.57 1004.87,694.44 1005.17,694.31 1005.47,694.18 1005.77,694.05 1006.07,693.92 1006.36,693.79 1006.66,693.66 1006.96,693.53 1007.26,693.4 1007.56,693.27 1007.85,693.14 1008.15,693.01 1008.45,692.88 1008.75,692.75 1009.05,692.62 1009.35,692.49 1009.64,692.37 1009.94,692.24 1010.24,692.11 1010.54,691.98 1010.84,691.85 1011.13,691.72 1011.43,691.59 1011.73,691.46 1012.03,691.33 1012.33,691.2 1012.62,691.07 1012.92,690.94 1013.22,690.81 1013.52,690.68 1013.82,690.55 1014.12,690.42 1014.41,690.29 1014.71,690.16 1015.01,690.03 1015.31,689.9 1015.61,689.77 1015.9,689.64 1016.2,689.51 1016.5,689.38 1016.8,689.25 1017.1,689.12 1017.4,688.99 1017.69,688.86 1017.99,688.73 1018.29,688.6 1018.59,688.47 1018.89,688.34 1019.18,688.21 1019.48,688.08 1019.78,687.95 1020.08,687.82 1020.38,687.69 1020.68,687.56 1020.97,687.43 1021.27,687.3 1021.57,687.17 1021.87,687.04 1022.17,686.91 1022.46,686.78 1022.76,686.65 1023.06,686.52 1023.36,686.39 1023.66,686.26 1023.95,686.13 1024.25,686 1024.55,685.87 1024.85,685.74 1025.15,685.61 1025.45,685.48 1025.74,685.34 1026.04,685.21 1026.34,685.08 1026.64,684.95 1026.94,684.82 1027.23,684.69 1027.53,684.56 1027.83,684.43 1028.13,684.3 1028.43,684.17 1028.73,684.04 1029.02,683.91 1029.32,683.78 1029.62,683.65 1029.92,683.51 1030.22,683.38 1030.51,683.25 1030.81,683.12 1031.11,682.99 1031.41,682.86 1031.71,682.73 1032.01,682.6 1032.3,682.47 1032.6,682.33 1032.9,682.2 1033.2,682.07 1033.5,681.94 1033.79,681.81 1034.09,681.68 1034.39,681.55 1034.69,681.42 1034.99,681.28 1035.29,681.15 1035.58,681.02 1035.88,680.89 1036.18,680.76 1036.48,680.63 1036.78,680.49 1037.07,680.36 1037.37,680.23 1037.67,680.1 1037.97,679.97 1038.27,679.84 1038.56,679.7 1038.86,679.57 1039.16,679.44 1039.46,679.31 1039.76,679.18 1040.06,679.04 1040.35,678.91 1040.65,678.78 1040.95,678.65 1041.25,678.51 1041.55,678.38 1041.84,678.25 1042.14,678.12 1042.44,677.98 1042.74,677.85 1043.04,677.72 1043.34,677.59 1043.63,677.45 1043.93,677.32 1044.23,677.19 1044.53,677.06 1044.83,676.92 1045.12,676.79 1045.42,676.66 1045.72,676.52 1046.02,676.39 1046.32,676.26 1046.62,676.12 1046.91,675.99 1047.21,675.86 1047.51,675.72 1047.81,675.59 1048.11,675.46 1048.4,675.32 1048.7,675.19 1049,675.06 1049.3,674.92 1049.6,674.79 1049.89,674.66 1050.19,674.52 1050.49,674.39 1050.79,674.25 1051.09,674.12 1051.39,673.99 1051.68,673.85 1051.98,673.72 1052.28,673.58 1052.58,673.45 1052.88,673.31 1053.17,673.18 1053.47,673.04 1053.77,672.91 1054.07,672.77 1054.37,672.64 1054.67,672.5 1054.96,672.37 1055.26,672.23 1055.56,672.1 1055.86,671.96 1056.16,671.83 1056.45,671.69 1056.75,671.56 1057.05,671.42 1057.35,671.29 1057.65,671.15 1057.95,671.02 1058.24,670.88 1058.54,670.74 1058.84,670.61 1059.14,670.47 1059.44,670.33 1059.73,670.2 1060.03,670.06 1060.33,669.93 1060.63,669.79 1060.93,669.65 1061.22,669.52 1061.52,669.38 1061.82,669.24 1062.12,669.1 1062.42,668.97 1062.72,668.83 1063.01,668.69 1063.31,668.55 1063.61,668.42 1063.91,668.28 1064.21,668.14 1064.5,668 1064.8,667.87 1065.1,667.73 1065.4,667.59 1065.7,667.45 1066,667.31 1066.29,667.17 1066.59,667.03 1066.89,666.9 1067.19,666.76 1067.49,666.62 1067.78,666.48 1068.08,666.34 1068.38,666.2 1068.68,666.06 1068.98,665.92 1069.28,665.78 1069.57,665.64 1069.87,665.5 1070.17,665.36 1070.47,665.22 1070.77,665.08 1071.06,664.94 1071.36,664.8 1071.66,664.66 1071.96,664.51 1072.26,664.37 1072.55,664.23 1072.85,664.09 1073.15,663.95 1073.45,663.81 1073.75,663.66 1074.05,663.52 1074.34,663.38 1074.64,663.24 1074.94,663.09 1075.24,662.95 1075.54,662.81 1075.83,662.66 1076.13,662.52 1076.43,662.38 1076.73,662.23 1077.03,662.09 1077.33,661.94 1077.62,661.8 1077.92,661.66 1078.22,661.51 1078.52,661.37 1078.82,661.22 1079.11,661.08 1079.41,660.93 1079.71,660.78 1080.01,660.64 1080.31,660.49 1080.61,660.35 1080.9,660.2 1081.2,660.05 1081.5,659.9 1081.8,659.76 1082.1,659.61 1082.39,659.46 1082.69,659.31 1082.99,659.17 1083.29,659.02 1083.59,658.87 1083.88,658.72 1084.18,658.57 1084.48,658.42 1084.78,658.27 1085.08,658.12 1085.38,657.97 1085.67,657.82 1085.97,657.67 1086.27,657.52 1086.57,657.37 1086.87,657.22 1087.16,657.06 1087.46,656.91 1087.76,656.76 1088.06,656.61 1088.36,656.45 1088.66,656.3 1088.95,656.15 1089.25,655.99 1089.55,655.84 1089.85,655.68 1090.15,655.53 1090.44,655.37 1090.74,655.22 1091.04,655.06 1091.34,654.91 1091.64,654.75 1091.94,654.59 1092.23,654.44 1092.53,654.28 1092.83,654.12 1093.13,653.96 1093.43,653.8 1093.72,653.64 1094.02,653.48 1094.32,653.32 1094.62,653.16 1094.92,653 1095.22,652.84 1095.51,652.68 1095.81,652.52 1096.11,652.36 1096.41,652.19 1096.71,652.03 1097,651.87 1097.3,651.7 1097.6,651.54 1097.9,651.37 1098.2,651.21 1098.49,651.04 1098.79,650.88 1099.09,650.71 1099.39,650.54 1099.69,650.37 1099.99,650.21 1100.28,650.04 1100.58,649.87 1100.88,649.7 1101.18,649.53 1101.48,649.36 1101.77,649.18 1102.07,649.01 1102.37,648.84 1102.67,648.67 1102.97,648.49 1103.27,648.32 1103.56,648.14 1103.86,647.97 1104.16,647.79 1104.46,647.61 1104.76,647.44 1105.05,647.26 1105.35,647.08 1105.65,646.9 1105.95,646.72 1106.25,646.54 1106.55,646.36 1106.84,646.17 1107.14,645.99 1107.44,645.81 1107.74,645.62 1108.04,645.44 1108.33,645.25 1108.63,645.06 1108.93,644.87 1109.23,644.69 1109.53,644.5 1109.82,644.31 1110.12,644.11 1110.42,643.92 1110.72,643.73 1111.02,643.54 1111.32,643.34 1111.61,643.15 1111.91,642.95 1112.21,642.75 1112.51,642.55 1112.81,642.35 1113.1,642.15 1113.4,641.95 1113.7,641.75 1114,641.54 1114.3,641.34 1114.6,641.13 1114.89,640.93 1115.19,640.72 1115.49,640.51 1115.79,640.3 1116.09,640.09 1116.38,639.87 1116.68,639.66 1116.98,639.44 1117.28,639.23 1117.58,639.01 1117.88,638.79 1118.17,638.57 1118.47,638.35 1118.77,638.12 1119.07,637.9 1119.37,637.67 1119.66,637.44 1119.96,637.21 1120.26,636.98 1120.56,636.75 1120.86,636.51 1121.15,636.28 1121.45,636.04 1121.75,635.8 1122.05,635.56 1122.35,635.31 1122.65,635.07 1122.94,634.82 1123.24,634.57 1123.54,634.32 1123.84,634.07 1124.14,633.81 1124.43,633.55 1124.73,633.3 1125.03,633.03 1125.33,632.77 1125.63,632.5 1125.93,632.23 1126.22,631.96 1126.52,631.69 1126.82,631.41 1127.12,631.14 1127.42,630.85 1127.71,630.57 1128.01,630.28 1128.31,629.99 1128.61,629.7 1128.91,629.4 1129.21,629.11 1129.5,628.8 1129.8,628.5 1130.1,628.19 1130.4,627.88 1130.7,627.56 1130.99,627.24 1131.29,626.92 1131.59,626.59 1131.89,626.26 1132.19,625.93 1132.48,625.59 1132.78,625.24 1133.08,624.9 1133.38,624.54 1133.68,624.19 1133.98,623.83 1134.27,623.46 1134.57,623.09 1134.87,622.71 1135.17,622.33 1135.47,621.94 1135.76,621.54 1136.06,621.14 1136.36,620.74 1136.66,620.32 1136.96,619.9 1137.26,619.47 1137.55,619.04 1137.85,618.6 1138.15,618.15 1138.45,617.69 1138.69,617.32 1138.71,617.28 1138.73,617.25 1138.75,617.22 1138.75,617.22 1138.77,617.19 1138.79,617.15 1138.81,617.12 1138.83,617.09 1138.85,617.05 1138.87,617.02 1138.89,616.99 1138.91,616.96 1138.94,616.92 1138.96,616.89 1138.98,616.86 1139,616.82 1139.02,616.79 1139.04,616.76 1139.04,616.75 1139.06,616.72 1139.08,616.69 1139.1,616.66 1139.12,616.62 1139.14,616.59 1139.16,616.56 1139.18,616.52 1139.2,616.49 1139.23,616.45 1139.25,616.42 1139.27,616.39 1139.29,616.35 1139.31,616.32 1139.33,616.29 1139.34,616.26 1139.35,616.25 1139.37,616.22 1139.39,616.18 1139.41,616.15 1139.43,616.12 1139.45,616.08 1139.47,616.05 1139.49,616.01 1139.52,615.98 1139.54,615.94 1139.56,615.91 1139.58,615.87 1139.6,615.84 1139.62,615.81 1139.64,615.77 1139.64,615.77 1139.66,615.74 1139.68,615.7 1139.7,615.67 1139.72,615.63 1139.74,615.6 1139.76,615.56 1139.78,615.53 1139.81,615.49 1139.83,615.46 1139.85,615.42 1139.87,615.39 1139.89,615.35 1139.91,615.32 1139.93,615.28 1139.94,615.26 1139.95,615.24 1139.97,615.21 1139.99,615.17 1140.01,615.14 1140.03,615.1 1140.05,615.07 1140.07,615.03 1140.1,615 1140.12,614.96 1140.14,614.92 1140.16,614.89 1140.18,614.85 1140.2,614.82 1140.22,614.78 1140.24,614.75 1140.24,614.74 1140.26,614.71 1140.28,614.67 1140.3,614.64 1140.32,614.6 1140.34,614.56 1140.36,614.53 1140.38,614.49 1140.41,614.45 1140.43,614.42 1140.45,614.38 1140.47,614.34 1140.49,614.31 1140.51,614.27 1140.53,614.23 1140.54,614.22 1140.55,614.2 1140.57,614.16 1140.59,614.12 1140.61,614.08 1140.63,614.05 1140.65,614.01 1140.67,613.97 1140.7,613.94 1140.72,613.9 1140.74,613.86 1140.76,613.82 1140.78,613.79 1140.8,613.75 1140.82,613.71 1140.83,613.69 1140.84,613.67 1140.86,613.64 1140.88,613.6 1140.9,613.56 1140.92,613.52 1140.94,613.48 1140.96,613.45 1140.99,613.41 1141.01,613.37 1141.03,613.33 1141.05,613.29 1141.07,613.25 1141.09,613.22 1141.11,613.18 1141.13,613.14 1141.13,613.14 1141.15,613.1 1141.17,613.06 1141.19,613.02 1141.21,612.98 1141.23,612.94 1141.25,612.91 1141.28,612.87 1141.3,612.83 1141.32,612.79 1141.34,612.75 1141.36,612.71 1141.38,612.67 1141.4,612.63 1141.42,612.59 1141.43,612.57 1141.44,612.55 1141.46,612.51 1141.48,612.47 1141.5,612.43 1141.52,612.39 1141.54,612.35 1141.57,612.31 1141.59,612.27 1141.61,612.23 1141.63,612.19 1141.65,612.15 1141.67,612.11 1141.69,612.07 1141.71,612.03 1141.73,612 1141.73,611.99 1141.75,611.95 1141.77,611.91 1141.79,611.87 1141.81,611.83 1141.83,611.79 1141.86,611.75 1141.88,611.71 1141.9,611.67 1141.92,611.63 1141.94,611.59 1141.96,611.54 1141.98,611.5 1142,611.46 1142.02,611.42 1142.03,611.41 1142.04,611.38 1142.06,611.34 1142.08,611.3 1142.1,611.25 1142.12,611.21 1142.15,611.17 1142.17,611.13 1142.19,611.09 1142.21,611.05 1142.23,611 1142.25,610.96 1142.27,610.92 1142.29,610.88 1142.31,610.83 1142.32,610.81 1142.33,610.79 1142.35,610.75 1142.37,610.71 1142.39,610.66 1142.41,610.62 1142.44,610.58 1142.46,610.54 1142.48,610.49 1142.5,610.45 1142.52,610.41 1142.54,610.36 1142.56,610.32 1142.58,610.28 1142.6,610.23 1142.62,610.19 1142.62,610.19 1142.64,610.15 1142.66,610.1 1142.68,610.06 1142.7,610.02 1142.73,609.97 1142.75,609.93 1142.77,609.88 1142.79,609.84 1142.81,609.79 1142.83,609.75 1142.85,609.71 1142.87,609.66 1142.89,609.62 1142.91,609.57 1142.92,609.55 1142.93,609.53 1142.95,609.48 1142.97,609.44 1142.99,609.39 1143.02,609.35 1143.04,609.3 1143.06,609.26 1143.08,609.21 1143.1,609.17 1143.12,609.12 1143.14,609.08 1143.16,609.03 1143.18,608.98 1143.2,608.94 1143.22,608.9 1143.22,608.89 1143.24,608.85 1143.26,608.8 1143.28,608.75 1143.31,608.71 1143.33,608.66 1143.35,608.62 1143.37,608.57 1143.39,608.52 1143.41,608.48 1143.43,608.43 1143.45,608.38 1143.47,608.34 1143.49,608.29 1143.51,608.24 1143.52,608.23 1143.53,608.19 1143.55,608.15 1143.57,608.1 1143.6,608.05 1143.62,608 1143.64,607.96 1143.66,607.91 1143.68,607.86 1143.7,607.81 1143.72,607.76 1143.74,607.72 1143.76,607.67 1143.78,607.62 1143.8,607.57 1143.82,607.54 1143.82,607.52 1143.84,607.47 1143.86,607.43 1143.89,607.38 1143.91,607.33 1143.93,607.28 1143.95,607.23 1143.97,607.18 1143.99,607.13 1144.01,607.08 1144.03,607.03 1144.05,606.98 1144.07,606.93 1144.09,606.88 1144.11,606.83 1144.11,606.83 1144.13,606.78 1144.15,606.73 1144.18,606.68 1144.2,606.63 1144.22,606.58 1144.24,606.53 1144.26,606.48 1144.28,606.43 1144.3,606.38 1144.32,606.33 1144.34,606.28 1144.36,606.22 1144.38,606.17 1144.4,606.12 1144.41,606.1 1144.42,606.07 1144.44,606.02 1144.47,605.97 1144.49,605.91 1144.51,605.86 1144.53,605.81 1144.55,605.76 1144.57,605.71 1144.59,605.65 1144.61,605.6 1144.63,605.55 1144.65,605.49 1144.67,605.44 1144.69,605.39 1144.71,605.35 1144.71,605.34 1144.73,605.28 1144.75,605.23 1144.78,605.17 1144.8,605.12 1144.82,605.07 1144.84,605.01 1144.86,604.96 1144.88,604.91 1144.9,604.85 1144.92,604.8 1144.94,604.74 1144.96,604.69 1144.98,604.63 1145,604.58 1145.01,604.57 1145.02,604.52 1145.04,604.47 1145.07,604.41 1145.09,604.36 1145.11,604.3 1145.13,604.25 1145.15,604.19 1145.17,604.13 1145.19,604.08 1145.21,604.02 1145.23,603.96 1145.25,603.91 1145.27,603.85 1145.29,603.79 1145.31,603.76 1145.31,603.74 1145.33,603.68 1145.36,603.62 1145.38,603.57 1145.4,603.51 1145.42,603.45 1145.44,603.39 1145.46,603.34 1145.48,603.28 1145.5,603.22 1145.52,603.16 1145.54,603.1 1145.56,603.04 1145.58,602.99 1145.6,602.93 1145.6,602.93 1145.62,602.87 1145.65,602.81 1145.67,602.75 1145.69,602.69 1145.71,602.63 1145.73,602.57 1145.75,602.51 1145.77,602.45 1145.79,602.39 1145.81,602.33 1145.83,602.27 1145.85,602.21 1145.87,602.15 1145.89,602.09 1145.9,602.06 1145.91,602.03 1145.94,601.96 1145.96,601.9 1145.98,601.84 1146,601.78 1146.02,601.72 1146.04,601.66 1146.06,601.59 1146.08,601.53 1146.1,601.47 1146.12,601.41 1146.14,601.34 1146.16,601.28 1146.18,601.22 1146.2,601.17 1146.2,601.15 1146.23,601.09 1146.25,601.03 1146.27,600.96 1146.29,600.9 1146.31,600.83 1146.33,600.77 1146.35,600.7 1146.37,600.64 1146.39,600.57 1146.41,600.51 1146.43,600.44 1146.45,600.38 1146.47,600.31 1146.49,600.25 1146.5,600.24 1146.52,600.18 1146.54,600.11 1146.56,600.05 1146.58,599.98 1146.6,599.92 1146.62,599.85 1146.64,599.78 1146.66,599.71 1146.68,599.65 1146.7,599.58 1146.72,599.51 1146.74,599.44 1146.76,599.37 1146.78,599.31 1146.8,599.27 1146.81,599.24 1146.83,599.17 1146.85,599.1 1146.87,599.03 1146.89,598.96 1146.91,598.89 1146.93,598.82 1146.95,598.75 1146.97,598.68 1146.99,598.61 1147.01,598.54 1147.03,598.47 1147.05,598.4 1147.07,598.32 1147.09,598.25 1147.1,598.25 1147.12,598.18 1147.14,598.11 1147.16,598.04 1147.18,597.96 1147.2,597.89 1147.22,597.82 1147.24,597.74 1147.26,597.67 1147.28,597.6 1147.3,597.52 1147.32,597.45 1147.34,597.37 1147.36,597.3 1147.39,597.23 1147.39,597.2 1147.41,597.15 1147.43,597.07 1147.45,597 1147.47,596.92 1147.49,596.85 1147.51,596.77 1147.53,596.69 1147.55,596.62 1147.57,596.54 1147.59,596.46 1147.61,596.39 1147.63,596.31 1147.65,596.23 1147.68,596.15 1147.69,596.09 1147.7,596.07 1147.72,595.99 1147.74,595.92 1147.76,595.84 1147.78,595.76 1147.8,595.68 1147.82,595.6 1147.84,595.52 1147.86,595.43 1147.88,595.35 1147.9,595.27 1147.92,595.19 1147.94,595.11 1147.97,595.03 1147.99,594.94 1147.99,594.93 1148.01,594.86 1148.03,594.78 1148.05,594.7 1148.07,594.61 1148.09,594.53 1148.11,594.44 1148.13,594.36 1148.15,594.27 1148.17,594.19 1148.19,594.1 1148.21,594.02 1148.23,593.93 1148.26,593.85 1148.28,593.76 1148.29,593.71 1148.3,593.67 1148.32,593.58 1148.34,593.5 1148.36,593.41 1148.38,593.32 1148.4,593.23 1148.42,593.14 1148.44,593.05 1148.46,592.96 1148.48,592.87 1148.5,592.78 1148.52,592.69 1148.55,592.6 1148.57,592.51 1148.59,592.42 1148.59,592.42 1148.61,592.33 1148.63,592.23 1148.65,592.14 1148.67,592.05 1148.69,591.95 1148.71,591.86 1148.73,591.77 1148.75,591.67 1148.77,591.58 1148.79,591.48 1148.81,591.38 1148.84,591.29 1148.86,591.19 1148.88,591.09 1148.88,591.06 1148.9,591 1148.92,590.9 1148.94,590.8 1148.96,590.7 1148.98,590.6 1149,590.5 1149.02,590.4 1149.04,590.3 1149.06,590.2 1149.08,590.1 1149.1,590 1149.13,589.9 1149.15,589.79 1149.17,589.69 1149.18,589.61 1149.19,589.59 1149.21,589.48 1149.23,589.38 1149.25,589.28 1149.27,589.17 1149.29,589.06 1149.31,588.96 1149.33,588.85 1149.35,588.74 1149.37,588.64 1149.39,588.53 1149.41,588.42 1149.44,588.31 1149.46,588.2 1149.48,588.09 1149.48,588.07 1149.5,587.98 1149.52,587.87 1149.54,587.76 1149.56,587.64 1149.58,587.53 1149.6,587.42 1149.62,587.3 1149.64,587.19 1149.66,587.07 1149.68,586.96 1149.7,586.84 1149.73,586.72 1149.75,586.61 1149.77,586.49 1149.78,586.42 1149.79,586.37 1149.81,586.25 1149.83,586.13 1149.85,586.01 1149.87,585.89 1149.89,585.77 1149.91,585.65 1149.93,585.52 1149.95,585.4 1149.97,585.27 1149.99,585.15 1150.02,585.02 1150.04,584.9 1150.06,584.77 1150.08,584.65 1150.08,584.64 1150.1,584.51 1150.12,584.39 1150.14,584.26 1150.16,584.13 1150.18,583.99 1150.2,583.86 1150.22,583.73 1150.24,583.6 1150.26,583.46 1150.28,583.33 1150.31,583.19 1150.33,583.05 1150.35,582.92 1150.37,582.78 1150.37,582.73 1150.39,582.64 1150.41,582.5 1150.43,582.36 1150.45,582.22 1150.47,582.08 1150.49,581.93 1150.51,581.79 1150.53,581.64 1150.55,581.5 1150.57,581.35 1150.6,581.2 1150.62,581.05 1150.64,580.9 1150.66,580.75 1150.67,580.64 1150.68,580.6 1150.7,580.45 1150.72,580.3 1150.74,580.14 1150.76,579.99 1150.78,579.83 1150.8,579.67 1150.82,579.51 1150.84,579.35 1150.86,579.19 1150.89,579.03 1150.91,578.87 1150.93,578.7 1150.95,578.54 1150.97,578.37 1150.97,578.35 1150.99,578.2 1151.01,578.03 1151.03,577.86 1151.05,577.69 1151.07,577.52 1151.09,577.35 1151.11,577.17 1151.13,576.99 1151.15,576.82 1151.18,576.64 1151.2,576.46 1151.22,576.28 1151.24,576.09 1151.26,575.91 1151.27,575.81 1151.28,575.72 1151.3,575.53 1151.32,575.34 1151.34,575.15 1151.36,574.96 1151.38,574.77 1151.4,574.57 1151.42,574.37 1151.44,574.18 1151.47,573.97 1151.49,573.77 1151.51,573.57 1151.53,573.36 1151.55,573.16 1151.57,572.96 1151.57,572.95 1151.59,572.74 1151.61,572.52 1151.63,572.31 1151.65,572.09 1151.67,571.87 1151.69,571.65 1151.71,571.43 1151.73,571.2 1151.76,570.97 1151.78,570.74 1151.8,570.51 1151.82,570.28 1151.84,570.04 1151.86,569.8 1151.87,569.73 1151.88,569.56 1151.9,569.32 1151.92,569.07 1151.94,568.82 1151.96,568.57 1151.98,568.32 1152,568.06 1152.02,567.8 1152.05,567.54 1152.07,567.28 1152.09,567.01 1152.11,566.74 1152.13,566.46 1152.15,566.18 1152.16,565.99 1152.17,565.9 1152.19,565.62 1152.21,565.33 1152.23,565.04 1152.25,564.75 1152.27,564.45 1152.29,564.15 1152.31,563.84 1152.34,563.53 1152.36,563.22 1152.38,562.9 1152.4,562.58 1152.42,562.25 1152.44,561.92 1152.46,561.59 1152.46,561.56 1152.48,561.25 1152.5,560.91 1152.52,560.56 1152.54,560.2 1152.56,559.84 1152.58,559.48 1152.6,559.11 1152.63,558.73 1152.65,558.35 1152.67,557.97 1152.69,557.57 1152.71,557.17 1152.73,556.77 1152.75,556.36 1152.76,556.15 1152.77,555.94 1152.79,555.51 1152.81,555.08 1152.83,554.64 1152.85,554.19 1152.87,553.73 1152.89,553.27 1152.92,552.8 1152.94,552.31 1152.96,551.82 1152.98,551.33 1153,550.82 1153.02,550.3 1153.04,549.77 1153.06,549.29 1153.06,549.23 1153.08,548.68 1153.1,548.12 1153.12,547.55 1153.14,546.97 1153.16,546.38 1153.18,545.77 1153.21,545.16 1153.23,544.53 1153.25,543.89 1153.27,543.23 1153.29,542.57 1153.31,541.89 1153.33,541.2 1153.35,540.49 1153.36,540.29 1153.37,539.78 1153.39,539.05 1153.41,538.32 1153.43,537.57 1153.45,536.82 1153.47,536.06 1153.5,535.3 1153.52,534.54 1153.54,533.79 1153.56,533.04 1153.58,532.3 1153.6,531.58 1153.62,530.89 1153.64,530.23 1153.65,529.8 1153.66,529.61 1153.68,529.05 1153.7,528.54 1153.72,528.1 1153.74,527.75 1153.76,527.47 1153.79,527.3 1153.81,527.21 1153.83,527.23 1153.85,527.35 1153.87,527.56 1153.89,527.87 1153.91,528.26 1153.93,528.72 1153.95,529.25 1153.95,529.29 1153.97,529.83 1153.99,530.47 1154.01,531.14 1154.03,531.84 1154.05,532.57 1154.07,533.31 1154.1,534.06 1154.12,534.82 1154.14,535.58 1154.16,536.34 1154.18,537.1 1154.2,537.85 1154.22,538.59 1154.24,539.32 1154.25,539.67 1154.26,540.04 1154.28,540.75 1154.3,541.45 1154.32,542.14 1154.34,542.81 1154.36,543.47 1154.39,544.12 1154.41,544.76 1154.43,545.38 1154.45,546 1154.47,546.6 1154.49,547.19 1154.51,547.76 1154.53,548.33 1154.55,548.82 1154.55,548.89 1154.57,549.43 1154.59,549.97 1154.61,550.49 1154.63,551 1154.65,551.51 1154.68,552 1154.7,552.49 1154.72,552.97 1154.74,553.44 1154.76,553.9 1154.78,554.35 1154.8,554.8 1154.82,555.24 1154.84,555.67 1154.85,555.78 1154.86,556.09 1154.88,556.51 1154.9,556.92 1154.92,557.32 1154.94,557.72 1154.97,558.11 1154.99,558.49 1155.01,558.87 1155.03,559.25 1155.05,559.61 1155.07,559.98 1155.09,560.33 1155.11,560.69 1155.13,561.03 1155.15,561.26 1155.15,561.38 1155.17,561.71 1155.19,562.05 1155.21,562.37 1155.23,562.7 1155.26,563.02 1155.28,563.33 1155.3,563.65 1155.32,563.95 1155.34,564.26 1155.36,564.56 1155.38,564.86 1155.4,565.15 1155.42,565.44 1155.44,565.72 1155.44,565.74 1155.46,566.01 1155.48,566.29 1155.5,566.56 1155.52,566.84 1155.55,567.11 1155.57,567.37 1155.59,567.64 1155.61,567.9 1155.63,568.16 1155.65,568.41 1155.67,568.67 1155.69,568.92 1155.71,569.16 1155.73,569.41 1155.74,569.52 1155.75,569.65 1155.77,569.89 1155.79,570.13 1155.81,570.37 1155.84,570.6 1155.86,570.83 1155.88,571.06 1155.9,571.28 1155.92,571.51 1155.94,571.73 1155.96,571.95 1155.98,572.17 1156,572.39 1156.02,572.6 1156.04,572.78 1156.04,572.81 1156.06,573.02 1156.08,573.23 1156.1,573.44 1156.13,573.64 1156.15,573.85 1156.17,574.05 1156.19,574.25 1156.21,574.45 1156.23,574.64 1156.25,574.84 1156.27,575.03 1156.29,575.22 1156.31,575.41 1156.33,575.6 1156.34,575.65 1156.35,575.79 1156.37,575.97 1156.39,576.16 1156.42,576.34 1156.44,576.52 1156.46,576.7 1156.48,576.88 1156.5,577.06 1156.52,577.24 1156.54,577.41 1156.56,577.58 1156.58,577.76 1156.6,577.93 1156.62,578.1 1156.64,578.21 1156.64,578.27 1156.66,578.43 1156.68,578.6 1156.71,578.76 1156.73,578.93 1156.75,579.09 1156.77,579.25 1156.79,579.41 1156.81,579.57 1156.83,579.73 1156.85,579.89 1156.87,580.04 1156.89,580.2 1156.91,580.35 1156.93,580.51 1156.93,580.51 1156.95,580.66 1156.97,580.81 1157,580.96 1157.02,581.11 1157.04,581.26 1157.06,581.4 1157.08,581.55 1157.1,581.7 1157.12,581.84 1157.14,581.98 1157.16,582.13 1157.18,582.27 1157.2,582.41 1157.22,582.55 1157.23,582.61 1157.24,582.69 1157.26,582.83 1157.29,582.97 1157.31,583.1 1157.33,583.24 1157.35,583.38 1157.37,583.51 1157.39,583.64 1157.41,583.78 1157.43,583.91 1157.45,584.04 1157.47,584.17 1157.49,584.3 1157.51,584.43 1157.53,584.54 1157.53,584.56 1157.55,584.69 1157.58,584.82 1157.6,584.94 1157.62,585.07 1157.64,585.2 1157.66,585.32 1157.68,585.44 1157.7,585.57 1157.72,585.69 1157.74,585.81 1157.76,585.93 1157.78,586.05 1157.8,586.17 1157.82,586.29 1157.83,586.32 1157.84,586.41 1157.87,586.53 1157.89,586.65 1157.91,586.77 1157.93,586.88 1157.95,587 1157.97,587.12 1157.99,587.23 1158.01,587.34 1158.03,587.46 1158.05,587.57 1158.07,587.68 1158.09,587.8 1158.11,587.91 1158.13,587.98 1158.13,588.02 1158.16,588.13 1158.18,588.24 1158.2,588.35 1158.22,588.46 1158.24,588.57 1158.26,588.68 1158.28,588.78 1158.3,588.89 1158.32,589 1158.34,589.1 1158.36,589.21 1158.38,589.31 1158.4,589.42 1158.42,589.52 1158.42,589.53 1158.44,589.63 1158.47,589.73 1158.49,589.83 1158.51,589.94 1158.53,590.04 1158.55,590.14 1158.57,590.24 1158.59,590.34 1158.61,590.44 1158.63,590.54 1158.65,590.64 1158.67,590.74 1158.69,590.84 1158.71,590.94 1158.72,590.98 1158.73,591.03 1158.76,591.13 1158.78,591.23 1158.8,591.32 1158.82,591.42 1158.84,591.52 1158.86,591.61 1158.88,591.71 1158.9,591.8 1158.92,591.89 1158.94,591.99 1158.96,592.08 1158.98,592.18 1159,592.27 1159.02,592.34 1159.02,592.36 1159.05,592.45 1159.07,592.54 1159.09,592.64 1159.11,592.73 1159.13,592.82 1159.15,592.91 1159.17,593 1159.19,593.09 1159.21,593.18 1159.23,593.26 1159.25,593.35 1159.27,593.44 1159.29,593.53 1159.31,593.62 1159.32,593.64 1159.34,593.7 1159.36,593.79 1159.38,593.88 1159.4,593.96 1159.42,594.05 1159.44,594.14 1159.46,594.22 1159.48,594.31 1159.5,594.39 1159.52,594.47 1159.54,594.56 1159.56,594.64 1159.58,594.73 1159.6,594.81 1159.62,594.86 1159.63,594.89 1159.65,594.97 1159.67,595.06 1159.69,595.14 1159.71,595.22 1159.73,595.3 1159.75,595.38 1159.77,595.46 1159.79,595.55 1159.81,595.63 1159.83,595.71 1159.85,595.79 1159.87,595.87 1159.89,595.94 1159.92,596.02 1159.92,596.02 1159.94,596.1 1159.96,596.18 1159.98,596.26 1160,596.34 1160.02,596.41 1160.04,596.49 1160.06,596.57 1160.08,596.65 1160.1,596.72 1160.12,596.8 1160.14,596.88 1160.16,596.95 1160.18,597.03 1160.21,597.1 1160.21,597.13 1160.23,597.18 1160.25,597.25 1160.27,597.33 1160.29,597.4 1160.31,597.48 1160.33,597.55 1160.35,597.62 1160.37,597.7 1160.39,597.77 1160.41,597.84 1160.43,597.92 1160.45,597.99 1160.47,598.06 1160.5,598.14 1160.51,598.19 1160.52,598.21 1160.54,598.28 1160.56,598.35 1160.58,598.42 1160.6,598.49 1160.62,598.56 1160.64,598.63 1160.66,598.71 1160.68,598.78 1160.7,598.85 1160.72,598.92 1160.74,598.99 1160.76,599.05 1160.79,599.12 1160.81,599.19 1160.81,599.21 1160.83,599.26 1160.85,599.33 1160.87,599.4 1160.89,599.47 1160.91,599.54 1160.93,599.6 1160.95,599.67 1160.97,599.74 1160.99,599.81 1161.01,599.87 1161.03,599.94 1161.05,600.01 1161.08,600.07 1161.1,600.14 1161.11,600.18 1161.12,600.21 1161.14,600.27 1161.16,600.34 1161.18,600.4 1161.2,600.47 1161.22,600.53 1161.24,600.6 1161.26,600.66 1161.28,600.73 1161.3,600.79 1161.32,600.86 1161.34,600.92 1161.37,600.99 1161.39,601.05 1161.41,601.11 1161.41,601.11 1161.43,601.18 1161.45,601.24 1161.47,601.3 1161.49,601.37 1161.51,601.43 1161.53,601.49 1161.55,601.55 1161.57,601.62 1161.59,601.68 1161.61,601.74 1161.63,601.8 1161.66,601.86 1161.68,601.93 1161.7,601.99 1161.7,602.01 1161.72,602.05 1161.74,602.11 1161.76,602.17 1161.78,602.23 1161.8,602.29 1161.82,602.35 1161.84,602.41 1161.86,602.47 1161.88,602.53 1161.9,602.59 1161.92,602.65 1161.95,602.71 1161.97,602.77 1161.99,602.83 1162,602.88 1162.01,602.89 1162.03,602.95 1162.05,603.01 1162.07,603.07 1162.09,603.13 1162.11,603.18 1162.13,603.24 1162.15,603.3 1162.17,603.36 1162.19,603.42 1162.21,603.47 1162.24,603.53 1162.26,603.59 1162.28,603.65 1162.3,603.7 1162.3,603.71 1162.32,603.76 1162.34,603.82 1162.36,603.87 1162.38,603.93 1162.4,603.99 1162.42,604.04 1162.44,604.1 1162.46,604.15 1162.48,604.21 1162.5,604.27 1162.53,604.32 1162.55,604.38 1162.57,604.43 1162.59,604.49 1162.6,604.52 1162.61,604.54 1162.63,604.6 1162.65,604.65 1162.67,604.71 1162.69,604.76 1162.71,604.82 1162.73,604.87 1162.75,604.93 1162.77,604.98 1162.79,605.03 1162.82,605.09 1162.84,605.14 1162.86,605.2 1162.88,605.25 1162.9,605.3 1162.9,605.3 1162.92,605.36 1162.94,605.41 1162.96,605.46 1162.98,605.51 1163,605.57 1163.02,605.62 1163.04,605.67 1163.06,605.72 1163.08,605.78 1163.1,605.83 1163.13,605.88 1163.15,605.93 1163.17,605.99 1163.19,606.04 1163.2,606.06 1163.21,606.09 1163.23,606.14 1163.25,606.19 1163.27,606.24 1163.29,606.29 1163.31,606.35 1163.33,606.4 1163.35,606.45 1163.37,606.5 1163.39,606.55 1163.42,606.6 1163.44,606.65 1163.46,606.7 1163.48,606.75 1163.49,606.79 1163.5,606.8 1163.52,606.85 1163.54,606.9 1163.56,606.95 1163.58,607 1163.6,607.05 1163.62,607.1 1163.64,607.15 1163.66,607.2 1163.68,607.25 1163.71,607.3 1163.73,607.35 1163.75,607.4 1163.77,607.44 1163.79,607.49 1163.79,607.5 1163.81,607.54 1163.83,607.59 1163.85,607.64 1163.87,607.69 1163.89,607.73 1163.91,607.78 1163.93,607.83 1163.95,607.88 1163.97,607.93 1164,607.97 1164.02,608.02 1164.04,608.07 1164.06,608.12 1164.08,608.16 1164.09,608.19 1164.1,608.21 1164.12,608.26 1164.14,608.31 1164.16,608.35 1164.18,608.4 1164.2,608.45 1164.22,608.49 1164.24,608.54 1164.26,608.59 1164.29,608.63 1164.31,608.68 1164.33,608.73 1164.35,608.77 1164.37,608.82 1164.39,608.86 1164.39,608.86 1164.41,608.91 1164.43,608.96 1164.45,609 1164.47,609.05 1164.49,609.09 1164.51,609.14 1164.53,609.18 1164.55,609.23 1164.58,609.28 1164.6,609.32 1164.62,609.37 1164.64,609.41 1164.66,609.46 1164.68,609.5 1164.69,609.52 1164.7,609.54 1164.72,609.59 1164.74,609.63 1164.76,609.68 1164.78,609.72 1164.8,609.77 1164.82,609.81 1164.84,609.86 1164.87,609.9 1164.89,609.94 1164.91,609.99 1164.93,610.03 1164.95,610.08 1164.97,610.12 1164.98,610.15 1164.99,610.16 1165.01,610.21 1165.03,610.25 1165.05,610.29 1165.07,610.34 1165.09,610.38 1165.11,610.42 1165.13,610.47 1165.16,610.51 1165.18,610.55 1165.2,610.6 1165.22,610.64 1165.24,610.68 1165.26,610.72 1165.28,610.77 1165.28,610.77 1165.3,610.81 1165.32,610.85 1165.34,610.89 1165.36,610.94 1165.38,610.98 1165.4,611.02 1165.42,611.06 1165.45,611.1 1165.47,611.15 1165.49,611.19 1165.51,611.23 1165.53,611.27 1165.55,611.31 1165.57,611.35 1165.58,611.38 1165.59,611.4 1165.61,611.44 1165.63,611.48 1165.65,611.52 1165.67,611.56 1165.69,611.6 1165.71,611.64 1165.74,611.68 1165.76,611.72 1165.78,611.77 1165.8,611.81 1165.82,611.85 1165.84,611.89 1165.86,611.93 1165.88,611.97 1165.88,611.97 1165.9,612.01 1165.92,612.05 1165.94,612.09 1165.96,612.13 1165.98,612.17 1166,612.21 1166.03,612.25 1166.05,612.29 1166.07,612.33 1166.09,612.37 1166.11,612.41 1166.13,612.45 1166.15,612.49 1166.17,612.53 1166.18,612.54 1166.19,612.57 1166.21,612.61 1166.23,612.65 1166.25,612.69 1166.27,612.73 1166.29,612.76 1166.32,612.8 1166.34,612.84 1166.36,612.88 1166.38,612.92 1166.4,612.96 1166.42,613 1166.44,613.04 1166.46,613.08 1166.48,613.1 1166.48,613.12 1166.5,613.15 1166.52,613.19 1166.54,613.23 1166.56,613.27 1166.58,613.31 1166.61,613.35 1166.63,613.38 1166.65,613.42 1166.67,613.46 1166.69,613.5 1166.71,613.54 1166.73,613.57 1166.75,613.61 1166.77,613.65 1166.77,613.65 1166.79,613.69 1166.81,613.73 1166.83,613.76 1166.85,613.8 1166.87,613.84 1166.9,613.88 1166.92,613.91 1166.94,613.95 1166.96,613.99 1166.98,614.02 1167,614.06 1167.02,614.1 1167.04,614.14 1167.06,614.17 1167.07,614.19 1167.08,614.21 1167.1,614.25 1167.12,614.28 1167.14,614.32 1167.16,614.36 1167.19,614.39 1167.21,614.43 1167.23,614.47 1167.25,614.5 1167.27,614.54 1167.29,614.58 1167.31,614.61 1167.33,614.65 1167.35,614.69 1167.37,614.72 1167.37,614.72 1167.39,614.76 1167.41,614.79 1167.43,614.83 1167.45,614.87 1167.47,614.9 1167.5,614.94 1167.52,614.97 1167.54,615.01 1167.56,615.05 1167.58,615.08 1167.6,615.12 1167.62,615.15 1167.64,615.19 1167.66,615.22 1167.67,615.23 1167.68,615.26 1167.7,615.29 1167.72,615.33 1167.74,615.36 1167.76,615.4 1167.79,615.44 1167.81,615.47 1167.83,615.51 1167.85,615.54 1167.87,615.58 1167.89,615.61 1167.91,615.65 1167.93,615.68 1167.95,615.71 1167.97,615.74 1167.97,615.75 1167.99,615.78 1168.01,615.82 1168.03,615.85 1168.05,615.89 1168.08,615.92 1168.1,615.96 1168.12,615.99 1168.14,616.03 1168.16,616.06 1168.18,616.09 1168.2,616.13 1168.22,616.16 1168.24,616.2 1168.26,616.23 1168.26,616.23 1168.28,616.26 1168.3,616.3 1168.32,616.33 1168.34,616.37 1168.37,616.4 1168.39,616.43 1168.41,616.47 1168.43,616.5 1168.45,616.54 1168.47,616.57 1168.49,616.6 1168.51,616.64 1168.53,616.67 1168.55,616.7 1168.56,616.72 1168.57,616.74 1168.59,616.77 1168.61,616.8 1168.63,616.84 1168.66,616.87 1168.68,616.9 1168.7,616.94 1168.72,616.97 1168.74,617 1168.76,617.03 1168.78,617.07 1168.8,617.1 1168.82,617.13 1168.84,617.17 1168.86,617.2 1168.86,617.2 1168.88,617.23 1168.9,617.26 1168.92,617.3 1168.95,617.33 1168.97,617.36 1168.99,617.39 1169.01,617.43 1169.03,617.46 1169.05,617.49 1169.07,617.52 1169.09,617.56 1169.11,617.59 1169.13,617.62 1169.15,617.65 1169.16,617.66 1169.17,617.69 1169.19,617.72 1169.21,617.75 1169.24,617.78 1169.26,617.81 1169.28,617.85 1169.3,617.88 1169.32,617.91 1169.34,617.94 1169.36,617.97 1169.38,618 1169.4,618.04 1169.42,618.07 1169.44,618.1 1169.46,618.12 1169.46,618.13 1169.48,618.16 1169.5,618.19 1169.53,618.23 1169.55,618.26 1169.57,618.29 1169.59,618.32 1169.61,618.35 1169.63,618.38 1169.65,618.41 1169.67,618.45 1169.69,618.48 1169.71,618.51 1169.73,618.54 1169.75,618.57 1170.05,619.01 1170.35,619.45 1170.65,619.88 1170.95,620.3 1171.25,620.71 1171.54,621.12 1171.84,621.52 1172.14,621.92 1172.44,622.3 1172.74,622.69 1173.03,623.07 1173.33,623.44 1173.63,623.81 1173.93,624.17 1174.23,624.52 1174.53,624.88 1174.82,625.23 1175.12,625.57 1175.42,625.91 1175.72,626.24 1176.02,626.57 1176.31,626.9 1176.61,627.22 1176.91,627.54 1177.21,627.86 1177.51,628.17 1177.81,628.48 1178.1,628.79 1178.4,629.09 1178.7,629.39 1179,629.68 1179.3,629.98 1179.59,630.27 1179.89,630.55 1180.19,630.84 1180.49,631.12 1180.79,631.4 1181.08,631.68 1181.38,631.95 1181.68,632.22 1181.98,632.49 1182.28,632.76 1182.58,633.02 1182.87,633.28 1183.17,633.54 1183.47,633.8 1183.77,634.05 1184.07,634.31 1184.36,634.56 1184.66,634.81 1184.96,635.06 1185.26,635.3 1185.56,635.54 1185.86,635.79 1186.15,636.03 1186.45,636.26 1186.75,636.5 1187.05,636.74 1187.35,636.97 1187.64,637.2 1187.94,637.43 1188.24,637.66 1188.54,637.89 1188.84,638.11 1189.14,638.33 1189.43,638.56 1189.73,638.78 1190.03,639 1190.33,639.22 1190.63,639.43 1190.92,639.65 1191.22,639.86 1191.52,640.08 1191.82,640.29 1192.12,640.5 1192.41,640.71 1192.71,640.92 1193.01,641.12 1193.31,641.33 1193.61,641.54 1193.91,641.74 1194.2,641.94 1194.5,642.14 1194.8,642.34 1195.1,642.54 1195.4,642.74 1195.69,642.94 1195.99,643.14 1196.29,643.33 1196.59,643.53 1196.89,643.72 1197.19,643.92 1197.48,644.11 1197.78,644.3 1198.08,644.49 1198.38,644.68 1198.68,644.87 1198.97,645.06 1199.27,645.24 1199.57,645.43 1199.87,645.61 1200.17,645.8 1200.47,645.98 1200.76,646.17 1201.06,646.35 1201.36,646.53 1201.66,646.71 1201.96,646.89 1202.25,647.07 1202.55,647.25 1202.85,647.43 1203.15,647.61 1203.45,647.78 1203.75,647.96 1204.04,648.14 1204.34,648.31 1204.64,648.49 1204.94,648.66 1205.24,648.83 1205.53,649.01 1205.83,649.18 1206.13,649.35 1206.43,649.52 1206.73,649.69 1207.02,649.86 1207.32,650.03 1207.62,650.2 1207.92,650.37 1208.22,650.54 1208.52,650.71 1208.81,650.87 1209.11,651.04 1209.41,651.21 1209.71,651.37 1210.01,651.54 1210.3,651.7 1210.6,651.86 1210.9,652.03 1211.2,652.19 1211.5,652.35 1211.8,652.52 1212.09,652.68 1212.39,652.84 1212.69,653 1212.99,653.16 1213.29,653.32 1213.58,653.48 1213.88,653.64 1214.18,653.8 1214.48,653.96 1214.78,654.12 1215.08,654.28 1215.37,654.44 1215.67,654.59 1215.97,654.75 1216.27,654.91 1216.57,655.06 1216.86,655.22 1217.16,655.37 1217.46,655.53 1217.76,655.68 1218.06,655.84 1218.35,655.99 1218.65,656.15 1218.95,656.3 1219.25,656.45 1219.55,656.61 1219.85,656.76 1220.14,656.91 1220.44,657.07 1220.74,657.22 1221.04,657.37 1221.34,657.52 1221.63,657.67 1221.93,657.82 1222.23,657.97 1222.53,658.12 1222.83,658.27 1223.13,658.42 1223.42,658.57 1223.72,658.72 1224.02,658.87 1224.32,659.02 1224.62,659.17 1224.91,659.32 1225.21,659.47 1225.51,659.61 1225.81,659.76 1226.11,659.91 1226.41,660.06 1226.7,660.2 1227,660.35 1227.3,660.5 1227.6,660.64 1227.9,660.79 1228.19,660.93 1228.49,661.08 1228.79,661.23 1229.09,661.37 1229.39,661.52 1229.68,661.66 1229.98,661.81 1230.28,661.95 1230.58,662.1 1230.88,662.24 1231.18,662.38 1231.47,662.53 1231.77,662.67 1232.07,662.81 1232.37,662.96 1232.67,663.1 1232.96,663.24 1233.26,663.39 1233.56,663.53 1233.86,663.67 1234.16,663.81 1234.46,663.96 1234.75,664.1 1235.05,664.24 1235.35,664.38 1235.65,664.52 1235.95,664.66 1236.24,664.81 1236.54,664.95 1236.84,665.09 1237.14,665.23 1237.44,665.37 1237.74,665.51 1238.03,665.65 1238.33,665.79 1238.63,665.93 1238.93,666.07 1239.23,666.21 1239.52,666.35 1239.82,666.49 1240.12,666.63 1240.42,666.77 1240.72,666.91 1241.01,667.05 1241.31,667.19 1241.61,667.33 1241.91,667.46 1242.21,667.6 1242.51,667.74 1242.8,667.88 1243.1,668.02 1243.4,668.16 1243.7,668.29 1244,668.43 1244.29,668.57 1244.59,668.71 1244.89,668.85 1245.19,668.98 1245.49,669.12 1245.79,669.26 1246.08,669.4 1246.38,669.53 1246.68,669.67 1246.98,669.81 1247.28,669.94 1247.57,670.08 1247.87,670.22 1248.17,670.35 1248.47,670.49 1248.77,670.63 1249.07,670.76 1249.36,670.9 1249.66,671.04 1249.96,671.17 1250.26,671.31 1250.56,671.45 1250.85,671.58 1251.15,671.72 1251.45,671.85 1251.75,671.99 1252.05,672.12 1252.34,672.26 1252.64,672.4 1252.94,672.53 1253.24,672.67 1253.54,672.8 1253.84,672.94 1254.13,673.07 1254.43,673.21 1254.73,673.34 1255.03,673.48 1255.33,673.61 1255.62,673.75 1255.92,673.88 1256.22,674.02 1256.52,674.15 1256.82,674.28 1257.12,674.42 1257.41,674.55 1257.71,674.69 1258.01,674.82 1258.31,674.96 1258.61,675.09 1258.9,675.22 1259.2,675.36 1259.5,675.49 1259.8,675.63 1260.1,675.76 1260.4,675.89 1260.69,676.03 1260.99,676.16 1261.29,676.3 1261.59,676.43 1261.89,676.56 1262.18,676.7 1262.48,676.83 1262.78,676.96 1263.08,677.1 1263.38,677.23 1263.68,677.36 1263.97,677.5 1264.27,677.63 1264.57,677.76 1264.87,677.9 1265.17,678.03 1265.46,678.16 1265.76,678.3 1266.06,678.43 1266.36,678.56 1266.66,678.69 1266.95,678.83 1267.25,678.96 1267.55,679.09 1267.85,679.23 1268.15,679.36 1268.45,679.49 1268.74,679.62 1269.04,679.76 1269.34,679.89 1269.64,680.02 1269.94,680.15 1270.23,680.29 1270.53,680.42 1270.83,680.55 1271.13,680.68 1271.43,680.82 1271.73,680.95 1272.02,681.08 1272.32,681.21 1272.62,681.35 1272.92,681.48 1273.22,681.61 1273.51,681.74 1273.81,681.88 1274.11,682.01 1274.41,682.14 1274.71,682.27 1275.01,682.4 1275.3,682.54 1275.6,682.67 1275.9,682.8 1276.2,682.93 1276.5,683.06 1276.79,683.2 1277.09,683.33 1277.39,683.46 1277.69,683.59 1277.99,683.72 1278.28,683.86 1278.58,683.99 1278.88,684.12 1279.18,684.25 1279.48,684.38 1279.78,684.51 1280.07,684.65 1280.37,684.78 1280.67,684.91 1280.97,685.04 1281.27,685.17 1281.56,685.3 1281.86,685.44 1282.16,685.57 1282.46,685.7 1282.76,685.83 1283.06,685.96 1283.35,686.09 1283.65,686.23 1283.95,686.36 1284.25,686.49 1284.55,686.62 1284.84,686.75 1285.14,686.88 1285.44,687.02 1285.74,687.15 1286.04,687.28 1286.34,687.41 1286.63,687.54 1286.93,687.67 1287.23,687.8 1287.53,687.94 1287.83,688.07 1288.12,688.2 1288.42,688.33 1288.72,688.46 1289.02,688.59 1289.32,688.72 1289.61,688.86 1289.91,688.99 1290.21,689.12 1290.51,689.25 1290.81,689.38 1291.11,689.51 1291.4,689.64 1291.7,689.78 1292,689.91 1292.3,690.04 1292.6,690.17 1292.89,690.3 1293.19,690.43 1293.49,690.56 1293.79,690.7 1294.09,690.83 1294.39,690.96 1294.68,691.09 1294.98,691.22 1295.28,691.35 1295.58,691.48 1295.88,691.62 1296.17,691.75 1296.47,691.88 1296.77,692.01 1297.07,692.14 1297.37,692.27 1297.67,692.41 1297.96,692.54 1298.26,692.67 1298.56,692.8 1298.86,692.93 1299.16,693.06 1299.45,693.19 1299.75,693.33 1300.05,693.46 1300.35,693.59 1300.65,693.72 1300.94,693.85 1301.24,693.98 1301.54,694.12 1301.84,694.25 1302.14,694.38 1302.44,694.51 1302.73,694.64 1303.03,694.77 1303.33,694.91 1303.63,695.04 1303.93,695.17 1304.22,695.3 1304.52,695.43 1304.82,695.56 1305.12,695.7 1305.42,695.83 1305.72,695.96 1306.01,696.09 1306.31,696.22 1306.61,696.36 1306.91,696.49 1307.21,696.62 1307.5,696.75 1307.8,696.88 1308.1,697.02 1308.4,697.15 1308.7,697.28 1309,697.41 1309.29,697.54 1309.59,697.68 1309.89,697.81 1310.19,697.94 1310.49,698.07 1310.78,698.2 1311.08,698.34 1311.38,698.47 1311.68,698.6 1311.98,698.73 1312.27,698.87 1312.57,699 1312.87,699.13 1313.17,699.26 1313.47,699.4 1313.77,699.53 1314.06,699.66 1314.36,699.79 1314.66,699.93 1314.96,700.06 1315.26,700.19 1315.55,700.32 1315.85,700.46 1316.15,700.59 1316.45,700.72 1316.75,700.85 1317.05,700.99 1317.34,701.12 1317.64,701.25 1317.94,701.39 1318.24,701.52 1318.54,701.65 1318.83,701.78 1319.13,701.92 1319.43,702.05 1319.73,702.18 1320.03,702.32 1320.33,702.45 1320.62,702.58 1320.92,702.72 1321.22,702.85 1321.52,702.98 1321.82,703.12 1322.11,703.25 1322.41,703.38 1322.71,703.52 1323.01,703.65 1323.31,703.79 1323.61,703.92 1323.9,704.05 1324.2,704.19 1324.5,704.32 1324.8,704.45 1325.1,704.59 1325.39,704.72 1325.69,704.86 1325.99,704.99 1326.29,705.13 1326.59,705.26 1326.88,705.39 1327.18,705.53 1327.48,705.66 1327.78,705.8 1328.08,705.93 1328.38,706.07 1328.67,706.2 1328.97,706.34 1329.27,706.47 1329.57,706.61 1329.87,706.74 1330.16,706.87 1330.46,707.01 1330.76,707.15 1331.06,707.28 1331.36,707.42 1331.66,707.55 1331.95,707.69 1332.25,707.82 1332.55,707.96 1332.85,708.09 1333.15,708.23 1333.44,708.36 1333.74,708.5 1334.04,708.64 1334.34,708.77 1334.64,708.91 1334.94,709.04 1335.23,709.18 1335.53,709.32 1335.83,709.45 1336.13,709.59 1336.43,709.72 1336.72,709.86 1337.02,710 1337.32,710.13 1337.62,710.27 1337.92,710.41 1338.21,710.54 1338.51,710.68 1338.81,710.82 1339.11,710.96 1339.41,711.09 1339.71,711.23 1340,711.37 1340.3,711.5 1340.6,711.64 1340.9,711.78 1341.2,711.92 1341.49,712.06 1341.79,712.19 1342.09,712.33 1342.39,712.47 1342.69,712.61 1342.99,712.75 1343.28,712.88 1343.58,713.02 1343.88,713.16 1344.18,713.3 1344.48,713.44 1344.77,713.58 1345.07,713.72 1345.37,713.86 1345.67,714 1345.97,714.14 1346.27,714.27 1346.56,714.41 1346.86,714.55 1347.16,714.69 1347.46,714.83 1347.76,714.97 1348.05,715.11 1348.35,715.25 1348.65,715.39 1348.95,715.53 1349.25,715.68 1349.54,715.82 1349.84,715.96 1350.14,716.1 1350.44,716.24 1350.74,716.38 1351.04,716.52 1351.33,716.66 1351.63,716.8 1351.93,716.95 1352.23,717.09 1352.53,717.23 1352.82,717.37 1353.12,717.51 1353.42,717.66 1353.72,717.8 1354.02,717.94 1354.32,718.08 1354.61,718.23 1354.91,718.37 1355.21,718.51 1355.51,718.66 1355.81,718.8 1356.1,718.94 1356.4,719.09 1356.7,719.23 1357,719.38 1357.3,719.52 1357.6,719.67 1357.89,719.81 1358.19,719.95 1358.49,720.1 1358.79,720.24 1359.09,720.39 1359.38,720.53 1359.68,720.68 1359.98,720.83 1360.28,720.97 1360.58,721.12 1360.87,721.26 1361.17,721.41 1361.47,721.56 1361.77,721.7 1362.07,721.85 1362.37,722 1362.66,722.15 1362.96,722.29 1363.26,722.44 1363.56,722.59 1363.86,722.74 1364.15,722.88 1364.45,723.03 1364.75,723.18 1365.05,723.33 1365.35,723.48 1365.65,723.63 1365.94,723.78 1366.24,723.93 1366.54,724.08 1366.84,724.23 1367.14,724.38 1367.43,724.53 1367.73,724.68 1368.03,724.83 1368.33,724.98 1368.63,725.13 1368.93,725.28 1369.22,725.43 1369.52,725.58 1369.82,725.74 1370.12,725.89 1370.42,726.04 1370.71,726.19 1371.01,726.35 1371.31,726.5 1371.61,726.65 1371.91,726.81 1372.21,726.96 1372.5,727.11 1372.8,727.27 1373.1,727.42 1373.4,727.58 1373.7,727.73 1373.99,727.89 1374.29,728.04 1374.59,728.2 1374.89,728.35 1375.19,728.51 1375.48,728.67 1375.78,728.82 1376.08,728.98 1376.38,729.14 1376.68,729.29 1376.98,729.45 1377.27,729.61 1377.57,729.77 1377.87,729.92 1378.17,730.08 1378.47,730.24 1378.76,730.4 1379.06,730.56 1379.36,730.72 1379.66,730.88 1379.96,731.04 1380.26,731.2 1380.55,731.36 1380.85,731.52 1381.15,731.68 1381.45,731.84 1381.75,732.01 1382.04,732.17 1382.34,732.33 1382.64,732.49 1382.94,732.66 1383.24,732.82 1383.54,732.98 1383.83,733.15 1384.13,733.31 1384.43,733.48 1384.73,733.64 1385.03,733.8 1385.32,733.97 1385.62,734.14 1385.92,734.3 1386.22,734.47 1386.52,734.63 1386.81,734.8 1387.11,734.97 1387.41,735.13 1387.71,735.3 1388.01,735.47 1388.31,735.64 1388.6,735.81 1388.9,735.98 1389.2,736.15 1389.5,736.32 1389.8,736.48 1390.09,736.66 1390.39,736.83 1390.69,737 1390.99,737.17 1391.29,737.34 1391.59,737.51 1391.88,737.68 1392.18,737.86 1392.48,738.03 1392.78,738.2 1393.08,738.37 1393.37,738.55 1393.67,738.72 1393.97,738.9 1394.27,739.07 1394.57,739.25 1394.87,739.42 1395.16,739.6 1395.46,739.77 1395.76,739.95 1396.06,740.13 1396.36,740.31 1396.65,740.48 1396.95,740.66 1397.25,740.84 1397.55,741.02 1397.85,741.2 1398.14,741.38 1398.44,741.56 1398.74,741.74 1399.04,741.92 1399.34,742.1 1399.64,742.28 1399.93,742.46 1400.23,742.64 1400.53,742.82 1400.83,743.01 1401.13,743.19 1401.42,743.37 1401.72,743.56 1402.02,743.74 1402.32,743.92 1402.62,744.11 1402.92,744.29 1403.21,744.48 1403.51,744.67 1403.81,744.85 1404.11,745.04 1404.41,745.23 1404.7,745.41 1405,745.6 1405.3,745.79 1405.6,745.98 1405.9,746.17 1406.2,746.36 1406.49,746.55 1406.79,746.74 1407.09,746.93 1407.39,747.12 1407.69,747.31 1407.98,747.5 1408.28,747.69 1408.58,747.88 1408.88,748.08 1409.18,748.27 1409.47,748.46 1409.77,748.66 1410.07,748.85 1410.37,749.05 1410.67,749.24 1410.97,749.44 1411.26,749.63 1411.56,749.83 1411.86,750.02 1412.16,750.22 1412.46,750.42 1412.75,750.62 1413.05,750.81 1413.35,751.01 1413.65,751.21 1413.95,751.41 1414.25,751.61 1414.54,751.81 1414.84,752.01 1415.14,752.21 1415.44,752.41 1415.74,752.61 1416.03,752.82 1416.33,753.02 1416.63,753.22 1416.93,753.43 1417.23,753.63 1417.53,753.83 1417.82,754.04 1418.12,754.24 1418.42,754.45 1418.72,754.65 1419.02,754.86 1419.31,755.06 1419.61,755.27 1419.91,755.48 1420.21,755.69 1420.51,755.89 1420.8,756.1 1421.1,756.31 1421.4,756.52 1421.7,756.73 1422,756.94 1422.3,757.15 1422.59,757.36 1422.89,757.57 1423.19,757.78 1423.49,757.99 1423.79,758.21 1424.08,758.42 1424.38,758.63 1424.68,758.84 1424.98,759.06 1425.28,759.27 1425.58,759.49 1425.87,759.7 1426.17,759.92 1426.47,760.13 1426.77,760.35 1427.07,760.56 1427.36,760.78 1427.66,761 1427.96,761.22 1428.26,761.43 1428.56,761.65 1428.86,761.87 1429.15,762.09 1429.45,762.31 1429.75,762.53 1430.05,762.75 1430.35,762.97 1430.64,763.19 1430.94,763.41 1431.24,763.63 1431.54,763.85 1431.84,764.08 1432.14,764.3 1432.43,764.52 1432.73,764.75 1433.03,764.97 1433.33,765.19 1433.63,765.42 1433.92,765.64 1434.22,765.87 1434.52,766.1 1434.82,766.32 1435.12,766.55 1435.41,766.77 1435.71,767 1436.01,767.23 1436.31,767.46 1436.61,767.69 1436.91,767.91 1437.2,768.14 1437.5,768.37 1437.8,768.6 1438.1,768.83 1438.4,769.06 1438.69,769.29 1438.99,769.52 1439.29,769.76 1439.59,769.99 1439.89,770.22 1440.19,770.45 1440.48,770.69 1440.78,770.92 1441.08,771.15 1441.38,771.39 1441.68,771.62 1441.97,771.86 1442.27,772.09 1442.57,772.33 1442.87,772.56 1443.17,772.8 1443.47,773.03 1443.76,773.27 1444.06,773.51 1444.36,773.75 1444.66,773.98 1444.96,774.22 1445.25,774.46 1445.55,774.7 1445.85,774.94 1446.15,775.18 1446.45,775.42 1446.74,775.66 1447.04,775.9 1447.34,776.14 1447.64,776.38 1447.94,776.62 1448.24,776.86 1448.53,777.11 1448.83,777.35 1449.13,777.59 1449.43,777.84 1449.73,778.08 1450.02,778.32 1450.32,778.57 1450.62,778.81 1450.92,779.06 1451.22,779.3 1451.52,779.55 1451.81,779.79 1452.11,780.04 1452.41,780.29 1452.71,780.53 1453.01,780.78 1453.3,781.03 1453.6,781.28 1453.9,781.53 1454.2,781.77 1454.5,782.02 1454.8,782.27 1455.09,782.52 1455.39,782.77 1455.69,783.02 1455.99,783.27 1456.29,783.52 1456.58,783.78 1456.88,784.03 1457.18,784.28 1457.48,784.53 1457.78,784.78 1458.07,785.04 1458.37,785.29 1458.67,785.54 1458.97,785.8 1459.27,786.05 1459.57,786.31 1459.86,786.56 1460.16,786.82 1460.46,787.07 1460.76,787.33 1461.06,787.59 1461.35,787.84 1461.65,788.1 1461.95,788.36 1462.25,788.61 1462.55,788.87 1462.85,789.13 1463.14,789.39 1463.44,789.65 1463.74,789.91 1464.04,790.17 1464.34,790.43 1464.63,790.69 1464.93,790.95 1465.23,791.21 1465.53,791.47 1465.83,791.73 1466.13,791.99 1466.42,792.25 1466.72,792.52 1467.02,792.78 1467.32,793.04 1467.62,793.31 1467.91,793.57 1468.21,793.83 1468.51,794.1 1468.81,794.36 1469.11,794.63 1469.4,794.89 1469.7,795.16 1470,795.43 1470.3,795.69 1470.6,795.96 1470.9,796.23 1471.19,796.49 1471.49,796.76 1471.79,797.03 1472.09,797.3 1472.39,797.57 1472.68,797.84 1472.98,798.11 1473.28,798.38 1473.58,798.65 1473.88,798.92 1474.18,799.19 1474.47,799.46 1474.77,799.73 1475.07,800 1475.37,800.28 1475.67,800.55 1475.96,800.82 1476.26,801.09 1476.56,801.37 1476.86,801.64 1477.16,801.92 1477.46,802.19 1477.75,802.47 1478.05,802.74 1478.35,803.02 1478.65,803.29 1478.95,803.57 1479.24,803.85 1479.54,804.12 1479.84,804.4 1480.14,804.68 1480.44,804.96 1480.73,805.24 1481.03,805.51 1481.33,805.79 1481.63,806.07 1481.93,806.35 1482.23,806.63 1482.52,806.91 1482.82,807.19 1483.12,807.48 1483.42,807.76 1483.72,808.04 1484.01,808.32 1484.31,808.6 1484.61,808.89 1484.91,809.17 1485.21,809.46 1485.51,809.74 1485.8,810.02 1486.1,810.31 1486.4,810.59" fill="none" stroke="#00ff00" stroke-width="4" stroke-linejoin="round"/>
<path d="M741.3,783.82 742.19,783.82 743.09,783.82 743.98,783.82 744.88,783.82 745.77,783.82 746.67,783.82 747.56,783.82 748.46,783.82 749.35,783.82 750.24,783.82 751.14,783.82 752.03,783.82 752.93,783.82 753.82,783.82 754.72,783.82 755.61,783.82 756.51,783.82 757.4,783.82 758.3,783.82 759.19,783.82 760.08,783.82 760.98,783.82 761.87,783.82 762.77,783.82 763.66,783.82 764.56,783.82 765.45,783.82 766.35,783.82 767.24,783.82 768.13,783.82 769.03,783.82 769.92,783.82 770.82,783.82 771.71,783.82 772.61,783.82 773.5,783.82 774.4,783.82 775.29,783.82 776.18,783.82 777.08,783.82 777.97,783.82 778.87,783.82 779.76,783.82 780.66,783.82 781.55,783.82 782.45,783.82 783.34,783.82 784.23,783.82 785.13,783.82 786.02,783.82 786.92,783.82 787.81,783.82 788.71,783.82 789.6,783.82 790.5,783.82 791.39,783.82 792.29,783.82 793.18,783.82 794.07,783.82 794.97,783.82 795.86,783.82 796.76,783.82 797.65,783.82 798.55,783.82 799.44,783.82 800.34,783.82 801.23,783.82 802.12,783.82 803.02,783.82 803.91,783.82 804.81,783.82 805.7,783.82 806.6,783.82 807.49,783.82 808.39,783.82 809.28,783.82 810.17,783.82 811.07,783.82 811.96,783.82 812.86,783.82 813.75,783.82 814.65,783.82 815.54,783.82 816.44,783.82 817.33,783.82 818.23,783.82 819.12,783.82 820.01,783.82 820.91,783.82 821.8,783.82 822.7,783.82 823.59,783.82 824.49,783.82 825.38,783.82 826.28,783.82 827.17,783.82 828.06,783.82 828.96,783.82 829.85,783.82 830.75,783.82 831.64,783.82 832.54,783.82 833.43,783.82 834.33,783.82 835.22,783.82 836.11,783.82 837.01,783.82 837.9,783.82 838.8,783.82 839.69,783.82 840.59,783.82 841.48,783.82 842.38,783.82 843.27,783.82 844.16,783.82 845.06,783.82 845.95,783.82 846.85,783.82 847.74,783.82 848.64,783.82 849.53,783.82 850.43,783.82 851.32,783.82 852.22,783.82 853.11,783.82 854,783.82 854.9,783.82 855.79,783.82 856.69,783.82 857.58,783.82 858.48,783.82 859.37,783.82 860.27,783.82 861.16,783.82 862.05,783.82 862.95,783.82 863.84,783.82 864.74,783.82 865.63,783.82 866.53,783.82 867.42,783.82 868.32,783.82 869.21,783.82 870.1,783.82 871,783.82 871.89,783.82 872.79,783.82 873.68,783.82 874.58,783.83 875.47,783.83 876.37,783.83 877.26,783.83 878.16,783.83 879.05,783.83 879.94,783.83 880.84,783.83 881.73,783.83 882.63,783.83 883.52,783.83 884.42,783.83 885.31,783.83 886.21,783.83 887.1,783.83 887.99,783.83 888.89,783.83 889.78,783.83 890.68,783.83 891.57,783.83 892.47,783.83 893.36,783.83 894.26,783.83 895.15,783.83 896.04,783.83 896.94,783.83 897.83,783.83 898.73,783.83 899.62,783.83 900.52,783.83 901.41,783.83 902.31,783.83 903.2,783.83 904.09,783.83 904.99,783.83 905.88,783.83 906.78,783.83 907.67,783.83 908.57,783.83 909.46,783.83 910.36,783.83 911.25,783.83 912.15,783.83 913.04,783.84 913.93,783.84 914.83,783.84 915.72,783.84 916.62,783.84 917.51,783.84 918.41,783.84 919.3,783.84 920.2,783.84 921.09,783.84 921.98,783.84 922.88,783.84 923.77,783.84 924.67,783.84 925.56,783.84 926.46,783.84 927.35,783.84 928.25,783.84 929.14,783.84 930.03,783.84 930.93,783.84 931.82,783.84 932.72,783.84 933.61,783.84 934.51,783.85 935.4,783.85 936.3,783.85 937.19,783.85 938.09,783.85 938.98,783.85 939.87,783.85 940.77,783.85 941.66,783.85 942.56,783.85 943.45,783.85 944.35,783.85 945.24,783.85 946.14,783.85 947.03,783.85 947.92,783.85 948.82,783.85 949.71,783.85 950.61,783.86 951.5,783.86 952.4,783.86 953.29,783.86 954.19,783.86 955.08,783.86 955.97,783.86 956.87,783.86 957.76,783.86 958.66,783.86 959.55,783.86 960.45,783.86 961.34,783.86 962.24,783.87 963.13,783.87 964.02,783.87 964.92,783.87 965.81,783.87 966.71,783.87 967.6,783.87 968.5,783.87 969.39,783.87 970.29,783.87 971.18,783.87 972.08,783.87 972.97,783.88 973.86,783.88 974.76,783.88 975.65,783.88 976.55,783.88 977.44,783.88 978.34,783.88 979.23,783.88 980.13,783.88 981.02,783.89 981.91,783.89 982.81,783.89 983.7,783.89 984.6,783.89 985.49,783.89 986.39,783.89 987.28,783.89 988.18,783.9 989.07,783.9 989.96,783.9 990.86,783.9 991.75,783.9 992.65,783.9 993.54,783.9 994.44,783.91 995.33,783.91 996.23,783.91 997.12,783.91 998.02,783.91 998.91,783.91 999.8,783.92 1000.7,783.92 1001.59,783.92 1002.49,783.92 1003.38,783.92 1004.28,783.92 1005.17,783.93 1006.07,783.93 1006.96,783.93 1007.85,783.93 1008.75,783.93 1009.64,783.94 1010.54,783.94 1011.43,783.94 1012.33,783.94 1013.22,783.94 1014.12,783.95 1015.01,783.95 1015.9,783.95 1016.8,783.95 1017.69,783.95 1018.59,783.96 1019.48,783.96 1020.38,783.96 1021.27,783.96 1022.17,783.97 1023.06,783.97 1023.95,783.97 1024.85,783.97 1025.74,783.98 1026.64,783.98 1027.53,783.98 1028.43,783.99 1029.32,783.99 1030.22,783.99 1031.11,783.99 1032.01,784 1032.9,784 1033.79,784 1034.69,784.01 1035.58,784.01 1036.48,784.01 1037.37,784.02 1038.27,784.02 1039.16,784.02 1040.06,784.03 1040.95,784.03 1041.84,784.03 1042.74,784.04 1043.63,784.04 1044.53,784.05 1045.42,784.05 1046.32,784.05 1047.21,784.06 1048.11,784.06 1049,784.07 1049.89,784.07 1050.79,784.07 1051.68,784.08 1052.58,784.08 1053.47,784.09 1054.37,784.09 1055.26,784.1 1056.16,784.1 1057.05,784.11 1057.95,784.11 1058.84,784.12 1059.73,784.12 1060.63,784.13 1061.52,784.13 1062.42,784.14 1063.31,784.14 1064.21,784.15 1065.1,784.16 1066,784.16 1066.89,784.17 1067.78,784.17 1068.68,784.18 1069.57,784.19 1070.47,784.19 1071.36,784.2 1072.26,784.21 1073.15,784.21 1074.05,784.22 1074.94,784.23 1075.83,784.24 1076.73,784.24 1077.62,784.25 1078.52,784.26 1079.41,784.27 1080.31,784.27 1081.2,784.28 1082.1,784.29 1082.99,784.3 1083.88,784.31 1084.78,784.32 1085.67,784.33 1086.57,784.34 1087.46,784.35 1088.36,784.36 1089.25,784.37 1090.15,784.38 1091.04,784.39 1091.94,784.4 1092.83,784.41 1093.72,784.42 1094.62,784.43 1095.51,784.44 1096.41,784.45 1097.3,784.47 1098.2,784.48 1099.09,784.49 1099.99,784.51 1100.88,784.52 1101.77,784.53 1102.67,784.55 1103.56,784.56 1104.46,784.58 1105.35,784.59 1106.25,784.61 1107.14,784.63 1108.04,784.64 1108.93,784.66 1109.82,784.68 1110.72,784.7 1111.61,784.72 1112.51,784.74 1113.4,784.76 1114.3,784.78 1115.19,784.8 1116.09,784.82 1116.98,784.85 1117.88,784.87 1118.77,784.9 1119.66,784.92 1120.56,784.95 1121.45,784.98 1122.35,785.01 1123.24,785.04 1124.14,785.07 1125.03,785.11 1125.93,785.14 1126.82,785.15 1127.71,785.15 1128.61,785.15 1129.5,785.15 1130.4,785.15 1131.29,785.15 1132.19,785.15 1133.08,785.15 1133.98,785.15 1134.87,785.15 1135.76,785.15 1136.66,785.15 1137.55,785.15 1138.45,785.15 1138.73,785.15 1138.77,785.15 1138.83,785.15 1138.89,785.15 1138.96,785.15 1139.02,785.15 1139.06,785.15 1139.12,785.15 1139.18,785.15 1139.25,785.15 1139.31,785.15 1139.35,785.15 1139.41,785.15 1139.47,785.15 1139.54,785.15 1139.6,785.15 1139.64,785.15 1139.7,785.15 1139.76,785.15 1139.83,785.15 1139.89,785.15 1139.94,785.15 1139.99,785.15 1140.05,785.15 1140.12,785.15 1140.18,785.15 1140.24,785.15 1140.28,785.15 1140.34,785.15 1140.41,785.15 1140.47,785.15 1140.53,785.15 1140.57,785.15 1140.63,785.15 1140.7,785.15 1140.76,785.15 1140.81,785.15 1152.31,780.47 1154.51,777.13 1154.51,546.52 1230.28,546.52 1231.47,546.6 1232.67,546.69 1233.86,546.77 1235.05,546.86 1236.24,546.95 1237.44,547.04 1238.63,547.13 1239.82,547.23 1241.01,547.33 1242.21,547.42 1243.4,547.52 1244.59,547.63 1245.79,547.73 1246.98,547.84 1248.17,547.95 1249.36,548.06 1250.56,548.17 1251.75,548.29 1252.94,548.4 1254.13,548.52 1255.33,548.65 1256.52,548.77 1257.71,548.9 1258.9,549.03 1260.1,549.17 1261.29,549.3 1262.48,549.44 1263.68,549.58 1264.87,549.73 1266.06,549.88 1267.25,550.03 1268.45,550.18 1269.64,550.34 1270.83,550.5 1272.02,550.67 1273.22,550.84 1274.41,551.01 1275.6,551.19 1276.79,551.36 1277.99,551.55 1279.18,551.74 1280.37,551.93 1281.56,552.12 1282.76,552.32 1283.95,552.53 1285.14,552.74 1286.34,552.95 1287.53,553.17 1288.72,553.39 1289.91,553.62 1291.11,553.85 1292.3,554.09 1293.49,554.33 1294.68,554.58 1295.88,554.83 1297.07,555.09 1298.26,555.35 1299.45,555.62 1300.65,555.9 1301.84,556.18 1303.03,556.47 1304.22,556.76 1305.42,557.06 1306.61,557.37 1307.8,557.68 1309,558 1310.19,558.33 1311.38,558.66 1312.57,559 1313.77,559.35 1314.96,559.71 1316.15,560.07 1317.34,560.44 1318.54,560.82 1319.73,561.21 1320.92,561.6 1322.11,562.01 1323.31,562.42 1324.5,562.84 1325.69,563.27 1326.88,563.71 1328.08,564.15 1329.27,564.61 1330.46,565.08 1331.66,565.55 1332.85,566.04 1334.04,566.53 1335.23,567.04 1336.43,567.55 1337.62,568.08 1338.81,568.61 1340,569.16 1341.2,569.72 1342.39,570.29 1343.58,570.87 1344.77,571.46 1345.97,572.07 1347.16,572.68 1348.35,573.31 1349.54,573.95 1350.74,574.6 1351.93,575.26 1353.12,575.94 1354.32,576.63 1355.51,577.33 1356.7,578.05 1357.89,578.77 1359.09,579.51 1360.28,580.27 1361.47,581.04 1362.66,581.82 1363.86,582.61 1365.05,583.42 1366.24,584.24 1367.43,585.08 1368.63,585.93 1369.82,586.8 1371.01,587.67 1372.21,588.57 1373.4,589.47 1374.59,590.39 1375.78,591.33 1376.98,592.28 1378.17,593.24 1379.36,594.22 1380.55,595.21 1381.75,596.22 1382.94,597.24 1384.13,598.27 1385.32,599.32 1386.52,600.38 1387.71,601.46 1388.9,602.55 1390.09,603.65 1391.29,604.77 1392.48,605.9 1393.67,607.04 1394.87,608.2 1396.06,609.37 1397.25,610.55 1398.44,611.74 1399.64,612.95 1400.83,614.17 1402.02,615.4 1403.21,616.64 1404.41,617.89 1405.6,619.16 1406.79,620.43 1407.98,621.72 1409.18,623.02 1410.37,624.32 1411.56,625.64 1412.75,626.97 1413.95,628.31 1415.14,629.66 1416.33,631.01 1417.53,632.38 1418.72,633.75 1419.91,635.14 1421.1,636.53 1422.3,637.93 1423.49,639.34 1424.68,640.76 1425.87,642.19 1427.07,643.62 1428.26,645.07 1429.45,646.52 1430.64,647.98 1431.84,649.44 1433.03,650.92 1434.22,652.4 1435.41,653.89 1436.61,655.39 1437.8,656.89 1438.99,658.41 1440.19,659.93 1441.38,661.46 1442.57,663 1443.76,664.55 1444.96,666.11 1446.15,667.67 1447.34,669.24 1448.53,670.83 1449.73,672.42 1450.92,674.02 1452.11,675.63 1453.3,677.25 1454.5,678.88 1455.69,680.53 1456.88,682.18 1458.07,683.84 1459.27,685.52 1460.46,687.21 1461.65,688.9 1462.85,690.62 1464.04,692.34 1465.23,694.07 1466.42,695.82 1467.62,697.59 1468.81,699.36 1470,701.15 1471.19,702.96 1472.39,704.78 1473.58,706.62 1474.77,708.47 1475.96,710.33 1477.16,712.22 1478.35,714.12 1479.54,716.03 1480.73,717.97 1481.93,719.92 1483.12,721.88 1484.31,723.87 1485.51,725.88" fill="none" stroke="#00ff00" stroke-width="6.2" stroke-dasharray="0 8.8" stroke-linecap="round" stroke-linejoin="round"/>
<path d="M741.3,807.96 744.28,806.68 747.26,805.4 750.24,804.11 753.23,802.83 756.21,801.55 759.19,800.26 762.17,798.98 765.15,797.7 768.13,796.41 771.12,795.13 774.1,793.85 777.08,792.56 780.06,791.28 783.04,790 786.02,788.72 789.01,787.43 791.99,786.15 794.97,784.87 797.95,783.58 800.93,782.3 803.91,781.02 806.9,779.73 809.88,778.45 812.86,777.17 815.84,775.88 818.82,774.6 821.8,773.32 824.78,772.03 827.77,770.75 830.75,769.47 833.73,768.18 836.71,766.9 839.69,765.62 842.67,764.33 845.66,763.05 848.64,761.77 851.62,760.48 854.6,759.2 857.58,757.92 860.56,756.63 863.55,755.35 866.53,754.07 869.51,752.78 872.49,751.5 875.47,750.22 878.45,748.94 881.43,747.65 884.42,746.37 887.4,745.09 890.38,743.8 893.36,742.52 896.34,741.24 899.32,739.95 902.31,738.67 905.29,737.39 908.27,736.1 911.25,734.82 914.23,733.54 917.21,732.25 920.2,730.97 923.18,729.69 926.16,728.4 929.14,727.12 932.12,725.84 935.1,724.55 938.09,723.27 941.07,721.99 944.05,720.7 947.03,719.42 950.01,718.14 952.99,716.85 955.97,715.57 958.96,714.29 961.94,713.01 964.92,711.72 967.9,710.44 970.88,709.16 973.86,707.87 976.85,706.59 979.83,705.31 982.81,704.02 985.79,702.74 988.77,701.46 991.75,700.17 994.74,698.89 997.72,697.61 1000.7,696.32 1003.68,695.04 1006.66,693.76 1009.64,692.47 1012.62,691.19 1015.61,689.91 1018.59,688.62 1021.57,687.34 1024.55,686.06 1027.53,684.77 1030.51,683.49 1033.5,682.21 1036.48,680.92 1039.46,679.64 1042.44,678.36 1045.42,677.07 1048.4,675.79 1051.39,674.51 1054.37,673.23 1057.35,671.94 1060.33,670.66 1063.31,669.38 1066.29,668.09 1069.28,666.81 1072.26,665.53 1075.24,664.24 1078.22,662.96 1081.2,661.68 1084.18,660.39 1087.16,659.11 1090.15,657.83 1093.13,656.54 1096.11,655.26 1099.09,653.98 1102.07,652.69 1105.05,651.41 1108.04,650.13 1111.02,648.84 1114,647.56 1116.98,646.28 1119.96,644.99 1122.94,643.71 1125.93,642.43 1128.91,641.14 1131.89,639.86 1134.87,638.58 1137.85,637.3 1138.81,636.88 1139.02,636.79 1139.2,636.71 1139.39,636.63 1139.6,636.54 1139.78,636.46 1139.97,636.38 1140.18,636.29 1140.36,636.21 1140.55,636.13 1140.76,636.04 1140.94,635.96 1141.13,635.88 1141.34,635.79 1141.52,635.71 1141.73,635.63 1141.92,635.55 1142.1,635.46 1142.31,635.38 1142.5,635.3 1142.68,635.22 1142.89,635.13 1143.08,635.05 1143.26,634.97 1143.47,634.88 1143.66,634.8 1143.84,634.72 1144.05,634.63 1144.24,634.55 1144.42,634.47 1144.63,634.38 1144.82,634.3 1145.01,634.22 1145.21,634.13 1145.4,634.05 1145.6,633.96 1145.79,633.88 1145.98,633.8 1146.18,633.71 1146.37,633.63 1146.56,633.55 1146.76,633.46 1146.95,633.38 1147.14,633.3 1147.34,633.21 1147.53,633.13 1147.72,633.05 1147.92,632.96 1148.11,632.88 1148.3,632.8 1148.5,632.71 1148.69,632.63 1148.88,632.55 1149.08,632.46 1149.27,632.38 1149.48,632.29 1149.66,632.21 1149.85,632.13 1150.06,632.04 1150.24,631.96 1150.43,631.88 1150.64,631.79 1150.82,631.71 1151.01,631.63 1151.22,631.54 1151.4,631.46 1151.59,631.38 1151.8,631.29 1151.98,631.21 1152.17,631.13 1152.38,631.04 1152.56,630.96 1152.76,630.88 1152.96,630.79 1153.14,630.71 1153.35,630.62 1153.54,630.54 1153.72,630.46 1153.93,630.38 1154.12,630.3 1154.3,630.21 1154.51,630.13 1154.7,630.05 1154.88,629.97 1155.09,629.88 1155.28,629.8 1155.46,629.72 1155.67,629.63 1155.86,629.55 1156.04,629.47 1156.25,629.38 1156.44,629.3 1156.64,629.21 1156.83,629.13 1157.02,629.05 1157.22,628.96 1157.41,628.88 1157.6,628.8 1157.8,628.71 1157.99,628.63 1158.18,628.55 1158.38,628.46 1158.57,628.38 1158.76,628.3 1158.96,628.21 1159.15,628.13 1159.34,628.05 1159.54,627.96 1159.73,627.88 1159.92,627.8 1160.12,627.71 1160.31,627.63 1160.51,627.54 1160.7,627.46 1160.89,627.38 1161.1,627.29 1161.28,627.21 1161.47,627.13 1161.68,627.04 1161.86,626.96 1162.05,626.88 1162.26,626.79 1162.44,626.71 1162.63,626.63 1162.84,626.54 1163.02,626.46 1163.21,626.38 1163.42,626.29 1163.6,626.21 1163.79,626.13 1164,626.04 1164.18,625.96 1164.39,625.87 1164.58,625.79 1164.76,625.71 1164.97,625.62 1165.16,625.54 1165.34,625.46 1165.55,625.37 1165.74,625.29 1165.92,625.21 1166.13,625.13 1166.32,625.04 1166.5,624.96 1166.71,624.88 1166.9,624.8 1167.08,624.72 1167.29,624.63 1167.47,624.55 1167.67,624.46 1167.87,624.38 1168.05,624.3 1168.26,624.21 1168.45,624.13 1168.63,624.05 1168.84,623.96 1169.03,623.88 1169.21,623.8 1169.42,623.71 1169.61,623.63 1170.65,623.18 1173.63,621.9 1176.61,620.61 1179.59,619.33 1182.58,618.05 1185.56,616.76 1188.54,615.48 1191.52,614.2 1194.5,612.91 1197.48,611.63 1200.47,610.35 1203.45,609.06 1206.43,607.78 1209.41,606.5 1212.39,605.21 1215.37,603.93 1218.35,602.65 1221.34,601.36 1224.32,600.08 1227.3,598.8 1230.28,597.52 1233.26,596.23 1236.24,594.95 1239.23,593.67 1242.21,592.38 1245.19,591.1 1248.17,589.82 1251.15,588.53 1254.13,587.25 1257.12,585.97 1260.1,584.68 1263.08,583.4 1266.06,582.12 1269.04,580.83 1272.02,579.55 1275.01,578.27 1277.99,576.98 1280.97,575.7 1283.95,574.42 1286.93,573.13 1289.91,571.85 1292.89,570.57 1295.88,569.28 1298.86,568 1301.84,566.72 1304.82,565.43 1307.8,564.15 1310.78,562.87 1313.77,561.59 1316.75,560.3 1319.73,559.02 1322.71,557.74 1325.69,556.45 1328.67,555.17 1331.66,553.89 1334.64,552.6 1337.62,551.32 1340.6,550.04 1343.58,548.75 1346.56,547.47 1349.54,546.19 1352.53,544.9 1355.51,543.62 1358.49,542.34 1361.47,541.05 1364.45,539.77 1367.43,538.49 1370.42,537.2 1373.4,535.92 1376.38,534.64 1379.36,533.35 1382.34,532.07 1385.32,530.79 1388.31,529.5 1391.29,528.22 1394.27,526.94 1397.25,525.65 1400.23,524.37 1403.21,523.09 1406.2,521.81 1409.18,520.52 1412.16,519.24 1415.14,517.96 1418.12,516.67 1421.1,515.39 1424.08,514.11 1427.07,512.82 1430.05,511.54 1433.03,510.26 1436.01,508.97 1438.99,507.69 1441.97,506.41 1444.96,505.12 1447.94,503.84 1450.92,502.56 1453.9,501.27 1456.88,499.99 1459.86,498.71 1462.85,497.42 1465.83,496.14 1468.81,494.86 1471.79,493.57 1474.77,492.29 1477.75,491.01 1480.73,489.72 1483.72,488.44" fill="none" stroke="#cb9471" stroke-width="4.4"/>
<path d="M741.3,783.82 1486.4,783.82" fill="none" stroke="#cb9471" stroke-width="6.2" stroke-dasharray="0 8.8" stroke-linecap="round"/>
</g></svg>
</body></html>
